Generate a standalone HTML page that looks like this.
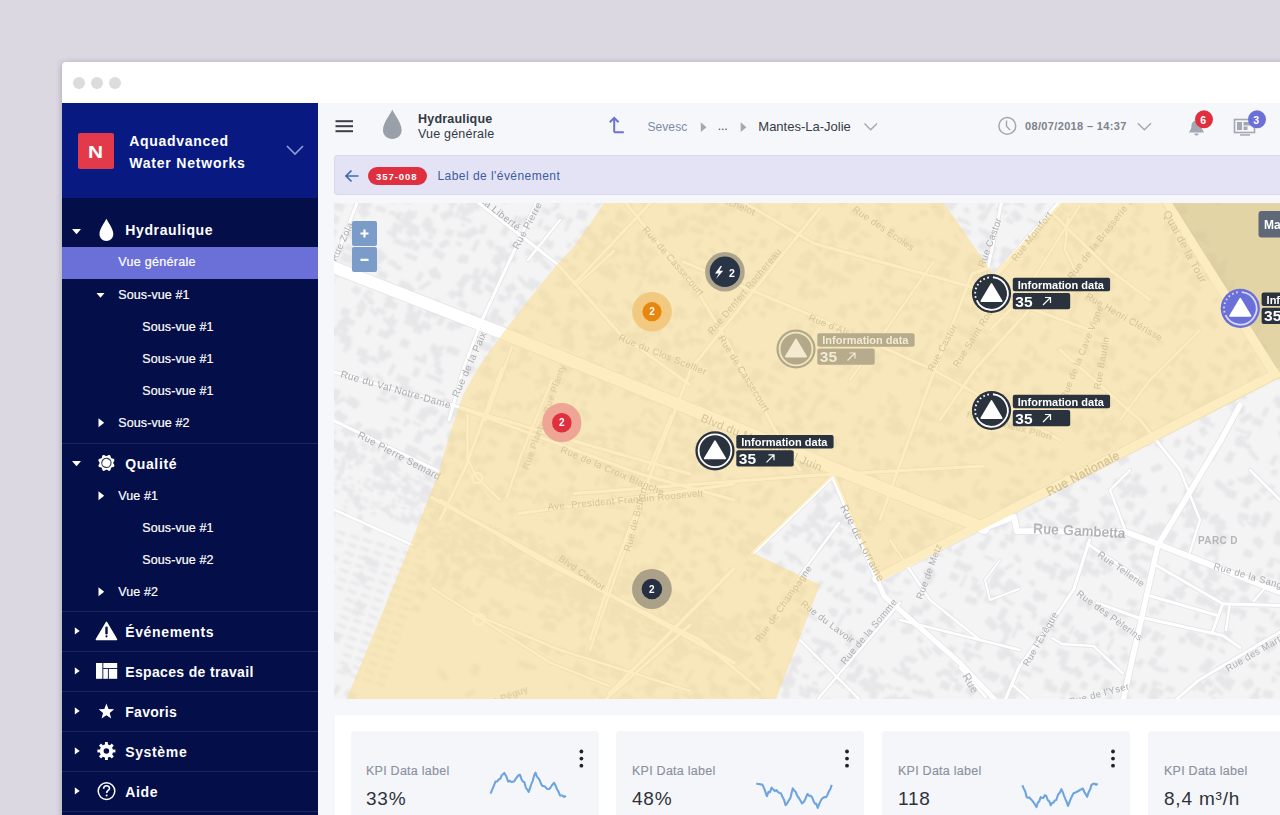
<!DOCTYPE html>
<html><head><meta charset="utf-8">
<style>
*{margin:0;padding:0;box-sizing:border-box}
html,body{width:1280px;height:815px;overflow:hidden;background:#dbd8e2;font-family:"Liberation Sans",sans-serif}
.abs{position:absolute}
#win{position:absolute;left:62px;top:62px;width:1240px;height:800px;background:#fff;border-radius:4px;box-shadow:0 1px 6px rgba(60,50,90,.35)}
.dot{position:absolute;top:15px;width:12px;height:12px;border-radius:50%;background:#dcdcdc}
#side{position:absolute;left:62px;top:103px;width:256px;height:712px;background:#040e48;color:#fff}
#sidehead{position:absolute;left:0;top:0;width:256px;height:95px;background:#081a82}
#main{position:absolute;left:318px;top:103px;width:962px;height:712px;background:#f5f7fa}
.t{position:absolute;white-space:nowrap;line-height:1}
.big{left:63.2px;font-size:14px;font-weight:bold;letter-spacing:.65px}
.sm{-webkit-text-stroke:.2px #fff;font-size:12.5px;letter-spacing:.1px;margin-top:1.2px}
.kc{top:627.5px;width:248px;height:120px;background:#f5f6f9;border-radius:4px}
.kl{top:661.7px;font-size:12.5px;color:#8a929f;letter-spacing:.25px;-webkit-text-stroke:.15px #8a929f}
.kv{top:685.8px;font-size:19px;color:#2e333b;letter-spacing:.8px}
.sep{position:absolute;left:0;width:256px;height:1px;background:#1c2660}
</style></head>
<body>
<div id="win">
  <div class="dot" style="left:11px"></div>
  <div class="dot" style="left:29px"></div>
  <div class="dot" style="left:47px"></div>
</div>
<div id="side">
  <div id="sidehead">
    <div class="abs" style="left:16px;top:30px;width:36px;height:36px;background:#e23a4b;border-radius:2px"></div>
    <div class="t" style="left:26px;top:42px;font-size:16.7px;font-weight:bold;transform:scaleX(1.25);transform-origin:0 0">N</div>
    <div class="t" style="left:67.2px;top:31px;font-size:14px;font-weight:bold;letter-spacing:.7px">Aquadvanced</div>
    <div class="t" style="left:67.2px;top:53px;font-size:14px;font-weight:bold;letter-spacing:.8px">Water Networks</div>
    <svg class="abs" style="left:224px;top:42px" width="18" height="11" viewBox="0 0 18 11"><path d="M1 1 L9 9 L17 1" fill="none" stroke="#8b9fd9" stroke-width="1.6"/></svg>
  </div>
  <div class="sep" style="top:340px"></div>
  <div class="abs" style="left:0;top:144px;width:256px;height:32px;background:#6b70d8"></div>
  <div class="t big" style="top:120.4px">Hydraulique</div>
  <div class="t sm" style="left:56.25px;top:152.92px;letter-spacing:.3px;margin-top:0">Vue générale</div>
  <div class="t sm" style="left:56.25px;top:184.92px">Sous-vue #1</div>
  <div class="t sm" style="left:80.3px;top:216.92px">Sous-vue #1</div>
  <div class="t sm" style="left:80.3px;top:248.92px">Sous-vue #1</div>
  <div class="t sm" style="left:80.3px;top:280.92px">Sous-vue #1</div>
  <div class="t sm" style="left:56.25px;top:312.92px">Sous-vue #2</div>
  <div class="t big" style="top:354.15px">Qualité</div>
  <div class="t sm" style="left:56.25px;top:385.42px">Vue #1</div>
  <div class="t sm" style="left:80.3px;top:417.42px">Sous-vue #1</div>
  <div class="t sm" style="left:80.3px;top:449.42px">Sous-vue #2</div>
  <div class="t sm" style="left:56.25px;top:481.42px">Vue #2</div>
  <div class="sep" style="top:508px"></div>
  <div class="t big" style="top:522.15px">Événements</div>
  <div class="sep" style="top:548px"></div>
  <div class="t big" style="top:562.15px;letter-spacing:.35px">Espaces de travail</div>
  <div class="sep" style="top:588px"></div>
  <div class="t big" style="top:602.15px;letter-spacing:.3px">Favoris</div>
  <div class="sep" style="top:628px"></div>
  <div class="t big" style="top:642.15px">Système</div>
  <div class="sep" style="top:668px"></div>
  <div class="t big" style="top:682.15px">Aide</div>
  <div class="sep" style="top:708px"></div>
  <svg class="abs" style="left:0;top:0" width="256" height="712" viewBox="62 103 256 712">
    <g fill="#fff">
      <!-- carets down -->
      <path d="M72 229 L81 229 L76.5 234.2 Z"/>
      <path d="M96.5 293 L104.5 293 L100.5 297.7 Z"/>
      <path d="M72 461 L81 461 L76.5 466.2 Z"/>
      <!-- carets right -->
      <path d="M98.5 418.3 L98.5 427.3 L104.2 422.8 Z"/>
      <path d="M98.5 491.3 L98.5 500.3 L104.2 495.8 Z"/>
      <path d="M98.5 587.3 L98.5 596.3 L104.2 591.8 Z"/>
      <path d="M74.8 627.2 L74.8 634.6 L79.7 630.9 Z"/>
      <path d="M74.8 667.2 L74.8 674.6 L79.7 670.9 Z"/>
      <path d="M74.8 707.2 L74.8 714.6 L79.7 710.9 Z"/>
      <path d="M74.8 747.2 L74.8 754.6 L79.7 750.9 Z"/>
      <path d="M74.8 787.2 L74.8 794.6 L79.7 790.9 Z"/>
      <!-- drop -->
      <path d="M106.4 218.8 C104 223.5 99.5 229 99.5 234 C99.5 238 102.6 241 106.4 241 C110.2 241 113.3 238 113.3 234 C113.3 229 108.8 223.5 106.4 218.8 Z"/>
      <!-- warning -->
      <path d="M106.5 622.3 L116.5 639.5 L96.4 639.5 Z" stroke="#fff" stroke-width="1.5" stroke-linejoin="round"/>
      <!-- layout -->
      <rect x="96" y="663" width="6.4" height="15.8"/>
      <rect x="103.3" y="663" width="13.9" height="5.1"/>
      <rect x="103.3" y="669" width="4.6" height="9.8"/>
      <rect x="108.8" y="669" width="8.4" height="9.8"/>
      <!-- star -->
      <path d="M106.40 703.60 L108.46 708.97 L114.20 709.27 L109.73 712.88 L111.22 718.43 L106.40 715.30 L101.58 718.43 L103.07 712.88 L98.60 709.27 L104.34 708.97 Z"/>
    </g>
    <path d="M106.5 627.8 L106.5 633.2" stroke="#040e48" stroke-width="2.4" stroke-linecap="round"/>
    <circle cx="106.5" cy="636.3" r="1.1" fill="#040e48"/>
    <!-- quality gear (hollow) -->
    <g transform="translate(106.4 462.9) rotate(22)">
      <path d="M0.00 -8.60 L0.73 -8.36 L1.36 -7.74 L1.88 -7.00 L2.34 -6.44 L2.90 -6.21 L3.63 -6.28 L4.51 -6.44 L5.39 -6.43 L6.08 -6.08 L6.43 -5.39 L6.44 -4.51 L6.28 -3.62 L6.21 -2.90 L6.44 -2.34 L7.00 -1.88 L7.74 -1.36 L8.36 -0.73 L8.60 0.00 L8.36 0.73 L7.74 1.36 L7.00 1.88 L6.44 2.34 L6.21 2.90 L6.28 3.62 L6.44 4.51 L6.43 5.39 L6.08 6.08 L5.39 6.43 L4.51 6.44 L3.63 6.28 L2.90 6.21 L2.34 6.44 L1.88 7.00 L1.36 7.74 L0.73 8.36 L0.00 8.60 L-0.73 8.36 L-1.36 7.74 L-1.88 7.00 L-2.34 6.44 L-2.90 6.21 L-3.62 6.28 L-4.51 6.44 L-5.39 6.43 L-6.08 6.08 L-6.43 5.39 L-6.44 4.51 L-6.28 3.63 L-6.21 2.90 L-6.44 2.34 L-7.00 1.88 L-7.74 1.36 L-8.36 0.73 L-8.60 0.00 L-8.36 -0.73 L-7.74 -1.36 L-7.00 -1.88 L-6.44 -2.34 L-6.21 -2.90 L-6.28 -3.63 L-6.44 -4.51 L-6.43 -5.39 L-6.08 -6.08 L-5.39 -6.43 L-4.51 -6.44 L-3.63 -6.28 L-2.90 -6.21 L-2.34 -6.44 L-1.88 -7.00 L-1.36 -7.74 L-0.73 -8.36 Z" fill="#fff"/>
      <circle r="4.6" fill="none" stroke="#3a3f58" stroke-width="1.2"/>
    </g>
    <!-- system cog -->
    <g transform="translate(106.4 751)">
      <circle r="4.9" fill="none" stroke="#fff" stroke-width="3.6"/>
      <g stroke="#fff" stroke-width="2.9">
        <path d="M0 -9 L0 9"/><path d="M-9 0 L9 0"/><path d="M-6.4 -6.4 L6.4 6.4"/><path d="M-6.4 6.4 L6.4 -6.4"/>
      </g>
      <circle r="2.8" fill="#040e48"/>
    </g>
    <!-- help -->
    <circle cx="106.5" cy="791.1" r="8.3" fill="none" stroke="#fff" stroke-width="1.5"/>
    <path d="M103.6 788.8 C103.6 786.9 104.9 785.7 106.6 785.7 C108.3 785.7 109.5 786.9 109.5 788.4 C109.5 790.4 106.6 790.6 106.6 792.9" fill="none" stroke="#fff" stroke-width="1.6"/>
    <circle cx="106.6" cy="795.6" r="1" fill="#fff"/>
  </svg>
</div>
<div id="main">
  <!-- toolbar (coords: page x-318, y-103) -->
  <svg class="abs" style="left:0;top:0" width="962" height="100" viewBox="318 103 962 100">
    <g fill="#3b3f47">
      <rect x="335.5" y="120.2" width="17.5" height="2"/>
      <rect x="335.5" y="125.2" width="17.5" height="2"/>
      <rect x="335.5" y="130.2" width="17.5" height="2"/>
    </g>
    <path d="M392.3 109.6 C390 115 383 123 383 130 C383 135.3 387.2 139 392.3 139 C397.4 139 401.6 135.3 401.6 130 C401.6 123 394.6 115 392.3 109.6 Z" fill="#9aa0aa"/>
    <!-- up arrow icon -->
    <path d="M614.2 132.3 L623.8 132.3 M609.8 122.3 L614.2 117.9 L618.6 122.3 M614.2 118 L614.2 132.3" fill="none" stroke="#6b70d8" stroke-width="2" stroke-linejoin="miter"/>
    <path d="M700.8 122.3 L706.5 127.2 L700.8 132 Z" fill="#a3a8b2"/>
    <path d="M740.7 122.3 L746.4 127.2 L740.7 132 Z" fill="#a3a8b2"/>
    <path d="M864.5 123.5 L870.7 129.8 L877 123.5" fill="none" stroke="#a3a8b2" stroke-width="1.4"/>
    <!-- clock -->
    <circle cx="1007.3" cy="125.9" r="8.4" fill="none" stroke="#a2a7b0" stroke-width="1.5"/>
    <path d="M1006.5 120.5 L1006.5 126.3 L1010 130" fill="none" stroke="#a2a7b0" stroke-width="1.4"/>
    <path d="M1137.8 123.3 L1144.4 129.8 L1151 123.3" fill="none" stroke="#a3a8b2" stroke-width="1.4"/>
    <!-- bell -->
    <path d="M1196.5 120.5 C1192.5 120.5 1191.3 124 1191.3 128 L1189 132.5 L1204 132.5 L1201.7 128 C1201.7 124 1200.5 120.5 1196.5 120.5 Z" fill="#a3a8b2"/>
    <path d="M1194.3 133.5 C1194.5 135 1195.5 135.5 1196.5 135.5 C1197.5 135.5 1198.5 135 1198.7 133.5 Z" fill="#a3a8b2"/>
    <circle cx="1204" cy="119.3" r="9" fill="#e0303f"/>
    <!-- monitor -->
    <rect x="1234.5" y="119.5" width="20" height="13" fill="none" stroke="#a3a8b2" stroke-width="1.6"/>
    <rect x="1237" y="122" width="5" height="8" fill="#a3a8b2"/>
    <rect x="1243.5" y="122" width="8.5" height="3.5" fill="#a3a8b2"/>
    <rect x="1243.5" y="126.5" width="4" height="3.5" fill="#a3a8b2"/>
    <rect x="1240" y="134.2" width="10" height="1.5" fill="#a3a8b2"/>
    <circle cx="1257" cy="119.3" r="9" fill="#6b70d8"/>
  </svg>
  <div class="t" style="left:100px;top:10.3px;font-size:12.5px;font-weight:bold;color:#333944;letter-spacing:.2px">Hydraulique</div>
  <div class="t" style="left:100px;top:24.8px;font-size:12.5px;color:#333944;letter-spacing:.2px">Vue générale</div>
  <div class="t" style="left:329.4px;top:18px;font-size:12px;color:#7e8ba3;letter-spacing:.1px">Sevesc</div>
  <div class="t" style="left:399.7px;top:17.4px;font-size:12px;color:#3f4550">...</div>
  <div class="t" style="left:440.3px;top:17.0px;font-size:13px;color:#353b46">Mantes-La-Jolie</div>
  <div class="t" style="left:707px;top:18.2px;font-size:11px;font-weight:bold;color:#7d828c;letter-spacing:.35px">08/07/2018 – 14:37</div>
  <div class="t" style="left:882.3px;top:11.9px;font-size:10.5px;font-weight:bold;color:#fff">6</div>
  <div class="t" style="left:935.3px;top:11.9px;font-size:10.5px;font-weight:bold;color:#fff">3</div>
  <!-- event bar -->
  <div class="abs" style="left:16px;top:52px;width:960px;height:40px;background:#e4e3f6;border:1px solid #d8d8ee;border-radius:3px"></div>
  <svg class="abs" style="left:0;top:52px" width="300" height="40" viewBox="318 155 300 40">
    <path d="M346.5 176 L358.5 176 M351.5 170.5 L346 176 L351.5 181.5" fill="none" stroke="#3d6bb5" stroke-width="1.7"/>
  </svg>
  <div class="abs" style="left:50px;top:64px;width:59px;height:18px;background:#e0303f;border-radius:9px"></div>
  <div class="t" style="left:58px;top:68.5px;font-size:9.5px;font-weight:bold;color:#fff;letter-spacing:.95px">357-008</div>
  <div class="t" style="left:119.5px;top:66.5px;font-size:12px;color:#3a5d9c;letter-spacing:.45px">Label de l'événement</div>
  <!--MAP--><div class="abs" style="left:16px;top:100px;width:946px;height:496px;overflow:hidden">
<svg width="946" height="496" viewBox="334 203 946 496" style="display:block">
<rect x="334" y="203" width="946" height="496" fill="#f4f4f5"/>
<defs><filter id="soft" x="-5%" y="-5%" width="110%" height="110%"><feGaussianBlur stdDeviation="0.8"/></filter><filter id="soft2" x="-5%" y="-5%" width="110%" height="110%"><feGaussianBlur stdDeviation="0.45"/></filter><filter id="soft3" x="-5%" y="-5%" width="110%" height="110%"><feGaussianBlur stdDeviation="0.3"/></filter></defs>
<g filter="url(#soft)">
<g fill="#e7e7e9"><rect x="637" y="271" width="11" height="3" transform="rotate(21 637 271)"/><rect x="677" y="223" width="9" height="3" transform="rotate(50 677 223)"/><rect x="728" y="317" width="10" height="3" transform="rotate(21 728 317)"/><rect x="1239" y="518" width="10" height="3" transform="rotate(50 1239 518)"/><rect x="372" y="307" width="10" height="4" transform="rotate(50 372 307)"/><rect x="463" y="254" width="7" height="8" transform="rotate(21 463 254)"/><rect x="424" y="488" width="6" height="4" transform="rotate(21 424 488)"/><rect x="869" y="512" width="9" height="6" transform="rotate(35 869 512)"/><rect x="774" y="669" width="8" height="4" transform="rotate(21 774 669)"/><rect x="999" y="319" width="10" height="6" transform="rotate(35 999 319)"/><rect x="1029" y="342" width="14" height="4" transform="rotate(50 1029 342)"/><rect x="483" y="370" width="13" height="6" transform="rotate(21 483 370)"/><rect x="1063" y="489" width="13" height="5" transform="rotate(35 1063 489)"/><rect x="898" y="492" width="9" height="8" transform="rotate(-62 898 492)"/><rect x="782" y="536" width="5" height="7" transform="rotate(-30 782 536)"/><rect x="599" y="392" width="11" height="3" transform="rotate(-30 599 392)"/><rect x="667" y="508" width="9" height="4" transform="rotate(-62 667 508)"/><rect x="449" y="321" width="8" height="8" transform="rotate(21 449 321)"/><rect x="485" y="400" width="7" height="4" transform="rotate(50 485 400)"/><rect x="1159" y="337" width="8" height="5" transform="rotate(50 1159 337)"/><rect x="494" y="313" width="6" height="6" transform="rotate(21 494 313)"/><rect x="578" y="195" width="8" height="5" transform="rotate(35 578 195)"/><rect x="1245" y="549" width="9" height="7" transform="rotate(21 1245 549)"/><rect x="765" y="642" width="14" height="7" transform="rotate(50 765 642)"/><rect x="709" y="396" width="9" height="5" transform="rotate(-62 709 396)"/><rect x="389" y="301" width="6" height="5" transform="rotate(21 389 301)"/><rect x="423" y="485" width="9" height="9" transform="rotate(21 423 485)"/><rect x="392" y="300" width="8" height="7" transform="rotate(35 392 300)"/><rect x="906" y="438" width="5" height="6" transform="rotate(-30 906 438)"/><rect x="788" y="354" width="5" height="7" transform="rotate(-62 788 354)"/><rect x="786" y="550" width="9" height="4" transform="rotate(35 786 550)"/><rect x="466" y="473" width="4" height="6" transform="rotate(21 466 473)"/><rect x="997" y="328" width="8" height="4" transform="rotate(-62 997 328)"/><rect x="838" y="595" width="7" height="4" transform="rotate(-62 838 595)"/><rect x="1103" y="615" width="11" height="4" transform="rotate(-30 1103 615)"/><rect x="667" y="208" width="4" height="5" transform="rotate(-62 667 208)"/><rect x="511" y="505" width="7" height="8" transform="rotate(35 511 505)"/><rect x="1247" y="381" width="6" height="4" transform="rotate(-62 1247 381)"/><rect x="650" y="442" width="14" height="7" transform="rotate(21 650 442)"/><rect x="787" y="530" width="12" height="4" transform="rotate(21 787 530)"/><rect x="1203" y="597" width="12" height="6" transform="rotate(21 1203 597)"/><rect x="743" y="521" width="5" height="9" transform="rotate(50 743 521)"/><rect x="771" y="577" width="5" height="4" transform="rotate(21 771 577)"/><rect x="351" y="498" width="9" height="7" transform="rotate(-30 351 498)"/><rect x="959" y="374" width="9" height="4" transform="rotate(21 959 374)"/><rect x="1096" y="568" width="5" height="7" transform="rotate(21 1096 568)"/><rect x="743" y="643" width="12" height="4" transform="rotate(-62 743 643)"/><rect x="530" y="452" width="12" height="5" transform="rotate(50 530 452)"/><rect x="1130" y="224" width="11" height="8" transform="rotate(50 1130 224)"/><rect x="1123" y="646" width="5" height="4" transform="rotate(21 1123 646)"/><rect x="1167" y="594" width="10" height="8" transform="rotate(21 1167 594)"/><rect x="490" y="437" width="11" height="6" transform="rotate(35 490 437)"/><rect x="983" y="467" width="9" height="8" transform="rotate(21 983 467)"/><rect x="564" y="336" width="12" height="6" transform="rotate(21 564 336)"/><rect x="1058" y="664" width="8" height="7" transform="rotate(-62 1058 664)"/><rect x="993" y="426" width="9" height="6" transform="rotate(-62 993 426)"/><rect x="999" y="645" width="13" height="5" transform="rotate(-62 999 645)"/><rect x="1135" y="264" width="5" height="6" transform="rotate(21 1135 264)"/><rect x="972" y="414" width="6" height="5" transform="rotate(21 972 414)"/><rect x="1191" y="273" width="11" height="7" transform="rotate(21 1191 273)"/><rect x="569" y="264" width="9" height="7" transform="rotate(21 569 264)"/><rect x="709" y="444" width="14" height="8" transform="rotate(21 709 444)"/><rect x="1006" y="706" width="8" height="6" transform="rotate(35 1006 706)"/><rect x="632" y="566" width="4" height="6" transform="rotate(-30 632 566)"/><rect x="1003" y="391" width="9" height="5" transform="rotate(21 1003 391)"/><rect x="1171" y="236" width="7" height="8" transform="rotate(21 1171 236)"/><rect x="585" y="260" width="8" height="8" transform="rotate(-62 585 260)"/><rect x="716" y="470" width="9" height="6" transform="rotate(35 716 470)"/><rect x="410" y="223" width="11" height="6" transform="rotate(21 410 223)"/><rect x="584" y="202" width="5" height="5" transform="rotate(-62 584 202)"/><rect x="652" y="478" width="13" height="5" transform="rotate(21 652 478)"/><rect x="366" y="559" width="14" height="5" transform="rotate(21 366 559)"/><rect x="519" y="354" width="7" height="8" transform="rotate(-62 519 354)"/><rect x="755" y="540" width="7" height="8" transform="rotate(-62 755 540)"/><rect x="360" y="203" width="9" height="9" transform="rotate(-30 360 203)"/><rect x="561" y="424" width="11" height="7" transform="rotate(-30 561 424)"/><rect x="851" y="652" width="14" height="5" transform="rotate(-62 851 652)"/><rect x="1273" y="370" width="12" height="7" transform="rotate(21 1273 370)"/><rect x="715" y="372" width="5" height="4" transform="rotate(21 715 372)"/><rect x="928" y="647" width="8" height="3" transform="rotate(50 928 647)"/><rect x="1165" y="539" width="7" height="4" transform="rotate(-62 1165 539)"/><rect x="368" y="289" width="7" height="3" transform="rotate(35 368 289)"/><rect x="1253" y="695" width="9" height="4" transform="rotate(-62 1253 695)"/><rect x="534" y="287" width="7" height="4" transform="rotate(-62 534 287)"/><rect x="810" y="297" width="9" height="3" transform="rotate(-62 810 297)"/><rect x="1113" y="267" width="10" height="5" transform="rotate(-62 1113 267)"/><rect x="618" y="313" width="10" height="6" transform="rotate(21 618 313)"/><rect x="959" y="562" width="13" height="5" transform="rotate(35 959 562)"/><rect x="1020" y="448" width="7" height="7" transform="rotate(21 1020 448)"/><rect x="1033" y="612" width="5" height="6" transform="rotate(21 1033 612)"/><rect x="1122" y="494" width="13" height="7" transform="rotate(-62 1122 494)"/><rect x="406" y="215" width="10" height="9" transform="rotate(50 406 215)"/><rect x="1131" y="481" width="10" height="7" transform="rotate(-62 1131 481)"/><rect x="797" y="195" width="12" height="7" transform="rotate(21 797 195)"/><rect x="961" y="227" width="11" height="5" transform="rotate(21 961 227)"/><rect x="1141" y="314" width="12" height="4" transform="rotate(-30 1141 314)"/><rect x="801" y="390" width="9" height="7" transform="rotate(21 801 390)"/><rect x="920" y="525" width="5" height="4" transform="rotate(-62 920 525)"/><rect x="953" y="551" width="10" height="4" transform="rotate(-30 953 551)"/><rect x="383" y="332" width="11" height="7" transform="rotate(-30 383 332)"/><rect x="605" y="460" width="9" height="6" transform="rotate(21 605 460)"/><rect x="1284" y="476" width="7" height="4" transform="rotate(-30 1284 476)"/><rect x="341" y="430" width="12" height="9" transform="rotate(-30 341 430)"/><rect x="1284" y="393" width="13" height="9" transform="rotate(21 1284 393)"/><rect x="886" y="266" width="9" height="9" transform="rotate(21 886 266)"/><rect x="907" y="519" width="7" height="4" transform="rotate(35 907 519)"/><rect x="348" y="195" width="9" height="6" transform="rotate(-62 348 195)"/><rect x="1026" y="408" width="8" height="4" transform="rotate(35 1026 408)"/><rect x="326" y="580" width="12" height="4" transform="rotate(-62 326 580)"/><rect x="1013" y="658" width="7" height="5" transform="rotate(50 1013 658)"/><rect x="701" y="642" width="5" height="9" transform="rotate(-62 701 642)"/><rect x="1149" y="338" width="5" height="7" transform="rotate(21 1149 338)"/><rect x="565" y="330" width="9" height="4" transform="rotate(35 565 330)"/><rect x="1082" y="414" width="4" height="8" transform="rotate(50 1082 414)"/><rect x="1206" y="678" width="9" height="7" transform="rotate(21 1206 678)"/><rect x="1226" y="405" width="10" height="4" transform="rotate(-62 1226 405)"/><rect x="793" y="664" width="10" height="4" transform="rotate(50 793 664)"/><rect x="656" y="347" width="11" height="9" transform="rotate(-62 656 347)"/><rect x="716" y="316" width="9" height="7" transform="rotate(21 716 316)"/><rect x="486" y="276" width="6" height="8" transform="rotate(-30 486 276)"/><rect x="856" y="427" width="7" height="8" transform="rotate(50 856 427)"/><rect x="459" y="292" width="5" height="5" transform="rotate(21 459 292)"/><rect x="632" y="383" width="12" height="4" transform="rotate(21 632 383)"/><rect x="1048" y="406" width="8" height="6" transform="rotate(50 1048 406)"/><rect x="585" y="581" width="9" height="6" transform="rotate(35 585 581)"/><rect x="446" y="453" width="10" height="8" transform="rotate(-62 446 453)"/><rect x="948" y="416" width="7" height="8" transform="rotate(21 948 416)"/><rect x="447" y="412" width="12" height="8" transform="rotate(-30 447 412)"/><rect x="324" y="395" width="13" height="8" transform="rotate(-30 324 395)"/><rect x="429" y="273" width="9" height="7" transform="rotate(-30 429 273)"/><rect x="445" y="487" width="4" height="7" transform="rotate(21 445 487)"/><rect x="929" y="466" width="8" height="8" transform="rotate(21 929 466)"/><rect x="392" y="464" width="10" height="5" transform="rotate(-62 392 464)"/><rect x="1088" y="194" width="9" height="9" transform="rotate(-62 1088 194)"/><rect x="1250" y="526" width="13" height="6" transform="rotate(-62 1250 526)"/><rect x="852" y="208" width="8" height="7" transform="rotate(21 852 208)"/><rect x="345" y="450" width="11" height="6" transform="rotate(-62 345 450)"/><rect x="544" y="412" width="8" height="6" transform="rotate(35 544 412)"/><rect x="1018" y="380" width="8" height="3" transform="rotate(-62 1018 380)"/><rect x="1038" y="454" width="6" height="9" transform="rotate(-62 1038 454)"/><rect x="1064" y="293" width="9" height="5" transform="rotate(-62 1064 293)"/><rect x="429" y="515" width="10" height="8" transform="rotate(-30 429 515)"/><rect x="727" y="536" width="13" height="4" transform="rotate(50 727 536)"/><rect x="377" y="205" width="10" height="5" transform="rotate(21 377 205)"/><rect x="502" y="425" width="11" height="5" transform="rotate(21 502 425)"/><rect x="1288" y="674" width="7" height="4" transform="rotate(-30 1288 674)"/><rect x="685" y="364" width="6" height="3" transform="rotate(-62 685 364)"/><rect x="402" y="410" width="13" height="6" transform="rotate(-62 402 410)"/><rect x="691" y="590" width="7" height="8" transform="rotate(21 691 590)"/><rect x="372" y="437" width="8" height="9" transform="rotate(-62 372 437)"/><rect x="636" y="573" width="9" height="7" transform="rotate(-62 636 573)"/><rect x="1108" y="589" width="4" height="3" transform="rotate(21 1108 589)"/><rect x="1100" y="225" width="6" height="3" transform="rotate(35 1100 225)"/><rect x="675" y="366" width="14" height="3" transform="rotate(35 675 366)"/><rect x="1217" y="346" width="11" height="7" transform="rotate(21 1217 346)"/><rect x="347" y="314" width="9" height="9" transform="rotate(50 347 314)"/><rect x="1087" y="664" width="12" height="4" transform="rotate(-30 1087 664)"/><rect x="501" y="607" width="11" height="8" transform="rotate(21 501 607)"/><rect x="911" y="362" width="7" height="5" transform="rotate(21 911 362)"/><rect x="818" y="395" width="6" height="5" transform="rotate(21 818 395)"/><rect x="789" y="474" width="6" height="6" transform="rotate(21 789 474)"/><rect x="405" y="243" width="9" height="7" transform="rotate(-30 405 243)"/><rect x="491" y="262" width="9" height="8" transform="rotate(-62 491 262)"/><rect x="1047" y="630" width="11" height="4" transform="rotate(-62 1047 630)"/><rect x="608" y="486" width="8" height="7" transform="rotate(-62 608 486)"/><rect x="748" y="289" width="6" height="5" transform="rotate(-62 748 289)"/><rect x="639" y="397" width="14" height="6" transform="rotate(-62 639 397)"/><rect x="952" y="245" width="9" height="3" transform="rotate(21 952 245)"/><rect x="783" y="616" width="12" height="8" transform="rotate(21 783 616)"/><rect x="1171" y="313" width="5" height="7" transform="rotate(-62 1171 313)"/><rect x="1223" y="385" width="13" height="6" transform="rotate(-62 1223 385)"/><rect x="1073" y="536" width="4" height="7" transform="rotate(35 1073 536)"/><rect x="534" y="383" width="5" height="4" transform="rotate(-62 534 383)"/><rect x="361" y="571" width="12" height="8" transform="rotate(50 361 571)"/><rect x="979" y="289" width="7" height="4" transform="rotate(-30 979 289)"/><rect x="853" y="226" width="5" height="5" transform="rotate(21 853 226)"/><rect x="941" y="240" width="6" height="7" transform="rotate(50 941 240)"/><rect x="1279" y="538" width="8" height="3" transform="rotate(35 1279 538)"/><rect x="724" y="202" width="12" height="8" transform="rotate(-62 724 202)"/><rect x="701" y="402" width="13" height="6" transform="rotate(21 701 402)"/><rect x="733" y="616" width="8" height="8" transform="rotate(-30 733 616)"/><rect x="1071" y="260" width="5" height="4" transform="rotate(50 1071 260)"/><rect x="410" y="514" width="8" height="6" transform="rotate(21 410 514)"/><rect x="660" y="276" width="6" height="3" transform="rotate(50 660 276)"/><rect x="798" y="608" width="14" height="4" transform="rotate(21 798 608)"/><rect x="1133" y="215" width="13" height="5" transform="rotate(50 1133 215)"/><rect x="1185" y="523" width="13" height="7" transform="rotate(-62 1185 523)"/><rect x="1125" y="287" width="6" height="5" transform="rotate(21 1125 287)"/><rect x="695" y="256" width="6" height="7" transform="rotate(-62 695 256)"/><rect x="364" y="483" width="12" height="3" transform="rotate(35 364 483)"/><rect x="438" y="502" width="10" height="7" transform="rotate(-62 438 502)"/><rect x="951" y="352" width="6" height="5" transform="rotate(35 951 352)"/><rect x="756" y="419" width="4" height="7" transform="rotate(-30 756 419)"/><rect x="773" y="424" width="10" height="8" transform="rotate(21 773 424)"/><rect x="1107" y="400" width="5" height="5" transform="rotate(35 1107 400)"/><rect x="413" y="421" width="9" height="3" transform="rotate(21 413 421)"/><rect x="818" y="221" width="9" height="5" transform="rotate(21 818 221)"/><rect x="349" y="227" width="10" height="7" transform="rotate(21 349 227)"/><rect x="1248" y="666" width="6" height="8" transform="rotate(-62 1248 666)"/><rect x="387" y="374" width="12" height="4" transform="rotate(-62 387 374)"/><rect x="1198" y="429" width="7" height="9" transform="rotate(-30 1198 429)"/><rect x="525" y="329" width="9" height="5" transform="rotate(21 525 329)"/><rect x="516" y="401" width="10" height="5" transform="rotate(35 516 401)"/><rect x="1189" y="280" width="12" height="4" transform="rotate(21 1189 280)"/><rect x="939" y="379" width="13" height="6" transform="rotate(21 939 379)"/><rect x="567" y="469" width="13" height="7" transform="rotate(35 567 469)"/><rect x="580" y="704" width="10" height="5" transform="rotate(21 580 704)"/><rect x="751" y="284" width="11" height="3" transform="rotate(-62 751 284)"/><rect x="624" y="691" width="13" height="9" transform="rotate(35 624 691)"/><rect x="1032" y="579" width="6" height="5" transform="rotate(50 1032 579)"/><rect x="727" y="381" width="4" height="6" transform="rotate(21 727 381)"/><rect x="346" y="194" width="8" height="4" transform="rotate(35 346 194)"/><rect x="840" y="406" width="7" height="4" transform="rotate(35 840 406)"/><rect x="927" y="438" width="5" height="9" transform="rotate(-62 927 438)"/><rect x="1007" y="426" width="5" height="4" transform="rotate(-62 1007 426)"/><rect x="712" y="329" width="4" height="7" transform="rotate(35 712 329)"/><rect x="899" y="491" width="10" height="6" transform="rotate(-30 899 491)"/><rect x="837" y="402" width="6" height="3" transform="rotate(21 837 402)"/><rect x="336" y="477" width="13" height="4" transform="rotate(-62 336 477)"/><rect x="825" y="525" width="10" height="5" transform="rotate(21 825 525)"/><rect x="815" y="226" width="10" height="9" transform="rotate(-30 815 226)"/><rect x="1015" y="196" width="12" height="7" transform="rotate(-30 1015 196)"/><rect x="946" y="257" width="13" height="9" transform="rotate(-62 946 257)"/><rect x="1011" y="330" width="10" height="6" transform="rotate(-62 1011 330)"/><rect x="610" y="672" width="13" height="4" transform="rotate(21 610 672)"/><rect x="520" y="275" width="13" height="4" transform="rotate(50 520 275)"/><rect x="641" y="316" width="13" height="7" transform="rotate(-30 641 316)"/><rect x="780" y="467" width="4" height="3" transform="rotate(-62 780 467)"/><rect x="875" y="352" width="6" height="7" transform="rotate(21 875 352)"/><rect x="870" y="282" width="4" height="4" transform="rotate(21 870 282)"/><rect x="657" y="266" width="4" height="3" transform="rotate(21 657 266)"/><rect x="997" y="573" width="5" height="7" transform="rotate(35 997 573)"/><rect x="966" y="647" width="12" height="7" transform="rotate(50 966 647)"/><rect x="427" y="299" width="5" height="3" transform="rotate(21 427 299)"/><rect x="1121" y="519" width="7" height="4" transform="rotate(21 1121 519)"/><rect x="1089" y="527" width="7" height="5" transform="rotate(-62 1089 527)"/><rect x="344" y="325" width="7" height="7" transform="rotate(35 344 325)"/><rect x="1203" y="590" width="10" height="6" transform="rotate(-62 1203 590)"/><rect x="921" y="209" width="8" height="6" transform="rotate(21 921 209)"/><rect x="659" y="557" width="9" height="4" transform="rotate(21 659 557)"/><rect x="879" y="341" width="8" height="6" transform="rotate(-62 879 341)"/><rect x="1060" y="698" width="4" height="6" transform="rotate(-30 1060 698)"/><rect x="996" y="619" width="14" height="7" transform="rotate(-62 996 619)"/><rect x="882" y="275" width="12" height="9" transform="rotate(-62 882 275)"/><rect x="805" y="250" width="10" height="3" transform="rotate(21 805 250)"/><rect x="931" y="376" width="8" height="5" transform="rotate(21 931 376)"/><rect x="732" y="526" width="8" height="5" transform="rotate(50 732 526)"/><rect x="1195" y="452" width="8" height="8" transform="rotate(-62 1195 452)"/><rect x="898" y="549" width="10" height="3" transform="rotate(35 898 549)"/><rect x="828" y="641" width="9" height="6" transform="rotate(35 828 641)"/><rect x="488" y="419" width="12" height="6" transform="rotate(21 488 419)"/><rect x="647" y="525" width="11" height="6" transform="rotate(-62 647 525)"/><rect x="615" y="556" width="12" height="4" transform="rotate(21 615 556)"/><rect x="1266" y="566" width="10" height="5" transform="rotate(-62 1266 566)"/><rect x="641" y="291" width="14" height="7" transform="rotate(21 641 291)"/><rect x="483" y="532" width="6" height="4" transform="rotate(21 483 532)"/><rect x="1092" y="571" width="8" height="4" transform="rotate(21 1092 571)"/><rect x="595" y="650" width="9" height="3" transform="rotate(50 595 650)"/><rect x="994" y="451" width="10" height="6" transform="rotate(21 994 451)"/><rect x="572" y="574" width="4" height="4" transform="rotate(50 572 574)"/><rect x="1001" y="496" width="10" height="8" transform="rotate(-62 1001 496)"/><rect x="980" y="524" width="9" height="5" transform="rotate(21 980 524)"/><rect x="1188" y="318" width="8" height="7" transform="rotate(21 1188 318)"/><rect x="566" y="412" width="9" height="7" transform="rotate(50 566 412)"/><rect x="825" y="534" width="13" height="8" transform="rotate(35 825 534)"/><rect x="1076" y="394" width="9" height="9" transform="rotate(21 1076 394)"/><rect x="567" y="305" width="11" height="9" transform="rotate(-62 567 305)"/><rect x="826" y="245" width="10" height="6" transform="rotate(-30 826 245)"/><rect x="819" y="523" width="12" height="6" transform="rotate(50 819 523)"/><rect x="1041" y="429" width="14" height="4" transform="rotate(21 1041 429)"/><rect x="1028" y="510" width="10" height="5" transform="rotate(50 1028 510)"/><rect x="710" y="200" width="8" height="6" transform="rotate(35 710 200)"/><rect x="884" y="249" width="7" height="5" transform="rotate(-62 884 249)"/><rect x="1284" y="689" width="9" height="4" transform="rotate(21 1284 689)"/><rect x="1106" y="520" width="9" height="6" transform="rotate(-62 1106 520)"/><rect x="1111" y="268" width="11" height="8" transform="rotate(50 1111 268)"/><rect x="776" y="345" width="9" height="4" transform="rotate(-30 776 345)"/><rect x="667" y="632" width="7" height="5" transform="rotate(-62 667 632)"/><rect x="1273" y="543" width="9" height="8" transform="rotate(-62 1273 543)"/><rect x="670" y="531" width="7" height="6" transform="rotate(21 670 531)"/><rect x="961" y="380" width="13" height="8" transform="rotate(21 961 380)"/><rect x="406" y="484" width="7" height="9" transform="rotate(35 406 484)"/><rect x="936" y="201" width="4" height="9" transform="rotate(-62 936 201)"/><rect x="566" y="245" width="5" height="4" transform="rotate(-30 566 245)"/><rect x="659" y="272" width="13" height="8" transform="rotate(21 659 272)"/><rect x="913" y="548" width="14" height="4" transform="rotate(-62 913 548)"/><rect x="515" y="550" width="9" height="7" transform="rotate(-30 515 550)"/><rect x="972" y="253" width="5" height="6" transform="rotate(21 972 253)"/><rect x="781" y="481" width="9" height="8" transform="rotate(-30 781 481)"/><rect x="562" y="278" width="10" height="7" transform="rotate(21 562 278)"/><rect x="1136" y="434" width="10" height="7" transform="rotate(-30 1136 434)"/><rect x="686" y="409" width="14" height="3" transform="rotate(35 686 409)"/><rect x="938" y="208" width="10" height="7" transform="rotate(35 938 208)"/><rect x="1105" y="241" width="9" height="8" transform="rotate(21 1105 241)"/><rect x="651" y="638" width="8" height="6" transform="rotate(-62 651 638)"/><rect x="598" y="369" width="7" height="3" transform="rotate(-62 598 369)"/><rect x="607" y="620" width="8" height="6" transform="rotate(-62 607 620)"/><rect x="1167" y="371" width="6" height="6" transform="rotate(21 1167 371)"/><rect x="644" y="357" width="7" height="7" transform="rotate(21 644 357)"/><rect x="1082" y="214" width="11" height="8" transform="rotate(21 1082 214)"/><rect x="709" y="249" width="4" height="8" transform="rotate(-30 709 249)"/><rect x="912" y="533" width="12" height="8" transform="rotate(50 912 533)"/><rect x="920" y="516" width="11" height="7" transform="rotate(21 920 516)"/><rect x="529" y="537" width="9" height="8" transform="rotate(21 529 537)"/><rect x="965" y="642" width="8" height="4" transform="rotate(21 965 642)"/><rect x="680" y="617" width="12" height="6" transform="rotate(-62 680 617)"/><rect x="1157" y="288" width="4" height="3" transform="rotate(21 1157 288)"/><rect x="805" y="462" width="12" height="8" transform="rotate(50 805 462)"/><rect x="880" y="667" width="8" height="3" transform="rotate(50 880 667)"/><rect x="898" y="705" width="11" height="4" transform="rotate(50 898 705)"/><rect x="854" y="236" width="9" height="8" transform="rotate(21 854 236)"/><rect x="736" y="198" width="11" height="9" transform="rotate(21 736 198)"/><rect x="535" y="256" width="9" height="5" transform="rotate(-62 535 256)"/><rect x="759" y="577" width="13" height="5" transform="rotate(21 759 577)"/><rect x="1029" y="236" width="10" height="7" transform="rotate(-30 1029 236)"/><rect x="971" y="652" width="13" height="3" transform="rotate(21 971 652)"/><rect x="335" y="201" width="11" height="8" transform="rotate(21 335 201)"/><rect x="700" y="354" width="10" height="9" transform="rotate(-30 700 354)"/><rect x="912" y="356" width="13" height="7" transform="rotate(-30 912 356)"/><rect x="978" y="268" width="12" height="5" transform="rotate(21 978 268)"/><rect x="932" y="409" width="8" height="8" transform="rotate(-62 932 409)"/><rect x="1082" y="485" width="7" height="3" transform="rotate(35 1082 485)"/><rect x="1164" y="567" width="4" height="4" transform="rotate(-62 1164 567)"/><rect x="889" y="697" width="6" height="5" transform="rotate(50 889 697)"/><rect x="905" y="655" width="12" height="5" transform="rotate(21 905 655)"/><rect x="635" y="331" width="6" height="9" transform="rotate(21 635 331)"/><rect x="603" y="266" width="13" height="9" transform="rotate(21 603 266)"/><rect x="589" y="632" width="12" height="7" transform="rotate(-30 589 632)"/><rect x="659" y="237" width="10" height="8" transform="rotate(-62 659 237)"/><rect x="1085" y="566" width="14" height="5" transform="rotate(21 1085 566)"/><rect x="979" y="433" width="6" height="5" transform="rotate(21 979 433)"/><rect x="1089" y="430" width="5" height="8" transform="rotate(21 1089 430)"/><rect x="549" y="492" width="13" height="8" transform="rotate(35 549 492)"/><rect x="784" y="497" width="6" height="4" transform="rotate(21 784 497)"/><rect x="1102" y="343" width="10" height="5" transform="rotate(21 1102 343)"/><rect x="1161" y="385" width="9" height="3" transform="rotate(35 1161 385)"/><rect x="901" y="371" width="9" height="3" transform="rotate(21 901 371)"/><rect x="891" y="303" width="13" height="5" transform="rotate(21 891 303)"/><rect x="1238" y="589" width="12" height="9" transform="rotate(-62 1238 589)"/><rect x="1139" y="368" width="14" height="5" transform="rotate(21 1139 368)"/><rect x="373" y="481" width="13" height="6" transform="rotate(21 373 481)"/><rect x="1158" y="523" width="13" height="7" transform="rotate(21 1158 523)"/><rect x="572" y="484" width="10" height="9" transform="rotate(50 572 484)"/><rect x="551" y="565" width="6" height="9" transform="rotate(35 551 565)"/><rect x="381" y="478" width="4" height="9" transform="rotate(-62 381 478)"/><rect x="1084" y="559" width="10" height="9" transform="rotate(21 1084 559)"/><rect x="422" y="357" width="4" height="4" transform="rotate(-62 422 357)"/><rect x="894" y="421" width="11" height="6" transform="rotate(35 894 421)"/><rect x="572" y="257" width="9" height="4" transform="rotate(-62 572 257)"/><rect x="1104" y="665" width="13" height="6" transform="rotate(-62 1104 665)"/><rect x="1096" y="274" width="12" height="3" transform="rotate(35 1096 274)"/><rect x="1182" y="265" width="8" height="4" transform="rotate(50 1182 265)"/><rect x="1138" y="517" width="9" height="5" transform="rotate(-62 1138 517)"/><rect x="785" y="517" width="5" height="4" transform="rotate(21 785 517)"/><rect x="498" y="426" width="13" height="6" transform="rotate(21 498 426)"/><rect x="581" y="405" width="6" height="5" transform="rotate(-62 581 405)"/><rect x="647" y="280" width="9" height="5" transform="rotate(-30 647 280)"/><rect x="1189" y="538" width="6" height="6" transform="rotate(-62 1189 538)"/><rect x="439" y="583" width="14" height="6" transform="rotate(-62 439 583)"/><rect x="1288" y="670" width="5" height="5" transform="rotate(21 1288 670)"/><rect x="1104" y="369" width="5" height="3" transform="rotate(-62 1104 369)"/><rect x="504" y="418" width="13" height="4" transform="rotate(21 504 418)"/><rect x="457" y="286" width="12" height="7" transform="rotate(-62 457 286)"/><rect x="904" y="621" width="13" height="7" transform="rotate(-62 904 621)"/><rect x="493" y="264" width="11" height="7" transform="rotate(-62 493 264)"/><rect x="887" y="297" width="5" height="7" transform="rotate(50 887 297)"/><rect x="1136" y="666" width="9" height="5" transform="rotate(-62 1136 666)"/><rect x="1137" y="639" width="9" height="3" transform="rotate(-30 1137 639)"/><rect x="453" y="536" width="6" height="6" transform="rotate(35 453 536)"/><rect x="1153" y="377" width="13" height="9" transform="rotate(21 1153 377)"/><rect x="441" y="562" width="12" height="8" transform="rotate(35 441 562)"/><rect x="1077" y="641" width="10" height="8" transform="rotate(-62 1077 641)"/><rect x="1167" y="685" width="9" height="6" transform="rotate(21 1167 685)"/><rect x="500" y="246" width="7" height="8" transform="rotate(21 500 246)"/><rect x="577" y="625" width="10" height="6" transform="rotate(-62 577 625)"/><rect x="1003" y="246" width="13" height="7" transform="rotate(21 1003 246)"/><rect x="588" y="433" width="10" height="8" transform="rotate(21 588 433)"/><rect x="442" y="402" width="5" height="7" transform="rotate(-62 442 402)"/><rect x="466" y="489" width="11" height="4" transform="rotate(21 466 489)"/><rect x="1230" y="394" width="8" height="8" transform="rotate(21 1230 394)"/><rect x="706" y="679" width="12" height="5" transform="rotate(-62 706 679)"/><rect x="1134" y="562" width="12" height="6" transform="rotate(35 1134 562)"/><rect x="1111" y="630" width="5" height="6" transform="rotate(35 1111 630)"/><rect x="565" y="411" width="10" height="5" transform="rotate(21 565 411)"/><rect x="391" y="416" width="9" height="3" transform="rotate(21 391 416)"/><rect x="730" y="398" width="14" height="6" transform="rotate(21 730 398)"/><rect x="1106" y="649" width="13" height="3" transform="rotate(-62 1106 649)"/><rect x="1211" y="515" width="10" height="8" transform="rotate(21 1211 515)"/><rect x="924" y="322" width="9" height="6" transform="rotate(21 924 322)"/><rect x="602" y="351" width="10" height="4" transform="rotate(-62 602 351)"/><rect x="406" y="498" width="13" height="6" transform="rotate(21 406 498)"/><rect x="1179" y="665" width="10" height="5" transform="rotate(21 1179 665)"/><rect x="1039" y="341" width="9" height="7" transform="rotate(-62 1039 341)"/><rect x="952" y="297" width="11" height="6" transform="rotate(-62 952 297)"/><rect x="916" y="435" width="7" height="4" transform="rotate(-62 916 435)"/><rect x="506" y="475" width="14" height="5" transform="rotate(35 506 475)"/><rect x="638" y="332" width="13" height="4" transform="rotate(21 638 332)"/><rect x="1070" y="275" width="5" height="8" transform="rotate(-30 1070 275)"/><rect x="959" y="460" width="12" height="5" transform="rotate(21 959 460)"/><rect x="827" y="703" width="11" height="9" transform="rotate(50 827 703)"/><rect x="650" y="375" width="11" height="7" transform="rotate(-62 650 375)"/><rect x="1117" y="460" width="11" height="7" transform="rotate(-30 1117 460)"/><rect x="584" y="518" width="10" height="7" transform="rotate(50 584 518)"/><rect x="1165" y="195" width="12" height="7" transform="rotate(-30 1165 195)"/><rect x="708" y="705" width="5" height="8" transform="rotate(-62 708 705)"/><rect x="1167" y="506" width="8" height="6" transform="rotate(-30 1167 506)"/><rect x="602" y="375" width="8" height="6" transform="rotate(50 602 375)"/><rect x="950" y="196" width="11" height="9" transform="rotate(50 950 196)"/><rect x="753" y="288" width="7" height="4" transform="rotate(50 753 288)"/><rect x="886" y="238" width="13" height="5" transform="rotate(-62 886 238)"/><rect x="736" y="663" width="4" height="3" transform="rotate(-30 736 663)"/><rect x="614" y="470" width="7" height="7" transform="rotate(50 614 470)"/><rect x="824" y="460" width="11" height="5" transform="rotate(35 824 460)"/><rect x="334" y="228" width="6" height="5" transform="rotate(50 334 228)"/><rect x="950" y="672" width="6" height="4" transform="rotate(50 950 672)"/><rect x="794" y="420" width="10" height="9" transform="rotate(35 794 420)"/><rect x="992" y="578" width="5" height="5" transform="rotate(35 992 578)"/><rect x="1269" y="619" width="9" height="4" transform="rotate(-62 1269 619)"/><rect x="990" y="616" width="14" height="8" transform="rotate(50 990 616)"/><rect x="934" y="463" width="12" height="4" transform="rotate(-62 934 463)"/><rect x="722" y="224" width="10" height="4" transform="rotate(21 722 224)"/><rect x="992" y="199" width="4" height="7" transform="rotate(21 992 199)"/><rect x="1210" y="398" width="5" height="3" transform="rotate(21 1210 398)"/><rect x="514" y="450" width="10" height="5" transform="rotate(21 514 450)"/><rect x="879" y="405" width="5" height="4" transform="rotate(21 879 405)"/><rect x="352" y="232" width="13" height="6" transform="rotate(-30 352 232)"/><rect x="916" y="609" width="5" height="3" transform="rotate(35 916 609)"/><rect x="463" y="316" width="7" height="3" transform="rotate(21 463 316)"/><rect x="1154" y="682" width="5" height="4" transform="rotate(50 1154 682)"/><rect x="343" y="307" width="8" height="8" transform="rotate(21 343 307)"/><rect x="749" y="513" width="6" height="3" transform="rotate(21 749 513)"/><rect x="628" y="657" width="12" height="5" transform="rotate(-62 628 657)"/><rect x="1251" y="449" width="13" height="4" transform="rotate(50 1251 449)"/><rect x="976" y="495" width="8" height="5" transform="rotate(-30 976 495)"/><rect x="488" y="389" width="4" height="8" transform="rotate(50 488 389)"/><rect x="866" y="252" width="9" height="5" transform="rotate(50 866 252)"/><rect x="953" y="689" width="8" height="8" transform="rotate(-62 953 689)"/><rect x="698" y="434" width="7" height="6" transform="rotate(-62 698 434)"/><rect x="966" y="369" width="6" height="7" transform="rotate(21 966 369)"/><rect x="514" y="474" width="12" height="6" transform="rotate(-30 514 474)"/><rect x="1132" y="608" width="6" height="5" transform="rotate(50 1132 608)"/><rect x="688" y="688" width="6" height="9" transform="rotate(-62 688 688)"/><rect x="544" y="427" width="5" height="7" transform="rotate(-62 544 427)"/><rect x="900" y="420" width="14" height="6" transform="rotate(50 900 420)"/><rect x="912" y="303" width="13" height="4" transform="rotate(21 912 303)"/><rect x="848" y="333" width="12" height="5" transform="rotate(21 848 333)"/><rect x="624" y="394" width="5" height="4" transform="rotate(-62 624 394)"/><rect x="634" y="535" width="5" height="6" transform="rotate(35 634 535)"/><rect x="1102" y="584" width="6" height="7" transform="rotate(21 1102 584)"/><rect x="543" y="258" width="11" height="5" transform="rotate(50 543 258)"/><rect x="1140" y="433" width="10" height="7" transform="rotate(21 1140 433)"/><rect x="1229" y="284" width="8" height="8" transform="rotate(35 1229 284)"/><rect x="1004" y="432" width="14" height="5" transform="rotate(21 1004 432)"/><rect x="499" y="252" width="13" height="7" transform="rotate(21 499 252)"/><rect x="715" y="507" width="8" height="8" transform="rotate(21 715 507)"/><rect x="692" y="213" width="7" height="7" transform="rotate(21 692 213)"/><rect x="869" y="310" width="9" height="6" transform="rotate(50 869 310)"/><rect x="971" y="490" width="13" height="4" transform="rotate(-62 971 490)"/><rect x="1194" y="645" width="10" height="7" transform="rotate(-62 1194 645)"/><rect x="982" y="212" width="7" height="8" transform="rotate(35 982 212)"/><rect x="1048" y="237" width="11" height="5" transform="rotate(-62 1048 237)"/><rect x="596" y="239" width="13" height="6" transform="rotate(35 596 239)"/><rect x="992" y="574" width="12" height="7" transform="rotate(-30 992 574)"/><rect x="815" y="542" width="6" height="7" transform="rotate(21 815 542)"/><rect x="797" y="291" width="14" height="8" transform="rotate(-62 797 291)"/><rect x="493" y="277" width="12" height="4" transform="rotate(-62 493 277)"/><rect x="565" y="224" width="8" height="5" transform="rotate(-62 565 224)"/><rect x="939" y="264" width="11" height="6" transform="rotate(-30 939 264)"/><rect x="554" y="318" width="9" height="6" transform="rotate(35 554 318)"/><rect x="998" y="262" width="11" height="7" transform="rotate(-62 998 262)"/><rect x="646" y="614" width="9" height="8" transform="rotate(21 646 614)"/><rect x="978" y="273" width="14" height="8" transform="rotate(50 978 273)"/><rect x="1127" y="252" width="7" height="5" transform="rotate(-62 1127 252)"/><rect x="431" y="352" width="14" height="4" transform="rotate(-30 431 352)"/><rect x="777" y="380" width="6" height="3" transform="rotate(21 777 380)"/><rect x="777" y="699" width="9" height="7" transform="rotate(35 777 699)"/><rect x="1271" y="484" width="5" height="6" transform="rotate(50 1271 484)"/><rect x="796" y="597" width="7" height="5" transform="rotate(21 796 597)"/><rect x="947" y="517" width="13" height="7" transform="rotate(-62 947 517)"/><rect x="955" y="233" width="11" height="3" transform="rotate(50 955 233)"/><rect x="1135" y="346" width="6" height="7" transform="rotate(21 1135 346)"/><rect x="423" y="564" width="7" height="7" transform="rotate(50 423 564)"/><rect x="680" y="477" width="8" height="8" transform="rotate(-62 680 477)"/><rect x="380" y="248" width="12" height="9" transform="rotate(50 380 248)"/><rect x="1198" y="681" width="9" height="6" transform="rotate(21 1198 681)"/><rect x="1286" y="504" width="10" height="4" transform="rotate(-62 1286 504)"/><rect x="482" y="422" width="14" height="4" transform="rotate(21 482 422)"/><rect x="1146" y="440" width="6" height="5" transform="rotate(21 1146 440)"/><rect x="1136" y="634" width="12" height="6" transform="rotate(-62 1136 634)"/><rect x="394" y="222" width="11" height="8" transform="rotate(21 394 222)"/><rect x="748" y="537" width="12" height="8" transform="rotate(21 748 537)"/><rect x="690" y="195" width="12" height="7" transform="rotate(-62 690 195)"/><rect x="777" y="473" width="9" height="6" transform="rotate(21 777 473)"/><rect x="1265" y="689" width="10" height="8" transform="rotate(21 1265 689)"/><rect x="1022" y="364" width="11" height="6" transform="rotate(50 1022 364)"/><rect x="1244" y="441" width="10" height="5" transform="rotate(35 1244 441)"/><rect x="836" y="520" width="12" height="4" transform="rotate(-30 836 520)"/><rect x="992" y="269" width="10" height="6" transform="rotate(50 992 269)"/><rect x="672" y="317" width="8" height="5" transform="rotate(-62 672 317)"/><rect x="416" y="467" width="7" height="6" transform="rotate(-30 416 467)"/><rect x="543" y="489" width="5" height="6" transform="rotate(21 543 489)"/><rect x="1147" y="544" width="12" height="4" transform="rotate(21 1147 544)"/><rect x="929" y="689" width="9" height="6" transform="rotate(50 929 689)"/><rect x="850" y="692" width="6" height="6" transform="rotate(21 850 692)"/><rect x="456" y="594" width="5" height="4" transform="rotate(35 456 594)"/><rect x="364" y="555" width="9" height="4" transform="rotate(21 364 555)"/><rect x="735" y="652" width="10" height="8" transform="rotate(21 735 652)"/><rect x="1210" y="642" width="6" height="7" transform="rotate(35 1210 642)"/><rect x="1101" y="573" width="4" height="5" transform="rotate(-62 1101 573)"/><rect x="684" y="573" width="13" height="7" transform="rotate(21 684 573)"/><rect x="1113" y="375" width="8" height="5" transform="rotate(21 1113 375)"/><rect x="666" y="551" width="4" height="9" transform="rotate(-30 666 551)"/><rect x="434" y="204" width="5" height="8" transform="rotate(21 434 204)"/><rect x="469" y="673" width="11" height="8" transform="rotate(-62 469 673)"/><rect x="844" y="549" width="12" height="9" transform="rotate(21 844 549)"/><rect x="348" y="706" width="9" height="6" transform="rotate(21 348 706)"/><rect x="1097" y="211" width="6" height="8" transform="rotate(50 1097 211)"/><rect x="1138" y="692" width="11" height="6" transform="rotate(-62 1138 692)"/><rect x="1167" y="508" width="5" height="5" transform="rotate(-62 1167 508)"/><rect x="625" y="261" width="10" height="4" transform="rotate(35 625 261)"/><rect x="1027" y="364" width="9" height="9" transform="rotate(35 1027 364)"/><rect x="330" y="492" width="7" height="3" transform="rotate(-30 330 492)"/><rect x="1170" y="507" width="10" height="7" transform="rotate(21 1170 507)"/><rect x="587" y="334" width="9" height="5" transform="rotate(21 587 334)"/><rect x="866" y="591" width="13" height="8" transform="rotate(21 866 591)"/><rect x="675" y="338" width="12" height="8" transform="rotate(21 675 338)"/><rect x="982" y="350" width="12" height="7" transform="rotate(-62 982 350)"/><rect x="663" y="477" width="8" height="3" transform="rotate(35 663 477)"/><rect x="973" y="649" width="12" height="6" transform="rotate(-62 973 649)"/><rect x="1106" y="707" width="6" height="4" transform="rotate(-30 1106 707)"/><rect x="715" y="397" width="12" height="9" transform="rotate(21 715 397)"/><rect x="463" y="564" width="7" height="6" transform="rotate(35 463 564)"/><rect x="395" y="291" width="13" height="7" transform="rotate(-62 395 291)"/><rect x="885" y="703" width="8" height="8" transform="rotate(50 885 703)"/><rect x="1021" y="669" width="12" height="5" transform="rotate(21 1021 669)"/><rect x="590" y="326" width="4" height="4" transform="rotate(-62 590 326)"/><rect x="553" y="203" width="4" height="6" transform="rotate(-62 553 203)"/><rect x="1159" y="527" width="6" height="7" transform="rotate(21 1159 527)"/><rect x="905" y="234" width="12" height="8" transform="rotate(35 905 234)"/><rect x="1019" y="196" width="7" height="7" transform="rotate(21 1019 196)"/><rect x="942" y="669" width="6" height="5" transform="rotate(21 942 669)"/><rect x="951" y="402" width="11" height="5" transform="rotate(21 951 402)"/><rect x="1158" y="604" width="5" height="7" transform="rotate(-30 1158 604)"/><rect x="1278" y="399" width="13" height="8" transform="rotate(21 1278 399)"/><rect x="1218" y="484" width="14" height="3" transform="rotate(35 1218 484)"/><rect x="475" y="203" width="6" height="6" transform="rotate(21 475 203)"/><rect x="670" y="380" width="7" height="7" transform="rotate(21 670 380)"/><rect x="959" y="503" width="7" height="7" transform="rotate(-62 959 503)"/><rect x="1110" y="439" width="4" height="7" transform="rotate(-30 1110 439)"/><rect x="864" y="379" width="9" height="5" transform="rotate(-62 864 379)"/><rect x="333" y="438" width="11" height="8" transform="rotate(35 333 438)"/><rect x="469" y="518" width="8" height="9" transform="rotate(21 469 518)"/><rect x="927" y="256" width="9" height="4" transform="rotate(21 927 256)"/><rect x="574" y="506" width="11" height="8" transform="rotate(21 574 506)"/><rect x="835" y="374" width="11" height="6" transform="rotate(-30 835 374)"/><rect x="530" y="664" width="8" height="4" transform="rotate(21 530 664)"/><rect x="428" y="571" width="5" height="7" transform="rotate(50 428 571)"/><rect x="975" y="374" width="6" height="5" transform="rotate(50 975 374)"/><rect x="1237" y="517" width="6" height="5" transform="rotate(-62 1237 517)"/><rect x="1009" y="318" width="8" height="5" transform="rotate(50 1009 318)"/><rect x="945" y="347" width="14" height="4" transform="rotate(21 945 347)"/><rect x="785" y="675" width="12" height="9" transform="rotate(21 785 675)"/><rect x="1119" y="339" width="7" height="6" transform="rotate(-62 1119 339)"/><rect x="480" y="545" width="10" height="6" transform="rotate(21 480 545)"/><rect x="1177" y="301" width="13" height="5" transform="rotate(-30 1177 301)"/><rect x="500" y="639" width="7" height="3" transform="rotate(21 500 639)"/><rect x="616" y="452" width="8" height="8" transform="rotate(-30 616 452)"/><rect x="984" y="240" width="7" height="9" transform="rotate(50 984 240)"/><rect x="1176" y="698" width="4" height="4" transform="rotate(21 1176 698)"/><rect x="361" y="453" width="6" height="6" transform="rotate(21 361 453)"/><rect x="1028" y="218" width="13" height="3" transform="rotate(21 1028 218)"/><rect x="440" y="444" width="5" height="6" transform="rotate(21 440 444)"/><rect x="540" y="472" width="10" height="6" transform="rotate(21 540 472)"/><rect x="836" y="626" width="14" height="3" transform="rotate(-62 836 626)"/><rect x="1148" y="695" width="6" height="3" transform="rotate(21 1148 695)"/><rect x="339" y="332" width="14" height="4" transform="rotate(21 339 332)"/><rect x="718" y="480" width="8" height="3" transform="rotate(21 718 480)"/><rect x="955" y="474" width="9" height="7" transform="rotate(-62 955 474)"/><rect x="710" y="357" width="8" height="9" transform="rotate(50 710 357)"/><rect x="1059" y="648" width="12" height="8" transform="rotate(21 1059 648)"/><rect x="555" y="452" width="14" height="7" transform="rotate(50 555 452)"/><rect x="1281" y="619" width="11" height="4" transform="rotate(21 1281 619)"/><rect x="995" y="360" width="10" height="6" transform="rotate(35 995 360)"/><rect x="764" y="491" width="9" height="7" transform="rotate(-30 764 491)"/><rect x="817" y="499" width="14" height="4" transform="rotate(50 817 499)"/><rect x="667" y="226" width="14" height="5" transform="rotate(35 667 226)"/><rect x="1217" y="588" width="7" height="8" transform="rotate(35 1217 588)"/><rect x="828" y="439" width="6" height="4" transform="rotate(35 828 439)"/><rect x="830" y="465" width="12" height="4" transform="rotate(21 830 465)"/><rect x="471" y="534" width="6" height="9" transform="rotate(21 471 534)"/><rect x="635" y="380" width="13" height="6" transform="rotate(50 635 380)"/><rect x="473" y="323" width="5" height="5" transform="rotate(-62 473 323)"/><rect x="761" y="238" width="8" height="9" transform="rotate(21 761 238)"/><rect x="758" y="440" width="12" height="8" transform="rotate(21 758 440)"/><rect x="330" y="260" width="9" height="7" transform="rotate(35 330 260)"/><rect x="830" y="607" width="7" height="6" transform="rotate(21 830 607)"/><rect x="875" y="223" width="6" height="7" transform="rotate(-62 875 223)"/><rect x="1210" y="325" width="7" height="6" transform="rotate(-30 1210 325)"/><rect x="1154" y="297" width="8" height="8" transform="rotate(35 1154 297)"/><rect x="1213" y="563" width="8" height="3" transform="rotate(-62 1213 563)"/><rect x="1261" y="415" width="10" height="5" transform="rotate(-62 1261 415)"/><rect x="696" y="492" width="13" height="4" transform="rotate(35 696 492)"/><rect x="385" y="298" width="13" height="3" transform="rotate(-30 385 298)"/><rect x="691" y="464" width="9" height="8" transform="rotate(21 691 464)"/><rect x="428" y="484" width="13" height="7" transform="rotate(50 428 484)"/><rect x="725" y="437" width="13" height="6" transform="rotate(-30 725 437)"/><rect x="455" y="581" width="4" height="4" transform="rotate(-62 455 581)"/><rect x="712" y="214" width="11" height="6" transform="rotate(50 712 214)"/><rect x="1068" y="254" width="6" height="3" transform="rotate(21 1068 254)"/><rect x="422" y="239" width="12" height="6" transform="rotate(21 422 239)"/><rect x="1120" y="296" width="7" height="8" transform="rotate(50 1120 296)"/><rect x="1139" y="265" width="8" height="3" transform="rotate(21 1139 265)"/><rect x="634" y="291" width="14" height="4" transform="rotate(-62 634 291)"/><rect x="826" y="238" width="8" height="7" transform="rotate(-62 826 238)"/><rect x="861" y="457" width="8" height="3" transform="rotate(-62 861 457)"/><rect x="564" y="389" width="8" height="6" transform="rotate(-62 564 389)"/><rect x="519" y="220" width="9" height="5" transform="rotate(-30 519 220)"/><rect x="958" y="559" width="5" height="9" transform="rotate(35 958 559)"/><rect x="373" y="355" width="9" height="5" transform="rotate(35 373 355)"/><rect x="358" y="306" width="8" height="4" transform="rotate(-62 358 306)"/><rect x="1099" y="499" width="9" height="9" transform="rotate(-30 1099 499)"/><rect x="521" y="298" width="6" height="8" transform="rotate(21 521 298)"/><rect x="900" y="286" width="13" height="6" transform="rotate(21 900 286)"/><rect x="805" y="541" width="11" height="5" transform="rotate(-62 805 541)"/><rect x="840" y="275" width="12" height="7" transform="rotate(21 840 275)"/><rect x="774" y="297" width="5" height="3" transform="rotate(-62 774 297)"/><rect x="960" y="326" width="13" height="7" transform="rotate(21 960 326)"/><rect x="1163" y="670" width="5" height="4" transform="rotate(-30 1163 670)"/><rect x="608" y="313" width="10" height="5" transform="rotate(21 608 313)"/><rect x="623" y="326" width="9" height="4" transform="rotate(-62 623 326)"/><rect x="702" y="210" width="8" height="7" transform="rotate(-62 702 210)"/><rect x="957" y="551" width="6" height="4" transform="rotate(21 957 551)"/><rect x="739" y="543" width="5" height="8" transform="rotate(21 739 543)"/><rect x="959" y="302" width="11" height="6" transform="rotate(21 959 302)"/><rect x="605" y="373" width="12" height="6" transform="rotate(21 605 373)"/><rect x="518" y="337" width="7" height="7" transform="rotate(21 518 337)"/><rect x="518" y="436" width="12" height="8" transform="rotate(-62 518 436)"/><rect x="883" y="348" width="10" height="4" transform="rotate(21 883 348)"/><rect x="657" y="680" width="11" height="3" transform="rotate(35 657 680)"/><rect x="662" y="441" width="7" height="5" transform="rotate(21 662 441)"/><rect x="1085" y="347" width="5" height="6" transform="rotate(21 1085 347)"/><rect x="1046" y="251" width="6" height="5" transform="rotate(21 1046 251)"/><rect x="357" y="458" width="5" height="7" transform="rotate(21 357 458)"/><rect x="725" y="625" width="5" height="7" transform="rotate(21 725 625)"/><rect x="671" y="535" width="5" height="3" transform="rotate(-30 671 535)"/><rect x="617" y="328" width="5" height="4" transform="rotate(21 617 328)"/><rect x="803" y="470" width="5" height="6" transform="rotate(21 803 470)"/><rect x="873" y="215" width="7" height="9" transform="rotate(-62 873 215)"/><rect x="714" y="298" width="5" height="4" transform="rotate(-62 714 298)"/><rect x="1235" y="445" width="12" height="6" transform="rotate(-62 1235 445)"/><rect x="408" y="281" width="12" height="9" transform="rotate(50 408 281)"/><rect x="704" y="460" width="7" height="8" transform="rotate(21 704 460)"/><rect x="965" y="305" width="6" height="8" transform="rotate(21 965 305)"/><rect x="1117" y="231" width="7" height="4" transform="rotate(-62 1117 231)"/><rect x="921" y="550" width="12" height="5" transform="rotate(-30 921 550)"/><rect x="896" y="287" width="7" height="9" transform="rotate(50 896 287)"/><rect x="818" y="279" width="12" height="8" transform="rotate(-62 818 279)"/><rect x="515" y="306" width="7" height="9" transform="rotate(21 515 306)"/><rect x="1089" y="441" width="9" height="8" transform="rotate(21 1089 441)"/><rect x="1050" y="521" width="6" height="7" transform="rotate(35 1050 521)"/><rect x="1084" y="241" width="11" height="5" transform="rotate(21 1084 241)"/><rect x="1100" y="447" width="12" height="6" transform="rotate(-62 1100 447)"/><rect x="1124" y="677" width="13" height="7" transform="rotate(21 1124 677)"/><rect x="745" y="619" width="12" height="8" transform="rotate(-62 745 619)"/><rect x="1047" y="499" width="11" height="7" transform="rotate(21 1047 499)"/><rect x="1260" y="599" width="7" height="8" transform="rotate(-62 1260 599)"/><rect x="556" y="496" width="10" height="8" transform="rotate(21 556 496)"/><rect x="703" y="597" width="12" height="7" transform="rotate(35 703 597)"/><rect x="1122" y="403" width="5" height="7" transform="rotate(35 1122 403)"/><rect x="965" y="660" width="8" height="5" transform="rotate(-62 965 660)"/><rect x="796" y="201" width="5" height="8" transform="rotate(50 796 201)"/><rect x="721" y="348" width="5" height="6" transform="rotate(21 721 348)"/><rect x="666" y="629" width="10" height="5" transform="rotate(21 666 629)"/><rect x="1183" y="403" width="9" height="4" transform="rotate(-62 1183 403)"/><rect x="984" y="214" width="12" height="4" transform="rotate(-62 984 214)"/><rect x="645" y="271" width="6" height="5" transform="rotate(50 645 271)"/><rect x="622" y="357" width="13" height="8" transform="rotate(-62 622 357)"/><rect x="1152" y="693" width="8" height="3" transform="rotate(21 1152 693)"/><rect x="424" y="320" width="10" height="7" transform="rotate(35 424 320)"/><rect x="977" y="701" width="11" height="8" transform="rotate(50 977 701)"/><rect x="454" y="582" width="7" height="5" transform="rotate(35 454 582)"/><rect x="753" y="687" width="8" height="7" transform="rotate(50 753 687)"/><rect x="1230" y="610" width="5" height="7" transform="rotate(-30 1230 610)"/><rect x="675" y="697" width="5" height="8" transform="rotate(21 675 697)"/><rect x="862" y="424" width="12" height="8" transform="rotate(-30 862 424)"/><rect x="358" y="361" width="5" height="9" transform="rotate(-62 358 361)"/><rect x="464" y="496" width="10" height="3" transform="rotate(50 464 496)"/><rect x="492" y="497" width="14" height="7" transform="rotate(-62 492 497)"/><rect x="605" y="474" width="8" height="9" transform="rotate(21 605 474)"/><rect x="1102" y="542" width="8" height="9" transform="rotate(35 1102 542)"/><rect x="991" y="336" width="6" height="6" transform="rotate(21 991 336)"/><rect x="1091" y="372" width="5" height="6" transform="rotate(21 1091 372)"/><rect x="481" y="574" width="6" height="5" transform="rotate(21 481 574)"/><rect x="891" y="694" width="12" height="5" transform="rotate(21 891 694)"/><rect x="587" y="653" width="9" height="7" transform="rotate(-30 587 653)"/><rect x="713" y="545" width="8" height="5" transform="rotate(-30 713 545)"/><rect x="582" y="298" width="13" height="6" transform="rotate(50 582 298)"/><rect x="939" y="595" width="7" height="4" transform="rotate(-30 939 595)"/><rect x="963" y="631" width="8" height="3" transform="rotate(50 963 631)"/><rect x="674" y="666" width="9" height="5" transform="rotate(21 674 666)"/><rect x="575" y="591" width="4" height="8" transform="rotate(-62 575 591)"/><rect x="666" y="678" width="7" height="4" transform="rotate(21 666 678)"/><rect x="1170" y="243" width="10" height="8" transform="rotate(21 1170 243)"/><rect x="1222" y="279" width="6" height="7" transform="rotate(21 1222 279)"/><rect x="1072" y="397" width="13" height="7" transform="rotate(35 1072 397)"/><rect x="710" y="451" width="7" height="8" transform="rotate(21 710 451)"/><rect x="838" y="462" width="11" height="8" transform="rotate(21 838 462)"/><rect x="530" y="545" width="13" height="3" transform="rotate(21 530 545)"/><rect x="1147" y="538" width="10" height="5" transform="rotate(-62 1147 538)"/><rect x="1083" y="544" width="13" height="4" transform="rotate(-62 1083 544)"/><rect x="973" y="582" width="9" height="8" transform="rotate(21 973 582)"/><rect x="1042" y="617" width="10" height="8" transform="rotate(21 1042 617)"/><rect x="949" y="645" width="8" height="8" transform="rotate(21 949 645)"/><rect x="1069" y="505" width="9" height="7" transform="rotate(-62 1069 505)"/><rect x="623" y="379" width="10" height="8" transform="rotate(21 623 379)"/><rect x="671" y="554" width="5" height="8" transform="rotate(35 671 554)"/><rect x="535" y="429" width="12" height="6" transform="rotate(21 535 429)"/><rect x="1268" y="498" width="10" height="3" transform="rotate(-30 1268 498)"/><rect x="431" y="309" width="10" height="5" transform="rotate(35 431 309)"/><rect x="837" y="312" width="10" height="8" transform="rotate(-62 837 312)"/><rect x="1135" y="610" width="9" height="3" transform="rotate(21 1135 610)"/><rect x="351" y="453" width="8" height="3" transform="rotate(-62 351 453)"/><rect x="1024" y="495" width="8" height="6" transform="rotate(50 1024 495)"/><rect x="543" y="641" width="12" height="9" transform="rotate(35 543 641)"/><rect x="959" y="323" width="10" height="6" transform="rotate(50 959 323)"/><rect x="763" y="545" width="11" height="6" transform="rotate(35 763 545)"/><rect x="919" y="251" width="6" height="8" transform="rotate(21 919 251)"/><rect x="1035" y="459" width="8" height="4" transform="rotate(-62 1035 459)"/><rect x="1071" y="297" width="12" height="8" transform="rotate(-62 1071 297)"/><rect x="1046" y="682" width="13" height="7" transform="rotate(21 1046 682)"/><rect x="385" y="299" width="4" height="8" transform="rotate(-62 385 299)"/><rect x="863" y="517" width="10" height="5" transform="rotate(35 863 517)"/><rect x="619" y="216" width="6" height="5" transform="rotate(21 619 216)"/><rect x="1101" y="428" width="5" height="4" transform="rotate(21 1101 428)"/><rect x="676" y="649" width="9" height="3" transform="rotate(35 676 649)"/><rect x="1092" y="439" width="12" height="4" transform="rotate(21 1092 439)"/><rect x="834" y="323" width="8" height="5" transform="rotate(21 834 323)"/><rect x="1230" y="293" width="7" height="8" transform="rotate(50 1230 293)"/><rect x="1072" y="567" width="6" height="8" transform="rotate(50 1072 567)"/><rect x="453" y="200" width="6" height="7" transform="rotate(50 453 200)"/><rect x="351" y="613" width="5" height="8" transform="rotate(-62 351 613)"/><rect x="1183" y="469" width="5" height="5" transform="rotate(-30 1183 469)"/><rect x="792" y="523" width="6" height="4" transform="rotate(35 792 523)"/><rect x="694" y="247" width="10" height="4" transform="rotate(-62 694 247)"/><rect x="749" y="488" width="13" height="7" transform="rotate(-30 749 488)"/><rect x="1060" y="487" width="11" height="8" transform="rotate(21 1060 487)"/><rect x="711" y="540" width="11" height="4" transform="rotate(-30 711 540)"/><rect x="993" y="436" width="5" height="8" transform="rotate(50 993 436)"/><rect x="385" y="316" width="14" height="4" transform="rotate(50 385 316)"/><rect x="871" y="578" width="6" height="7" transform="rotate(21 871 578)"/><rect x="325" y="434" width="8" height="9" transform="rotate(-62 325 434)"/><rect x="1073" y="216" width="10" height="6" transform="rotate(50 1073 216)"/><rect x="578" y="272" width="4" height="8" transform="rotate(21 578 272)"/><rect x="1058" y="648" width="5" height="4" transform="rotate(21 1058 648)"/><rect x="919" y="360" width="9" height="9" transform="rotate(50 919 360)"/><rect x="1209" y="194" width="13" height="6" transform="rotate(21 1209 194)"/><rect x="809" y="513" width="10" height="8" transform="rotate(21 809 513)"/><rect x="1006" y="534" width="10" height="6" transform="rotate(21 1006 534)"/><rect x="865" y="301" width="6" height="6" transform="rotate(-30 865 301)"/><rect x="526" y="558" width="11" height="7" transform="rotate(21 526 558)"/><rect x="916" y="238" width="9" height="7" transform="rotate(21 916 238)"/><rect x="1029" y="631" width="12" height="4" transform="rotate(35 1029 631)"/><rect x="589" y="353" width="7" height="6" transform="rotate(35 589 353)"/><rect x="1067" y="197" width="5" height="4" transform="rotate(-62 1067 197)"/><rect x="826" y="428" width="8" height="7" transform="rotate(-62 826 428)"/><rect x="1209" y="571" width="12" height="8" transform="rotate(21 1209 571)"/><rect x="1016" y="209" width="11" height="8" transform="rotate(50 1016 209)"/><rect x="1098" y="221" width="10" height="5" transform="rotate(-62 1098 221)"/><rect x="1006" y="323" width="7" height="5" transform="rotate(35 1006 323)"/><rect x="693" y="277" width="6" height="9" transform="rotate(-30 693 277)"/><rect x="1060" y="625" width="14" height="8" transform="rotate(-62 1060 625)"/><rect x="1100" y="200" width="9" height="5" transform="rotate(35 1100 200)"/><rect x="1214" y="363" width="12" height="8" transform="rotate(35 1214 363)"/><rect x="1092" y="468" width="5" height="8" transform="rotate(35 1092 468)"/><rect x="735" y="367" width="5" height="4" transform="rotate(-30 735 367)"/><rect x="480" y="467" width="10" height="6" transform="rotate(50 480 467)"/><rect x="1224" y="461" width="12" height="7" transform="rotate(-62 1224 461)"/><rect x="535" y="583" width="13" height="7" transform="rotate(50 535 583)"/><rect x="1015" y="704" width="6" height="6" transform="rotate(21 1015 704)"/><rect x="991" y="578" width="12" height="4" transform="rotate(-62 991 578)"/><rect x="1161" y="524" width="10" height="7" transform="rotate(21 1161 524)"/><rect x="958" y="501" width="11" height="5" transform="rotate(21 958 501)"/><rect x="1029" y="469" width="5" height="3" transform="rotate(21 1029 469)"/><rect x="1022" y="528" width="9" height="8" transform="rotate(-30 1022 528)"/><rect x="496" y="245" width="7" height="5" transform="rotate(21 496 245)"/><rect x="754" y="569" width="5" height="9" transform="rotate(35 754 569)"/><rect x="636" y="299" width="8" height="8" transform="rotate(21 636 299)"/><rect x="1150" y="607" width="11" height="5" transform="rotate(21 1150 607)"/><rect x="1141" y="230" width="5" height="8" transform="rotate(-62 1141 230)"/><rect x="963" y="286" width="5" height="4" transform="rotate(21 963 286)"/><rect x="694" y="530" width="10" height="4" transform="rotate(21 694 530)"/><rect x="610" y="331" width="13" height="9" transform="rotate(35 610 331)"/><rect x="675" y="566" width="5" height="8" transform="rotate(-62 675 566)"/><rect x="682" y="279" width="11" height="8" transform="rotate(21 682 279)"/><rect x="600" y="389" width="12" height="4" transform="rotate(-62 600 389)"/><rect x="1180" y="587" width="13" height="4" transform="rotate(-30 1180 587)"/><rect x="578" y="197" width="5" height="5" transform="rotate(35 578 197)"/><rect x="551" y="208" width="8" height="4" transform="rotate(-30 551 208)"/><rect x="860" y="447" width="8" height="6" transform="rotate(21 860 447)"/><rect x="1203" y="413" width="5" height="4" transform="rotate(-62 1203 413)"/><rect x="673" y="435" width="13" height="6" transform="rotate(21 673 435)"/><rect x="816" y="443" width="6" height="7" transform="rotate(50 816 443)"/><rect x="556" y="281" width="13" height="4" transform="rotate(21 556 281)"/><rect x="785" y="435" width="13" height="8" transform="rotate(21 785 435)"/><rect x="396" y="427" width="7" height="4" transform="rotate(35 396 427)"/><rect x="573" y="456" width="10" height="8" transform="rotate(21 573 456)"/><rect x="946" y="547" width="4" height="7" transform="rotate(-30 946 547)"/><rect x="966" y="265" width="8" height="5" transform="rotate(35 966 265)"/><rect x="1039" y="635" width="8" height="8" transform="rotate(21 1039 635)"/><rect x="1000" y="201" width="9" height="7" transform="rotate(-30 1000 201)"/><rect x="534" y="212" width="8" height="4" transform="rotate(-62 534 212)"/><rect x="618" y="355" width="6" height="3" transform="rotate(21 618 355)"/><rect x="980" y="200" width="13" height="4" transform="rotate(-30 980 200)"/><rect x="685" y="633" width="11" height="7" transform="rotate(-62 685 633)"/><rect x="924" y="305" width="12" height="4" transform="rotate(-30 924 305)"/><rect x="355" y="285" width="8" height="7" transform="rotate(35 355 285)"/><rect x="1068" y="316" width="12" height="4" transform="rotate(-62 1068 316)"/><rect x="910" y="438" width="9" height="5" transform="rotate(-62 910 438)"/><rect x="556" y="255" width="14" height="4" transform="rotate(21 556 255)"/><rect x="634" y="582" width="6" height="6" transform="rotate(21 634 582)"/><rect x="890" y="426" width="8" height="8" transform="rotate(-62 890 426)"/><rect x="1155" y="687" width="7" height="9" transform="rotate(50 1155 687)"/><rect x="416" y="418" width="12" height="9" transform="rotate(-62 416 418)"/><rect x="458" y="231" width="8" height="5" transform="rotate(21 458 231)"/><rect x="755" y="451" width="9" height="7" transform="rotate(35 755 451)"/><rect x="1192" y="690" width="6" height="3" transform="rotate(-62 1192 690)"/><rect x="875" y="287" width="11" height="5" transform="rotate(-62 875 287)"/><rect x="722" y="686" width="7" height="8" transform="rotate(21 722 686)"/><rect x="927" y="436" width="11" height="8" transform="rotate(21 927 436)"/><rect x="754" y="368" width="12" height="9" transform="rotate(21 754 368)"/><rect x="774" y="360" width="14" height="9" transform="rotate(21 774 360)"/><rect x="719" y="689" width="13" height="4" transform="rotate(35 719 689)"/><rect x="691" y="448" width="8" height="9" transform="rotate(-62 691 448)"/><rect x="1173" y="251" width="9" height="8" transform="rotate(50 1173 251)"/><rect x="948" y="435" width="9" height="5" transform="rotate(35 948 435)"/><rect x="657" y="584" width="7" height="8" transform="rotate(21 657 584)"/><rect x="977" y="596" width="8" height="4" transform="rotate(-62 977 596)"/><rect x="1131" y="524" width="10" height="7" transform="rotate(-62 1131 524)"/><rect x="681" y="632" width="10" height="4" transform="rotate(21 681 632)"/><rect x="905" y="631" width="13" height="7" transform="rotate(-62 905 631)"/><rect x="1191" y="500" width="8" height="6" transform="rotate(21 1191 500)"/><rect x="392" y="195" width="6" height="7" transform="rotate(21 392 195)"/><rect x="492" y="283" width="13" height="8" transform="rotate(-62 492 283)"/><rect x="343" y="252" width="13" height="9" transform="rotate(21 343 252)"/><rect x="778" y="231" width="7" height="5" transform="rotate(-30 778 231)"/><rect x="1169" y="365" width="13" height="5" transform="rotate(-62 1169 365)"/><rect x="412" y="515" width="11" height="5" transform="rotate(35 412 515)"/><rect x="654" y="447" width="6" height="9" transform="rotate(21 654 447)"/><rect x="1050" y="626" width="8" height="5" transform="rotate(21 1050 626)"/><rect x="546" y="604" width="12" height="4" transform="rotate(21 546 604)"/><rect x="509" y="558" width="12" height="8" transform="rotate(-62 509 558)"/><rect x="925" y="619" width="9" height="6" transform="rotate(21 925 619)"/><rect x="510" y="494" width="5" height="7" transform="rotate(-62 510 494)"/><rect x="1049" y="452" width="9" height="5" transform="rotate(21 1049 452)"/><rect x="605" y="523" width="11" height="7" transform="rotate(21 605 523)"/><rect x="522" y="354" width="11" height="5" transform="rotate(21 522 354)"/><rect x="384" y="432" width="7" height="7" transform="rotate(-62 384 432)"/><rect x="707" y="463" width="7" height="8" transform="rotate(35 707 463)"/><rect x="410" y="218" width="9" height="4" transform="rotate(-62 410 218)"/><rect x="770" y="295" width="5" height="6" transform="rotate(35 770 295)"/><rect x="986" y="439" width="7" height="3" transform="rotate(21 986 439)"/><rect x="927" y="419" width="5" height="8" transform="rotate(-62 927 419)"/><rect x="758" y="633" width="13" height="6" transform="rotate(35 758 633)"/><rect x="841" y="595" width="11" height="5" transform="rotate(21 841 595)"/><rect x="425" y="428" width="10" height="5" transform="rotate(21 425 428)"/><rect x="1153" y="680" width="10" height="3" transform="rotate(21 1153 680)"/><rect x="614" y="228" width="12" height="8" transform="rotate(50 614 228)"/><rect x="826" y="268" width="11" height="7" transform="rotate(21 826 268)"/><rect x="836" y="554" width="7" height="8" transform="rotate(50 836 554)"/><rect x="487" y="283" width="12" height="6" transform="rotate(35 487 283)"/><rect x="674" y="653" width="9" height="6" transform="rotate(21 674 653)"/><rect x="575" y="575" width="13" height="8" transform="rotate(-30 575 575)"/><rect x="543" y="288" width="12" height="8" transform="rotate(50 543 288)"/><rect x="1016" y="572" width="5" height="4" transform="rotate(-30 1016 572)"/><rect x="563" y="325" width="9" height="9" transform="rotate(21 563 325)"/><rect x="1267" y="511" width="7" height="7" transform="rotate(35 1267 511)"/><rect x="983" y="533" width="5" height="3" transform="rotate(-62 983 533)"/><rect x="879" y="198" width="12" height="7" transform="rotate(21 879 198)"/><rect x="1244" y="362" width="12" height="8" transform="rotate(-62 1244 362)"/><rect x="1241" y="349" width="10" height="5" transform="rotate(-62 1241 349)"/><rect x="430" y="310" width="13" height="5" transform="rotate(-62 430 310)"/><rect x="1113" y="525" width="5" height="8" transform="rotate(21 1113 525)"/><rect x="1053" y="613" width="7" height="7" transform="rotate(50 1053 613)"/><rect x="746" y="351" width="6" height="7" transform="rotate(21 746 351)"/><rect x="658" y="628" width="12" height="8" transform="rotate(21 658 628)"/><rect x="1152" y="686" width="13" height="6" transform="rotate(21 1152 686)"/><rect x="1091" y="628" width="14" height="9" transform="rotate(-30 1091 628)"/><rect x="1080" y="597" width="13" height="4" transform="rotate(35 1080 597)"/><rect x="673" y="226" width="5" height="8" transform="rotate(21 673 226)"/><rect x="543" y="229" width="5" height="7" transform="rotate(-62 543 229)"/><rect x="1155" y="523" width="7" height="6" transform="rotate(50 1155 523)"/><rect x="623" y="519" width="13" height="6" transform="rotate(35 623 519)"/><rect x="1033" y="354" width="13" height="6" transform="rotate(21 1033 354)"/><rect x="903" y="708" width="13" height="3" transform="rotate(-30 903 708)"/><rect x="726" y="647" width="11" height="4" transform="rotate(35 726 647)"/><rect x="848" y="672" width="11" height="8" transform="rotate(21 848 672)"/><rect x="770" y="487" width="4" height="4" transform="rotate(21 770 487)"/><rect x="502" y="343" width="9" height="7" transform="rotate(21 502 343)"/><rect x="539" y="577" width="12" height="4" transform="rotate(50 539 577)"/><rect x="476" y="522" width="5" height="6" transform="rotate(35 476 522)"/><rect x="616" y="363" width="11" height="4" transform="rotate(21 616 363)"/><rect x="970" y="267" width="14" height="9" transform="rotate(21 970 267)"/><rect x="1058" y="641" width="8" height="9" transform="rotate(-62 1058 641)"/><rect x="812" y="658" width="13" height="7" transform="rotate(-62 812 658)"/><rect x="817" y="674" width="10" height="4" transform="rotate(-30 817 674)"/><rect x="1100" y="412" width="10" height="5" transform="rotate(-62 1100 412)"/><rect x="550" y="305" width="10" height="3" transform="rotate(21 550 305)"/><rect x="1099" y="659" width="6" height="8" transform="rotate(-62 1099 659)"/><rect x="548" y="617" width="6" height="4" transform="rotate(-62 548 617)"/><rect x="1267" y="565" width="5" height="6" transform="rotate(-62 1267 565)"/><rect x="587" y="626" width="13" height="3" transform="rotate(21 587 626)"/><rect x="752" y="238" width="5" height="8" transform="rotate(50 752 238)"/><rect x="461" y="430" width="10" height="9" transform="rotate(35 461 430)"/><rect x="718" y="565" width="14" height="4" transform="rotate(50 718 565)"/><rect x="668" y="418" width="7" height="7" transform="rotate(-30 668 418)"/><rect x="406" y="293" width="7" height="6" transform="rotate(21 406 293)"/><rect x="727" y="626" width="12" height="7" transform="rotate(-30 727 626)"/><rect x="1237" y="436" width="6" height="7" transform="rotate(21 1237 436)"/><rect x="807" y="313" width="8" height="5" transform="rotate(21 807 313)"/><rect x="714" y="376" width="8" height="5" transform="rotate(50 714 376)"/><rect x="948" y="433" width="12" height="6" transform="rotate(21 948 433)"/><rect x="1145" y="569" width="8" height="7" transform="rotate(50 1145 569)"/><rect x="1244" y="513" width="6" height="7" transform="rotate(21 1244 513)"/><rect x="677" y="632" width="12" height="7" transform="rotate(-62 677 632)"/><rect x="652" y="681" width="9" height="5" transform="rotate(21 652 681)"/><rect x="600" y="263" width="13" height="9" transform="rotate(35 600 263)"/><rect x="1103" y="420" width="7" height="6" transform="rotate(21 1103 420)"/><rect x="662" y="467" width="13" height="7" transform="rotate(-30 662 467)"/><rect x="436" y="324" width="10" height="6" transform="rotate(-62 436 324)"/><rect x="1107" y="517" width="4" height="8" transform="rotate(-62 1107 517)"/><rect x="1118" y="276" width="11" height="3" transform="rotate(-62 1118 276)"/><rect x="527" y="573" width="5" height="5" transform="rotate(-62 527 573)"/><rect x="380" y="329" width="11" height="7" transform="rotate(21 380 329)"/><rect x="1239" y="477" width="13" height="4" transform="rotate(21 1239 477)"/><rect x="743" y="293" width="11" height="8" transform="rotate(50 743 293)"/><rect x="732" y="518" width="11" height="4" transform="rotate(21 732 518)"/><rect x="378" y="257" width="4" height="7" transform="rotate(21 378 257)"/><rect x="433" y="277" width="6" height="7" transform="rotate(-62 433 277)"/><rect x="672" y="698" width="8" height="5" transform="rotate(-62 672 698)"/><rect x="755" y="442" width="4" height="7" transform="rotate(21 755 442)"/><rect x="929" y="531" width="8" height="7" transform="rotate(21 929 531)"/><rect x="1081" y="475" width="13" height="3" transform="rotate(-30 1081 475)"/><rect x="1175" y="503" width="7" height="5" transform="rotate(21 1175 503)"/><rect x="1154" y="665" width="10" height="4" transform="rotate(21 1154 665)"/><rect x="989" y="274" width="10" height="6" transform="rotate(21 989 274)"/><rect x="1140" y="380" width="11" height="4" transform="rotate(50 1140 380)"/><rect x="1028" y="404" width="14" height="9" transform="rotate(21 1028 404)"/><rect x="630" y="387" width="7" height="8" transform="rotate(21 630 387)"/><rect x="1281" y="548" width="7" height="8" transform="rotate(-62 1281 548)"/><rect x="1098" y="367" width="10" height="6" transform="rotate(-62 1098 367)"/><rect x="1153" y="703" width="9" height="8" transform="rotate(21 1153 703)"/><rect x="468" y="586" width="10" height="8" transform="rotate(50 468 586)"/><rect x="1005" y="195" width="10" height="4" transform="rotate(50 1005 195)"/><rect x="591" y="252" width="13" height="6" transform="rotate(-62 591 252)"/><rect x="403" y="425" width="8" height="3" transform="rotate(-62 403 425)"/><rect x="531" y="531" width="7" height="5" transform="rotate(50 531 531)"/><rect x="1067" y="550" width="10" height="5" transform="rotate(35 1067 550)"/><rect x="712" y="683" width="9" height="4" transform="rotate(21 712 683)"/><rect x="1108" y="345" width="10" height="8" transform="rotate(21 1108 345)"/><rect x="664" y="632" width="13" height="5" transform="rotate(21 664 632)"/><rect x="754" y="206" width="5" height="8" transform="rotate(21 754 206)"/><rect x="532" y="503" width="13" height="3" transform="rotate(-62 532 503)"/><rect x="656" y="674" width="6" height="4" transform="rotate(21 656 674)"/><rect x="947" y="626" width="7" height="4" transform="rotate(-62 947 626)"/><rect x="782" y="599" width="7" height="8" transform="rotate(-62 782 599)"/><rect x="480" y="707" width="7" height="9" transform="rotate(21 480 707)"/><rect x="933" y="468" width="13" height="6" transform="rotate(21 933 468)"/><rect x="726" y="435" width="7" height="3" transform="rotate(50 726 435)"/><rect x="548" y="432" width="12" height="9" transform="rotate(-62 548 432)"/><rect x="479" y="546" width="10" height="5" transform="rotate(21 479 546)"/><rect x="1208" y="657" width="9" height="9" transform="rotate(35 1208 657)"/><rect x="420" y="450" width="14" height="5" transform="rotate(35 420 450)"/><rect x="1180" y="383" width="14" height="9" transform="rotate(21 1180 383)"/><rect x="806" y="339" width="7" height="6" transform="rotate(21 806 339)"/><rect x="627" y="208" width="6" height="4" transform="rotate(-62 627 208)"/><rect x="764" y="384" width="12" height="9" transform="rotate(35 764 384)"/><rect x="788" y="673" width="6" height="9" transform="rotate(21 788 673)"/><rect x="672" y="505" width="7" height="9" transform="rotate(-62 672 505)"/><rect x="1009" y="496" width="8" height="4" transform="rotate(21 1009 496)"/><rect x="523" y="455" width="5" height="8" transform="rotate(21 523 455)"/><rect x="985" y="671" width="14" height="7" transform="rotate(21 985 671)"/><rect x="595" y="655" width="11" height="6" transform="rotate(35 595 655)"/><rect x="1196" y="497" width="12" height="3" transform="rotate(-62 1196 497)"/><rect x="1279" y="661" width="6" height="4" transform="rotate(21 1279 661)"/><rect x="582" y="647" width="9" height="5" transform="rotate(50 582 647)"/><rect x="715" y="553" width="5" height="8" transform="rotate(50 715 553)"/><rect x="431" y="578" width="7" height="4" transform="rotate(35 431 578)"/><rect x="1165" y="204" width="4" height="3" transform="rotate(50 1165 204)"/><rect x="926" y="530" width="6" height="7" transform="rotate(21 926 530)"/><rect x="671" y="657" width="7" height="4" transform="rotate(21 671 657)"/><rect x="471" y="250" width="12" height="4" transform="rotate(-62 471 250)"/><rect x="810" y="489" width="10" height="5" transform="rotate(21 810 489)"/><rect x="1027" y="315" width="5" height="9" transform="rotate(21 1027 315)"/><rect x="558" y="618" width="6" height="4" transform="rotate(-30 558 618)"/><rect x="893" y="415" width="9" height="3" transform="rotate(21 893 415)"/><rect x="761" y="453" width="13" height="7" transform="rotate(21 761 453)"/><rect x="515" y="327" width="12" height="8" transform="rotate(35 515 327)"/><rect x="951" y="412" width="7" height="6" transform="rotate(-30 951 412)"/><rect x="560" y="273" width="7" height="5" transform="rotate(21 560 273)"/><rect x="1006" y="414" width="6" height="3" transform="rotate(21 1006 414)"/><rect x="1280" y="572" width="11" height="8" transform="rotate(21 1280 572)"/><rect x="599" y="213" width="4" height="6" transform="rotate(-62 599 213)"/><rect x="817" y="280" width="11" height="6" transform="rotate(-30 817 280)"/><rect x="539" y="399" width="6" height="4" transform="rotate(-62 539 399)"/><rect x="581" y="539" width="6" height="5" transform="rotate(50 581 539)"/><rect x="391" y="237" width="5" height="4" transform="rotate(-62 391 237)"/><rect x="809" y="445" width="6" height="7" transform="rotate(-30 809 445)"/><rect x="868" y="424" width="5" height="7" transform="rotate(-30 868 424)"/><rect x="447" y="228" width="8" height="7" transform="rotate(21 447 228)"/><rect x="998" y="491" width="14" height="3" transform="rotate(21 998 491)"/><rect x="433" y="359" width="5" height="6" transform="rotate(-62 433 359)"/><rect x="660" y="552" width="8" height="7" transform="rotate(-62 660 552)"/><rect x="480" y="419" width="6" height="4" transform="rotate(50 480 419)"/><rect x="1159" y="522" width="6" height="8" transform="rotate(21 1159 522)"/><rect x="435" y="389" width="11" height="3" transform="rotate(21 435 389)"/><rect x="1168" y="236" width="7" height="7" transform="rotate(-30 1168 236)"/><rect x="1260" y="525" width="13" height="6" transform="rotate(-62 1260 525)"/><rect x="625" y="298" width="11" height="4" transform="rotate(35 625 298)"/><rect x="817" y="496" width="6" height="5" transform="rotate(21 817 496)"/><rect x="811" y="409" width="11" height="4" transform="rotate(-62 811 409)"/><rect x="590" y="590" width="11" height="8" transform="rotate(-30 590 590)"/><rect x="686" y="343" width="8" height="7" transform="rotate(-62 686 343)"/><rect x="790" y="570" width="6" height="6" transform="rotate(35 790 570)"/><rect x="1009" y="428" width="5" height="5" transform="rotate(-62 1009 428)"/><rect x="1122" y="700" width="8" height="7" transform="rotate(-62 1122 700)"/><rect x="938" y="551" width="7" height="3" transform="rotate(35 938 551)"/><rect x="720" y="419" width="10" height="8" transform="rotate(-62 720 419)"/><rect x="1101" y="311" width="7" height="4" transform="rotate(21 1101 311)"/><rect x="795" y="384" width="7" height="6" transform="rotate(21 795 384)"/><rect x="1189" y="631" width="13" height="6" transform="rotate(50 1189 631)"/><rect x="474" y="272" width="10" height="7" transform="rotate(35 474 272)"/><rect x="595" y="669" width="13" height="5" transform="rotate(21 595 669)"/><rect x="1184" y="413" width="6" height="8" transform="rotate(35 1184 413)"/><rect x="816" y="250" width="7" height="6" transform="rotate(-62 816 250)"/><rect x="1277" y="395" width="6" height="8" transform="rotate(35 1277 395)"/><rect x="434" y="359" width="5" height="3" transform="rotate(-62 434 359)"/><rect x="524" y="492" width="10" height="4" transform="rotate(21 524 492)"/><rect x="517" y="634" width="6" height="7" transform="rotate(35 517 634)"/><rect x="441" y="488" width="9" height="8" transform="rotate(21 441 488)"/><rect x="817" y="256" width="6" height="5" transform="rotate(50 817 256)"/><rect x="544" y="364" width="8" height="7" transform="rotate(50 544 364)"/><rect x="559" y="496" width="8" height="3" transform="rotate(-62 559 496)"/><rect x="584" y="594" width="9" height="9" transform="rotate(21 584 594)"/><rect x="965" y="431" width="10" height="4" transform="rotate(-30 965 431)"/><rect x="854" y="393" width="12" height="4" transform="rotate(-62 854 393)"/><rect x="1057" y="579" width="13" height="8" transform="rotate(-62 1057 579)"/><rect x="770" y="303" width="4" height="4" transform="rotate(21 770 303)"/><rect x="502" y="195" width="8" height="6" transform="rotate(35 502 195)"/><rect x="823" y="700" width="6" height="6" transform="rotate(-30 823 700)"/><rect x="434" y="343" width="9" height="4" transform="rotate(50 434 343)"/><rect x="670" y="366" width="10" height="6" transform="rotate(-62 670 366)"/><rect x="1060" y="512" width="11" height="8" transform="rotate(35 1060 512)"/><rect x="958" y="468" width="7" height="5" transform="rotate(21 958 468)"/><rect x="651" y="408" width="14" height="5" transform="rotate(50 651 408)"/><rect x="328" y="708" width="6" height="6" transform="rotate(35 328 708)"/><rect x="716" y="313" width="12" height="6" transform="rotate(35 716 313)"/><rect x="1111" y="223" width="8" height="8" transform="rotate(35 1111 223)"/><rect x="983" y="542" width="9" height="6" transform="rotate(-62 983 542)"/><rect x="847" y="228" width="6" height="4" transform="rotate(21 847 228)"/><rect x="1002" y="591" width="11" height="8" transform="rotate(-62 1002 591)"/><rect x="856" y="262" width="9" height="7" transform="rotate(21 856 262)"/><rect x="588" y="348" width="6" height="9" transform="rotate(-62 588 348)"/><rect x="973" y="576" width="7" height="4" transform="rotate(35 973 576)"/><rect x="801" y="477" width="6" height="3" transform="rotate(21 801 477)"/><rect x="402" y="515" width="10" height="7" transform="rotate(21 402 515)"/><rect x="582" y="629" width="6" height="8" transform="rotate(21 582 629)"/><rect x="1126" y="548" width="9" height="8" transform="rotate(-62 1126 548)"/><rect x="627" y="520" width="10" height="4" transform="rotate(35 627 520)"/><rect x="388" y="230" width="10" height="4" transform="rotate(21 388 230)"/><rect x="1001" y="540" width="7" height="7" transform="rotate(21 1001 540)"/><rect x="1164" y="704" width="8" height="8" transform="rotate(-62 1164 704)"/><rect x="858" y="196" width="5" height="5" transform="rotate(-62 858 196)"/><rect x="916" y="638" width="5" height="7" transform="rotate(-30 916 638)"/><rect x="688" y="609" width="12" height="9" transform="rotate(-62 688 609)"/><rect x="596" y="577" width="12" height="4" transform="rotate(-62 596 577)"/><rect x="707" y="309" width="6" height="9" transform="rotate(35 707 309)"/><rect x="770" y="373" width="9" height="7" transform="rotate(35 770 373)"/><rect x="712" y="276" width="9" height="8" transform="rotate(50 712 276)"/><rect x="475" y="587" width="8" height="4" transform="rotate(-62 475 587)"/><rect x="1084" y="295" width="11" height="5" transform="rotate(21 1084 295)"/><rect x="579" y="373" width="5" height="5" transform="rotate(-62 579 373)"/><rect x="629" y="610" width="13" height="5" transform="rotate(21 629 610)"/><rect x="857" y="503" width="10" height="4" transform="rotate(21 857 503)"/><rect x="606" y="638" width="12" height="7" transform="rotate(-30 606 638)"/><rect x="746" y="540" width="14" height="4" transform="rotate(21 746 540)"/><rect x="475" y="282" width="13" height="5" transform="rotate(50 475 282)"/><rect x="699" y="270" width="6" height="6" transform="rotate(-62 699 270)"/><rect x="480" y="496" width="6" height="7" transform="rotate(-30 480 496)"/><rect x="1132" y="202" width="13" height="4" transform="rotate(21 1132 202)"/><rect x="1183" y="526" width="5" height="6" transform="rotate(-62 1183 526)"/><rect x="933" y="500" width="13" height="4" transform="rotate(35 933 500)"/><rect x="683" y="441" width="5" height="7" transform="rotate(-62 683 441)"/><rect x="472" y="477" width="11" height="4" transform="rotate(21 472 477)"/><rect x="515" y="299" width="7" height="8" transform="rotate(-62 515 299)"/><rect x="797" y="322" width="7" height="6" transform="rotate(35 797 322)"/><rect x="558" y="646" width="8" height="8" transform="rotate(21 558 646)"/><rect x="435" y="580" width="9" height="6" transform="rotate(21 435 580)"/><rect x="1223" y="396" width="7" height="3" transform="rotate(-30 1223 396)"/><rect x="978" y="495" width="9" height="8" transform="rotate(-62 978 495)"/><rect x="496" y="403" width="13" height="5" transform="rotate(21 496 403)"/><rect x="865" y="431" width="10" height="4" transform="rotate(21 865 431)"/><rect x="401" y="383" width="13" height="9" transform="rotate(21 401 383)"/><rect x="574" y="445" width="6" height="4" transform="rotate(21 574 445)"/><rect x="1169" y="417" width="10" height="9" transform="rotate(21 1169 417)"/><rect x="945" y="532" width="11" height="3" transform="rotate(-30 945 532)"/><rect x="1020" y="461" width="6" height="3" transform="rotate(21 1020 461)"/><rect x="972" y="341" width="12" height="5" transform="rotate(21 972 341)"/><rect x="436" y="570" width="5" height="9" transform="rotate(21 436 570)"/><rect x="1077" y="666" width="11" height="7" transform="rotate(50 1077 666)"/><rect x="1189" y="254" width="9" height="6" transform="rotate(-30 1189 254)"/><rect x="694" y="418" width="6" height="9" transform="rotate(35 694 418)"/><rect x="788" y="560" width="8" height="6" transform="rotate(-62 788 560)"/><rect x="1130" y="496" width="11" height="5" transform="rotate(-62 1130 496)"/><rect x="472" y="394" width="10" height="5" transform="rotate(21 472 394)"/><rect x="735" y="677" width="13" height="4" transform="rotate(21 735 677)"/><rect x="726" y="210" width="8" height="8" transform="rotate(-62 726 210)"/><rect x="1204" y="420" width="12" height="4" transform="rotate(21 1204 420)"/><rect x="715" y="454" width="12" height="8" transform="rotate(35 715 454)"/><rect x="446" y="437" width="4" height="4" transform="rotate(-62 446 437)"/><rect x="941" y="614" width="10" height="7" transform="rotate(21 941 614)"/><rect x="567" y="317" width="12" height="3" transform="rotate(21 567 317)"/><rect x="849" y="532" width="7" height="3" transform="rotate(21 849 532)"/><rect x="421" y="226" width="11" height="7" transform="rotate(-62 421 226)"/><rect x="979" y="342" width="10" height="3" transform="rotate(-30 979 342)"/><rect x="890" y="347" width="7" height="7" transform="rotate(21 890 347)"/><rect x="415" y="459" width="7" height="5" transform="rotate(35 415 459)"/><rect x="815" y="453" width="11" height="5" transform="rotate(50 815 453)"/><rect x="1207" y="458" width="10" height="7" transform="rotate(-62 1207 458)"/><rect x="1281" y="680" width="7" height="8" transform="rotate(-62 1281 680)"/><rect x="454" y="476" width="5" height="8" transform="rotate(21 454 476)"/><rect x="574" y="511" width="6" height="6" transform="rotate(21 574 511)"/><rect x="614" y="606" width="6" height="7" transform="rotate(50 614 606)"/><rect x="366" y="292" width="14" height="5" transform="rotate(50 366 292)"/><rect x="513" y="537" width="10" height="9" transform="rotate(-62 513 537)"/><rect x="713" y="487" width="9" height="4" transform="rotate(21 713 487)"/><rect x="1256" y="594" width="14" height="6" transform="rotate(21 1256 594)"/><rect x="556" y="576" width="11" height="9" transform="rotate(35 556 576)"/><rect x="1173" y="331" width="12" height="6" transform="rotate(-62 1173 331)"/><rect x="905" y="701" width="13" height="4" transform="rotate(21 905 701)"/><rect x="489" y="273" width="10" height="4" transform="rotate(35 489 273)"/><rect x="1159" y="464" width="5" height="6" transform="rotate(35 1159 464)"/><rect x="1261" y="342" width="5" height="4" transform="rotate(21 1261 342)"/><rect x="1241" y="306" width="9" height="6" transform="rotate(50 1241 306)"/><rect x="1084" y="241" width="13" height="5" transform="rotate(-62 1084 241)"/><rect x="347" y="244" width="11" height="6" transform="rotate(21 347 244)"/><rect x="562" y="341" width="14" height="5" transform="rotate(21 562 341)"/><rect x="1181" y="257" width="12" height="3" transform="rotate(-30 1181 257)"/><rect x="855" y="612" width="6" height="6" transform="rotate(-62 855 612)"/><rect x="658" y="276" width="5" height="9" transform="rotate(35 658 276)"/><rect x="903" y="669" width="12" height="6" transform="rotate(35 903 669)"/><rect x="370" y="451" width="9" height="3" transform="rotate(-62 370 451)"/><rect x="1006" y="674" width="10" height="7" transform="rotate(50 1006 674)"/><rect x="1075" y="423" width="9" height="8" transform="rotate(35 1075 423)"/><rect x="1213" y="548" width="6" height="4" transform="rotate(21 1213 548)"/><rect x="526" y="301" width="11" height="4" transform="rotate(35 526 301)"/><rect x="1287" y="423" width="12" height="7" transform="rotate(21 1287 423)"/><rect x="1110" y="223" width="8" height="3" transform="rotate(21 1110 223)"/><rect x="341" y="441" width="8" height="9" transform="rotate(50 341 441)"/><rect x="548" y="264" width="5" height="5" transform="rotate(35 548 264)"/><rect x="618" y="447" width="8" height="7" transform="rotate(21 618 447)"/><rect x="636" y="506" width="14" height="4" transform="rotate(35 636 506)"/><rect x="1138" y="633" width="13" height="6" transform="rotate(-30 1138 633)"/><rect x="1257" y="625" width="10" height="6" transform="rotate(21 1257 625)"/><rect x="1250" y="517" width="8" height="9" transform="rotate(-30 1250 517)"/><rect x="848" y="387" width="9" height="5" transform="rotate(21 848 387)"/><rect x="805" y="416" width="9" height="3" transform="rotate(-30 805 416)"/><rect x="1165" y="702" width="12" height="3" transform="rotate(50 1165 702)"/><rect x="966" y="336" width="13" height="8" transform="rotate(-62 966 336)"/><rect x="663" y="435" width="5" height="7" transform="rotate(21 663 435)"/><rect x="645" y="473" width="13" height="6" transform="rotate(21 645 473)"/><rect x="740" y="649" width="10" height="6" transform="rotate(21 740 649)"/><rect x="926" y="440" width="10" height="6" transform="rotate(-62 926 440)"/><rect x="633" y="645" width="5" height="8" transform="rotate(21 633 645)"/><rect x="1203" y="278" width="7" height="7" transform="rotate(-62 1203 278)"/><rect x="1044" y="563" width="14" height="8" transform="rotate(21 1044 563)"/><rect x="1246" y="595" width="14" height="4" transform="rotate(50 1246 595)"/><rect x="757" y="629" width="14" height="5" transform="rotate(35 757 629)"/><rect x="342" y="333" width="9" height="9" transform="rotate(21 342 333)"/><rect x="1134" y="193" width="12" height="7" transform="rotate(21 1134 193)"/><rect x="639" y="230" width="8" height="9" transform="rotate(21 639 230)"/><rect x="885" y="256" width="12" height="6" transform="rotate(21 885 256)"/><rect x="795" y="625" width="5" height="8" transform="rotate(21 795 625)"/><rect x="1107" y="311" width="4" height="8" transform="rotate(-62 1107 311)"/><rect x="418" y="588" width="12" height="7" transform="rotate(35 418 588)"/><rect x="503" y="557" width="8" height="4" transform="rotate(-30 503 557)"/><rect x="590" y="323" width="9" height="4" transform="rotate(35 590 323)"/><rect x="1183" y="318" width="11" height="7" transform="rotate(21 1183 318)"/><rect x="519" y="351" width="4" height="5" transform="rotate(-62 519 351)"/><rect x="1213" y="543" width="12" height="6" transform="rotate(-30 1213 543)"/><rect x="427" y="373" width="13" height="4" transform="rotate(21 427 373)"/><rect x="1202" y="400" width="5" height="6" transform="rotate(21 1202 400)"/><rect x="1168" y="404" width="8" height="3" transform="rotate(35 1168 404)"/><rect x="518" y="496" width="8" height="5" transform="rotate(-30 518 496)"/><rect x="838" y="554" width="5" height="5" transform="rotate(-62 838 554)"/><rect x="728" y="344" width="5" height="6" transform="rotate(-30 728 344)"/><rect x="597" y="639" width="10" height="6" transform="rotate(50 597 639)"/><rect x="925" y="239" width="5" height="3" transform="rotate(-30 925 239)"/><rect x="1157" y="325" width="7" height="4" transform="rotate(21 1157 325)"/><rect x="818" y="291" width="4" height="8" transform="rotate(35 818 291)"/><rect x="687" y="257" width="10" height="7" transform="rotate(50 687 257)"/><rect x="962" y="352" width="9" height="5" transform="rotate(-30 962 352)"/><rect x="1126" y="341" width="13" height="8" transform="rotate(-30 1126 341)"/><rect x="915" y="514" width="6" height="5" transform="rotate(21 915 514)"/><rect x="723" y="704" width="4" height="8" transform="rotate(-30 723 704)"/><rect x="685" y="621" width="6" height="8" transform="rotate(-30 685 621)"/><rect x="1286" y="569" width="11" height="7" transform="rotate(21 1286 569)"/><rect x="686" y="407" width="10" height="8" transform="rotate(-30 686 407)"/><rect x="936" y="382" width="5" height="3" transform="rotate(21 936 382)"/><rect x="887" y="424" width="14" height="5" transform="rotate(35 887 424)"/><rect x="875" y="519" width="6" height="7" transform="rotate(50 875 519)"/><rect x="642" y="392" width="14" height="7" transform="rotate(21 642 392)"/><rect x="1270" y="484" width="6" height="3" transform="rotate(21 1270 484)"/><rect x="378" y="347" width="5" height="4" transform="rotate(-30 378 347)"/><rect x="1078" y="421" width="9" height="6" transform="rotate(21 1078 421)"/><rect x="1031" y="282" width="6" height="4" transform="rotate(21 1031 282)"/><rect x="1212" y="616" width="7" height="3" transform="rotate(35 1212 616)"/><rect x="956" y="309" width="4" height="6" transform="rotate(21 956 309)"/><rect x="1156" y="401" width="11" height="5" transform="rotate(-62 1156 401)"/><rect x="582" y="434" width="6" height="8" transform="rotate(35 582 434)"/><rect x="1057" y="262" width="11" height="8" transform="rotate(21 1057 262)"/><rect x="838" y="523" width="5" height="5" transform="rotate(-62 838 523)"/><rect x="922" y="358" width="4" height="7" transform="rotate(50 922 358)"/><rect x="1080" y="564" width="7" height="4" transform="rotate(-62 1080 564)"/><rect x="613" y="566" width="7" height="8" transform="rotate(35 613 566)"/><rect x="1112" y="702" width="8" height="9" transform="rotate(21 1112 702)"/><rect x="880" y="581" width="10" height="7" transform="rotate(35 880 581)"/><rect x="805" y="418" width="10" height="7" transform="rotate(-62 805 418)"/><rect x="797" y="212" width="12" height="4" transform="rotate(-30 797 212)"/><rect x="1075" y="552" width="7" height="7" transform="rotate(21 1075 552)"/><rect x="939" y="422" width="11" height="7" transform="rotate(-62 939 422)"/><rect x="599" y="447" width="6" height="8" transform="rotate(-62 599 447)"/><rect x="709" y="205" width="7" height="8" transform="rotate(-62 709 205)"/><rect x="882" y="282" width="11" height="4" transform="rotate(21 882 282)"/><rect x="1255" y="350" width="12" height="5" transform="rotate(-30 1255 350)"/><rect x="1230" y="339" width="11" height="7" transform="rotate(35 1230 339)"/><rect x="570" y="683" width="4" height="5" transform="rotate(35 570 683)"/><rect x="1077" y="605" width="7" height="5" transform="rotate(-62 1077 605)"/><rect x="596" y="458" width="14" height="4" transform="rotate(35 596 458)"/><rect x="437" y="382" width="5" height="4" transform="rotate(-62 437 382)"/><rect x="678" y="460" width="12" height="3" transform="rotate(50 678 460)"/><rect x="1211" y="601" width="10" height="6" transform="rotate(35 1211 601)"/><rect x="1205" y="319" width="7" height="7" transform="rotate(-62 1205 319)"/><rect x="1218" y="651" width="4" height="7" transform="rotate(-62 1218 651)"/><rect x="450" y="544" width="9" height="8" transform="rotate(35 450 544)"/><rect x="967" y="292" width="10" height="6" transform="rotate(-30 967 292)"/><rect x="505" y="560" width="4" height="5" transform="rotate(21 505 560)"/><rect x="793" y="458" width="13" height="9" transform="rotate(21 793 458)"/><rect x="823" y="270" width="8" height="5" transform="rotate(35 823 270)"/><rect x="778" y="674" width="7" height="5" transform="rotate(35 778 674)"/><rect x="343" y="447" width="9" height="4" transform="rotate(21 343 447)"/><rect x="990" y="431" width="14" height="4" transform="rotate(21 990 431)"/><rect x="650" y="270" width="6" height="6" transform="rotate(35 650 270)"/><rect x="673" y="233" width="5" height="6" transform="rotate(-62 673 233)"/><rect x="1226" y="391" width="12" height="6" transform="rotate(35 1226 391)"/><rect x="615" y="474" width="4" height="6" transform="rotate(21 615 474)"/><rect x="521" y="371" width="10" height="4" transform="rotate(21 521 371)"/><rect x="1004" y="568" width="10" height="3" transform="rotate(-30 1004 568)"/><rect x="748" y="500" width="12" height="5" transform="rotate(21 748 500)"/><rect x="721" y="485" width="9" height="5" transform="rotate(-30 721 485)"/><rect x="1285" y="575" width="6" height="4" transform="rotate(-62 1285 575)"/><rect x="451" y="406" width="13" height="3" transform="rotate(50 451 406)"/><rect x="998" y="454" width="14" height="6" transform="rotate(21 998 454)"/><rect x="715" y="263" width="12" height="4" transform="rotate(50 715 263)"/><rect x="1099" y="261" width="13" height="6" transform="rotate(-62 1099 261)"/><rect x="406" y="252" width="13" height="5" transform="rotate(21 406 252)"/><rect x="1184" y="457" width="9" height="9" transform="rotate(-62 1184 457)"/><rect x="457" y="241" width="6" height="4" transform="rotate(21 457 241)"/><rect x="728" y="211" width="13" height="6" transform="rotate(-62 728 211)"/><rect x="1057" y="349" width="11" height="4" transform="rotate(-30 1057 349)"/><rect x="1073" y="280" width="7" height="8" transform="rotate(35 1073 280)"/><rect x="527" y="248" width="11" height="7" transform="rotate(21 527 248)"/><rect x="1214" y="528" width="11" height="7" transform="rotate(-30 1214 528)"/><rect x="882" y="410" width="5" height="5" transform="rotate(50 882 410)"/><rect x="389" y="317" width="9" height="6" transform="rotate(21 389 317)"/><rect x="736" y="385" width="14" height="4" transform="rotate(21 736 385)"/><rect x="636" y="252" width="9" height="4" transform="rotate(21 636 252)"/><rect x="679" y="316" width="4" height="8" transform="rotate(-62 679 316)"/><rect x="1165" y="541" width="13" height="8" transform="rotate(-62 1165 541)"/><rect x="1132" y="317" width="7" height="7" transform="rotate(-30 1132 317)"/><rect x="753" y="253" width="6" height="8" transform="rotate(35 753 253)"/><rect x="434" y="499" width="14" height="7" transform="rotate(-30 434 499)"/><rect x="1208" y="693" width="8" height="4" transform="rotate(-30 1208 693)"/><rect x="967" y="437" width="13" height="9" transform="rotate(21 967 437)"/><rect x="420" y="497" width="8" height="4" transform="rotate(21 420 497)"/><rect x="892" y="420" width="6" height="8" transform="rotate(21 892 420)"/><rect x="749" y="613" width="6" height="7" transform="rotate(35 749 613)"/><rect x="1258" y="568" width="5" height="8" transform="rotate(21 1258 568)"/><rect x="431" y="405" width="10" height="7" transform="rotate(35 431 405)"/><rect x="1138" y="424" width="7" height="4" transform="rotate(-62 1138 424)"/><rect x="842" y="270" width="14" height="5" transform="rotate(-62 842 270)"/><rect x="755" y="567" width="7" height="7" transform="rotate(-62 755 567)"/><rect x="1201" y="278" width="6" height="4" transform="rotate(-62 1201 278)"/><rect x="1025" y="282" width="12" height="5" transform="rotate(-30 1025 282)"/><rect x="677" y="218" width="12" height="7" transform="rotate(21 677 218)"/><rect x="1269" y="464" width="11" height="5" transform="rotate(-62 1269 464)"/><rect x="1122" y="259" width="13" height="9" transform="rotate(-30 1122 259)"/><rect x="819" y="501" width="5" height="7" transform="rotate(-62 819 501)"/><rect x="326" y="560" width="8" height="3" transform="rotate(-62 326 560)"/><rect x="412" y="249" width="7" height="6" transform="rotate(-62 412 249)"/><rect x="1276" y="619" width="12" height="7" transform="rotate(21 1276 619)"/><rect x="998" y="650" width="11" height="4" transform="rotate(21 998 650)"/><rect x="346" y="485" width="13" height="3" transform="rotate(50 346 485)"/><rect x="510" y="445" width="9" height="8" transform="rotate(-30 510 445)"/><rect x="1143" y="254" width="11" height="5" transform="rotate(-62 1143 254)"/><rect x="1009" y="578" width="14" height="8" transform="rotate(35 1009 578)"/><rect x="597" y="334" width="5" height="9" transform="rotate(21 597 334)"/><rect x="406" y="390" width="10" height="7" transform="rotate(35 406 390)"/><rect x="1223" y="321" width="6" height="7" transform="rotate(-62 1223 321)"/><rect x="492" y="318" width="9" height="6" transform="rotate(50 492 318)"/><rect x="1188" y="435" width="4" height="8" transform="rotate(21 1188 435)"/><rect x="952" y="625" width="4" height="3" transform="rotate(21 952 625)"/><rect x="448" y="345" width="13" height="7" transform="rotate(21 448 345)"/><rect x="813" y="274" width="13" height="7" transform="rotate(-62 813 274)"/><rect x="632" y="262" width="6" height="5" transform="rotate(21 632 262)"/><rect x="617" y="263" width="7" height="4" transform="rotate(35 617 263)"/><rect x="1097" y="238" width="7" height="9" transform="rotate(21 1097 238)"/><rect x="1063" y="469" width="12" height="6" transform="rotate(21 1063 469)"/><rect x="872" y="507" width="6" height="5" transform="rotate(50 872 507)"/><rect x="342" y="244" width="6" height="9" transform="rotate(50 342 244)"/><rect x="1093" y="648" width="7" height="4" transform="rotate(-62 1093 648)"/><rect x="994" y="385" width="7" height="4" transform="rotate(-30 994 385)"/><rect x="769" y="612" width="7" height="5" transform="rotate(21 769 612)"/><rect x="1044" y="648" width="8" height="7" transform="rotate(50 1044 648)"/><rect x="984" y="377" width="10" height="7" transform="rotate(-30 984 377)"/><rect x="588" y="650" width="12" height="5" transform="rotate(21 588 650)"/><rect x="994" y="532" width="8" height="3" transform="rotate(-62 994 532)"/><rect x="859" y="471" width="8" height="6" transform="rotate(21 859 471)"/><rect x="453" y="322" width="11" height="9" transform="rotate(-30 453 322)"/><rect x="943" y="609" width="11" height="9" transform="rotate(21 943 609)"/><rect x="542" y="566" width="12" height="9" transform="rotate(50 542 566)"/><rect x="837" y="591" width="6" height="6" transform="rotate(50 837 591)"/><rect x="1259" y="610" width="4" height="8" transform="rotate(-62 1259 610)"/><rect x="981" y="350" width="11" height="6" transform="rotate(21 981 350)"/><rect x="675" y="648" width="11" height="6" transform="rotate(35 675 648)"/><rect x="1191" y="561" width="9" height="8" transform="rotate(21 1191 561)"/><rect x="333" y="440" width="12" height="5" transform="rotate(21 333 440)"/><rect x="951" y="216" width="5" height="3" transform="rotate(50 951 216)"/><rect x="635" y="328" width="8" height="3" transform="rotate(-30 635 328)"/><rect x="884" y="467" width="9" height="6" transform="rotate(-62 884 467)"/><rect x="1122" y="232" width="5" height="5" transform="rotate(21 1122 232)"/><rect x="848" y="667" width="11" height="4" transform="rotate(-62 848 667)"/><rect x="538" y="307" width="4" height="5" transform="rotate(21 538 307)"/><rect x="339" y="409" width="13" height="8" transform="rotate(50 339 409)"/><rect x="901" y="348" width="11" height="7" transform="rotate(21 901 348)"/><rect x="779" y="432" width="7" height="3" transform="rotate(-30 779 432)"/><rect x="1239" y="360" width="10" height="6" transform="rotate(21 1239 360)"/><rect x="1149" y="614" width="9" height="4" transform="rotate(-62 1149 614)"/><rect x="681" y="508" width="10" height="5" transform="rotate(35 681 508)"/><rect x="1208" y="393" width="12" height="9" transform="rotate(35 1208 393)"/><rect x="643" y="563" width="12" height="4" transform="rotate(21 643 563)"/><rect x="893" y="619" width="5" height="6" transform="rotate(35 893 619)"/><rect x="1274" y="676" width="5" height="5" transform="rotate(50 1274 676)"/><rect x="841" y="687" width="7" height="3" transform="rotate(-62 841 687)"/><rect x="997" y="524" width="5" height="6" transform="rotate(50 997 524)"/><rect x="1171" y="325" width="12" height="3" transform="rotate(50 1171 325)"/><rect x="348" y="345" width="4" height="3" transform="rotate(21 348 345)"/><rect x="553" y="559" width="11" height="4" transform="rotate(35 553 559)"/><rect x="463" y="233" width="14" height="8" transform="rotate(-30 463 233)"/><rect x="758" y="315" width="6" height="7" transform="rotate(-62 758 315)"/><rect x="1228" y="369" width="12" height="6" transform="rotate(-62 1228 369)"/><rect x="719" y="481" width="12" height="4" transform="rotate(21 719 481)"/><rect x="848" y="635" width="5" height="8" transform="rotate(-30 848 635)"/><rect x="656" y="404" width="12" height="5" transform="rotate(-62 656 404)"/><rect x="327" y="241" width="11" height="4" transform="rotate(-62 327 241)"/><rect x="752" y="499" width="11" height="7" transform="rotate(21 752 499)"/><rect x="1141" y="358" width="5" height="5" transform="rotate(-62 1141 358)"/><rect x="892" y="699" width="6" height="3" transform="rotate(-62 892 699)"/><rect x="428" y="308" width="8" height="9" transform="rotate(35 428 308)"/><rect x="744" y="706" width="13" height="8" transform="rotate(-30 744 706)"/><rect x="1000" y="360" width="12" height="4" transform="rotate(21 1000 360)"/><rect x="980" y="243" width="10" height="6" transform="rotate(21 980 243)"/><rect x="1045" y="539" width="8" height="4" transform="rotate(50 1045 539)"/><rect x="781" y="437" width="11" height="7" transform="rotate(50 781 437)"/><rect x="803" y="673" width="7" height="4" transform="rotate(21 803 673)"/><rect x="641" y="308" width="10" height="7" transform="rotate(-62 641 308)"/><rect x="755" y="615" width="13" height="6" transform="rotate(-30 755 615)"/><rect x="746" y="530" width="13" height="4" transform="rotate(35 746 530)"/><rect x="1130" y="364" width="5" height="4" transform="rotate(21 1130 364)"/><rect x="1044" y="518" width="13" height="7" transform="rotate(21 1044 518)"/><rect x="713" y="492" width="9" height="4" transform="rotate(21 713 492)"/><rect x="1251" y="378" width="10" height="6" transform="rotate(-62 1251 378)"/><rect x="519" y="659" width="14" height="7" transform="rotate(21 519 659)"/><rect x="359" y="347" width="10" height="8" transform="rotate(21 359 347)"/><rect x="348" y="689" width="12" height="7" transform="rotate(35 348 689)"/><rect x="1281" y="667" width="13" height="7" transform="rotate(-30 1281 667)"/><rect x="461" y="211" width="12" height="7" transform="rotate(-30 461 211)"/><rect x="626" y="331" width="13" height="6" transform="rotate(21 626 331)"/><rect x="602" y="653" width="4" height="8" transform="rotate(21 602 653)"/><rect x="1196" y="613" width="4" height="6" transform="rotate(21 1196 613)"/><rect x="1086" y="440" width="12" height="4" transform="rotate(21 1086 440)"/><rect x="584" y="394" width="13" height="6" transform="rotate(-62 584 394)"/><rect x="706" y="307" width="11" height="7" transform="rotate(50 706 307)"/><rect x="994" y="692" width="10" height="4" transform="rotate(21 994 692)"/><rect x="638" y="369" width="14" height="3" transform="rotate(50 638 369)"/><rect x="967" y="451" width="12" height="4" transform="rotate(-62 967 451)"/><rect x="826" y="589" width="7" height="5" transform="rotate(-30 826 589)"/><rect x="1003" y="651" width="7" height="8" transform="rotate(50 1003 651)"/><rect x="878" y="404" width="10" height="3" transform="rotate(21 878 404)"/><rect x="426" y="472" width="9" height="8" transform="rotate(21 426 472)"/><rect x="1031" y="511" width="6" height="7" transform="rotate(-62 1031 511)"/><rect x="924" y="410" width="6" height="5" transform="rotate(35 924 410)"/><rect x="935" y="674" width="6" height="5" transform="rotate(-30 935 674)"/><rect x="381" y="349" width="9" height="6" transform="rotate(35 381 349)"/><rect x="951" y="572" width="9" height="7" transform="rotate(21 951 572)"/><rect x="432" y="308" width="11" height="4" transform="rotate(21 432 308)"/><rect x="480" y="276" width="9" height="5" transform="rotate(-62 480 276)"/><rect x="791" y="613" width="11" height="8" transform="rotate(21 791 613)"/><rect x="724" y="379" width="7" height="3" transform="rotate(-62 724 379)"/><rect x="1037" y="447" width="4" height="4" transform="rotate(-30 1037 447)"/><rect x="766" y="299" width="12" height="8" transform="rotate(21 766 299)"/><rect x="1235" y="427" width="14" height="3" transform="rotate(21 1235 427)"/><rect x="921" y="541" width="10" height="7" transform="rotate(50 921 541)"/><rect x="836" y="532" width="6" height="6" transform="rotate(-62 836 532)"/><rect x="658" y="296" width="13" height="8" transform="rotate(50 658 296)"/><rect x="593" y="295" width="8" height="4" transform="rotate(50 593 295)"/><rect x="550" y="390" width="5" height="8" transform="rotate(21 550 390)"/><rect x="963" y="266" width="12" height="7" transform="rotate(-62 963 266)"/><rect x="801" y="685" width="6" height="4" transform="rotate(50 801 685)"/><rect x="398" y="374" width="13" height="7" transform="rotate(21 398 374)"/><rect x="975" y="489" width="14" height="8" transform="rotate(21 975 489)"/><rect x="1071" y="317" width="10" height="6" transform="rotate(35 1071 317)"/><rect x="685" y="570" width="10" height="6" transform="rotate(21 685 570)"/><rect x="1067" y="471" width="11" height="7" transform="rotate(21 1067 471)"/><rect x="1262" y="585" width="6" height="6" transform="rotate(-30 1262 585)"/><rect x="1202" y="415" width="9" height="7" transform="rotate(21 1202 415)"/><rect x="797" y="413" width="11" height="7" transform="rotate(50 797 413)"/><rect x="1097" y="329" width="11" height="6" transform="rotate(21 1097 329)"/><rect x="756" y="377" width="4" height="6" transform="rotate(-62 756 377)"/><rect x="613" y="446" width="5" height="8" transform="rotate(-30 613 446)"/><rect x="753" y="373" width="9" height="6" transform="rotate(50 753 373)"/><rect x="922" y="430" width="10" height="4" transform="rotate(35 922 430)"/><rect x="596" y="375" width="7" height="7" transform="rotate(-30 596 375)"/><rect x="908" y="616" width="5" height="9" transform="rotate(35 908 616)"/><rect x="541" y="364" width="5" height="6" transform="rotate(21 541 364)"/><rect x="944" y="500" width="12" height="5" transform="rotate(21 944 500)"/><rect x="1020" y="267" width="14" height="6" transform="rotate(-62 1020 267)"/><rect x="685" y="525" width="7" height="9" transform="rotate(35 685 525)"/><rect x="519" y="460" width="6" height="6" transform="rotate(21 519 460)"/><rect x="794" y="699" width="5" height="4" transform="rotate(21 794 699)"/><rect x="1281" y="454" width="11" height="5" transform="rotate(21 1281 454)"/><rect x="1111" y="436" width="13" height="6" transform="rotate(-62 1111 436)"/><rect x="1147" y="664" width="5" height="8" transform="rotate(-62 1147 664)"/><rect x="878" y="638" width="6" height="6" transform="rotate(-30 878 638)"/><rect x="330" y="398" width="11" height="7" transform="rotate(-62 330 398)"/><rect x="816" y="508" width="13" height="9" transform="rotate(21 816 508)"/><rect x="566" y="521" width="13" height="7" transform="rotate(-30 566 521)"/><rect x="453" y="198" width="6" height="8" transform="rotate(35 453 198)"/><rect x="622" y="623" width="13" height="9" transform="rotate(-30 622 623)"/><rect x="391" y="394" width="8" height="5" transform="rotate(21 391 394)"/><rect x="458" y="454" width="14" height="8" transform="rotate(-30 458 454)"/><rect x="485" y="355" width="7" height="5" transform="rotate(21 485 355)"/><rect x="504" y="337" width="14" height="3" transform="rotate(-30 504 337)"/><rect x="416" y="580" width="8" height="9" transform="rotate(-62 416 580)"/><rect x="1039" y="247" width="6" height="5" transform="rotate(21 1039 247)"/><rect x="1070" y="691" width="9" height="4" transform="rotate(21 1070 691)"/><rect x="1116" y="258" width="9" height="6" transform="rotate(-30 1116 258)"/><rect x="1132" y="241" width="7" height="4" transform="rotate(50 1132 241)"/><rect x="427" y="220" width="7" height="7" transform="rotate(21 427 220)"/><rect x="1260" y="639" width="5" height="8" transform="rotate(-30 1260 639)"/><rect x="1248" y="319" width="9" height="4" transform="rotate(21 1248 319)"/><rect x="329" y="262" width="12" height="7" transform="rotate(21 329 262)"/><rect x="399" y="284" width="10" height="4" transform="rotate(21 399 284)"/><rect x="415" y="367" width="6" height="9" transform="rotate(21 415 367)"/><rect x="499" y="294" width="8" height="6" transform="rotate(21 499 294)"/><rect x="434" y="308" width="11" height="3" transform="rotate(21 434 308)"/><rect x="603" y="571" width="8" height="5" transform="rotate(-30 603 571)"/><rect x="1255" y="493" width="6" height="6" transform="rotate(21 1255 493)"/><rect x="680" y="417" width="10" height="9" transform="rotate(50 680 417)"/><rect x="499" y="493" width="7" height="6" transform="rotate(21 499 493)"/><rect x="344" y="455" width="7" height="7" transform="rotate(-30 344 455)"/><rect x="1205" y="241" width="5" height="4" transform="rotate(21 1205 241)"/><rect x="838" y="308" width="12" height="6" transform="rotate(35 838 308)"/><rect x="642" y="263" width="7" height="7" transform="rotate(35 642 263)"/><rect x="564" y="230" width="10" height="3" transform="rotate(-62 564 230)"/><rect x="649" y="421" width="11" height="4" transform="rotate(35 649 421)"/><rect x="546" y="239" width="9" height="8" transform="rotate(21 546 239)"/><rect x="534" y="325" width="4" height="7" transform="rotate(-30 534 325)"/><rect x="1217" y="479" width="13" height="6" transform="rotate(35 1217 479)"/><rect x="596" y="433" width="13" height="6" transform="rotate(21 596 433)"/><rect x="635" y="689" width="5" height="3" transform="rotate(-30 635 689)"/><rect x="669" y="322" width="6" height="5" transform="rotate(35 669 322)"/><rect x="1001" y="501" width="11" height="6" transform="rotate(21 1001 501)"/><rect x="694" y="462" width="4" height="4" transform="rotate(35 694 462)"/><rect x="483" y="558" width="13" height="8" transform="rotate(21 483 558)"/><rect x="975" y="287" width="10" height="5" transform="rotate(21 975 287)"/><rect x="385" y="481" width="14" height="7" transform="rotate(21 385 481)"/><rect x="912" y="362" width="12" height="8" transform="rotate(-30 912 362)"/><rect x="1011" y="655" width="12" height="4" transform="rotate(21 1011 655)"/><rect x="1066" y="232" width="13" height="6" transform="rotate(35 1066 232)"/><rect x="799" y="235" width="11" height="4" transform="rotate(21 799 235)"/><rect x="800" y="361" width="11" height="7" transform="rotate(-30 800 361)"/><rect x="869" y="667" width="7" height="6" transform="rotate(21 869 667)"/><rect x="476" y="443" width="11" height="3" transform="rotate(-62 476 443)"/><rect x="786" y="224" width="13" height="7" transform="rotate(21 786 224)"/><rect x="407" y="444" width="13" height="8" transform="rotate(21 407 444)"/><rect x="1289" y="683" width="8" height="8" transform="rotate(-62 1289 683)"/><rect x="828" y="287" width="11" height="4" transform="rotate(-62 828 287)"/><rect x="607" y="252" width="12" height="8" transform="rotate(-30 607 252)"/><rect x="800" y="391" width="10" height="3" transform="rotate(35 800 391)"/><rect x="694" y="325" width="9" height="3" transform="rotate(35 694 325)"/><rect x="1101" y="529" width="10" height="7" transform="rotate(-62 1101 529)"/><rect x="609" y="612" width="12" height="8" transform="rotate(-62 609 612)"/><rect x="570" y="405" width="8" height="3" transform="rotate(-62 570 405)"/><rect x="797" y="474" width="13" height="3" transform="rotate(35 797 474)"/><rect x="394" y="268" width="5" height="7" transform="rotate(-62 394 268)"/><rect x="1100" y="224" width="4" height="7" transform="rotate(35 1100 224)"/><rect x="591" y="458" width="5" height="5" transform="rotate(21 591 458)"/><rect x="846" y="256" width="9" height="4" transform="rotate(-62 846 256)"/><rect x="1150" y="640" width="11" height="7" transform="rotate(-62 1150 640)"/><rect x="700" y="412" width="10" height="6" transform="rotate(35 700 412)"/><rect x="1189" y="362" width="4" height="8" transform="rotate(21 1189 362)"/><rect x="799" y="290" width="11" height="6" transform="rotate(21 799 290)"/><rect x="512" y="521" width="5" height="6" transform="rotate(21 512 521)"/><rect x="1220" y="263" width="8" height="4" transform="rotate(-30 1220 263)"/><rect x="1120" y="609" width="10" height="7" transform="rotate(21 1120 609)"/><rect x="1162" y="229" width="9" height="7" transform="rotate(-62 1162 229)"/><rect x="605" y="706" width="5" height="3" transform="rotate(35 605 706)"/><rect x="1028" y="491" width="6" height="9" transform="rotate(35 1028 491)"/><rect x="1150" y="468" width="10" height="6" transform="rotate(-30 1150 468)"/><rect x="1115" y="478" width="11" height="7" transform="rotate(21 1115 478)"/><rect x="523" y="466" width="5" height="5" transform="rotate(21 523 466)"/><rect x="1178" y="216" width="10" height="4" transform="rotate(-62 1178 216)"/><rect x="809" y="249" width="9" height="7" transform="rotate(35 809 249)"/><rect x="713" y="462" width="7" height="9" transform="rotate(-62 713 462)"/><rect x="1004" y="596" width="13" height="4" transform="rotate(35 1004 596)"/><rect x="1220" y="348" width="8" height="5" transform="rotate(21 1220 348)"/><rect x="595" y="539" width="8" height="7" transform="rotate(-62 595 539)"/><rect x="540" y="494" width="8" height="7" transform="rotate(50 540 494)"/><rect x="732" y="346" width="9" height="5" transform="rotate(21 732 346)"/><rect x="1180" y="582" width="6" height="8" transform="rotate(-62 1180 582)"/><rect x="1130" y="432" width="11" height="7" transform="rotate(-62 1130 432)"/><rect x="405" y="231" width="9" height="8" transform="rotate(-30 405 231)"/><rect x="1039" y="631" width="9" height="9" transform="rotate(21 1039 631)"/><rect x="941" y="239" width="12" height="8" transform="rotate(35 941 239)"/><rect x="624" y="705" width="14" height="3" transform="rotate(21 624 705)"/><rect x="686" y="692" width="9" height="4" transform="rotate(50 686 692)"/><rect x="348" y="260" width="14" height="8" transform="rotate(-62 348 260)"/><rect x="923" y="418" width="8" height="4" transform="rotate(-30 923 418)"/><rect x="589" y="256" width="13" height="6" transform="rotate(-62 589 256)"/><rect x="1123" y="529" width="4" height="3" transform="rotate(21 1123 529)"/><rect x="860" y="361" width="5" height="6" transform="rotate(-62 860 361)"/><rect x="688" y="457" width="6" height="3" transform="rotate(-62 688 457)"/><rect x="936" y="210" width="5" height="7" transform="rotate(-30 936 210)"/><rect x="670" y="458" width="7" height="9" transform="rotate(21 670 458)"/><rect x="730" y="454" width="4" height="8" transform="rotate(35 730 454)"/><rect x="959" y="586" width="13" height="3" transform="rotate(-62 959 586)"/><rect x="846" y="262" width="13" height="9" transform="rotate(21 846 262)"/><rect x="700" y="623" width="6" height="9" transform="rotate(21 700 623)"/><rect x="1281" y="534" width="9" height="3" transform="rotate(-30 1281 534)"/><rect x="1164" y="700" width="6" height="9" transform="rotate(21 1164 700)"/><rect x="533" y="403" width="5" height="6" transform="rotate(-62 533 403)"/><rect x="365" y="428" width="8" height="6" transform="rotate(21 365 428)"/><rect x="1012" y="683" width="7" height="7" transform="rotate(50 1012 683)"/><rect x="681" y="451" width="10" height="6" transform="rotate(-62 681 451)"/><rect x="577" y="661" width="14" height="9" transform="rotate(35 577 661)"/><rect x="837" y="201" width="9" height="7" transform="rotate(-30 837 201)"/><rect x="1224" y="343" width="8" height="8" transform="rotate(-62 1224 343)"/><rect x="355" y="200" width="9" height="4" transform="rotate(21 355 200)"/><rect x="453" y="582" width="11" height="5" transform="rotate(21 453 582)"/><rect x="858" y="682" width="9" height="6" transform="rotate(-30 858 682)"/><rect x="504" y="288" width="11" height="8" transform="rotate(-30 504 288)"/><rect x="1221" y="586" width="9" height="5" transform="rotate(21 1221 586)"/><rect x="914" y="465" width="12" height="7" transform="rotate(21 914 465)"/><rect x="674" y="434" width="6" height="4" transform="rotate(-30 674 434)"/><rect x="504" y="366" width="9" height="7" transform="rotate(-30 504 366)"/><rect x="725" y="621" width="9" height="3" transform="rotate(50 725 621)"/><rect x="540" y="442" width="11" height="5" transform="rotate(-30 540 442)"/><rect x="1069" y="303" width="7" height="8" transform="rotate(-62 1069 303)"/><rect x="386" y="299" width="6" height="8" transform="rotate(21 386 299)"/><rect x="365" y="333" width="9" height="4" transform="rotate(-62 365 333)"/><rect x="506" y="708" width="10" height="8" transform="rotate(21 506 708)"/><rect x="433" y="461" width="10" height="4" transform="rotate(-30 433 461)"/><rect x="623" y="577" width="10" height="8" transform="rotate(21 623 577)"/><rect x="722" y="237" width="11" height="4" transform="rotate(50 722 237)"/><rect x="818" y="655" width="4" height="6" transform="rotate(21 818 655)"/><rect x="922" y="387" width="9" height="6" transform="rotate(21 922 387)"/><rect x="626" y="631" width="14" height="5" transform="rotate(21 626 631)"/><rect x="1103" y="260" width="5" height="7" transform="rotate(21 1103 260)"/><rect x="480" y="581" width="4" height="4" transform="rotate(35 480 581)"/><rect x="627" y="454" width="5" height="6" transform="rotate(21 627 454)"/><rect x="800" y="691" width="12" height="4" transform="rotate(21 800 691)"/><rect x="1188" y="485" width="9" height="4" transform="rotate(35 1188 485)"/><rect x="443" y="565" width="7" height="3" transform="rotate(21 443 565)"/><rect x="1066" y="489" width="12" height="4" transform="rotate(-62 1066 489)"/><rect x="814" y="519" width="6" height="7" transform="rotate(50 814 519)"/><rect x="896" y="686" width="7" height="4" transform="rotate(21 896 686)"/><rect x="404" y="196" width="9" height="6" transform="rotate(21 404 196)"/><rect x="1204" y="554" width="9" height="4" transform="rotate(-30 1204 554)"/><rect x="1188" y="381" width="13" height="7" transform="rotate(-62 1188 381)"/><rect x="582" y="582" width="14" height="7" transform="rotate(21 582 582)"/><rect x="1003" y="689" width="9" height="8" transform="rotate(-30 1003 689)"/><rect x="1011" y="637" width="13" height="3" transform="rotate(-62 1011 637)"/><rect x="564" y="607" width="11" height="6" transform="rotate(35 564 607)"/><rect x="878" y="572" width="11" height="5" transform="rotate(-30 878 572)"/><rect x="824" y="471" width="14" height="6" transform="rotate(21 824 471)"/><rect x="1141" y="553" width="11" height="6" transform="rotate(21 1141 553)"/><rect x="968" y="197" width="8" height="9" transform="rotate(-62 968 197)"/><rect x="662" y="225" width="7" height="6" transform="rotate(21 662 225)"/><rect x="1163" y="326" width="13" height="5" transform="rotate(-30 1163 326)"/><rect x="966" y="700" width="7" height="3" transform="rotate(21 966 700)"/><rect x="329" y="330" width="5" height="8" transform="rotate(-62 329 330)"/><rect x="864" y="524" width="12" height="8" transform="rotate(35 864 524)"/><rect x="1130" y="659" width="11" height="3" transform="rotate(21 1130 659)"/><rect x="885" y="549" width="7" height="4" transform="rotate(35 885 549)"/><rect x="1102" y="419" width="6" height="4" transform="rotate(-30 1102 419)"/><rect x="401" y="480" width="5" height="7" transform="rotate(-62 401 480)"/><rect x="1183" y="259" width="11" height="8" transform="rotate(35 1183 259)"/><rect x="1050" y="490" width="5" height="6" transform="rotate(-62 1050 490)"/><rect x="607" y="709" width="11" height="8" transform="rotate(21 607 709)"/><rect x="500" y="704" width="11" height="6" transform="rotate(21 500 704)"/><rect x="603" y="383" width="11" height="5" transform="rotate(21 603 383)"/><rect x="1249" y="361" width="5" height="8" transform="rotate(-30 1249 361)"/><rect x="597" y="335" width="6" height="4" transform="rotate(21 597 335)"/><rect x="1212" y="258" width="8" height="8" transform="rotate(35 1212 258)"/><rect x="388" y="322" width="9" height="3" transform="rotate(-62 388 322)"/><rect x="1136" y="484" width="12" height="8" transform="rotate(35 1136 484)"/><rect x="1216" y="264" width="11" height="8" transform="rotate(21 1216 264)"/><rect x="901" y="447" width="6" height="7" transform="rotate(21 901 447)"/><rect x="1116" y="235" width="4" height="9" transform="rotate(-62 1116 235)"/><rect x="889" y="412" width="12" height="8" transform="rotate(-62 889 412)"/><rect x="974" y="312" width="9" height="4" transform="rotate(21 974 312)"/><rect x="821" y="498" width="9" height="8" transform="rotate(-62 821 498)"/><rect x="592" y="459" width="6" height="3" transform="rotate(21 592 459)"/><rect x="526" y="455" width="10" height="6" transform="rotate(-30 526 455)"/><rect x="1198" y="687" width="9" height="3" transform="rotate(21 1198 687)"/><rect x="1081" y="544" width="5" height="5" transform="rotate(35 1081 544)"/><rect x="601" y="304" width="14" height="6" transform="rotate(-62 601 304)"/><rect x="1033" y="385" width="11" height="9" transform="rotate(21 1033 385)"/><rect x="1068" y="344" width="12" height="6" transform="rotate(21 1068 344)"/><rect x="1100" y="358" width="5" height="8" transform="rotate(50 1100 358)"/><rect x="748" y="380" width="12" height="5" transform="rotate(50 748 380)"/><rect x="1209" y="588" width="6" height="5" transform="rotate(21 1209 588)"/><rect x="378" y="356" width="13" height="7" transform="rotate(-30 378 356)"/><rect x="451" y="530" width="8" height="4" transform="rotate(21 451 530)"/><rect x="641" y="205" width="12" height="8" transform="rotate(-62 641 205)"/><rect x="1193" y="322" width="8" height="3" transform="rotate(21 1193 322)"/><rect x="854" y="220" width="7" height="6" transform="rotate(21 854 220)"/><rect x="921" y="526" width="12" height="4" transform="rotate(21 921 526)"/><rect x="498" y="317" width="4" height="6" transform="rotate(21 498 317)"/><rect x="529" y="633" width="4" height="9" transform="rotate(21 529 633)"/><rect x="600" y="694" width="6" height="4" transform="rotate(50 600 694)"/><rect x="924" y="349" width="12" height="3" transform="rotate(-62 924 349)"/><rect x="1095" y="367" width="4" height="4" transform="rotate(21 1095 367)"/><rect x="814" y="587" width="6" height="5" transform="rotate(-62 814 587)"/><rect x="1099" y="556" width="5" height="4" transform="rotate(21 1099 556)"/><rect x="895" y="570" width="6" height="6" transform="rotate(21 895 570)"/><rect x="515" y="215" width="10" height="7" transform="rotate(21 515 215)"/><rect x="482" y="605" width="10" height="8" transform="rotate(21 482 605)"/><rect x="953" y="671" width="10" height="6" transform="rotate(-30 953 671)"/><rect x="803" y="300" width="12" height="3" transform="rotate(-62 803 300)"/><rect x="1095" y="304" width="11" height="4" transform="rotate(21 1095 304)"/><rect x="407" y="305" width="5" height="8" transform="rotate(-30 407 305)"/><rect x="955" y="372" width="5" height="6" transform="rotate(50 955 372)"/><rect x="1141" y="350" width="5" height="6" transform="rotate(21 1141 350)"/><rect x="1108" y="268" width="10" height="4" transform="rotate(21 1108 268)"/><rect x="580" y="594" width="12" height="7" transform="rotate(-30 580 594)"/><rect x="711" y="691" width="7" height="3" transform="rotate(35 711 691)"/><rect x="840" y="231" width="8" height="7" transform="rotate(21 840 231)"/><rect x="1192" y="498" width="13" height="7" transform="rotate(35 1192 498)"/><rect x="833" y="608" width="6" height="8" transform="rotate(21 833 608)"/><rect x="1007" y="676" width="10" height="9" transform="rotate(50 1007 676)"/><rect x="1035" y="598" width="5" height="3" transform="rotate(21 1035 598)"/><rect x="614" y="464" width="9" height="3" transform="rotate(21 614 464)"/><rect x="509" y="293" width="4" height="6" transform="rotate(35 509 293)"/><rect x="1094" y="603" width="10" height="3" transform="rotate(21 1094 603)"/><rect x="1075" y="251" width="9" height="5" transform="rotate(-62 1075 251)"/><rect x="1007" y="505" width="7" height="6" transform="rotate(50 1007 505)"/><rect x="378" y="396" width="12" height="4" transform="rotate(21 378 396)"/><rect x="710" y="454" width="12" height="8" transform="rotate(21 710 454)"/><rect x="692" y="560" width="6" height="7" transform="rotate(21 692 560)"/><rect x="872" y="689" width="7" height="9" transform="rotate(21 872 689)"/><rect x="1242" y="683" width="10" height="8" transform="rotate(-30 1242 683)"/><rect x="1137" y="208" width="6" height="7" transform="rotate(35 1137 208)"/><rect x="1074" y="270" width="5" height="6" transform="rotate(50 1074 270)"/><rect x="497" y="486" width="14" height="5" transform="rotate(35 497 486)"/><rect x="1252" y="540" width="8" height="6" transform="rotate(-30 1252 540)"/><rect x="926" y="314" width="10" height="8" transform="rotate(-30 926 314)"/><rect x="674" y="645" width="10" height="8" transform="rotate(-30 674 645)"/><rect x="800" y="196" width="13" height="4" transform="rotate(21 800 196)"/><rect x="712" y="684" width="7" height="7" transform="rotate(21 712 684)"/><rect x="1273" y="706" width="8" height="9" transform="rotate(21 1273 706)"/><rect x="832" y="484" width="6" height="8" transform="rotate(-30 832 484)"/><rect x="647" y="582" width="8" height="5" transform="rotate(21 647 582)"/><rect x="854" y="261" width="9" height="3" transform="rotate(21 854 261)"/><rect x="1219" y="673" width="11" height="8" transform="rotate(35 1219 673)"/><rect x="382" y="506" width="6" height="4" transform="rotate(35 382 506)"/><rect x="1015" y="493" width="9" height="6" transform="rotate(21 1015 493)"/><rect x="999" y="403" width="9" height="4" transform="rotate(35 999 403)"/><rect x="992" y="287" width="6" height="5" transform="rotate(35 992 287)"/><rect x="806" y="628" width="5" height="4" transform="rotate(21 806 628)"/><rect x="981" y="253" width="10" height="7" transform="rotate(50 981 253)"/><rect x="861" y="230" width="11" height="5" transform="rotate(21 861 230)"/><rect x="918" y="675" width="8" height="5" transform="rotate(35 918 675)"/><rect x="581" y="601" width="7" height="9" transform="rotate(21 581 601)"/><rect x="980" y="361" width="6" height="6" transform="rotate(-62 980 361)"/><rect x="1103" y="219" width="9" height="4" transform="rotate(21 1103 219)"/><rect x="752" y="409" width="12" height="6" transform="rotate(21 752 409)"/><rect x="600" y="227" width="13" height="8" transform="rotate(-30 600 227)"/><rect x="348" y="271" width="8" height="7" transform="rotate(-62 348 271)"/><rect x="617" y="434" width="13" height="8" transform="rotate(-62 617 434)"/><rect x="836" y="355" width="11" height="9" transform="rotate(21 836 355)"/><rect x="1178" y="248" width="10" height="4" transform="rotate(21 1178 248)"/><rect x="1134" y="539" width="14" height="6" transform="rotate(-30 1134 539)"/><rect x="1265" y="607" width="7" height="4" transform="rotate(35 1265 607)"/><rect x="1241" y="506" width="11" height="7" transform="rotate(-62 1241 506)"/><rect x="471" y="485" width="7" height="6" transform="rotate(21 471 485)"/><rect x="864" y="330" width="7" height="8" transform="rotate(50 864 330)"/><rect x="570" y="560" width="6" height="5" transform="rotate(21 570 560)"/><rect x="1178" y="347" width="11" height="4" transform="rotate(21 1178 347)"/><rect x="492" y="335" width="6" height="6" transform="rotate(21 492 335)"/><rect x="1019" y="359" width="12" height="8" transform="rotate(21 1019 359)"/><rect x="797" y="260" width="14" height="7" transform="rotate(21 797 260)"/><rect x="833" y="345" width="5" height="7" transform="rotate(21 833 345)"/><rect x="707" y="636" width="4" height="4" transform="rotate(21 707 636)"/><rect x="565" y="333" width="6" height="9" transform="rotate(-30 565 333)"/><rect x="327" y="212" width="14" height="8" transform="rotate(21 327 212)"/><rect x="710" y="479" width="7" height="4" transform="rotate(21 710 479)"/><rect x="983" y="665" width="5" height="8" transform="rotate(35 983 665)"/><rect x="583" y="407" width="14" height="7" transform="rotate(50 583 407)"/><rect x="377" y="307" width="10" height="5" transform="rotate(21 377 307)"/><rect x="1018" y="370" width="10" height="7" transform="rotate(50 1018 370)"/><rect x="614" y="548" width="4" height="4" transform="rotate(-30 614 548)"/><rect x="693" y="591" width="12" height="5" transform="rotate(-30 693 591)"/><rect x="1030" y="406" width="4" height="5" transform="rotate(21 1030 406)"/><rect x="605" y="299" width="13" height="5" transform="rotate(21 605 299)"/><rect x="562" y="367" width="10" height="4" transform="rotate(-30 562 367)"/><rect x="632" y="266" width="7" height="7" transform="rotate(50 632 266)"/><rect x="958" y="443" width="12" height="9" transform="rotate(35 958 443)"/><rect x="945" y="204" width="9" height="7" transform="rotate(-30 945 204)"/><rect x="1121" y="423" width="9" height="6" transform="rotate(35 1121 423)"/><rect x="431" y="432" width="6" height="5" transform="rotate(-62 431 432)"/><rect x="585" y="674" width="7" height="5" transform="rotate(21 585 674)"/><rect x="684" y="682" width="14" height="4" transform="rotate(-62 684 682)"/><rect x="689" y="453" width="12" height="7" transform="rotate(21 689 453)"/><rect x="979" y="203" width="8" height="6" transform="rotate(21 979 203)"/><rect x="741" y="381" width="11" height="9" transform="rotate(21 741 381)"/><rect x="730" y="525" width="5" height="7" transform="rotate(21 730 525)"/><rect x="1179" y="265" width="6" height="8" transform="rotate(21 1179 265)"/><rect x="1061" y="228" width="10" height="3" transform="rotate(-62 1061 228)"/><rect x="1092" y="359" width="4" height="7" transform="rotate(-62 1092 359)"/><rect x="678" y="363" width="12" height="9" transform="rotate(35 678 363)"/><rect x="1088" y="296" width="11" height="7" transform="rotate(-30 1088 296)"/><rect x="624" y="567" width="14" height="6" transform="rotate(21 624 567)"/><rect x="711" y="411" width="12" height="9" transform="rotate(35 711 411)"/><rect x="1005" y="620" width="13" height="9" transform="rotate(50 1005 620)"/><rect x="498" y="370" width="7" height="8" transform="rotate(21 498 370)"/><rect x="672" y="597" width="11" height="7" transform="rotate(-30 672 597)"/><rect x="1099" y="273" width="10" height="7" transform="rotate(21 1099 273)"/><rect x="1101" y="448" width="9" height="6" transform="rotate(-30 1101 448)"/><rect x="647" y="594" width="8" height="7" transform="rotate(50 647 594)"/><rect x="330" y="552" width="11" height="4" transform="rotate(35 330 552)"/><rect x="1154" y="654" width="10" height="8" transform="rotate(-62 1154 654)"/><rect x="1185" y="488" width="14" height="7" transform="rotate(21 1185 488)"/><rect x="1051" y="410" width="5" height="8" transform="rotate(21 1051 410)"/><rect x="1021" y="305" width="9" height="6" transform="rotate(35 1021 305)"/><rect x="1085" y="608" width="8" height="6" transform="rotate(-62 1085 608)"/><rect x="1267" y="662" width="6" height="8" transform="rotate(50 1267 662)"/><rect x="919" y="587" width="11" height="5" transform="rotate(-62 919 587)"/><rect x="681" y="597" width="9" height="7" transform="rotate(21 681 597)"/><rect x="595" y="195" width="13" height="6" transform="rotate(-62 595 195)"/><rect x="1126" y="652" width="8" height="9" transform="rotate(50 1126 652)"/><rect x="756" y="678" width="6" height="8" transform="rotate(-62 756 678)"/><rect x="678" y="370" width="8" height="8" transform="rotate(21 678 370)"/><rect x="500" y="234" width="12" height="6" transform="rotate(-62 500 234)"/><rect x="1106" y="659" width="12" height="8" transform="rotate(21 1106 659)"/><rect x="1147" y="524" width="8" height="7" transform="rotate(21 1147 524)"/><rect x="1269" y="584" width="11" height="5" transform="rotate(21 1269 584)"/><rect x="847" y="361" width="7" height="7" transform="rotate(35 847 361)"/><rect x="1235" y="291" width="10" height="4" transform="rotate(21 1235 291)"/><rect x="857" y="492" width="11" height="6" transform="rotate(50 857 492)"/><rect x="332" y="693" width="10" height="5" transform="rotate(-62 332 693)"/><rect x="1189" y="501" width="4" height="7" transform="rotate(50 1189 501)"/><rect x="1285" y="600" width="12" height="6" transform="rotate(-62 1285 600)"/><rect x="624" y="323" width="4" height="4" transform="rotate(-62 624 323)"/><rect x="630" y="640" width="11" height="6" transform="rotate(21 630 640)"/><rect x="684" y="523" width="8" height="7" transform="rotate(21 684 523)"/><rect x="605" y="412" width="9" height="4" transform="rotate(21 605 412)"/><rect x="633" y="366" width="7" height="4" transform="rotate(21 633 366)"/><rect x="479" y="404" width="5" height="4" transform="rotate(35 479 404)"/><rect x="1172" y="211" width="13" height="9" transform="rotate(-30 1172 211)"/><rect x="888" y="457" width="11" height="6" transform="rotate(50 888 457)"/><rect x="1221" y="602" width="13" height="6" transform="rotate(35 1221 602)"/><rect x="657" y="417" width="8" height="4" transform="rotate(35 657 417)"/><rect x="1208" y="567" width="10" height="4" transform="rotate(21 1208 567)"/><rect x="883" y="592" width="5" height="6" transform="rotate(-62 883 592)"/><rect x="555" y="520" width="12" height="6" transform="rotate(-62 555 520)"/><rect x="1222" y="687" width="12" height="9" transform="rotate(-62 1222 687)"/><rect x="705" y="429" width="6" height="6" transform="rotate(-30 705 429)"/><rect x="412" y="396" width="6" height="8" transform="rotate(-62 412 396)"/><rect x="830" y="492" width="6" height="7" transform="rotate(50 830 492)"/><rect x="1098" y="565" width="11" height="5" transform="rotate(-62 1098 565)"/><rect x="599" y="573" width="14" height="9" transform="rotate(-62 599 573)"/><rect x="801" y="379" width="5" height="6" transform="rotate(21 801 379)"/><rect x="438" y="244" width="11" height="6" transform="rotate(-30 438 244)"/><rect x="721" y="700" width="13" height="5" transform="rotate(21 721 700)"/><rect x="759" y="615" width="11" height="8" transform="rotate(-62 759 615)"/><rect x="757" y="220" width="11" height="8" transform="rotate(-62 757 220)"/><rect x="1109" y="424" width="6" height="8" transform="rotate(21 1109 424)"/><rect x="1039" y="514" width="13" height="3" transform="rotate(35 1039 514)"/><rect x="1212" y="547" width="8" height="8" transform="rotate(21 1212 547)"/><rect x="456" y="283" width="9" height="6" transform="rotate(-30 456 283)"/><rect x="813" y="637" width="12" height="5" transform="rotate(21 813 637)"/><rect x="329" y="630" width="14" height="9" transform="rotate(21 329 630)"/><rect x="435" y="459" width="14" height="7" transform="rotate(21 435 459)"/><rect x="1251" y="700" width="10" height="6" transform="rotate(21 1251 700)"/><rect x="1191" y="631" width="8" height="6" transform="rotate(21 1191 631)"/><rect x="691" y="325" width="4" height="4" transform="rotate(21 691 325)"/><rect x="526" y="532" width="6" height="4" transform="rotate(21 526 532)"/><rect x="1042" y="339" width="12" height="4" transform="rotate(-62 1042 339)"/><rect x="900" y="518" width="7" height="7" transform="rotate(21 900 518)"/><rect x="899" y="339" width="12" height="6" transform="rotate(35 899 339)"/><rect x="863" y="680" width="13" height="5" transform="rotate(21 863 680)"/><rect x="1027" y="531" width="4" height="7" transform="rotate(21 1027 531)"/><rect x="511" y="242" width="5" height="6" transform="rotate(21 511 242)"/><rect x="628" y="390" width="6" height="8" transform="rotate(50 628 390)"/><rect x="344" y="665" width="10" height="5" transform="rotate(35 344 665)"/><rect x="362" y="529" width="6" height="9" transform="rotate(-62 362 529)"/><rect x="415" y="280" width="10" height="5" transform="rotate(-62 415 280)"/><rect x="718" y="500" width="9" height="3" transform="rotate(-30 718 500)"/><rect x="874" y="681" width="13" height="7" transform="rotate(21 874 681)"/><rect x="735" y="271" width="14" height="4" transform="rotate(21 735 271)"/><rect x="1119" y="627" width="11" height="6" transform="rotate(21 1119 627)"/><rect x="1276" y="671" width="10" height="3" transform="rotate(21 1276 671)"/><rect x="1034" y="563" width="8" height="8" transform="rotate(-30 1034 563)"/><rect x="987" y="278" width="13" height="9" transform="rotate(-62 987 278)"/><rect x="781" y="618" width="13" height="7" transform="rotate(21 781 618)"/><rect x="813" y="404" width="5" height="3" transform="rotate(-30 813 404)"/><rect x="1244" y="476" width="9" height="5" transform="rotate(21 1244 476)"/><rect x="934" y="525" width="6" height="7" transform="rotate(50 934 525)"/><rect x="919" y="289" width="9" height="8" transform="rotate(-62 919 289)"/><rect x="1106" y="394" width="13" height="7" transform="rotate(50 1106 394)"/><rect x="1279" y="673" width="10" height="8" transform="rotate(-62 1279 673)"/><rect x="713" y="447" width="8" height="8" transform="rotate(50 713 447)"/><rect x="1058" y="295" width="7" height="3" transform="rotate(35 1058 295)"/><rect x="660" y="709" width="9" height="4" transform="rotate(35 660 709)"/><rect x="1288" y="486" width="4" height="4" transform="rotate(-30 1288 486)"/><rect x="378" y="707" width="8" height="6" transform="rotate(-62 378 707)"/><rect x="438" y="366" width="8" height="7" transform="rotate(35 438 366)"/><rect x="995" y="286" width="9" height="8" transform="rotate(21 995 286)"/><rect x="464" y="694" width="11" height="5" transform="rotate(-30 464 694)"/><rect x="441" y="668" width="13" height="6" transform="rotate(50 441 668)"/><rect x="1054" y="562" width="8" height="4" transform="rotate(21 1054 562)"/><rect x="1044" y="683" width="6" height="7" transform="rotate(-62 1044 683)"/><rect x="1035" y="590" width="11" height="8" transform="rotate(21 1035 590)"/><rect x="1264" y="649" width="12" height="5" transform="rotate(-30 1264 649)"/><rect x="643" y="328" width="13" height="4" transform="rotate(21 643 328)"/><rect x="533" y="462" width="5" height="4" transform="rotate(-62 533 462)"/><rect x="793" y="524" width="11" height="7" transform="rotate(21 793 524)"/><rect x="781" y="679" width="12" height="6" transform="rotate(35 781 679)"/><rect x="455" y="501" width="8" height="7" transform="rotate(21 455 501)"/><rect x="1256" y="691" width="8" height="9" transform="rotate(50 1256 691)"/><rect x="593" y="362" width="9" height="8" transform="rotate(21 593 362)"/><rect x="568" y="501" width="5" height="3" transform="rotate(50 568 501)"/><rect x="920" y="690" width="8" height="4" transform="rotate(21 920 690)"/><rect x="1242" y="367" width="7" height="4" transform="rotate(21 1242 367)"/><rect x="715" y="309" width="4" height="6" transform="rotate(21 715 309)"/><rect x="469" y="490" width="6" height="8" transform="rotate(-62 469 490)"/><rect x="775" y="282" width="10" height="4" transform="rotate(35 775 282)"/><rect x="747" y="560" width="12" height="5" transform="rotate(21 747 560)"/><rect x="378" y="373" width="10" height="4" transform="rotate(50 378 373)"/><rect x="777" y="212" width="5" height="7" transform="rotate(21 777 212)"/><rect x="859" y="474" width="8" height="7" transform="rotate(35 859 474)"/><rect x="1101" y="356" width="5" height="9" transform="rotate(35 1101 356)"/><rect x="700" y="360" width="11" height="6" transform="rotate(-62 700 360)"/><rect x="479" y="370" width="11" height="8" transform="rotate(-30 479 370)"/><rect x="814" y="427" width="12" height="7" transform="rotate(-30 814 427)"/><rect x="994" y="346" width="6" height="5" transform="rotate(50 994 346)"/><rect x="1012" y="664" width="8" height="3" transform="rotate(21 1012 664)"/><rect x="572" y="563" width="9" height="6" transform="rotate(21 572 563)"/><rect x="715" y="353" width="14" height="8" transform="rotate(21 715 353)"/><rect x="620" y="486" width="8" height="3" transform="rotate(21 620 486)"/><rect x="469" y="492" width="7" height="5" transform="rotate(-30 469 492)"/><rect x="1142" y="420" width="8" height="8" transform="rotate(21 1142 420)"/><rect x="336" y="411" width="13" height="3" transform="rotate(21 336 411)"/><rect x="676" y="446" width="13" height="4" transform="rotate(21 676 446)"/><rect x="927" y="326" width="8" height="6" transform="rotate(21 927 326)"/><rect x="787" y="229" width="8" height="8" transform="rotate(50 787 229)"/><rect x="1052" y="571" width="5" height="8" transform="rotate(21 1052 571)"/><rect x="986" y="251" width="8" height="8" transform="rotate(-62 986 251)"/><rect x="364" y="371" width="11" height="5" transform="rotate(35 364 371)"/><rect x="656" y="670" width="11" height="9" transform="rotate(35 656 670)"/><rect x="487" y="453" width="9" height="7" transform="rotate(21 487 453)"/><rect x="739" y="423" width="14" height="8" transform="rotate(21 739 423)"/><rect x="871" y="369" width="10" height="9" transform="rotate(-62 871 369)"/><rect x="1120" y="485" width="10" height="4" transform="rotate(21 1120 485)"/><rect x="618" y="587" width="9" height="5" transform="rotate(21 618 587)"/><rect x="1135" y="552" width="8" height="9" transform="rotate(50 1135 552)"/><rect x="972" y="417" width="9" height="3" transform="rotate(-62 972 417)"/><rect x="1127" y="500" width="9" height="8" transform="rotate(21 1127 500)"/><rect x="781" y="696" width="8" height="7" transform="rotate(-62 781 696)"/><rect x="910" y="656" width="8" height="4" transform="rotate(21 910 656)"/><rect x="754" y="439" width="10" height="5" transform="rotate(21 754 439)"/><rect x="1016" y="440" width="12" height="6" transform="rotate(-30 1016 440)"/><rect x="381" y="459" width="11" height="5" transform="rotate(-62 381 459)"/><rect x="610" y="246" width="7" height="4" transform="rotate(21 610 246)"/><rect x="976" y="338" width="14" height="6" transform="rotate(21 976 338)"/><rect x="1093" y="206" width="10" height="8" transform="rotate(50 1093 206)"/><rect x="427" y="236" width="5" height="5" transform="rotate(-30 427 236)"/><rect x="901" y="660" width="5" height="6" transform="rotate(21 901 660)"/><rect x="334" y="402" width="12" height="4" transform="rotate(-30 334 402)"/><rect x="984" y="469" width="7" height="3" transform="rotate(21 984 469)"/><rect x="485" y="503" width="9" height="7" transform="rotate(21 485 503)"/><rect x="811" y="211" width="7" height="9" transform="rotate(50 811 211)"/><rect x="486" y="242" width="6" height="8" transform="rotate(-30 486 242)"/><rect x="436" y="248" width="12" height="7" transform="rotate(35 436 248)"/><rect x="645" y="651" width="5" height="4" transform="rotate(-30 645 651)"/><rect x="556" y="420" width="6" height="7" transform="rotate(21 556 420)"/><rect x="454" y="217" width="10" height="3" transform="rotate(-62 454 217)"/><rect x="853" y="674" width="12" height="7" transform="rotate(-62 853 674)"/><rect x="605" y="225" width="11" height="7" transform="rotate(21 605 225)"/><rect x="764" y="667" width="8" height="4" transform="rotate(-62 764 667)"/><rect x="1276" y="418" width="6" height="6" transform="rotate(-30 1276 418)"/><rect x="1092" y="679" width="7" height="6" transform="rotate(-62 1092 679)"/><rect x="525" y="410" width="10" height="5" transform="rotate(-62 525 410)"/><rect x="815" y="378" width="14" height="5" transform="rotate(35 815 378)"/><rect x="1217" y="275" width="4" height="6" transform="rotate(-62 1217 275)"/><rect x="984" y="328" width="8" height="3" transform="rotate(50 984 328)"/><rect x="722" y="372" width="13" height="9" transform="rotate(-30 722 372)"/><rect x="1190" y="526" width="5" height="6" transform="rotate(-62 1190 526)"/><rect x="474" y="454" width="9" height="8" transform="rotate(21 474 454)"/><rect x="611" y="425" width="14" height="5" transform="rotate(21 611 425)"/><rect x="950" y="366" width="10" height="6" transform="rotate(50 950 366)"/><rect x="1026" y="489" width="11" height="5" transform="rotate(21 1026 489)"/><rect x="629" y="424" width="11" height="6" transform="rotate(-30 629 424)"/><rect x="831" y="441" width="11" height="3" transform="rotate(21 831 441)"/><rect x="872" y="469" width="11" height="6" transform="rotate(50 872 469)"/><rect x="1258" y="636" width="8" height="5" transform="rotate(50 1258 636)"/><rect x="676" y="305" width="10" height="6" transform="rotate(21 676 305)"/><rect x="1047" y="458" width="11" height="6" transform="rotate(-62 1047 458)"/><rect x="730" y="676" width="14" height="6" transform="rotate(21 730 676)"/><rect x="1025" y="542" width="13" height="8" transform="rotate(-62 1025 542)"/><rect x="570" y="561" width="7" height="7" transform="rotate(21 570 561)"/><rect x="346" y="318" width="10" height="5" transform="rotate(21 346 318)"/><rect x="1040" y="285" width="5" height="4" transform="rotate(35 1040 285)"/><rect x="713" y="587" width="11" height="5" transform="rotate(21 713 587)"/><rect x="465" y="507" width="10" height="4" transform="rotate(-62 465 507)"/><rect x="1215" y="538" width="6" height="7" transform="rotate(50 1215 538)"/><rect x="962" y="562" width="12" height="5" transform="rotate(21 962 562)"/><rect x="1219" y="706" width="7" height="4" transform="rotate(-62 1219 706)"/><rect x="498" y="421" width="7" height="3" transform="rotate(21 498 421)"/><rect x="740" y="303" width="14" height="5" transform="rotate(50 740 303)"/><rect x="786" y="303" width="4" height="8" transform="rotate(35 786 303)"/><rect x="1063" y="690" width="8" height="5" transform="rotate(-62 1063 690)"/><rect x="460" y="405" width="13" height="8" transform="rotate(50 460 405)"/><rect x="1208" y="312" width="5" height="4" transform="rotate(35 1208 312)"/><rect x="543" y="207" width="9" height="6" transform="rotate(21 543 207)"/><rect x="459" y="593" width="6" height="8" transform="rotate(50 459 593)"/><rect x="900" y="358" width="9" height="3" transform="rotate(21 900 358)"/><rect x="680" y="330" width="6" height="8" transform="rotate(50 680 330)"/><rect x="948" y="209" width="12" height="5" transform="rotate(-62 948 209)"/><rect x="476" y="482" width="12" height="3" transform="rotate(50 476 482)"/><rect x="732" y="418" width="5" height="5" transform="rotate(-62 732 418)"/><rect x="599" y="658" width="12" height="9" transform="rotate(21 599 658)"/><rect x="1160" y="285" width="12" height="5" transform="rotate(21 1160 285)"/><rect x="821" y="569" width="5" height="5" transform="rotate(-62 821 569)"/><rect x="491" y="599" width="13" height="6" transform="rotate(21 491 599)"/><rect x="797" y="556" width="11" height="4" transform="rotate(50 797 556)"/><rect x="586" y="321" width="11" height="9" transform="rotate(35 586 321)"/><rect x="913" y="531" width="14" height="9" transform="rotate(21 913 531)"/><rect x="619" y="505" width="9" height="3" transform="rotate(21 619 505)"/><rect x="691" y="631" width="11" height="6" transform="rotate(-62 691 631)"/><rect x="1179" y="507" width="12" height="4" transform="rotate(50 1179 507)"/><rect x="1123" y="477" width="8" height="4" transform="rotate(-30 1123 477)"/><rect x="888" y="695" width="7" height="7" transform="rotate(50 888 695)"/><rect x="920" y="407" width="12" height="6" transform="rotate(50 920 407)"/><rect x="1022" y="292" width="13" height="6" transform="rotate(21 1022 292)"/><rect x="631" y="471" width="14" height="8" transform="rotate(50 631 471)"/><rect x="379" y="270" width="10" height="7" transform="rotate(21 379 270)"/><rect x="1216" y="297" width="4" height="6" transform="rotate(35 1216 297)"/><rect x="947" y="498" width="13" height="5" transform="rotate(35 947 498)"/><rect x="599" y="664" width="7" height="5" transform="rotate(-62 599 664)"/><rect x="751" y="663" width="4" height="7" transform="rotate(21 751 663)"/><rect x="899" y="367" width="10" height="7" transform="rotate(21 899 367)"/><rect x="433" y="366" width="7" height="6" transform="rotate(-62 433 366)"/><rect x="937" y="438" width="5" height="8" transform="rotate(-30 937 438)"/><rect x="905" y="694" width="11" height="8" transform="rotate(35 905 694)"/><rect x="565" y="499" width="5" height="4" transform="rotate(-62 565 499)"/><rect x="1281" y="430" width="12" height="5" transform="rotate(50 1281 430)"/><rect x="653" y="332" width="8" height="7" transform="rotate(-62 653 332)"/><rect x="576" y="655" width="12" height="6" transform="rotate(-62 576 655)"/><rect x="633" y="471" width="10" height="6" transform="rotate(-62 633 471)"/><rect x="1254" y="338" width="13" height="6" transform="rotate(35 1254 338)"/><rect x="977" y="344" width="12" height="5" transform="rotate(21 977 344)"/><rect x="651" y="246" width="11" height="9" transform="rotate(50 651 246)"/><rect x="628" y="304" width="13" height="5" transform="rotate(21 628 304)"/><rect x="1101" y="510" width="13" height="4" transform="rotate(50 1101 510)"/><rect x="349" y="435" width="10" height="6" transform="rotate(-62 349 435)"/><rect x="799" y="429" width="6" height="3" transform="rotate(-30 799 429)"/><rect x="679" y="473" width="8" height="8" transform="rotate(21 679 473)"/><rect x="984" y="357" width="13" height="4" transform="rotate(35 984 357)"/><rect x="645" y="694" width="12" height="7" transform="rotate(-62 645 694)"/><rect x="903" y="626" width="7" height="7" transform="rotate(21 903 626)"/><rect x="1263" y="485" width="7" height="7" transform="rotate(35 1263 485)"/><rect x="981" y="541" width="8" height="7" transform="rotate(35 981 541)"/><rect x="682" y="460" width="5" height="3" transform="rotate(35 682 460)"/><rect x="597" y="347" width="8" height="5" transform="rotate(-30 597 347)"/><rect x="832" y="476" width="8" height="6" transform="rotate(35 832 476)"/><rect x="390" y="210" width="9" height="4" transform="rotate(21 390 210)"/><rect x="557" y="452" width="7" height="3" transform="rotate(-62 557 452)"/><rect x="981" y="255" width="9" height="5" transform="rotate(50 981 255)"/><rect x="682" y="309" width="4" height="9" transform="rotate(21 682 309)"/><rect x="1052" y="537" width="8" height="8" transform="rotate(-62 1052 537)"/><rect x="742" y="544" width="12" height="9" transform="rotate(35 742 544)"/><rect x="1049" y="309" width="7" height="6" transform="rotate(21 1049 309)"/><rect x="1188" y="244" width="7" height="8" transform="rotate(50 1188 244)"/><rect x="710" y="230" width="5" height="4" transform="rotate(21 710 230)"/><rect x="1105" y="498" width="10" height="5" transform="rotate(21 1105 498)"/><rect x="723" y="508" width="11" height="7" transform="rotate(50 723 508)"/><rect x="535" y="240" width="7" height="7" transform="rotate(21 535 240)"/><rect x="890" y="537" width="9" height="6" transform="rotate(-62 890 537)"/><rect x="802" y="696" width="12" height="6" transform="rotate(-62 802 696)"/><rect x="610" y="526" width="13" height="4" transform="rotate(21 610 526)"/><rect x="571" y="441" width="10" height="4" transform="rotate(-62 571 441)"/><rect x="1063" y="223" width="6" height="3" transform="rotate(50 1063 223)"/><rect x="345" y="230" width="13" height="4" transform="rotate(35 345 230)"/><rect x="1006" y="423" width="7" height="4" transform="rotate(50 1006 423)"/><rect x="647" y="364" width="6" height="6" transform="rotate(21 647 364)"/><rect x="711" y="651" width="8" height="3" transform="rotate(-62 711 651)"/><rect x="700" y="467" width="6" height="5" transform="rotate(50 700 467)"/><rect x="1185" y="370" width="4" height="4" transform="rotate(50 1185 370)"/><rect x="579" y="209" width="10" height="9" transform="rotate(21 579 209)"/><rect x="497" y="314" width="11" height="7" transform="rotate(35 497 314)"/><rect x="613" y="436" width="13" height="4" transform="rotate(21 613 436)"/><rect x="1240" y="391" width="9" height="5" transform="rotate(35 1240 391)"/><rect x="1239" y="419" width="13" height="6" transform="rotate(-30 1239 419)"/><rect x="813" y="451" width="12" height="4" transform="rotate(-62 813 451)"/><rect x="1094" y="340" width="8" height="7" transform="rotate(21 1094 340)"/><rect x="533" y="594" width="5" height="7" transform="rotate(-62 533 594)"/><rect x="1288" y="616" width="9" height="7" transform="rotate(-30 1288 616)"/><rect x="802" y="457" width="8" height="9" transform="rotate(21 802 457)"/><rect x="669" y="533" width="6" height="4" transform="rotate(21 669 533)"/><rect x="1225" y="595" width="6" height="6" transform="rotate(21 1225 595)"/><rect x="1103" y="311" width="9" height="7" transform="rotate(21 1103 311)"/><rect x="815" y="401" width="10" height="6" transform="rotate(-62 815 401)"/><rect x="876" y="465" width="7" height="4" transform="rotate(50 876 465)"/><rect x="1070" y="417" width="12" height="8" transform="rotate(35 1070 417)"/><rect x="1105" y="692" width="4" height="9" transform="rotate(-30 1105 692)"/><rect x="1227" y="488" width="11" height="8" transform="rotate(21 1227 488)"/><rect x="1048" y="363" width="6" height="6" transform="rotate(35 1048 363)"/><rect x="612" y="575" width="6" height="8" transform="rotate(21 612 575)"/><rect x="1064" y="511" width="14" height="7" transform="rotate(-30 1064 511)"/><rect x="750" y="702" width="13" height="4" transform="rotate(21 750 702)"/><rect x="1256" y="547" width="9" height="5" transform="rotate(-62 1256 547)"/><rect x="1235" y="579" width="8" height="5" transform="rotate(21 1235 579)"/><rect x="1207" y="364" width="4" height="4" transform="rotate(-30 1207 364)"/><rect x="415" y="355" width="13" height="5" transform="rotate(21 415 355)"/><rect x="565" y="541" width="10" height="9" transform="rotate(-30 565 541)"/><rect x="666" y="661" width="10" height="5" transform="rotate(50 666 661)"/><rect x="471" y="290" width="13" height="6" transform="rotate(-62 471 290)"/><rect x="936" y="644" width="12" height="6" transform="rotate(50 936 644)"/><rect x="954" y="494" width="9" height="5" transform="rotate(21 954 494)"/><rect x="626" y="247" width="8" height="6" transform="rotate(50 626 247)"/><rect x="696" y="401" width="14" height="7" transform="rotate(-30 696 401)"/><rect x="1173" y="308" width="11" height="6" transform="rotate(-62 1173 308)"/><rect x="943" y="248" width="9" height="4" transform="rotate(35 943 248)"/><rect x="575" y="238" width="10" height="5" transform="rotate(21 575 238)"/><rect x="757" y="671" width="7" height="7" transform="rotate(50 757 671)"/><rect x="1207" y="382" width="9" height="7" transform="rotate(35 1207 382)"/><rect x="970" y="686" width="9" height="7" transform="rotate(50 970 686)"/><rect x="868" y="253" width="9" height="5" transform="rotate(21 868 253)"/><rect x="1282" y="439" width="10" height="8" transform="rotate(-62 1282 439)"/><rect x="543" y="564" width="14" height="6" transform="rotate(35 543 564)"/><rect x="710" y="370" width="6" height="8" transform="rotate(21 710 370)"/><rect x="594" y="484" width="9" height="4" transform="rotate(-62 594 484)"/><rect x="1281" y="662" width="13" height="5" transform="rotate(21 1281 662)"/><rect x="639" y="238" width="12" height="6" transform="rotate(50 639 238)"/><rect x="1005" y="221" width="5" height="8" transform="rotate(-62 1005 221)"/><rect x="759" y="695" width="12" height="4" transform="rotate(21 759 695)"/><rect x="696" y="432" width="7" height="4" transform="rotate(-62 696 432)"/><rect x="662" y="673" width="7" height="5" transform="rotate(21 662 673)"/><rect x="1108" y="543" width="6" height="9" transform="rotate(-30 1108 543)"/><rect x="642" y="621" width="10" height="3" transform="rotate(50 642 621)"/><rect x="941" y="267" width="11" height="8" transform="rotate(21 941 267)"/><rect x="1132" y="699" width="7" height="8" transform="rotate(21 1132 699)"/><rect x="1168" y="270" width="5" height="9" transform="rotate(21 1168 270)"/><rect x="1280" y="419" width="8" height="3" transform="rotate(50 1280 419)"/><rect x="342" y="351" width="13" height="5" transform="rotate(-62 342 351)"/><rect x="607" y="506" width="11" height="6" transform="rotate(-62 607 506)"/><rect x="967" y="207" width="5" height="5" transform="rotate(50 967 207)"/><rect x="460" y="215" width="13" height="4" transform="rotate(21 460 215)"/><rect x="488" y="319" width="13" height="6" transform="rotate(-62 488 319)"/><rect x="958" y="341" width="9" height="5" transform="rotate(50 958 341)"/><rect x="429" y="515" width="4" height="9" transform="rotate(-62 429 515)"/><rect x="696" y="328" width="9" height="3" transform="rotate(-62 696 328)"/><rect x="1077" y="629" width="14" height="6" transform="rotate(50 1077 629)"/><rect x="663" y="342" width="9" height="9" transform="rotate(21 663 342)"/><rect x="823" y="393" width="5" height="6" transform="rotate(21 823 393)"/><rect x="803" y="353" width="8" height="3" transform="rotate(21 803 353)"/><rect x="407" y="315" width="13" height="9" transform="rotate(21 407 315)"/><rect x="1254" y="417" width="10" height="7" transform="rotate(21 1254 417)"/><rect x="1195" y="700" width="7" height="7" transform="rotate(21 1195 700)"/><rect x="492" y="313" width="12" height="3" transform="rotate(21 492 313)"/><rect x="423" y="484" width="7" height="4" transform="rotate(21 423 484)"/><rect x="923" y="571" width="10" height="6" transform="rotate(-30 923 571)"/><rect x="385" y="388" width="6" height="7" transform="rotate(50 385 388)"/><rect x="980" y="523" width="11" height="4" transform="rotate(50 980 523)"/><rect x="1054" y="220" width="11" height="6" transform="rotate(-62 1054 220)"/><rect x="543" y="609" width="5" height="8" transform="rotate(35 543 609)"/><rect x="348" y="275" width="13" height="8" transform="rotate(-62 348 275)"/><rect x="449" y="417" width="6" height="4" transform="rotate(50 449 417)"/><rect x="551" y="413" width="10" height="7" transform="rotate(-62 551 413)"/><rect x="737" y="545" width="8" height="5" transform="rotate(-62 737 545)"/><rect x="416" y="323" width="9" height="9" transform="rotate(21 416 323)"/><rect x="440" y="215" width="13" height="7" transform="rotate(-30 440 215)"/><rect x="880" y="288" width="4" height="5" transform="rotate(21 880 288)"/><rect x="1085" y="651" width="14" height="8" transform="rotate(21 1085 651)"/><rect x="607" y="472" width="14" height="8" transform="rotate(-30 607 472)"/><rect x="840" y="660" width="5" height="7" transform="rotate(21 840 660)"/><rect x="649" y="432" width="12" height="5" transform="rotate(35 649 432)"/><rect x="847" y="607" width="6" height="7" transform="rotate(21 847 607)"/><rect x="1062" y="407" width="6" height="5" transform="rotate(21 1062 407)"/><rect x="339" y="320" width="8" height="9" transform="rotate(21 339 320)"/><rect x="1001" y="324" width="12" height="9" transform="rotate(21 1001 324)"/><rect x="675" y="419" width="11" height="6" transform="rotate(35 675 419)"/><rect x="1162" y="415" width="6" height="4" transform="rotate(21 1162 415)"/><rect x="661" y="452" width="5" height="5" transform="rotate(-62 661 452)"/><rect x="405" y="452" width="12" height="7" transform="rotate(21 405 452)"/><rect x="906" y="449" width="5" height="9" transform="rotate(-62 906 449)"/><rect x="836" y="285" width="7" height="4" transform="rotate(-62 836 285)"/><rect x="464" y="541" width="12" height="6" transform="rotate(21 464 541)"/><rect x="646" y="615" width="11" height="3" transform="rotate(21 646 615)"/><rect x="1183" y="359" width="11" height="6" transform="rotate(35 1183 359)"/><rect x="412" y="224" width="13" height="5" transform="rotate(50 412 224)"/><rect x="1064" y="522" width="13" height="9" transform="rotate(-30 1064 522)"/><rect x="1104" y="266" width="7" height="7" transform="rotate(35 1104 266)"/><rect x="1221" y="193" width="9" height="6" transform="rotate(-62 1221 193)"/><rect x="1059" y="589" width="14" height="4" transform="rotate(21 1059 589)"/><rect x="1200" y="509" width="10" height="8" transform="rotate(21 1200 509)"/><rect x="363" y="205" width="11" height="8" transform="rotate(50 363 205)"/><rect x="684" y="330" width="5" height="7" transform="rotate(-30 684 330)"/><rect x="1044" y="322" width="13" height="5" transform="rotate(-62 1044 322)"/><rect x="891" y="415" width="8" height="7" transform="rotate(50 891 415)"/><rect x="436" y="425" width="13" height="6" transform="rotate(-62 436 425)"/><rect x="730" y="644" width="13" height="8" transform="rotate(21 730 644)"/><rect x="872" y="457" width="11" height="7" transform="rotate(21 872 457)"/><rect x="1025" y="299" width="13" height="4" transform="rotate(-62 1025 299)"/><rect x="791" y="452" width="7" height="9" transform="rotate(21 791 452)"/><rect x="1143" y="532" width="13" height="5" transform="rotate(35 1143 532)"/><rect x="1178" y="553" width="12" height="7" transform="rotate(-62 1178 553)"/><rect x="1060" y="363" width="7" height="5" transform="rotate(35 1060 363)"/><rect x="617" y="317" width="12" height="4" transform="rotate(50 617 317)"/><rect x="514" y="368" width="14" height="4" transform="rotate(-62 514 368)"/><rect x="550" y="415" width="6" height="8" transform="rotate(35 550 415)"/><rect x="857" y="592" width="6" height="6" transform="rotate(-62 857 592)"/><rect x="1207" y="577" width="5" height="7" transform="rotate(50 1207 577)"/><rect x="996" y="207" width="13" height="3" transform="rotate(21 996 207)"/><rect x="555" y="218" width="6" height="7" transform="rotate(-62 555 218)"/><rect x="482" y="323" width="8" height="7" transform="rotate(21 482 323)"/><rect x="946" y="505" width="5" height="8" transform="rotate(21 946 505)"/><rect x="569" y="311" width="11" height="3" transform="rotate(-62 569 311)"/><rect x="1208" y="702" width="11" height="7" transform="rotate(35 1208 702)"/><rect x="621" y="208" width="13" height="8" transform="rotate(50 621 208)"/><rect x="939" y="207" width="6" height="8" transform="rotate(21 939 207)"/><rect x="1215" y="531" width="5" height="8" transform="rotate(-30 1215 531)"/><rect x="379" y="704" width="10" height="4" transform="rotate(35 379 704)"/><rect x="789" y="272" width="13" height="3" transform="rotate(21 789 272)"/><rect x="571" y="566" width="7" height="6" transform="rotate(21 571 566)"/><rect x="1124" y="265" width="6" height="4" transform="rotate(21 1124 265)"/><rect x="550" y="449" width="4" height="5" transform="rotate(-62 550 449)"/><rect x="975" y="365" width="8" height="5" transform="rotate(21 975 365)"/><rect x="538" y="535" width="8" height="3" transform="rotate(21 538 535)"/><rect x="460" y="254" width="5" height="8" transform="rotate(21 460 254)"/><rect x="967" y="595" width="12" height="7" transform="rotate(21 967 595)"/><rect x="637" y="504" width="10" height="6" transform="rotate(-62 637 504)"/><rect x="1281" y="415" width="7" height="8" transform="rotate(-62 1281 415)"/><rect x="510" y="497" width="6" height="3" transform="rotate(-62 510 497)"/><rect x="1110" y="529" width="9" height="6" transform="rotate(35 1110 529)"/><rect x="1160" y="639" width="5" height="3" transform="rotate(-62 1160 639)"/><rect x="686" y="371" width="11" height="6" transform="rotate(35 686 371)"/><rect x="362" y="353" width="14" height="4" transform="rotate(21 362 353)"/><rect x="496" y="512" width="7" height="3" transform="rotate(35 496 512)"/><rect x="809" y="329" width="5" height="6" transform="rotate(21 809 329)"/><rect x="853" y="468" width="13" height="7" transform="rotate(21 853 468)"/><rect x="1221" y="596" width="14" height="5" transform="rotate(-30 1221 596)"/><rect x="822" y="466" width="7" height="7" transform="rotate(-62 822 466)"/><rect x="1185" y="375" width="5" height="4" transform="rotate(-62 1185 375)"/><rect x="1017" y="554" width="8" height="5" transform="rotate(50 1017 554)"/><rect x="763" y="462" width="6" height="8" transform="rotate(50 763 462)"/><rect x="829" y="269" width="14" height="8" transform="rotate(21 829 269)"/><rect x="789" y="412" width="12" height="6" transform="rotate(-62 789 412)"/><rect x="615" y="224" width="13" height="4" transform="rotate(35 615 224)"/><rect x="543" y="572" width="5" height="9" transform="rotate(21 543 572)"/><rect x="1073" y="557" width="10" height="4" transform="rotate(21 1073 557)"/><rect x="1129" y="598" width="10" height="7" transform="rotate(21 1129 598)"/><rect x="759" y="272" width="13" height="5" transform="rotate(21 759 272)"/><rect x="710" y="554" width="11" height="8" transform="rotate(21 710 554)"/><rect x="586" y="321" width="5" height="5" transform="rotate(21 586 321)"/><rect x="500" y="380" width="7" height="4" transform="rotate(-62 500 380)"/><rect x="1016" y="334" width="7" height="5" transform="rotate(-62 1016 334)"/><rect x="1015" y="310" width="5" height="6" transform="rotate(50 1015 310)"/><rect x="1218" y="666" width="13" height="6" transform="rotate(21 1218 666)"/><rect x="937" y="548" width="10" height="6" transform="rotate(-62 937 548)"/><rect x="444" y="707" width="13" height="6" transform="rotate(21 444 707)"/><rect x="688" y="699" width="8" height="8" transform="rotate(21 688 699)"/><rect x="1012" y="195" width="4" height="6" transform="rotate(21 1012 195)"/><rect x="707" y="525" width="8" height="8" transform="rotate(21 707 525)"/><rect x="326" y="519" width="13" height="6" transform="rotate(-62 326 519)"/><rect x="454" y="570" width="10" height="9" transform="rotate(21 454 570)"/><rect x="1010" y="687" width="11" height="9" transform="rotate(35 1010 687)"/><rect x="1157" y="437" width="7" height="9" transform="rotate(21 1157 437)"/><rect x="745" y="406" width="13" height="4" transform="rotate(21 745 406)"/><rect x="565" y="325" width="8" height="6" transform="rotate(-30 565 325)"/><rect x="1239" y="617" width="7" height="4" transform="rotate(-30 1239 617)"/><rect x="789" y="660" width="11" height="9" transform="rotate(-30 789 660)"/><rect x="801" y="204" width="5" height="6" transform="rotate(35 801 204)"/><rect x="597" y="426" width="11" height="5" transform="rotate(21 597 426)"/><rect x="910" y="277" width="11" height="3" transform="rotate(21 910 277)"/><rect x="795" y="594" width="12" height="8" transform="rotate(-62 795 594)"/><rect x="750" y="230" width="9" height="4" transform="rotate(21 750 230)"/><rect x="835" y="485" width="5" height="8" transform="rotate(21 835 485)"/><rect x="1218" y="699" width="7" height="7" transform="rotate(21 1218 699)"/><rect x="1246" y="550" width="8" height="3" transform="rotate(21 1246 550)"/><rect x="1187" y="467" width="12" height="4" transform="rotate(50 1187 467)"/><rect x="942" y="673" width="6" height="9" transform="rotate(-62 942 673)"/><rect x="525" y="287" width="11" height="9" transform="rotate(-62 525 287)"/><rect x="1249" y="474" width="10" height="4" transform="rotate(50 1249 474)"/><rect x="359" y="421" width="6" height="6" transform="rotate(50 359 421)"/><rect x="728" y="280" width="5" height="4" transform="rotate(21 728 280)"/><rect x="529" y="326" width="7" height="4" transform="rotate(-62 529 326)"/><rect x="1094" y="473" width="10" height="6" transform="rotate(35 1094 473)"/><rect x="475" y="267" width="6" height="5" transform="rotate(21 475 267)"/><rect x="413" y="441" width="12" height="7" transform="rotate(-62 413 441)"/><rect x="756" y="303" width="4" height="7" transform="rotate(35 756 303)"/><rect x="1010" y="327" width="6" height="7" transform="rotate(-62 1010 327)"/><rect x="780" y="630" width="12" height="4" transform="rotate(-62 780 630)"/><rect x="489" y="599" width="4" height="8" transform="rotate(-30 489 599)"/><rect x="587" y="239" width="8" height="9" transform="rotate(-62 587 239)"/><rect x="540" y="218" width="4" height="9" transform="rotate(21 540 218)"/><rect x="1249" y="315" width="14" height="5" transform="rotate(21 1249 315)"/><rect x="902" y="320" width="11" height="9" transform="rotate(-30 902 320)"/><rect x="749" y="289" width="9" height="6" transform="rotate(-62 749 289)"/><rect x="1042" y="474" width="6" height="6" transform="rotate(-62 1042 474)"/><rect x="1026" y="306" width="6" height="5" transform="rotate(35 1026 306)"/><rect x="1104" y="421" width="11" height="7" transform="rotate(-30 1104 421)"/><rect x="812" y="514" width="11" height="5" transform="rotate(-62 812 514)"/><rect x="679" y="542" width="10" height="8" transform="rotate(-62 679 542)"/><rect x="699" y="387" width="6" height="5" transform="rotate(21 699 387)"/><rect x="576" y="590" width="12" height="5" transform="rotate(35 576 590)"/><rect x="535" y="388" width="8" height="3" transform="rotate(-30 535 388)"/><rect x="586" y="372" width="6" height="8" transform="rotate(50 586 372)"/><rect x="710" y="482" width="13" height="5" transform="rotate(21 710 482)"/><rect x="1158" y="666" width="6" height="5" transform="rotate(21 1158 666)"/><rect x="464" y="201" width="13" height="9" transform="rotate(-30 464 201)"/><rect x="895" y="268" width="8" height="4" transform="rotate(-62 895 268)"/><rect x="359" y="599" width="11" height="7" transform="rotate(50 359 599)"/><rect x="635" y="347" width="12" height="3" transform="rotate(-62 635 347)"/><rect x="1248" y="521" width="4" height="3" transform="rotate(21 1248 521)"/><rect x="503" y="411" width="11" height="7" transform="rotate(-62 503 411)"/><rect x="1191" y="400" width="11" height="7" transform="rotate(21 1191 400)"/><rect x="1079" y="687" width="7" height="7" transform="rotate(-62 1079 687)"/><rect x="1250" y="473" width="6" height="5" transform="rotate(21 1250 473)"/><rect x="622" y="671" width="14" height="8" transform="rotate(35 622 671)"/><rect x="619" y="587" width="7" height="9" transform="rotate(-30 619 587)"/><rect x="1190" y="494" width="10" height="4" transform="rotate(-62 1190 494)"/><rect x="370" y="428" width="14" height="9" transform="rotate(21 370 428)"/><rect x="1225" y="293" width="14" height="4" transform="rotate(-62 1225 293)"/><rect x="1229" y="479" width="6" height="6" transform="rotate(21 1229 479)"/><rect x="615" y="697" width="6" height="4" transform="rotate(21 615 697)"/><rect x="1088" y="229" width="6" height="7" transform="rotate(21 1088 229)"/><rect x="1011" y="459" width="7" height="4" transform="rotate(50 1011 459)"/><rect x="848" y="630" width="4" height="5" transform="rotate(21 848 630)"/><rect x="768" y="261" width="11" height="6" transform="rotate(-62 768 261)"/><rect x="1060" y="364" width="14" height="7" transform="rotate(21 1060 364)"/><rect x="656" y="297" width="11" height="8" transform="rotate(21 656 297)"/><rect x="828" y="249" width="12" height="5" transform="rotate(21 828 249)"/><rect x="737" y="297" width="6" height="7" transform="rotate(-30 737 297)"/><rect x="653" y="295" width="13" height="9" transform="rotate(35 653 295)"/><rect x="510" y="452" width="13" height="7" transform="rotate(21 510 452)"/><rect x="813" y="245" width="12" height="4" transform="rotate(-62 813 245)"/><rect x="674" y="407" width="11" height="9" transform="rotate(50 674 407)"/><rect x="465" y="323" width="13" height="8" transform="rotate(-62 465 323)"/><rect x="329" y="325" width="11" height="8" transform="rotate(21 329 325)"/><rect x="750" y="405" width="6" height="4" transform="rotate(50 750 405)"/><rect x="693" y="289" width="8" height="8" transform="rotate(21 693 289)"/><rect x="740" y="657" width="13" height="5" transform="rotate(-30 740 657)"/><rect x="684" y="506" width="13" height="6" transform="rotate(21 684 506)"/><rect x="842" y="520" width="13" height="4" transform="rotate(21 842 520)"/><rect x="807" y="438" width="7" height="3" transform="rotate(35 807 438)"/><rect x="447" y="293" width="7" height="3" transform="rotate(-30 447 293)"/><rect x="680" y="653" width="8" height="8" transform="rotate(-62 680 653)"/><rect x="964" y="309" width="12" height="8" transform="rotate(-30 964 309)"/><rect x="1109" y="610" width="12" height="4" transform="rotate(21 1109 610)"/><rect x="1175" y="217" width="10" height="4" transform="rotate(-62 1175 217)"/><rect x="759" y="503" width="13" height="8" transform="rotate(-62 759 503)"/><rect x="587" y="432" width="6" height="7" transform="rotate(50 587 432)"/><rect x="878" y="495" width="7" height="9" transform="rotate(21 878 495)"/><rect x="917" y="306" width="9" height="3" transform="rotate(-62 917 306)"/><rect x="635" y="495" width="12" height="4" transform="rotate(35 635 495)"/><rect x="921" y="647" width="13" height="5" transform="rotate(50 921 647)"/><rect x="629" y="546" width="6" height="7" transform="rotate(-62 629 546)"/><rect x="1234" y="606" width="14" height="6" transform="rotate(21 1234 606)"/><rect x="675" y="378" width="4" height="8" transform="rotate(50 675 378)"/><rect x="938" y="473" width="5" height="9" transform="rotate(50 938 473)"/><rect x="921" y="329" width="6" height="5" transform="rotate(21 921 329)"/><rect x="410" y="309" width="11" height="9" transform="rotate(35 410 309)"/><rect x="461" y="299" width="9" height="7" transform="rotate(35 461 299)"/><rect x="569" y="364" width="7" height="9" transform="rotate(50 569 364)"/><rect x="1094" y="317" width="7" height="7" transform="rotate(-62 1094 317)"/><rect x="781" y="583" width="8" height="8" transform="rotate(-62 781 583)"/><rect x="358" y="500" width="10" height="6" transform="rotate(50 358 500)"/><rect x="543" y="307" width="13" height="7" transform="rotate(21 543 307)"/><rect x="642" y="476" width="13" height="8" transform="rotate(-62 642 476)"/><rect x="1071" y="328" width="13" height="3" transform="rotate(21 1071 328)"/><rect x="881" y="330" width="6" height="6" transform="rotate(-62 881 330)"/><rect x="1197" y="281" width="9" height="6" transform="rotate(50 1197 281)"/><rect x="887" y="199" width="5" height="8" transform="rotate(21 887 199)"/><rect x="634" y="465" width="13" height="6" transform="rotate(35 634 465)"/><rect x="1208" y="706" width="11" height="4" transform="rotate(-62 1208 706)"/><rect x="782" y="511" width="8" height="7" transform="rotate(21 782 511)"/><rect x="951" y="661" width="8" height="5" transform="rotate(50 951 661)"/><rect x="545" y="371" width="11" height="5" transform="rotate(50 545 371)"/><rect x="545" y="518" width="9" height="3" transform="rotate(21 545 518)"/><rect x="1100" y="702" width="13" height="7" transform="rotate(-30 1100 702)"/><rect x="828" y="251" width="5" height="6" transform="rotate(50 828 251)"/><rect x="437" y="505" width="11" height="8" transform="rotate(21 437 505)"/><rect x="440" y="455" width="7" height="8" transform="rotate(50 440 455)"/><rect x="1220" y="519" width="7" height="6" transform="rotate(21 1220 519)"/><rect x="657" y="528" width="10" height="8" transform="rotate(-62 657 528)"/><rect x="906" y="549" width="7" height="4" transform="rotate(50 906 549)"/><rect x="1189" y="365" width="6" height="6" transform="rotate(35 1189 365)"/><rect x="608" y="502" width="14" height="3" transform="rotate(21 608 502)"/><rect x="432" y="448" width="9" height="5" transform="rotate(-30 432 448)"/><rect x="362" y="442" width="5" height="4" transform="rotate(21 362 442)"/><rect x="549" y="416" width="8" height="7" transform="rotate(50 549 416)"/><rect x="1238" y="599" width="8" height="7" transform="rotate(-30 1238 599)"/><rect x="478" y="232" width="9" height="6" transform="rotate(-62 478 232)"/><rect x="753" y="277" width="12" height="5" transform="rotate(21 753 277)"/><rect x="470" y="463" width="5" height="8" transform="rotate(-62 470 463)"/><rect x="448" y="708" width="13" height="4" transform="rotate(35 448 708)"/><rect x="360" y="264" width="5" height="5" transform="rotate(-30 360 264)"/><rect x="1086" y="361" width="12" height="3" transform="rotate(50 1086 361)"/><rect x="824" y="216" width="12" height="8" transform="rotate(50 824 216)"/><rect x="447" y="439" width="13" height="6" transform="rotate(-30 447 439)"/><rect x="1048" y="522" width="11" height="5" transform="rotate(21 1048 522)"/><rect x="1014" y="201" width="13" height="3" transform="rotate(21 1014 201)"/><rect x="1126" y="301" width="12" height="5" transform="rotate(-62 1126 301)"/><rect x="1062" y="664" width="14" height="6" transform="rotate(21 1062 664)"/><rect x="1026" y="600" width="14" height="7" transform="rotate(35 1026 600)"/><rect x="413" y="604" width="8" height="6" transform="rotate(21 413 604)"/><rect x="786" y="423" width="4" height="5" transform="rotate(-30 786 423)"/><rect x="889" y="533" width="7" height="5" transform="rotate(-62 889 533)"/><rect x="1208" y="252" width="10" height="6" transform="rotate(21 1208 252)"/><rect x="644" y="584" width="6" height="9" transform="rotate(-62 644 584)"/><rect x="388" y="509" width="10" height="4" transform="rotate(50 388 509)"/><rect x="1185" y="511" width="9" height="7" transform="rotate(-30 1185 511)"/><rect x="441" y="552" width="6" height="8" transform="rotate(50 441 552)"/><rect x="1170" y="260" width="5" height="7" transform="rotate(50 1170 260)"/><rect x="594" y="686" width="6" height="8" transform="rotate(21 594 686)"/><rect x="952" y="467" width="10" height="7" transform="rotate(50 952 467)"/><rect x="982" y="534" width="10" height="4" transform="rotate(-62 982 534)"/><rect x="1219" y="532" width="11" height="5" transform="rotate(21 1219 532)"/><rect x="809" y="326" width="4" height="6" transform="rotate(-62 809 326)"/><rect x="848" y="707" width="5" height="3" transform="rotate(35 848 707)"/><rect x="543" y="310" width="14" height="6" transform="rotate(-62 543 310)"/><rect x="797" y="629" width="8" height="7" transform="rotate(50 797 629)"/><rect x="1267" y="572" width="8" height="4" transform="rotate(21 1267 572)"/><rect x="1184" y="242" width="13" height="6" transform="rotate(-62 1184 242)"/><rect x="749" y="418" width="4" height="6" transform="rotate(-62 749 418)"/><rect x="848" y="637" width="6" height="9" transform="rotate(21 848 637)"/><rect x="1103" y="561" width="13" height="6" transform="rotate(35 1103 561)"/><rect x="632" y="538" width="11" height="3" transform="rotate(21 632 538)"/><rect x="630" y="618" width="4" height="6" transform="rotate(21 630 618)"/><rect x="639" y="536" width="9" height="3" transform="rotate(-62 639 536)"/><rect x="625" y="242" width="6" height="4" transform="rotate(21 625 242)"/><rect x="1011" y="476" width="14" height="7" transform="rotate(21 1011 476)"/><rect x="395" y="238" width="13" height="5" transform="rotate(21 395 238)"/><rect x="819" y="644" width="8" height="7" transform="rotate(-30 819 644)"/><rect x="1011" y="431" width="6" height="5" transform="rotate(35 1011 431)"/><rect x="1160" y="542" width="4" height="4" transform="rotate(-62 1160 542)"/><rect x="1034" y="210" width="14" height="7" transform="rotate(-62 1034 210)"/><rect x="1260" y="358" width="6" height="4" transform="rotate(-30 1260 358)"/><rect x="1113" y="296" width="5" height="7" transform="rotate(21 1113 296)"/><rect x="557" y="543" width="12" height="7" transform="rotate(35 557 543)"/><rect x="820" y="580" width="4" height="7" transform="rotate(21 820 580)"/><rect x="934" y="313" width="13" height="4" transform="rotate(35 934 313)"/><rect x="1197" y="568" width="9" height="7" transform="rotate(35 1197 568)"/><rect x="841" y="231" width="13" height="9" transform="rotate(-62 841 231)"/><rect x="1147" y="703" width="11" height="8" transform="rotate(-62 1147 703)"/><rect x="725" y="382" width="12" height="7" transform="rotate(21 725 382)"/><rect x="1033" y="665" width="12" height="5" transform="rotate(21 1033 665)"/><rect x="802" y="253" width="12" height="6" transform="rotate(35 802 253)"/><rect x="751" y="685" width="12" height="6" transform="rotate(21 751 685)"/><rect x="468" y="590" width="10" height="5" transform="rotate(21 468 590)"/><rect x="1044" y="568" width="12" height="3" transform="rotate(21 1044 568)"/><rect x="858" y="443" width="7" height="4" transform="rotate(-62 858 443)"/><rect x="1005" y="647" width="12" height="6" transform="rotate(35 1005 647)"/><rect x="958" y="217" width="14" height="4" transform="rotate(21 958 217)"/><rect x="523" y="431" width="8" height="4" transform="rotate(50 523 431)"/><rect x="661" y="477" width="7" height="5" transform="rotate(50 661 477)"/><rect x="1100" y="689" width="11" height="8" transform="rotate(-62 1100 689)"/><rect x="443" y="555" width="4" height="8" transform="rotate(21 443 555)"/><rect x="1092" y="416" width="11" height="6" transform="rotate(50 1092 416)"/><rect x="471" y="562" width="8" height="4" transform="rotate(-30 471 562)"/><rect x="813" y="681" width="6" height="3" transform="rotate(21 813 681)"/><rect x="1176" y="438" width="6" height="8" transform="rotate(21 1176 438)"/><rect x="1037" y="477" width="5" height="6" transform="rotate(21 1037 477)"/><rect x="1145" y="274" width="13" height="4" transform="rotate(-30 1145 274)"/><rect x="900" y="670" width="6" height="9" transform="rotate(-62 900 670)"/><rect x="1105" y="322" width="14" height="7" transform="rotate(-30 1105 322)"/><rect x="1014" y="370" width="9" height="5" transform="rotate(35 1014 370)"/><rect x="1178" y="579" width="11" height="4" transform="rotate(-62 1178 579)"/><rect x="1014" y="243" width="5" height="4" transform="rotate(-62 1014 243)"/><rect x="654" y="562" width="8" height="5" transform="rotate(-62 654 562)"/><rect x="544" y="421" width="7" height="7" transform="rotate(35 544 421)"/><rect x="1014" y="376" width="8" height="8" transform="rotate(21 1014 376)"/><rect x="1075" y="240" width="6" height="7" transform="rotate(21 1075 240)"/><rect x="736" y="310" width="9" height="5" transform="rotate(50 736 310)"/><rect x="1119" y="301" width="5" height="5" transform="rotate(35 1119 301)"/><rect x="345" y="456" width="13" height="7" transform="rotate(-30 345 456)"/><rect x="941" y="706" width="4" height="6" transform="rotate(-62 941 706)"/><rect x="776" y="620" width="9" height="5" transform="rotate(50 776 620)"/><rect x="341" y="510" width="7" height="5" transform="rotate(21 341 510)"/><rect x="935" y="303" width="11" height="3" transform="rotate(21 935 303)"/><rect x="527" y="478" width="12" height="7" transform="rotate(21 527 478)"/><rect x="836" y="469" width="13" height="9" transform="rotate(50 836 469)"/><rect x="581" y="234" width="10" height="7" transform="rotate(-62 581 234)"/><rect x="1215" y="513" width="5" height="6" transform="rotate(21 1215 513)"/><rect x="1015" y="333" width="6" height="5" transform="rotate(-30 1015 333)"/><rect x="583" y="373" width="9" height="3" transform="rotate(50 583 373)"/><rect x="923" y="560" width="4" height="5" transform="rotate(-62 923 560)"/><rect x="740" y="580" width="9" height="4" transform="rotate(-62 740 580)"/><rect x="444" y="521" width="13" height="6" transform="rotate(-62 444 521)"/><rect x="669" y="589" width="10" height="5" transform="rotate(21 669 589)"/><rect x="851" y="301" width="9" height="7" transform="rotate(21 851 301)"/><rect x="1119" y="497" width="6" height="5" transform="rotate(-62 1119 497)"/><rect x="738" y="496" width="4" height="7" transform="rotate(21 738 496)"/><rect x="517" y="604" width="12" height="4" transform="rotate(21 517 604)"/><rect x="753" y="535" width="6" height="7" transform="rotate(-30 753 535)"/><rect x="1166" y="573" width="5" height="8" transform="rotate(21 1166 573)"/><rect x="1010" y="501" width="14" height="8" transform="rotate(35 1010 501)"/><rect x="860" y="487" width="5" height="8" transform="rotate(21 860 487)"/><rect x="1072" y="398" width="12" height="5" transform="rotate(35 1072 398)"/><rect x="480" y="341" width="14" height="7" transform="rotate(21 480 341)"/><rect x="1004" y="292" width="13" height="4" transform="rotate(21 1004 292)"/><rect x="375" y="464" width="11" height="9" transform="rotate(21 375 464)"/><rect x="462" y="223" width="4" height="3" transform="rotate(21 462 223)"/><rect x="337" y="271" width="4" height="5" transform="rotate(35 337 271)"/><rect x="911" y="214" width="8" height="7" transform="rotate(21 911 214)"/><rect x="449" y="295" width="14" height="5" transform="rotate(-30 449 295)"/><rect x="462" y="203" width="12" height="7" transform="rotate(50 462 203)"/><rect x="888" y="392" width="12" height="3" transform="rotate(35 888 392)"/><rect x="1211" y="595" width="6" height="5" transform="rotate(-30 1211 595)"/><rect x="691" y="225" width="14" height="6" transform="rotate(21 691 225)"/><rect x="1274" y="558" width="11" height="3" transform="rotate(21 1274 558)"/><rect x="868" y="681" width="12" height="7" transform="rotate(-62 868 681)"/><rect x="426" y="225" width="12" height="6" transform="rotate(21 426 225)"/><rect x="721" y="502" width="13" height="7" transform="rotate(-62 721 502)"/><rect x="1206" y="317" width="10" height="6" transform="rotate(21 1206 317)"/><rect x="881" y="491" width="9" height="6" transform="rotate(-62 881 491)"/><rect x="1002" y="643" width="10" height="6" transform="rotate(35 1002 643)"/><rect x="1043" y="224" width="9" height="3" transform="rotate(-62 1043 224)"/><rect x="804" y="522" width="8" height="9" transform="rotate(21 804 522)"/><rect x="614" y="350" width="5" height="5" transform="rotate(35 614 350)"/><rect x="852" y="654" width="10" height="7" transform="rotate(50 852 654)"/><rect x="1073" y="215" width="11" height="7" transform="rotate(50 1073 215)"/><rect x="1094" y="223" width="6" height="7" transform="rotate(-30 1094 223)"/><rect x="648" y="660" width="5" height="4" transform="rotate(50 648 660)"/><rect x="645" y="390" width="8" height="6" transform="rotate(-62 645 390)"/><rect x="774" y="408" width="12" height="8" transform="rotate(-62 774 408)"/><rect x="1107" y="279" width="11" height="8" transform="rotate(35 1107 279)"/><rect x="831" y="399" width="8" height="8" transform="rotate(21 831 399)"/><rect x="715" y="210" width="13" height="8" transform="rotate(-30 715 210)"/><rect x="574" y="542" width="13" height="4" transform="rotate(21 574 542)"/><rect x="833" y="569" width="12" height="7" transform="rotate(21 833 569)"/><rect x="738" y="675" width="4" height="6" transform="rotate(-62 738 675)"/><rect x="946" y="291" width="6" height="7" transform="rotate(50 946 291)"/><rect x="434" y="536" width="9" height="3" transform="rotate(21 434 536)"/><rect x="797" y="601" width="9" height="4" transform="rotate(-62 797 601)"/><rect x="923" y="582" width="14" height="8" transform="rotate(-62 923 582)"/><rect x="957" y="343" width="13" height="4" transform="rotate(35 957 343)"/><rect x="694" y="316" width="11" height="8" transform="rotate(-62 694 316)"/><rect x="584" y="565" width="11" height="8" transform="rotate(-62 584 565)"/><rect x="1080" y="206" width="7" height="7" transform="rotate(21 1080 206)"/><rect x="764" y="657" width="11" height="5" transform="rotate(-30 764 657)"/><rect x="614" y="220" width="9" height="3" transform="rotate(-62 614 220)"/><rect x="486" y="455" width="5" height="9" transform="rotate(35 486 455)"/><rect x="1130" y="502" width="5" height="6" transform="rotate(21 1130 502)"/><rect x="845" y="333" width="10" height="4" transform="rotate(-30 845 333)"/><rect x="818" y="288" width="12" height="4" transform="rotate(35 818 288)"/><rect x="1132" y="539" width="6" height="8" transform="rotate(21 1132 539)"/><rect x="1152" y="657" width="6" height="5" transform="rotate(21 1152 657)"/><rect x="987" y="354" width="8" height="4" transform="rotate(21 987 354)"/><rect x="572" y="563" width="13" height="4" transform="rotate(50 572 563)"/><rect x="1128" y="389" width="11" height="3" transform="rotate(21 1128 389)"/><rect x="754" y="701" width="12" height="6" transform="rotate(21 754 701)"/><rect x="889" y="511" width="4" height="4" transform="rotate(-62 889 511)"/><rect x="791" y="396" width="14" height="8" transform="rotate(21 791 396)"/><rect x="938" y="268" width="7" height="6" transform="rotate(50 938 268)"/><rect x="603" y="386" width="10" height="7" transform="rotate(50 603 386)"/><rect x="724" y="492" width="5" height="9" transform="rotate(21 724 492)"/><rect x="751" y="677" width="10" height="4" transform="rotate(21 751 677)"/><rect x="1114" y="537" width="8" height="7" transform="rotate(-30 1114 537)"/><rect x="641" y="294" width="11" height="6" transform="rotate(21 641 294)"/><rect x="876" y="306" width="11" height="8" transform="rotate(50 876 306)"/><rect x="677" y="232" width="12" height="6" transform="rotate(-62 677 232)"/><rect x="1283" y="506" width="14" height="4" transform="rotate(-62 1283 506)"/><rect x="1128" y="488" width="6" height="5" transform="rotate(-62 1128 488)"/><rect x="808" y="612" width="12" height="3" transform="rotate(35 808 612)"/><rect x="940" y="330" width="4" height="8" transform="rotate(21 940 330)"/><rect x="1190" y="438" width="8" height="4" transform="rotate(50 1190 438)"/><rect x="1208" y="631" width="12" height="6" transform="rotate(21 1208 631)"/><rect x="711" y="680" width="5" height="6" transform="rotate(21 711 680)"/><rect x="632" y="219" width="7" height="8" transform="rotate(-62 632 219)"/><rect x="934" y="202" width="11" height="7" transform="rotate(35 934 202)"/><rect x="937" y="303" width="4" height="7" transform="rotate(21 937 303)"/><rect x="1096" y="433" width="11" height="3" transform="rotate(-62 1096 433)"/><rect x="1163" y="485" width="5" height="7" transform="rotate(21 1163 485)"/><rect x="1245" y="439" width="10" height="3" transform="rotate(-62 1245 439)"/><rect x="899" y="700" width="4" height="5" transform="rotate(-62 899 700)"/><rect x="889" y="205" width="7" height="8" transform="rotate(50 889 205)"/><rect x="1000" y="690" width="5" height="7" transform="rotate(21 1000 690)"/><rect x="728" y="476" width="11" height="4" transform="rotate(21 728 476)"/><rect x="912" y="605" width="13" height="7" transform="rotate(21 912 605)"/><rect x="611" y="334" width="8" height="8" transform="rotate(-62 611 334)"/><rect x="1177" y="586" width="12" height="9" transform="rotate(35 1177 586)"/><rect x="506" y="252" width="12" height="7" transform="rotate(21 506 252)"/><rect x="943" y="619" width="9" height="6" transform="rotate(-62 943 619)"/><rect x="988" y="702" width="4" height="4" transform="rotate(-30 988 702)"/><rect x="752" y="622" width="12" height="5" transform="rotate(21 752 622)"/><rect x="708" y="196" width="5" height="4" transform="rotate(-62 708 196)"/><rect x="834" y="678" width="9" height="4" transform="rotate(21 834 678)"/><rect x="623" y="369" width="4" height="8" transform="rotate(50 623 369)"/><rect x="621" y="537" width="10" height="7" transform="rotate(-62 621 537)"/><rect x="639" y="247" width="6" height="6" transform="rotate(35 639 247)"/><rect x="338" y="470" width="11" height="4" transform="rotate(-62 338 470)"/><rect x="547" y="557" width="12" height="6" transform="rotate(21 547 557)"/><rect x="574" y="389" width="13" height="7" transform="rotate(-30 574 389)"/><rect x="634" y="378" width="13" height="7" transform="rotate(-30 634 378)"/><rect x="1146" y="386" width="9" height="3" transform="rotate(-62 1146 386)"/><rect x="841" y="539" width="13" height="7" transform="rotate(35 841 539)"/><rect x="1003" y="699" width="9" height="5" transform="rotate(-62 1003 699)"/><rect x="830" y="446" width="11" height="6" transform="rotate(-62 830 446)"/><rect x="613" y="272" width="6" height="9" transform="rotate(21 613 272)"/><rect x="985" y="229" width="11" height="6" transform="rotate(35 985 229)"/><rect x="1197" y="230" width="12" height="9" transform="rotate(21 1197 230)"/><rect x="1245" y="390" width="10" height="7" transform="rotate(-62 1245 390)"/><rect x="1116" y="367" width="12" height="7" transform="rotate(35 1116 367)"/><rect x="1088" y="552" width="8" height="8" transform="rotate(-30 1088 552)"/><rect x="465" y="273" width="7" height="7" transform="rotate(21 465 273)"/><rect x="931" y="379" width="6" height="7" transform="rotate(21 931 379)"/><rect x="1018" y="682" width="6" height="4" transform="rotate(21 1018 682)"/><rect x="894" y="667" width="11" height="4" transform="rotate(35 894 667)"/><rect x="1288" y="642" width="4" height="4" transform="rotate(-30 1288 642)"/><rect x="1189" y="291" width="14" height="9" transform="rotate(50 1189 291)"/><rect x="681" y="258" width="4" height="5" transform="rotate(21 681 258)"/><rect x="1065" y="368" width="9" height="4" transform="rotate(21 1065 368)"/><rect x="774" y="240" width="10" height="6" transform="rotate(-62 774 240)"/><rect x="600" y="238" width="11" height="5" transform="rotate(-62 600 238)"/><rect x="919" y="538" width="8" height="7" transform="rotate(50 919 538)"/><rect x="350" y="395" width="13" height="9" transform="rotate(35 350 395)"/><rect x="907" y="678" width="10" height="4" transform="rotate(-30 907 678)"/><rect x="539" y="383" width="4" height="8" transform="rotate(-62 539 383)"/><rect x="604" y="337" width="12" height="8" transform="rotate(21 604 337)"/><rect x="558" y="212" width="10" height="3" transform="rotate(35 558 212)"/><rect x="1072" y="265" width="8" height="6" transform="rotate(21 1072 265)"/><rect x="981" y="417" width="8" height="9" transform="rotate(-62 981 417)"/><rect x="899" y="591" width="4" height="3" transform="rotate(21 899 591)"/><rect x="721" y="209" width="7" height="7" transform="rotate(21 721 209)"/><rect x="387" y="430" width="7" height="7" transform="rotate(21 387 430)"/><rect x="924" y="601" width="8" height="8" transform="rotate(21 924 601)"/><rect x="887" y="683" width="8" height="3" transform="rotate(35 887 683)"/><rect x="637" y="470" width="5" height="6" transform="rotate(21 637 470)"/><rect x="543" y="374" width="7" height="7" transform="rotate(21 543 374)"/><rect x="367" y="268" width="12" height="8" transform="rotate(-62 367 268)"/><rect x="495" y="551" width="5" height="7" transform="rotate(-62 495 551)"/><rect x="1107" y="599" width="7" height="3" transform="rotate(-62 1107 599)"/><rect x="1237" y="654" width="10" height="7" transform="rotate(35 1237 654)"/><rect x="654" y="372" width="10" height="6" transform="rotate(21 654 372)"/><rect x="845" y="446" width="6" height="9" transform="rotate(35 845 446)"/><rect x="613" y="663" width="13" height="9" transform="rotate(21 613 663)"/><rect x="610" y="268" width="7" height="9" transform="rotate(21 610 268)"/><rect x="389" y="259" width="9" height="5" transform="rotate(21 389 259)"/><rect x="714" y="575" width="7" height="8" transform="rotate(-62 714 575)"/><rect x="1075" y="417" width="5" height="8" transform="rotate(-30 1075 417)"/><rect x="1121" y="390" width="11" height="4" transform="rotate(35 1121 390)"/><rect x="861" y="320" width="13" height="3" transform="rotate(50 861 320)"/><rect x="759" y="593" width="11" height="9" transform="rotate(21 759 593)"/><rect x="893" y="591" width="6" height="3" transform="rotate(21 893 591)"/><rect x="995" y="580" width="12" height="4" transform="rotate(35 995 580)"/><rect x="942" y="680" width="10" height="8" transform="rotate(21 942 680)"/><rect x="640" y="416" width="10" height="4" transform="rotate(-62 640 416)"/><rect x="1183" y="313" width="11" height="7" transform="rotate(-62 1183 313)"/><rect x="1042" y="403" width="4" height="5" transform="rotate(-62 1042 403)"/><rect x="647" y="571" width="7" height="6" transform="rotate(21 647 571)"/><rect x="715" y="328" width="11" height="8" transform="rotate(35 715 328)"/><rect x="859" y="415" width="5" height="9" transform="rotate(21 859 415)"/><rect x="359" y="195" width="9" height="7" transform="rotate(-62 359 195)"/><rect x="999" y="527" width="8" height="7" transform="rotate(-62 999 527)"/><rect x="905" y="302" width="8" height="5" transform="rotate(50 905 302)"/><rect x="886" y="403" width="9" height="4" transform="rotate(-62 886 403)"/><rect x="735" y="364" width="12" height="5" transform="rotate(35 735 364)"/><rect x="734" y="253" width="10" height="5" transform="rotate(-62 734 253)"/><rect x="410" y="209" width="9" height="9" transform="rotate(50 410 209)"/><rect x="971" y="349" width="5" height="6" transform="rotate(-62 971 349)"/><rect x="894" y="465" width="14" height="5" transform="rotate(21 894 465)"/><rect x="758" y="202" width="9" height="5" transform="rotate(50 758 202)"/><rect x="481" y="391" width="4" height="3" transform="rotate(35 481 391)"/><rect x="356" y="308" width="8" height="9" transform="rotate(-62 356 308)"/><rect x="988" y="265" width="8" height="4" transform="rotate(-62 988 265)"/><rect x="1220" y="640" width="13" height="8" transform="rotate(-62 1220 640)"/><rect x="1001" y="257" width="10" height="5" transform="rotate(35 1001 257)"/><rect x="1022" y="353" width="9" height="6" transform="rotate(-62 1022 353)"/><rect x="333" y="458" width="4" height="6" transform="rotate(21 333 458)"/><rect x="358" y="310" width="6" height="6" transform="rotate(21 358 310)"/><rect x="1188" y="513" width="13" height="5" transform="rotate(21 1188 513)"/><rect x="640" y="258" width="9" height="4" transform="rotate(21 640 258)"/><rect x="435" y="344" width="13" height="8" transform="rotate(50 435 344)"/><rect x="972" y="266" width="4" height="3" transform="rotate(21 972 266)"/><rect x="472" y="364" width="7" height="9" transform="rotate(50 472 364)"/><rect x="770" y="567" width="13" height="9" transform="rotate(-30 770 567)"/><rect x="1012" y="530" width="5" height="8" transform="rotate(21 1012 530)"/><rect x="1252" y="649" width="5" height="5" transform="rotate(21 1252 649)"/><rect x="1180" y="636" width="7" height="6" transform="rotate(21 1180 636)"/><rect x="773" y="515" width="8" height="6" transform="rotate(-62 773 515)"/><rect x="725" y="282" width="13" height="3" transform="rotate(-62 725 282)"/><rect x="737" y="235" width="11" height="6" transform="rotate(21 737 235)"/><rect x="987" y="231" width="11" height="5" transform="rotate(50 987 231)"/><rect x="885" y="297" width="4" height="8" transform="rotate(21 885 297)"/><rect x="520" y="636" width="10" height="8" transform="rotate(21 520 636)"/><rect x="700" y="215" width="12" height="9" transform="rotate(21 700 215)"/><rect x="574" y="426" width="8" height="7" transform="rotate(21 574 426)"/><rect x="1214" y="392" width="11" height="8" transform="rotate(35 1214 392)"/><rect x="592" y="517" width="9" height="8" transform="rotate(50 592 517)"/><rect x="1002" y="307" width="13" height="4" transform="rotate(21 1002 307)"/><rect x="395" y="219" width="9" height="5" transform="rotate(-62 395 219)"/><rect x="1051" y="547" width="9" height="7" transform="rotate(-30 1051 547)"/><rect x="1214" y="580" width="7" height="4" transform="rotate(-62 1214 580)"/><rect x="704" y="254" width="5" height="4" transform="rotate(21 704 254)"/><rect x="669" y="654" width="10" height="4" transform="rotate(50 669 654)"/><rect x="1019" y="621" width="9" height="5" transform="rotate(50 1019 621)"/><rect x="942" y="705" width="7" height="9" transform="rotate(-30 942 705)"/><rect x="962" y="543" width="5" height="5" transform="rotate(21 962 543)"/><rect x="402" y="338" width="9" height="8" transform="rotate(21 402 338)"/><rect x="894" y="425" width="12" height="6" transform="rotate(35 894 425)"/><rect x="993" y="391" width="9" height="5" transform="rotate(-62 993 391)"/><rect x="1285" y="449" width="6" height="5" transform="rotate(-62 1285 449)"/><rect x="387" y="462" width="13" height="8" transform="rotate(21 387 462)"/><rect x="989" y="670" width="12" height="6" transform="rotate(21 989 670)"/><rect x="886" y="551" width="10" height="7" transform="rotate(-62 886 551)"/><rect x="656" y="509" width="7" height="4" transform="rotate(-62 656 509)"/><rect x="431" y="520" width="8" height="6" transform="rotate(-62 431 520)"/><rect x="1044" y="593" width="4" height="8" transform="rotate(21 1044 593)"/><rect x="609" y="193" width="5" height="7" transform="rotate(21 609 193)"/><rect x="939" y="282" width="11" height="3" transform="rotate(-30 939 282)"/><rect x="811" y="686" width="10" height="6" transform="rotate(21 811 686)"/><rect x="996" y="380" width="11" height="5" transform="rotate(-62 996 380)"/><rect x="423" y="409" width="6" height="9" transform="rotate(-30 423 409)"/><rect x="664" y="362" width="9" height="8" transform="rotate(-62 664 362)"/><rect x="610" y="262" width="5" height="8" transform="rotate(50 610 262)"/><rect x="412" y="490" width="13" height="4" transform="rotate(21 412 490)"/><rect x="406" y="419" width="5" height="4" transform="rotate(21 406 419)"/><rect x="633" y="313" width="5" height="4" transform="rotate(21 633 313)"/><rect x="684" y="217" width="4" height="5" transform="rotate(-30 684 217)"/><rect x="793" y="238" width="5" height="7" transform="rotate(-62 793 238)"/><rect x="1048" y="314" width="7" height="6" transform="rotate(50 1048 314)"/><rect x="634" y="428" width="14" height="6" transform="rotate(21 634 428)"/><rect x="691" y="548" width="6" height="4" transform="rotate(21 691 548)"/><rect x="418" y="287" width="13" height="4" transform="rotate(-30 418 287)"/><rect x="1184" y="708" width="5" height="7" transform="rotate(-30 1184 708)"/><rect x="942" y="350" width="5" height="8" transform="rotate(-30 942 350)"/><rect x="864" y="685" width="12" height="5" transform="rotate(21 864 685)"/><rect x="731" y="388" width="10" height="4" transform="rotate(21 731 388)"/><rect x="921" y="531" width="10" height="5" transform="rotate(-62 921 531)"/><rect x="1170" y="316" width="7" height="4" transform="rotate(21 1170 316)"/><rect x="609" y="496" width="4" height="6" transform="rotate(-62 609 496)"/><rect x="412" y="296" width="9" height="7" transform="rotate(21 412 296)"/><rect x="545" y="620" width="13" height="9" transform="rotate(21 545 620)"/><rect x="691" y="560" width="8" height="4" transform="rotate(21 691 560)"/><rect x="976" y="449" width="14" height="4" transform="rotate(-30 976 449)"/><rect x="712" y="382" width="13" height="3" transform="rotate(-62 712 382)"/><rect x="769" y="468" width="7" height="9" transform="rotate(-62 769 468)"/><rect x="533" y="260" width="11" height="3" transform="rotate(-30 533 260)"/><rect x="373" y="269" width="7" height="3" transform="rotate(-30 373 269)"/><rect x="1059" y="692" width="13" height="7" transform="rotate(-62 1059 692)"/><rect x="675" y="642" width="11" height="6" transform="rotate(21 675 642)"/><rect x="648" y="567" width="11" height="7" transform="rotate(-30 648 567)"/><rect x="698" y="616" width="5" height="3" transform="rotate(50 698 616)"/><rect x="612" y="450" width="6" height="7" transform="rotate(21 612 450)"/><rect x="1270" y="472" width="7" height="5" transform="rotate(-30 1270 472)"/><rect x="1120" y="202" width="12" height="5" transform="rotate(-62 1120 202)"/><rect x="642" y="268" width="11" height="4" transform="rotate(-62 642 268)"/><rect x="786" y="331" width="10" height="4" transform="rotate(-62 786 331)"/><rect x="1216" y="685" width="12" height="3" transform="rotate(50 1216 685)"/><rect x="686" y="474" width="5" height="4" transform="rotate(21 686 474)"/><rect x="917" y="436" width="13" height="4" transform="rotate(-62 917 436)"/><rect x="1131" y="389" width="8" height="6" transform="rotate(-62 1131 389)"/><rect x="1138" y="483" width="13" height="8" transform="rotate(35 1138 483)"/><rect x="987" y="593" width="12" height="9" transform="rotate(21 987 593)"/><rect x="674" y="205" width="8" height="9" transform="rotate(50 674 205)"/><rect x="950" y="371" width="13" height="8" transform="rotate(-30 950 371)"/><rect x="1083" y="568" width="5" height="7" transform="rotate(21 1083 568)"/><rect x="598" y="538" width="8" height="6" transform="rotate(-62 598 538)"/><rect x="428" y="271" width="9" height="3" transform="rotate(-30 428 271)"/><rect x="727" y="337" width="7" height="5" transform="rotate(21 727 337)"/><rect x="1015" y="415" width="11" height="6" transform="rotate(50 1015 415)"/><rect x="1063" y="206" width="8" height="4" transform="rotate(21 1063 206)"/><rect x="471" y="553" width="6" height="5" transform="rotate(-30 471 553)"/><rect x="1152" y="528" width="9" height="8" transform="rotate(21 1152 528)"/><rect x="924" y="413" width="9" height="5" transform="rotate(21 924 413)"/><rect x="852" y="552" width="12" height="7" transform="rotate(-30 852 552)"/><rect x="762" y="553" width="13" height="6" transform="rotate(-62 762 553)"/><rect x="1273" y="538" width="9" height="6" transform="rotate(-62 1273 538)"/><rect x="1192" y="323" width="6" height="6" transform="rotate(21 1192 323)"/><rect x="456" y="468" width="10" height="5" transform="rotate(21 456 468)"/><rect x="802" y="589" width="5" height="5" transform="rotate(21 802 589)"/><rect x="985" y="555" width="11" height="3" transform="rotate(21 985 555)"/><rect x="943" y="631" width="6" height="4" transform="rotate(50 943 631)"/><rect x="857" y="562" width="12" height="8" transform="rotate(21 857 562)"/><rect x="1100" y="209" width="6" height="8" transform="rotate(50 1100 209)"/><rect x="598" y="365" width="10" height="5" transform="rotate(50 598 365)"/><rect x="859" y="376" width="10" height="6" transform="rotate(21 859 376)"/><rect x="661" y="629" width="13" height="3" transform="rotate(50 661 629)"/><rect x="814" y="401" width="11" height="4" transform="rotate(-30 814 401)"/><rect x="932" y="240" width="6" height="5" transform="rotate(50 932 240)"/><rect x="1083" y="473" width="11" height="4" transform="rotate(21 1083 473)"/><rect x="951" y="707" width="7" height="5" transform="rotate(-62 951 707)"/><rect x="831" y="654" width="6" height="5" transform="rotate(-62 831 654)"/><rect x="605" y="334" width="8" height="8" transform="rotate(35 605 334)"/><rect x="695" y="545" width="12" height="4" transform="rotate(21 695 545)"/><rect x="827" y="521" width="13" height="4" transform="rotate(-30 827 521)"/><rect x="666" y="472" width="4" height="6" transform="rotate(21 666 472)"/><rect x="1201" y="664" width="10" height="7" transform="rotate(21 1201 664)"/><rect x="449" y="430" width="6" height="6" transform="rotate(21 449 430)"/><rect x="581" y="246" width="10" height="3" transform="rotate(21 581 246)"/><rect x="687" y="528" width="6" height="7" transform="rotate(21 687 528)"/><rect x="673" y="569" width="7" height="8" transform="rotate(21 673 569)"/><rect x="1233" y="402" width="14" height="9" transform="rotate(21 1233 402)"/><rect x="892" y="254" width="6" height="6" transform="rotate(21 892 254)"/><rect x="694" y="691" width="11" height="7" transform="rotate(21 694 691)"/><rect x="887" y="574" width="9" height="8" transform="rotate(21 887 574)"/><rect x="361" y="257" width="6" height="5" transform="rotate(35 361 257)"/><rect x="1054" y="416" width="5" height="8" transform="rotate(-62 1054 416)"/><rect x="539" y="611" width="11" height="6" transform="rotate(21 539 611)"/><rect x="666" y="458" width="6" height="5" transform="rotate(21 666 458)"/><rect x="1260" y="594" width="10" height="7" transform="rotate(21 1260 594)"/><rect x="481" y="314" width="8" height="7" transform="rotate(21 481 314)"/><rect x="913" y="689" width="9" height="4" transform="rotate(21 913 689)"/><rect x="1284" y="571" width="6" height="4" transform="rotate(-62 1284 571)"/><rect x="392" y="230" width="5" height="5" transform="rotate(21 392 230)"/><rect x="1252" y="337" width="14" height="4" transform="rotate(-62 1252 337)"/><rect x="1106" y="350" width="12" height="6" transform="rotate(35 1106 350)"/><rect x="594" y="207" width="10" height="5" transform="rotate(-62 594 207)"/><rect x="650" y="678" width="11" height="7" transform="rotate(21 650 678)"/><rect x="820" y="367" width="7" height="6" transform="rotate(21 820 367)"/><rect x="1019" y="614" width="5" height="4" transform="rotate(50 1019 614)"/><rect x="1221" y="682" width="11" height="3" transform="rotate(21 1221 682)"/><rect x="330" y="274" width="9" height="7" transform="rotate(50 330 274)"/><rect x="413" y="319" width="12" height="5" transform="rotate(-62 413 319)"/><rect x="939" y="616" width="13" height="4" transform="rotate(21 939 616)"/><rect x="788" y="672" width="7" height="4" transform="rotate(-62 788 672)"/><rect x="407" y="310" width="13" height="4" transform="rotate(-62 407 310)"/><rect x="695" y="337" width="11" height="5" transform="rotate(21 695 337)"/><rect x="863" y="638" width="4" height="7" transform="rotate(-62 863 638)"/><rect x="816" y="475" width="7" height="4" transform="rotate(-62 816 475)"/><rect x="1120" y="448" width="4" height="3" transform="rotate(-30 1120 448)"/><rect x="359" y="514" width="5" height="8" transform="rotate(21 359 514)"/><rect x="541" y="427" width="6" height="4" transform="rotate(35 541 427)"/><rect x="1144" y="339" width="14" height="5" transform="rotate(21 1144 339)"/><rect x="959" y="409" width="11" height="4" transform="rotate(-62 959 409)"/><rect x="1198" y="594" width="11" height="9" transform="rotate(21 1198 594)"/><rect x="758" y="357" width="7" height="5" transform="rotate(-62 758 357)"/><rect x="478" y="390" width="13" height="7" transform="rotate(21 478 390)"/><rect x="905" y="578" width="7" height="5" transform="rotate(21 905 578)"/><rect x="879" y="514" width="7" height="8" transform="rotate(35 879 514)"/><rect x="971" y="256" width="12" height="6" transform="rotate(35 971 256)"/><rect x="553" y="612" width="11" height="5" transform="rotate(35 553 612)"/><rect x="643" y="604" width="10" height="6" transform="rotate(-30 643 604)"/><rect x="950" y="676" width="9" height="4" transform="rotate(21 950 676)"/><rect x="500" y="544" width="12" height="8" transform="rotate(35 500 544)"/><rect x="988" y="585" width="12" height="6" transform="rotate(-30 988 585)"/><rect x="1093" y="569" width="7" height="6" transform="rotate(21 1093 569)"/><rect x="562" y="378" width="4" height="7" transform="rotate(21 562 378)"/><rect x="1220" y="607" width="5" height="5" transform="rotate(50 1220 607)"/><rect x="642" y="687" width="11" height="7" transform="rotate(-30 642 687)"/><rect x="769" y="280" width="4" height="5" transform="rotate(35 769 280)"/><rect x="584" y="290" width="6" height="8" transform="rotate(21 584 290)"/><rect x="742" y="283" width="6" height="5" transform="rotate(35 742 283)"/><rect x="824" y="562" width="7" height="5" transform="rotate(21 824 562)"/><rect x="986" y="286" width="10" height="3" transform="rotate(50 986 286)"/><rect x="581" y="230" width="10" height="4" transform="rotate(21 581 230)"/><rect x="637" y="384" width="14" height="3" transform="rotate(21 637 384)"/><rect x="1068" y="633" width="10" height="3" transform="rotate(-62 1068 633)"/><rect x="978" y="231" width="4" height="6" transform="rotate(-62 978 231)"/><rect x="813" y="540" width="12" height="6" transform="rotate(21 813 540)"/><rect x="814" y="491" width="4" height="6" transform="rotate(-62 814 491)"/><rect x="485.4" y="533.3" width="5.7" height="2.5" transform="rotate(21 485.4 533.3)"/><rect x="585.6" y="560.8" width="6.3" height="2.5" transform="rotate(21 585.6 560.8)"/><rect x="575.7" y="579.5" width="7.9" height="2.3" transform="rotate(21 575.7 579.5)"/><rect x="569.4" y="593.7" width="5.0" height="3.3" transform="rotate(21 569.4 593.7)"/><rect x="661.1" y="602.3" width="8.0" height="3.2" transform="rotate(21 661.1 602.3)"/><rect x="710.7" y="630.3" width="5.6" height="2.8" transform="rotate(21 710.7 630.3)"/><rect x="491.2" y="528.3" width="5.2" height="3.0" transform="rotate(21 491.2 528.3)"/><rect x="603.9" y="598.2" width="4.4" height="2.1" transform="rotate(21 603.9 598.2)"/><rect x="669.3" y="639.0" width="3.1" height="2.6" transform="rotate(21 669.3 639.0)"/><rect x="435.7" y="515.2" width="6.5" height="2.5" transform="rotate(21 435.7 515.2)"/><rect x="731.0" y="621.3" width="7.4" height="3.0" transform="rotate(21 731.0 621.3)"/><rect x="625.2" y="589.3" width="5.7" height="3.0" transform="rotate(21 625.2 589.3)"/><rect x="644.8" y="621.2" width="5.5" height="2.2" transform="rotate(21 644.8 621.2)"/><rect x="463.2" y="525.1" width="4.9" height="2.5" transform="rotate(21 463.2 525.1)"/><rect x="726.1" y="662.3" width="6.1" height="2.3" transform="rotate(21 726.1 662.3)"/><rect x="594.1" y="583.9" width="5.5" height="2.3" transform="rotate(21 594.1 583.9)"/><rect x="648.7" y="634.3" width="3.2" height="3.3" transform="rotate(21 648.7 634.3)"/><rect x="742.2" y="627.4" width="7.5" height="3.4" transform="rotate(21 742.2 627.4)"/><rect x="465.7" y="541.0" width="7.6" height="2.5" transform="rotate(21 465.7 541.0)"/><rect x="430.6" y="544.8" width="6.3" height="3.1" transform="rotate(21 430.6 544.8)"/><rect x="538.8" y="566.1" width="4.8" height="3.0" transform="rotate(21 538.8 566.1)"/><rect x="719.5" y="641.5" width="6.2" height="2.1" transform="rotate(21 719.5 641.5)"/><rect x="508.8" y="544.4" width="7.8" height="2.4" transform="rotate(21 508.8 544.4)"/><rect x="452.2" y="522.9" width="7.2" height="2.6" transform="rotate(21 452.2 522.9)"/><rect x="489.8" y="571.5" width="3.9" height="3.0" transform="rotate(21 489.8 571.5)"/><rect x="577.4" y="583.4" width="5.0" height="2.5" transform="rotate(21 577.4 583.4)"/><rect x="574.1" y="562.9" width="3.6" height="3.3" transform="rotate(21 574.1 562.9)"/><rect x="474.4" y="530.7" width="7.1" height="2.8" transform="rotate(21 474.4 530.7)"/><rect x="543.1" y="562.7" width="4.3" height="3.0" transform="rotate(21 543.1 562.7)"/><rect x="661.5" y="633.7" width="4.3" height="2.5" transform="rotate(21 661.5 633.7)"/><rect x="521.0" y="550.7" width="4.6" height="2.0" transform="rotate(21 521.0 550.7)"/><rect x="607.2" y="601.8" width="3.2" height="2.1" transform="rotate(21 607.2 601.8)"/><rect x="716.7" y="647.8" width="6.5" height="2.3" transform="rotate(21 716.7 647.8)"/><rect x="723.1" y="641.5" width="3.7" height="2.7" transform="rotate(21 723.1 641.5)"/><rect x="568.0" y="555.2" width="3.1" height="2.9" transform="rotate(21 568.0 555.2)"/><rect x="644.5" y="614.3" width="5.6" height="2.6" transform="rotate(21 644.5 614.3)"/><rect x="623.9" y="617.6" width="3.1" height="3.2" transform="rotate(21 623.9 617.6)"/><rect x="657.1" y="588.5" width="4.0" height="2.0" transform="rotate(21 657.1 588.5)"/><rect x="557.3" y="596.5" width="6.1" height="3.4" transform="rotate(21 557.3 596.5)"/><rect x="510.0" y="535.2" width="4.3" height="3.4" transform="rotate(21 510.0 535.2)"/><rect x="639.8" y="586.3" width="3.8" height="3.5" transform="rotate(21 639.8 586.3)"/><rect x="709.7" y="631.0" width="7.7" height="2.4" transform="rotate(21 709.7 631.0)"/><rect x="721.5" y="618.1" width="6.6" height="2.1" transform="rotate(21 721.5 618.1)"/><rect x="507.5" y="539.1" width="7.3" height="3.3" transform="rotate(21 507.5 539.1)"/><rect x="540.4" y="569.0" width="7.3" height="3.1" transform="rotate(21 540.4 569.0)"/><rect x="719.7" y="622.0" width="6.1" height="2.2" transform="rotate(21 719.7 622.0)"/><rect x="684.5" y="647.4" width="7.2" height="3.2" transform="rotate(21 684.5 647.4)"/><rect x="639.6" y="583.5" width="3.8" height="3.3" transform="rotate(21 639.6 583.5)"/><rect x="483.8" y="569.0" width="7.9" height="2.8" transform="rotate(21 483.8 569.0)"/><rect x="711.8" y="656.6" width="7.3" height="2.6" transform="rotate(21 711.8 656.6)"/><rect x="564.5" y="562.0" width="4.8" height="2.5" transform="rotate(21 564.5 562.0)"/><rect x="509.1" y="577.5" width="6.0" height="3.1" transform="rotate(21 509.1 577.5)"/><rect x="678.9" y="626.9" width="6.8" height="3.4" transform="rotate(21 678.9 626.9)"/><rect x="650.4" y="623.6" width="4.8" height="2.8" transform="rotate(21 650.4 623.6)"/><rect x="691.4" y="642.1" width="4.3" height="3.1" transform="rotate(21 691.4 642.1)"/><rect x="687.4" y="634.9" width="3.9" height="2.9" transform="rotate(21 687.4 634.9)"/><rect x="599.7" y="590.6" width="5.9" height="3.3" transform="rotate(21 599.7 590.6)"/><rect x="565.7" y="588.7" width="8.0" height="2.5" transform="rotate(21 565.7 588.7)"/><rect x="726.7" y="626.3" width="4.5" height="2.5" transform="rotate(21 726.7 626.3)"/><rect x="540.9" y="579.2" width="5.8" height="3.4" transform="rotate(21 540.9 579.2)"/><rect x="532.9" y="547.8" width="3.7" height="2.1" transform="rotate(21 532.9 547.8)"/><rect x="698.8" y="624.3" width="4.8" height="2.4" transform="rotate(21 698.8 624.3)"/><rect x="423.0" y="518.4" width="4.6" height="3.0" transform="rotate(21 423.0 518.4)"/><rect x="649.3" y="619.0" width="4.1" height="3.1" transform="rotate(21 649.3 619.0)"/><rect x="593.2" y="592.5" width="8.0" height="2.8" transform="rotate(21 593.2 592.5)"/><rect x="650.3" y="604.3" width="7.4" height="2.8" transform="rotate(21 650.3 604.3)"/><rect x="646.4" y="596.0" width="7.2" height="2.1" transform="rotate(21 646.4 596.0)"/><rect x="572.2" y="594.9" width="7.9" height="3.0" transform="rotate(21 572.2 594.9)"/><rect x="589.2" y="590.9" width="7.0" height="3.0" transform="rotate(21 589.2 590.9)"/><rect x="721.5" y="655.7" width="6.7" height="2.8" transform="rotate(21 721.5 655.7)"/><rect x="620.0" y="615.4" width="5.7" height="3.2" transform="rotate(21 620.0 615.4)"/><rect x="572.1" y="605.5" width="3.3" height="3.3" transform="rotate(21 572.1 605.5)"/><rect x="679.1" y="625.9" width="5.5" height="3.3" transform="rotate(21 679.1 625.9)"/><rect x="695.5" y="627.7" width="4.9" height="2.1" transform="rotate(21 695.5 627.7)"/><rect x="589.3" y="586.6" width="5.6" height="2.5" transform="rotate(21 589.3 586.6)"/><rect x="622.3" y="604.8" width="4.3" height="3.2" transform="rotate(21 622.3 604.8)"/><rect x="726.2" y="656.3" width="3.6" height="2.9" transform="rotate(21 726.2 656.3)"/><rect x="487.0" y="528.0" width="5.6" height="3.0" transform="rotate(21 487.0 528.0)"/><rect x="504.3" y="547.3" width="4.8" height="3.4" transform="rotate(21 504.3 547.3)"/><rect x="571.7" y="560.1" width="4.3" height="3.0" transform="rotate(21 571.7 560.1)"/><rect x="618.1" y="581.0" width="7.4" height="2.8" transform="rotate(21 618.1 581.0)"/><rect x="506.6" y="552.2" width="3.6" height="3.4" transform="rotate(21 506.6 552.2)"/><rect x="469.8" y="532.4" width="6.2" height="2.5" transform="rotate(21 469.8 532.4)"/><rect x="529.1" y="578.8" width="6.3" height="2.8" transform="rotate(21 529.1 578.8)"/><rect x="674.2" y="646.0" width="5.7" height="2.5" transform="rotate(21 674.2 646.0)"/><rect x="675.0" y="628.0" width="4.4" height="3.3" transform="rotate(21 675.0 628.0)"/><rect x="640.6" y="631.4" width="3.9" height="3.0" transform="rotate(21 640.6 631.4)"/><rect x="541.5" y="551.7" width="3.7" height="3.2" transform="rotate(21 541.5 551.7)"/><rect x="470.5" y="552.3" width="5.7" height="2.9" transform="rotate(21 470.5 552.3)"/><rect x="683.9" y="623.9" width="7.3" height="2.7" transform="rotate(21 683.9 623.9)"/><rect x="641.6" y="604.3" width="7.9" height="2.6" transform="rotate(21 641.6 604.3)"/><rect x="496.0" y="540.2" width="5.3" height="2.4" transform="rotate(21 496.0 540.2)"/><rect x="677.9" y="607.0" width="5.5" height="2.9" transform="rotate(21 677.9 607.0)"/><rect x="413.6" y="543.6" width="4.4" height="2.7" transform="rotate(21 413.6 543.6)"/><rect x="705.1" y="612.7" width="6.4" height="2.9" transform="rotate(21 705.1 612.7)"/><rect x="500.9" y="559.7" width="3.6" height="3.1" transform="rotate(21 500.9 559.7)"/><rect x="464.2" y="524.1" width="4.5" height="2.4" transform="rotate(21 464.2 524.1)"/><rect x="478.4" y="542.3" width="6.2" height="3.3" transform="rotate(21 478.4 542.3)"/><rect x="512.4" y="550.6" width="7.0" height="2.7" transform="rotate(21 512.4 550.6)"/><rect x="633.3" y="625.6" width="5.1" height="2.5" transform="rotate(21 633.3 625.6)"/><rect x="648.7" y="588.7" width="5.1" height="2.9" transform="rotate(21 648.7 588.7)"/><rect x="525.5" y="557.7" width="3.4" height="2.8" transform="rotate(21 525.5 557.7)"/><rect x="516.2" y="574.7" width="5.7" height="2.2" transform="rotate(21 516.2 574.7)"/><rect x="718.6" y="616.5" width="6.1" height="3.0" transform="rotate(21 718.6 616.5)"/><rect x="658.4" y="590.0" width="7.1" height="3.0" transform="rotate(21 658.4 590.0)"/><rect x="421.5" y="548.5" width="5.1" height="3.1" transform="rotate(21 421.5 548.5)"/><rect x="493.2" y="538.5" width="5.5" height="2.6" transform="rotate(21 493.2 538.5)"/><rect x="514.2" y="562.7" width="6.7" height="2.6" transform="rotate(21 514.2 562.7)"/><rect x="683.8" y="608.7" width="7.9" height="3.3" transform="rotate(21 683.8 608.7)"/><rect x="695.8" y="648.3" width="6.0" height="2.5" transform="rotate(21 695.8 648.3)"/><rect x="554.9" y="590.5" width="7.6" height="2.9" transform="rotate(21 554.9 590.5)"/><rect x="675.2" y="644.5" width="3.0" height="3.0" transform="rotate(21 675.2 644.5)"/><rect x="445.5" y="532.6" width="5.4" height="2.5" transform="rotate(21 445.5 532.6)"/><rect x="444.8" y="538.8" width="4.7" height="3.4" transform="rotate(21 444.8 538.8)"/><rect x="491.8" y="565.9" width="3.2" height="3.3" transform="rotate(21 491.8 565.9)"/><rect x="698.2" y="637.2" width="6.8" height="3.0" transform="rotate(21 698.2 637.2)"/><rect x="578.4" y="583.8" width="7.8" height="2.4" transform="rotate(21 578.4 583.8)"/><rect x="526.3" y="568.2" width="7.5" height="2.1" transform="rotate(21 526.3 568.2)"/><rect x="669.9" y="632.1" width="6.9" height="2.6" transform="rotate(21 669.9 632.1)"/><rect x="649.2" y="602.7" width="5.4" height="2.8" transform="rotate(21 649.2 602.7)"/><rect x="463.2" y="537.7" width="3.3" height="2.3" transform="rotate(21 463.2 537.7)"/><rect x="711.6" y="612.1" width="5.8" height="2.6" transform="rotate(21 711.6 612.1)"/><rect x="717.7" y="640.1" width="4.2" height="2.2" transform="rotate(21 717.7 640.1)"/><rect x="643.5" y="590.8" width="5.1" height="3.5" transform="rotate(21 643.5 590.8)"/><rect x="436.8" y="528.6" width="4.5" height="3.4" transform="rotate(21 436.8 528.6)"/><rect x="571.1" y="563.8" width="4.6" height="3.2" transform="rotate(21 571.1 563.8)"/><rect x="677.9" y="603.2" width="5.6" height="3.4" transform="rotate(21 677.9 603.2)"/><rect x="584.3" y="608.0" width="4.8" height="2.6" transform="rotate(21 584.3 608.0)"/><rect x="707.2" y="623.0" width="3.5" height="2.9" transform="rotate(21 707.2 623.0)"/><rect x="620.3" y="590.0" width="4.3" height="2.3" transform="rotate(21 620.3 590.0)"/><rect x="731.7" y="634.0" width="7.7" height="2.8" transform="rotate(21 731.7 634.0)"/><rect x="460.6" y="555.3" width="6.1" height="2.9" transform="rotate(21 460.6 555.3)"/><rect x="466.8" y="519.7" width="6.3" height="2.6" transform="rotate(21 466.8 519.7)"/><rect x="477.8" y="531.6" width="7.1" height="3.4" transform="rotate(21 477.8 531.6)"/><rect x="603.2" y="567.8" width="7.7" height="2.4" transform="rotate(21 603.2 567.8)"/><rect x="660.9" y="614.4" width="4.2" height="3.1" transform="rotate(21 660.9 614.4)"/><rect x="461.9" y="538.2" width="6.4" height="3.0" transform="rotate(21 461.9 538.2)"/><rect x="563.8" y="561.5" width="5.2" height="2.9" transform="rotate(21 563.8 561.5)"/><rect x="532.2" y="552.1" width="3.6" height="3.2" transform="rotate(21 532.2 552.1)"/><rect x="508.5" y="580.8" width="3.9" height="2.3" transform="rotate(21 508.5 580.8)"/><rect x="727.2" y="619.3" width="7.1" height="3.5" transform="rotate(21 727.2 619.3)"/><rect x="645.3" y="595.1" width="6.4" height="2.5" transform="rotate(21 645.3 595.1)"/><rect x="480.8" y="530.5" width="3.1" height="2.8" transform="rotate(21 480.8 530.5)"/><rect x="703.0" y="647.2" width="3.8" height="3.2" transform="rotate(21 703.0 647.2)"/><rect x="558.7" y="581.2" width="5.2" height="2.5" transform="rotate(21 558.7 581.2)"/><rect x="672.2" y="607.3" width="3.6" height="3.0" transform="rotate(21 672.2 607.3)"/><rect x="644.7" y="604.7" width="5.2" height="2.2" transform="rotate(21 644.7 604.7)"/><rect x="649.6" y="629.8" width="3.2" height="2.1" transform="rotate(21 649.6 629.8)"/><rect x="450.6" y="544.0" width="3.7" height="2.3" transform="rotate(21 450.6 544.0)"/><rect x="551.6" y="580.1" width="7.0" height="2.6" transform="rotate(21 551.6 580.1)"/><rect x="668.6" y="612.1" width="5.1" height="3.2" transform="rotate(21 668.6 612.1)"/><rect x="567.9" y="579.8" width="5.7" height="2.5" transform="rotate(21 567.9 579.8)"/><rect x="666.3" y="593.2" width="4.6" height="3.2" transform="rotate(21 666.3 593.2)"/><rect x="523.3" y="545.9" width="4.8" height="2.8" transform="rotate(21 523.3 545.9)"/><rect x="469.9" y="565.4" width="3.9" height="3.4" transform="rotate(21 469.9 565.4)"/><rect x="437.4" y="545.7" width="3.0" height="2.8" transform="rotate(21 437.4 545.7)"/><rect x="719.4" y="648.6" width="6.4" height="2.2" transform="rotate(21 719.4 648.6)"/><rect x="569.5" y="583.8" width="5.5" height="2.4" transform="rotate(21 569.5 583.8)"/><rect x="470.9" y="534.9" width="7.8" height="2.8" transform="rotate(21 470.9 534.9)"/><rect x="563.2" y="553.7" width="4.6" height="3.4" transform="rotate(21 563.2 553.7)"/><rect x="530.3" y="565.6" width="4.1" height="2.8" transform="rotate(21 530.3 565.6)"/><rect x="584.4" y="595.5" width="4.7" height="2.6" transform="rotate(21 584.4 595.5)"/><rect x="691.4" y="638.0" width="5.7" height="2.9" transform="rotate(21 691.4 638.0)"/><rect x="564.3" y="579.3" width="3.1" height="2.9" transform="rotate(21 564.3 579.3)"/><rect x="487.1" y="573.2" width="7.1" height="2.1" transform="rotate(21 487.1 573.2)"/><rect x="458.7" y="531.7" width="3.6" height="3.2" transform="rotate(21 458.7 531.7)"/><rect x="709.5" y="638.8" width="5.2" height="3.2" transform="rotate(21 709.5 638.8)"/><rect x="439.9" y="526.2" width="5.5" height="2.6" transform="rotate(21 439.9 526.2)"/><rect x="460.7" y="536.5" width="7.6" height="2.5" transform="rotate(21 460.7 536.5)"/><rect x="631.6" y="601.0" width="7.1" height="2.9" transform="rotate(21 631.6 601.0)"/><rect x="689.6" y="616.2" width="5.5" height="3.0" transform="rotate(21 689.6 616.2)"/><rect x="525.3" y="580.9" width="5.2" height="2.8" transform="rotate(21 525.3 580.9)"/><rect x="430.6" y="528.8" width="5.6" height="2.8" transform="rotate(21 430.6 528.8)"/><rect x="469.3" y="564.6" width="4.7" height="3.1" transform="rotate(21 469.3 564.6)"/><rect x="541.2" y="570.0" width="6.2" height="3.1" transform="rotate(21 541.2 570.0)"/><rect x="694.9" y="629.3" width="4.5" height="2.0" transform="rotate(21 694.9 629.3)"/><rect x="462.6" y="560.2" width="3.2" height="2.1" transform="rotate(21 462.6 560.2)"/><rect x="659.9" y="599.6" width="5.0" height="3.4" transform="rotate(21 659.9 599.6)"/><rect x="487.0" y="536.9" width="5.0" height="3.1" transform="rotate(21 487.0 536.9)"/><rect x="583.7" y="563.6" width="6.6" height="3.1" transform="rotate(21 583.7 563.6)"/><rect x="432.9" y="505.3" width="7.5" height="2.5" transform="rotate(21 432.9 505.3)"/><rect x="671.1" y="643.7" width="7.2" height="2.1" transform="rotate(21 671.1 643.7)"/><rect x="460.4" y="522.0" width="6.1" height="2.6" transform="rotate(21 460.4 522.0)"/><rect x="683.8" y="628.4" width="6.6" height="3.2" transform="rotate(21 683.8 628.4)"/><rect x="705.5" y="638.9" width="7.2" height="2.6" transform="rotate(21 705.5 638.9)"/><rect x="604.5" y="614.9" width="3.1" height="2.6" transform="rotate(21 604.5 614.9)"/><rect x="716.0" y="654.2" width="4.2" height="2.6" transform="rotate(21 716.0 654.2)"/><rect x="512.4" y="570.7" width="7.5" height="2.1" transform="rotate(21 512.4 570.7)"/><rect x="730.5" y="649.5" width="5.6" height="2.4" transform="rotate(21 730.5 649.5)"/><rect x="597.1" y="586.0" width="3.0" height="3.0" transform="rotate(21 597.1 586.0)"/><rect x="478.8" y="545.6" width="5.1" height="2.3" transform="rotate(21 478.8 545.6)"/><rect x="627.8" y="583.0" width="7.4" height="2.8" transform="rotate(21 627.8 583.0)"/><rect x="705.4" y="637.6" width="5.3" height="3.1" transform="rotate(21 705.4 637.6)"/><rect x="651.7" y="589.6" width="6.9" height="2.3" transform="rotate(21 651.7 589.6)"/><rect x="411.7" y="543.3" width="6.9" height="2.8" transform="rotate(21 411.7 543.3)"/><rect x="495.1" y="535.8" width="6.1" height="2.8" transform="rotate(21 495.1 535.8)"/><rect x="557.7" y="555.3" width="6.8" height="2.5" transform="rotate(21 557.7 555.3)"/><rect x="473.4" y="551.6" width="6.8" height="2.0" transform="rotate(21 473.4 551.6)"/><rect x="638.5" y="601.4" width="6.6" height="2.2" transform="rotate(21 638.5 601.4)"/><rect x="600.6" y="605.0" width="4.4" height="3.2" transform="rotate(21 600.6 605.0)"/><rect x="652.6" y="598.9" width="4.5" height="2.4" transform="rotate(21 652.6 598.9)"/><rect x="716.9" y="629.9" width="3.3" height="2.1" transform="rotate(21 716.9 629.9)"/><rect x="711.7" y="656.9" width="7.4" height="3.4" transform="rotate(21 711.7 656.9)"/><rect x="465.7" y="520.3" width="6.6" height="3.4" transform="rotate(21 465.7 520.3)"/><rect x="552.9" y="591.1" width="7.7" height="2.2" transform="rotate(21 552.9 591.1)"/><rect x="689.2" y="630.6" width="3.3" height="3.3" transform="rotate(21 689.2 630.6)"/><rect x="667.3" y="608.1" width="5.7" height="2.8" transform="rotate(21 667.3 608.1)"/><rect x="536.3" y="579.3" width="6.7" height="2.1" transform="rotate(21 536.3 579.3)"/><rect x="575.3" y="586.4" width="4.9" height="3.0" transform="rotate(21 575.3 586.4)"/><rect x="569.1" y="602.3" width="4.5" height="3.0" transform="rotate(21 569.1 602.3)"/><rect x="680.5" y="629.8" width="7.2" height="2.0" transform="rotate(21 680.5 629.8)"/><rect x="481.7" y="529.9" width="4.3" height="2.6" transform="rotate(21 481.7 529.9)"/><rect x="494.9" y="527.0" width="3.7" height="2.5" transform="rotate(21 494.9 527.0)"/><rect x="509.9" y="567.5" width="5.9" height="2.3" transform="rotate(21 509.9 567.5)"/><rect x="515.9" y="568.6" width="3.8" height="2.8" transform="rotate(21 515.9 568.6)"/><rect x="715.4" y="625.0" width="7.0" height="3.4" transform="rotate(21 715.4 625.0)"/><rect x="717.9" y="633.9" width="3.4" height="2.0" transform="rotate(21 717.9 633.9)"/><rect x="654.4" y="595.4" width="3.8" height="2.7" transform="rotate(21 654.4 595.4)"/><rect x="451.6" y="555.5" width="5.7" height="3.4" transform="rotate(21 451.6 555.5)"/><rect x="583.0" y="578.2" width="5.4" height="2.8" transform="rotate(21 583.0 578.2)"/><rect x="716.9" y="615.2" width="3.3" height="2.1" transform="rotate(21 716.9 615.2)"/><rect x="542.8" y="576.8" width="5.2" height="2.8" transform="rotate(21 542.8 576.8)"/><rect x="678.1" y="604.5" width="5.6" height="2.4" transform="rotate(21 678.1 604.5)"/><rect x="555.2" y="557.5" width="3.7" height="2.9" transform="rotate(21 555.2 557.5)"/><rect x="719.6" y="663.1" width="4.3" height="2.3" transform="rotate(21 719.6 663.1)"/><rect x="439.7" y="532.5" width="5.4" height="3.0" transform="rotate(21 439.7 532.5)"/><rect x="458.9" y="550.1" width="3.8" height="2.4" transform="rotate(21 458.9 550.1)"/><rect x="619.2" y="582.0" width="5.1" height="3.4" transform="rotate(21 619.2 582.0)"/><rect x="638.3" y="613.5" width="3.4" height="2.8" transform="rotate(21 638.3 613.5)"/><rect x="629.1" y="628.3" width="6.6" height="3.3" transform="rotate(21 629.1 628.3)"/><rect x="722.2" y="632.8" width="6.9" height="2.9" transform="rotate(21 722.2 632.8)"/><rect x="534.4" y="583.9" width="6.5" height="3.4" transform="rotate(21 534.4 583.9)"/><rect x="669.5" y="614.0" width="6.0" height="2.6" transform="rotate(21 669.5 614.0)"/><rect x="640.0" y="586.5" width="6.5" height="2.9" transform="rotate(21 640.0 586.5)"/><rect x="482.5" y="535.4" width="5.6" height="3.0" transform="rotate(21 482.5 535.4)"/><rect x="602.8" y="602.4" width="6.4" height="2.9" transform="rotate(21 602.8 602.4)"/><rect x="696.9" y="620.0" width="5.6" height="2.0" transform="rotate(21 696.9 620.0)"/><rect x="526.1" y="579.6" width="6.5" height="3.2" transform="rotate(21 526.1 579.6)"/><rect x="715.3" y="649.1" width="6.8" height="2.0" transform="rotate(21 715.3 649.1)"/><rect x="585.1" y="592.7" width="3.2" height="2.3" transform="rotate(21 585.1 592.7)"/><rect x="592.3" y="571.1" width="5.8" height="2.1" transform="rotate(21 592.3 571.1)"/><rect x="721.4" y="635.8" width="4.5" height="2.9" transform="rotate(21 721.4 635.8)"/><rect x="582.4" y="578.3" width="5.5" height="3.1" transform="rotate(21 582.4 578.3)"/><rect x="681.5" y="642.5" width="6.8" height="3.0" transform="rotate(21 681.5 642.5)"/><rect x="492.9" y="567.3" width="5.7" height="2.6" transform="rotate(21 492.9 567.3)"/><rect x="676.8" y="611.6" width="6.0" height="2.9" transform="rotate(21 676.8 611.6)"/><rect x="660.0" y="623.3" width="5.7" height="2.8" transform="rotate(21 660.0 623.3)"/><rect x="592.9" y="569.2" width="4.6" height="2.1" transform="rotate(21 592.9 569.2)"/><rect x="609.3" y="607.4" width="5.5" height="2.7" transform="rotate(21 609.3 607.4)"/><rect x="597.8" y="565.6" width="6.0" height="2.9" transform="rotate(21 597.8 565.6)"/><rect x="674.8" y="608.0" width="4.2" height="2.3" transform="rotate(21 674.8 608.0)"/><rect x="626.3" y="602.4" width="4.6" height="2.5" transform="rotate(21 626.3 602.4)"/><rect x="494.4" y="573.5" width="6.6" height="3.4" transform="rotate(21 494.4 573.5)"/><rect x="636.6" y="581.9" width="4.2" height="2.9" transform="rotate(21 636.6 581.9)"/><rect x="473.1" y="524.1" width="3.2" height="2.7" transform="rotate(21 473.1 524.1)"/><rect x="678.2" y="635.5" width="3.6" height="3.2" transform="rotate(21 678.2 635.5)"/><rect x="559.1" y="597.0" width="6.5" height="2.2" transform="rotate(21 559.1 597.0)"/><rect x="610.6" y="580.3" width="4.9" height="2.1" transform="rotate(21 610.6 580.3)"/><rect x="720.0" y="641.2" width="5.5" height="3.3" transform="rotate(21 720.0 641.2)"/><rect x="420.7" y="533.5" width="7.1" height="2.3" transform="rotate(21 420.7 533.5)"/><rect x="472.2" y="526.1" width="6.7" height="2.9" transform="rotate(21 472.2 526.1)"/><rect x="650.5" y="625.4" width="5.9" height="2.9" transform="rotate(21 650.5 625.4)"/><rect x="527.8" y="569.6" width="4.2" height="2.6" transform="rotate(21 527.8 569.6)"/><rect x="526.6" y="581.1" width="5.5" height="2.9" transform="rotate(21 526.6 581.1)"/><rect x="732.9" y="651.4" width="5.7" height="2.7" transform="rotate(21 732.9 651.4)"/><rect x="520.4" y="573.3" width="4.7" height="3.2" transform="rotate(21 520.4 573.3)"/><rect x="589.5" y="609.2" width="5.2" height="3.5" transform="rotate(21 589.5 609.2)"/><rect x="459.8" y="527.1" width="3.9" height="2.3" transform="rotate(21 459.8 527.1)"/><rect x="726.3" y="638.6" width="4.9" height="3.3" transform="rotate(21 726.3 638.6)"/><rect x="506.7" y="531.5" width="7.8" height="2.9" transform="rotate(21 506.7 531.5)"/><rect x="577.8" y="559.4" width="3.1" height="3.2" transform="rotate(21 577.8 559.4)"/><rect x="705.9" y="627.1" width="6.0" height="2.1" transform="rotate(21 705.9 627.1)"/><rect x="734.3" y="637.7" width="4.1" height="2.1" transform="rotate(21 734.3 637.7)"/><rect x="549.8" y="592.1" width="3.3" height="3.1" transform="rotate(21 549.8 592.1)"/><rect x="687.8" y="601.6" width="7.8" height="3.2" transform="rotate(21 687.8 601.6)"/><rect x="454.6" y="511.6" width="6.3" height="2.3" transform="rotate(21 454.6 511.6)"/><rect x="466.0" y="528.9" width="5.2" height="2.4" transform="rotate(21 466.0 528.9)"/><rect x="612.0" y="621.6" width="6.8" height="3.3" transform="rotate(21 612.0 621.6)"/><rect x="662.8" y="620.3" width="6.4" height="2.5" transform="rotate(21 662.8 620.3)"/><rect x="641.1" y="631.8" width="5.7" height="3.2" transform="rotate(21 641.1 631.8)"/><rect x="485.0" y="558.7" width="5.3" height="3.1" transform="rotate(21 485.0 558.7)"/><rect x="601.9" y="588.8" width="5.4" height="2.4" transform="rotate(21 601.9 588.8)"/><rect x="673.2" y="604.3" width="3.9" height="2.1" transform="rotate(21 673.2 604.3)"/><rect x="709.1" y="624.9" width="4.5" height="3.2" transform="rotate(21 709.1 624.9)"/><rect x="511.6" y="576.1" width="7.0" height="3.5" transform="rotate(21 511.6 576.1)"/><rect x="476.6" y="519.5" width="7.7" height="3.0" transform="rotate(21 476.6 519.5)"/><rect x="679.6" y="597.0" width="4.1" height="3.3" transform="rotate(21 679.6 597.0)"/><rect x="680.5" y="612.9" width="3.3" height="3.3" transform="rotate(21 680.5 612.9)"/><rect x="549.8" y="595.2" width="6.2" height="2.2" transform="rotate(21 549.8 595.2)"/><rect x="440.2" y="506.1" width="6.2" height="2.4" transform="rotate(21 440.2 506.1)"/><rect x="451.3" y="549.8" width="3.4" height="2.4" transform="rotate(21 451.3 549.8)"/><rect x="570.6" y="589.2" width="5.7" height="2.8" transform="rotate(21 570.6 589.2)"/><rect x="714.9" y="657.2" width="5.0" height="3.3" transform="rotate(21 714.9 657.2)"/><rect x="514.9" y="578.4" width="4.4" height="2.7" transform="rotate(21 514.9 578.4)"/><rect x="532.0" y="589.3" width="5.3" height="2.8" transform="rotate(21 532.0 589.3)"/><rect x="661.9" y="616.4" width="4.3" height="2.4" transform="rotate(21 661.9 616.4)"/><rect x="621.4" y="616.2" width="3.5" height="3.4" transform="rotate(21 621.4 616.2)"/><rect x="537.8" y="592.7" width="6.9" height="3.5" transform="rotate(21 537.8 592.7)"/><rect x="668.4" y="601.8" width="6.0" height="3.4" transform="rotate(21 668.4 601.8)"/><rect x="722.9" y="656.1" width="7.8" height="3.1" transform="rotate(21 722.9 656.1)"/><rect x="608.5" y="600.5" width="5.8" height="2.9" transform="rotate(21 608.5 600.5)"/><rect x="679.5" y="625.4" width="3.3" height="3.1" transform="rotate(21 679.5 625.4)"/><rect x="709.7" y="619.5" width="5.1" height="2.3" transform="rotate(21 709.7 619.5)"/><rect x="485.8" y="564.9" width="4.7" height="2.9" transform="rotate(21 485.8 564.9)"/><rect x="708.1" y="608.9" width="7.5" height="2.2" transform="rotate(21 708.1 608.9)"/><rect x="532.6" y="566.6" width="6.6" height="3.5" transform="rotate(21 532.6 566.6)"/><rect x="625.4" y="602.5" width="5.9" height="3.0" transform="rotate(21 625.4 602.5)"/><rect x="482.9" y="540.3" width="6.6" height="2.3" transform="rotate(21 482.9 540.3)"/><rect x="648.9" y="623.5" width="5.1" height="3.3" transform="rotate(21 648.9 623.5)"/><rect x="461.1" y="522.6" width="7.7" height="2.4" transform="rotate(21 461.1 522.6)"/><rect x="723.9" y="644.5" width="6.2" height="3.2" transform="rotate(21 723.9 644.5)"/><rect x="626.5" y="623.3" width="8.0" height="3.3" transform="rotate(21 626.5 623.3)"/><rect x="673.7" y="598.0" width="7.5" height="3.2" transform="rotate(21 673.7 598.0)"/><rect x="429.8" y="528.6" width="7.1" height="2.9" transform="rotate(21 429.8 528.6)"/><rect x="665.9" y="597.7" width="3.5" height="2.7" transform="rotate(21 665.9 597.7)"/><rect x="435.3" y="511.9" width="3.9" height="2.2" transform="rotate(21 435.3 511.9)"/><rect x="433.0" y="524.4" width="3.1" height="3.5" transform="rotate(21 433.0 524.4)"/><rect x="721.8" y="616.1" width="4.2" height="3.2" transform="rotate(21 721.8 616.1)"/><rect x="503.9" y="566.9" width="6.4" height="3.0" transform="rotate(21 503.9 566.9)"/><rect x="619.3" y="600.0" width="5.8" height="2.0" transform="rotate(21 619.3 600.0)"/><rect x="666.3" y="599.0" width="3.8" height="2.2" transform="rotate(21 666.3 599.0)"/><rect x="655.3" y="632.1" width="5.4" height="2.8" transform="rotate(21 655.3 632.1)"/><rect x="667.6" y="629.8" width="6.6" height="3.1" transform="rotate(21 667.6 629.8)"/><rect x="557.2" y="600.2" width="4.1" height="2.6" transform="rotate(21 557.2 600.2)"/><rect x="543.3" y="586.2" width="3.6" height="3.3" transform="rotate(21 543.3 586.2)"/><rect x="630.8" y="608.2" width="3.8" height="2.2" transform="rotate(21 630.8 608.2)"/><rect x="492.5" y="542.4" width="6.2" height="3.5" transform="rotate(21 492.5 542.4)"/><rect x="495.6" y="542.5" width="4.1" height="3.3" transform="rotate(21 495.6 542.5)"/><rect x="429.8" y="540.3" width="7.3" height="2.6" transform="rotate(21 429.8 540.3)"/><rect x="691.9" y="632.7" width="4.8" height="2.8" transform="rotate(21 691.9 632.7)"/><rect x="534.8" y="554.4" width="3.9" height="2.4" transform="rotate(21 534.8 554.4)"/><rect x="570.5" y="567.2" width="4.7" height="2.3" transform="rotate(21 570.5 567.2)"/><rect x="488.6" y="565.8" width="6.4" height="2.8" transform="rotate(21 488.6 565.8)"/><rect x="699.9" y="629.1" width="6.0" height="3.4" transform="rotate(21 699.9 629.1)"/><rect x="459.5" y="558.8" width="5.9" height="3.2" transform="rotate(21 459.5 558.8)"/><rect x="460.1" y="546.6" width="7.6" height="2.4" transform="rotate(21 460.1 546.6)"/><rect x="650.5" y="634.3" width="6.1" height="3.4" transform="rotate(21 650.5 634.3)"/><rect x="440.9" y="538.4" width="3.3" height="2.7" transform="rotate(21 440.9 538.4)"/><rect x="429.7" y="528.7" width="7.6" height="2.7" transform="rotate(21 429.7 528.7)"/><rect x="723.2" y="622.0" width="3.9" height="3.5" transform="rotate(21 723.2 622.0)"/><rect x="551.7" y="564.3" width="7.7" height="2.2" transform="rotate(21 551.7 564.3)"/><rect x="738.4" y="628.8" width="5.6" height="2.9" transform="rotate(21 738.4 628.8)"/><rect x="690.6" y="632.3" width="6.3" height="3.1" transform="rotate(21 690.6 632.3)"/><rect x="435.1" y="511.6" width="4.9" height="2.4" transform="rotate(21 435.1 511.6)"/><rect x="467.7" y="564.3" width="5.3" height="3.0" transform="rotate(21 467.7 564.3)"/><rect x="541.7" y="593.3" width="5.3" height="2.7" transform="rotate(21 541.7 593.3)"/><rect x="726.5" y="629.3" width="4.3" height="2.8" transform="rotate(21 726.5 629.3)"/><rect x="702.5" y="638.3" width="5.1" height="2.3" transform="rotate(21 702.5 638.3)"/><rect x="663.6" y="593.9" width="4.5" height="2.7" transform="rotate(21 663.6 593.9)"/><rect x="504.8" y="569.9" width="6.6" height="2.2" transform="rotate(21 504.8 569.9)"/><rect x="713.6" y="613.9" width="3.2" height="2.4" transform="rotate(21 713.6 613.9)"/><rect x="706.8" y="639.0" width="4.3" height="2.8" transform="rotate(21 706.8 639.0)"/><rect x="549.9" y="595.2" width="7.9" height="3.2" transform="rotate(21 549.9 595.2)"/><rect x="582.7" y="603.5" width="7.1" height="2.9" transform="rotate(21 582.7 603.5)"/><rect x="479.9" y="567.4" width="6.2" height="2.0" transform="rotate(21 479.9 567.4)"/><rect x="562.5" y="557.0" width="5.1" height="3.2" transform="rotate(21 562.5 557.0)"/><rect x="570.5" y="576.7" width="7.8" height="2.7" transform="rotate(21 570.5 576.7)"/><rect x="681.0" y="632.3" width="3.2" height="2.9" transform="rotate(21 681.0 632.3)"/><rect x="427.8" y="503.5" width="4.3" height="2.7" transform="rotate(21 427.8 503.5)"/><rect x="698.1" y="630.8" width="5.4" height="2.3" transform="rotate(21 698.1 630.8)"/><rect x="690.4" y="635.0" width="7.5" height="3.2" transform="rotate(21 690.4 635.0)"/><rect x="635.5" y="624.2" width="4.6" height="2.3" transform="rotate(21 635.5 624.2)"/><rect x="468.1" y="533.2" width="7.4" height="2.0" transform="rotate(21 468.1 533.2)"/><rect x="577.1" y="558.8" width="7.2" height="3.3" transform="rotate(21 577.1 558.8)"/><rect x="505.0" y="549.4" width="7.8" height="2.9" transform="rotate(21 505.0 549.4)"/><rect x="603.3" y="592.0" width="6.3" height="3.0" transform="rotate(21 603.3 592.0)"/><rect x="676.0" y="601.2" width="7.4" height="2.3" transform="rotate(21 676.0 601.2)"/><rect x="577.3" y="591.6" width="5.6" height="3.0" transform="rotate(21 577.3 591.6)"/><rect x="670.0" y="598.3" width="7.7" height="3.3" transform="rotate(21 670.0 598.3)"/><rect x="470.5" y="552.0" width="6.9" height="2.8" transform="rotate(21 470.5 552.0)"/><rect x="614.5" y="605.8" width="5.9" height="3.3" transform="rotate(21 614.5 605.8)"/><rect x="570.0" y="558.3" width="5.5" height="3.2" transform="rotate(21 570.0 558.3)"/><rect x="508.8" y="578.1" width="7.7" height="3.1" transform="rotate(21 508.8 578.1)"/><rect x="633.1" y="630.0" width="5.9" height="2.4" transform="rotate(21 633.1 630.0)"/><rect x="544.0" y="592.1" width="6.5" height="3.4" transform="rotate(21 544.0 592.1)"/><rect x="438.3" y="542.3" width="4.5" height="2.2" transform="rotate(21 438.3 542.3)"/><rect x="655.7" y="615.1" width="6.6" height="2.8" transform="rotate(21 655.7 615.1)"/><rect x="703.4" y="656.4" width="7.8" height="2.9" transform="rotate(21 703.4 656.4)"/><rect x="560.1" y="553.1" width="6.7" height="2.6" transform="rotate(21 560.1 553.1)"/><rect x="555.8" y="554.6" width="7.2" height="2.8" transform="rotate(21 555.8 554.6)"/><rect x="511.9" y="552.2" width="7.3" height="2.2" transform="rotate(21 511.9 552.2)"/><rect x="436.6" y="506.9" width="7.4" height="2.5" transform="rotate(21 436.6 506.9)"/><rect x="525.7" y="547.0" width="7.0" height="2.8" transform="rotate(21 525.7 547.0)"/><rect x="580.0" y="607.7" width="7.7" height="3.2" transform="rotate(21 580.0 607.7)"/><rect x="671.6" y="638.9" width="3.1" height="2.5" transform="rotate(21 671.6 638.9)"/><rect x="558.9" y="551.0" width="7.0" height="3.0" transform="rotate(21 558.9 551.0)"/><rect x="675.5" y="611.9" width="3.1" height="3.3" transform="rotate(21 675.5 611.9)"/><rect x="699.7" y="640.6" width="5.8" height="2.5" transform="rotate(21 699.7 640.6)"/><rect x="730.6" y="656.6" width="5.0" height="2.6" transform="rotate(21 730.6 656.6)"/><rect x="542.1" y="547.6" width="6.8" height="2.7" transform="rotate(21 542.1 547.6)"/><rect x="532.0" y="553.3" width="3.4" height="2.4" transform="rotate(21 532.0 553.3)"/><rect x="497.5" y="561.6" width="5.9" height="3.0" transform="rotate(21 497.5 561.6)"/><rect x="533.4" y="571.9" width="7.2" height="3.0" transform="rotate(21 533.4 571.9)"/><rect x="453.9" y="519.8" width="6.1" height="3.4" transform="rotate(21 453.9 519.8)"/><rect x="685.1" y="614.3" width="3.6" height="3.4" transform="rotate(21 685.1 614.3)"/><rect x="667.6" y="606.3" width="5.4" height="2.1" transform="rotate(21 667.6 606.3)"/><rect x="680.2" y="613.1" width="4.9" height="2.3" transform="rotate(21 680.2 613.1)"/><rect x="441.3" y="543.2" width="5.5" height="2.6" transform="rotate(21 441.3 543.2)"/><rect x="624.9" y="626.5" width="6.0" height="3.3" transform="rotate(21 624.9 626.5)"/><rect x="446.5" y="519.0" width="4.6" height="2.6" transform="rotate(21 446.5 519.0)"/><rect x="461.6" y="545.7" width="7.4" height="2.4" transform="rotate(21 461.6 545.7)"/><rect x="444.8" y="534.8" width="4.2" height="2.9" transform="rotate(21 444.8 534.8)"/><rect x="438.0" y="531.4" width="7.8" height="3.4" transform="rotate(21 438.0 531.4)"/><rect x="585.9" y="573.4" width="6.2" height="2.8" transform="rotate(21 585.9 573.4)"/><rect x="499.9" y="532.7" width="6.9" height="2.6" transform="rotate(21 499.9 532.7)"/><rect x="507.4" y="541.4" width="4.9" height="2.1" transform="rotate(21 507.4 541.4)"/><rect x="667.4" y="621.3" width="6.4" height="3.4" transform="rotate(21 667.4 621.3)"/><rect x="494.1" y="568.1" width="4.1" height="2.4" transform="rotate(21 494.1 568.1)"/><rect x="509.8" y="576.5" width="5.7" height="2.8" transform="rotate(21 509.8 576.5)"/><rect x="711.6" y="626.9" width="5.9" height="2.5" transform="rotate(21 711.6 626.9)"/><rect x="461.0" y="561.1" width="7.9" height="3.3" transform="rotate(21 461.0 561.1)"/><rect x="671.9" y="638.9" width="7.2" height="2.7" transform="rotate(21 671.9 638.9)"/><rect x="590.5" y="578.1" width="7.2" height="2.4" transform="rotate(21 590.5 578.1)"/><rect x="494.2" y="527.3" width="6.8" height="2.5" transform="rotate(21 494.2 527.3)"/><rect x="733.6" y="625.0" width="6.3" height="3.3" transform="rotate(21 733.6 625.0)"/><rect x="714.0" y="625.2" width="4.6" height="3.3" transform="rotate(21 714.0 625.2)"/><rect x="468.0" y="548.8" width="6.6" height="2.6" transform="rotate(21 468.0 548.8)"/><rect x="551.7" y="585.7" width="6.5" height="2.3" transform="rotate(21 551.7 585.7)"/><rect x="561.5" y="602.6" width="3.9" height="2.1" transform="rotate(21 561.5 602.6)"/><rect x="622.0" y="608.0" width="5.3" height="3.4" transform="rotate(21 622.0 608.0)"/><rect x="599.0" y="573.2" width="4.1" height="2.1" transform="rotate(21 599.0 573.2)"/><rect x="438.4" y="554.3" width="7.6" height="3.3" transform="rotate(21 438.4 554.3)"/><rect x="510.2" y="582.1" width="7.8" height="2.5" transform="rotate(21 510.2 582.1)"/><rect x="520.5" y="575.8" width="3.1" height="3.4" transform="rotate(21 520.5 575.8)"/><rect x="697.1" y="641.3" width="3.6" height="2.4" transform="rotate(21 697.1 641.3)"/><rect x="663.9" y="596.8" width="3.9" height="3.0" transform="rotate(21 663.9 596.8)"/><rect x="600.3" y="579.6" width="5.0" height="2.9" transform="rotate(21 600.3 579.6)"/><rect x="522.7" y="548.6" width="7.3" height="2.4" transform="rotate(21 522.7 548.6)"/><rect x="602.9" y="603.8" width="6.3" height="3.0" transform="rotate(21 602.9 603.8)"/><rect x="691.8" y="609.5" width="4.4" height="3.4" transform="rotate(21 691.8 609.5)"/><rect x="599.6" y="601.5" width="5.5" height="3.1" transform="rotate(21 599.6 601.5)"/><rect x="606.1" y="589.8" width="7.9" height="2.7" transform="rotate(21 606.1 589.8)"/><rect x="464.1" y="523.7" width="4.7" height="3.3" transform="rotate(21 464.1 523.7)"/><rect x="652.6" y="622.7" width="7.6" height="2.1" transform="rotate(21 652.6 622.7)"/><rect x="641.3" y="588.8" width="4.6" height="3.0" transform="rotate(21 641.3 588.8)"/><rect x="626.1" y="590.1" width="3.3" height="3.1" transform="rotate(21 626.1 590.1)"/><rect x="651.7" y="620.7" width="3.2" height="2.4" transform="rotate(21 651.7 620.7)"/><rect x="416.8" y="541.1" width="5.9" height="2.8" transform="rotate(21 416.8 541.1)"/><rect x="713.9" y="660.0" width="4.2" height="3.2" transform="rotate(21 713.9 660.0)"/><rect x="640.3" y="583.8" width="6.3" height="2.5" transform="rotate(21 640.3 583.8)"/><rect x="565.8" y="587.2" width="3.7" height="2.2" transform="rotate(21 565.8 587.2)"/><rect x="613.3" y="612.9" width="6.2" height="2.5" transform="rotate(21 613.3 612.9)"/><rect x="711.9" y="622.2" width="7.9" height="2.4" transform="rotate(21 711.9 622.2)"/><rect x="714.1" y="629.4" width="7.7" height="3.2" transform="rotate(21 714.1 629.4)"/><rect x="605.5" y="609.9" width="3.1" height="2.5" transform="rotate(21 605.5 609.9)"/><rect x="665.1" y="614.7" width="3.2" height="2.8" transform="rotate(21 665.1 614.7)"/><rect x="541.6" y="551.9" width="7.9" height="2.8" transform="rotate(21 541.6 551.9)"/><rect x="738.1" y="627.0" width="7.1" height="3.3" transform="rotate(21 738.1 627.0)"/><rect x="698.5" y="650.7" width="7.2" height="2.7" transform="rotate(21 698.5 650.7)"/><rect x="547.4" y="567.8" width="5.8" height="3.5" transform="rotate(21 547.4 567.8)"/><rect x="478.0" y="555.9" width="7.7" height="3.3" transform="rotate(21 478.0 555.9)"/><rect x="492.1" y="534.5" width="5.4" height="2.3" transform="rotate(21 492.1 534.5)"/><rect x="572.8" y="593.1" width="3.5" height="2.1" transform="rotate(21 572.8 593.1)"/><rect x="557.0" y="591.2" width="3.9" height="2.7" transform="rotate(21 557.0 591.2)"/><rect x="516.5" y="585.3" width="3.4" height="3.0" transform="rotate(21 516.5 585.3)"/><rect x="509.0" y="558.7" width="4.8" height="2.5" transform="rotate(21 509.0 558.7)"/><rect x="502.2" y="579.9" width="7.1" height="2.3" transform="rotate(21 502.2 579.9)"/><rect x="705.6" y="654.1" width="6.3" height="2.4" transform="rotate(21 705.6 654.1)"/><rect x="445.5" y="525.6" width="7.1" height="2.5" transform="rotate(21 445.5 525.6)"/><rect x="674.3" y="621.9" width="7.4" height="2.1" transform="rotate(21 674.3 621.9)"/><rect x="547.7" y="566.7" width="5.7" height="2.8" transform="rotate(21 547.7 566.7)"/><rect x="585.8" y="609.7" width="6.6" height="3.2" transform="rotate(21 585.8 609.7)"/><rect x="743.2" y="623.3" width="6.3" height="3.1" transform="rotate(21 743.2 623.3)"/><rect x="725.4" y="659.9" width="6.4" height="3.0" transform="rotate(21 725.4 659.9)"/><rect x="619.5" y="609.3" width="7.0" height="2.6" transform="rotate(21 619.5 609.3)"/><rect x="488.3" y="549.4" width="4.2" height="3.4" transform="rotate(21 488.3 549.4)"/><rect x="427.6" y="503.5" width="4.3" height="2.8" transform="rotate(21 427.6 503.5)"/><rect x="416.7" y="543.2" width="3.0" height="3.4" transform="rotate(21 416.7 543.2)"/><rect x="481.5" y="538.7" width="7.5" height="3.4" transform="rotate(21 481.5 538.7)"/><rect x="450.0" y="532.4" width="3.9" height="2.6" transform="rotate(21 450.0 532.4)"/><rect x="575.3" y="560.8" width="3.3" height="3.4" transform="rotate(21 575.3 560.8)"/><rect x="455.3" y="511.2" width="6.8" height="2.6" transform="rotate(21 455.3 511.2)"/><rect x="620.5" y="583.8" width="5.1" height="2.1" transform="rotate(21 620.5 583.8)"/><rect x="557.0" y="583.4" width="7.6" height="2.5" transform="rotate(21 557.0 583.4)"/><rect x="659.8" y="613.4" width="3.2" height="2.6" transform="rotate(21 659.8 613.4)"/><rect x="422.5" y="521.9" width="3.2" height="3.4" transform="rotate(21 422.5 521.9)"/><rect x="688.5" y="626.7" width="7.5" height="2.1" transform="rotate(21 688.5 626.7)"/><rect x="508.8" y="532.2" width="4.2" height="2.4" transform="rotate(21 508.8 532.2)"/><rect x="699.4" y="606.8" width="7.3" height="2.5" transform="rotate(21 699.4 606.8)"/><rect x="599.3" y="576.6" width="3.8" height="2.0" transform="rotate(21 599.3 576.6)"/><rect x="443.6" y="532.6" width="5.4" height="2.9" transform="rotate(21 443.6 532.6)"/><rect x="533.1" y="546.0" width="3.1" height="2.6" transform="rotate(21 533.1 546.0)"/><rect x="653.3" y="627.2" width="6.4" height="3.3" transform="rotate(21 653.3 627.2)"/><rect x="632.0" y="603.1" width="7.5" height="2.6" transform="rotate(21 632.0 603.1)"/><rect x="416.1" y="534.9" width="7.7" height="2.7" transform="rotate(21 416.1 534.9)"/><rect x="600.7" y="572.8" width="6.2" height="2.5" transform="rotate(21 600.7 572.8)"/><rect x="442.7" y="548.8" width="7.4" height="2.8" transform="rotate(21 442.7 548.8)"/><rect x="467.5" y="525.9" width="6.7" height="2.7" transform="rotate(21 467.5 525.9)"/><rect x="460.8" y="528.0" width="6.1" height="3.4" transform="rotate(21 460.8 528.0)"/><rect x="428.3" y="544.6" width="3.7" height="2.3" transform="rotate(21 428.3 544.6)"/><rect x="684.7" y="609.1" width="4.1" height="2.4" transform="rotate(21 684.7 609.1)"/><rect x="656.0" y="603.9" width="4.2" height="2.6" transform="rotate(21 656.0 603.9)"/><rect x="651.6" y="620.3" width="4.0" height="2.4" transform="rotate(21 651.6 620.3)"/><rect x="661.1" y="599.0" width="8.0" height="2.3" transform="rotate(21 661.1 599.0)"/><rect x="463.8" y="525.3" width="3.8" height="3.3" transform="rotate(21 463.8 525.3)"/><rect x="620.5" y="602.1" width="6.1" height="2.3" transform="rotate(21 620.5 602.1)"/><rect x="537.6" y="579.9" width="7.4" height="3.4" transform="rotate(21 537.6 579.9)"/><rect x="647.5" y="634.1" width="4.5" height="3.0" transform="rotate(21 647.5 634.1)"/><rect x="656.8" y="606.1" width="6.4" height="2.8" transform="rotate(21 656.8 606.1)"/><rect x="659.4" y="624.7" width="4.2" height="2.8" transform="rotate(21 659.4 624.7)"/><rect x="566.1" y="574.5" width="7.5" height="2.8" transform="rotate(21 566.1 574.5)"/><rect x="697.6" y="638.6" width="4.1" height="2.6" transform="rotate(21 697.6 638.6)"/><rect x="559.5" y="580.8" width="6.3" height="3.3" transform="rotate(21 559.5 580.8)"/><rect x="538.2" y="587.9" width="8.0" height="2.6" transform="rotate(21 538.2 587.9)"/><rect x="533.8" y="554.4" width="4.2" height="3.3" transform="rotate(21 533.8 554.4)"/><rect x="694.8" y="632.4" width="4.7" height="2.4" transform="rotate(21 694.8 632.4)"/><rect x="517.3" y="563.1" width="3.7" height="3.5" transform="rotate(21 517.3 563.1)"/><rect x="518.3" y="556.3" width="5.8" height="2.9" transform="rotate(21 518.3 556.3)"/><rect x="463.6" y="519.7" width="7.2" height="3.5" transform="rotate(21 463.6 519.7)"/><rect x="584.5" y="564.1" width="7.9" height="2.3" transform="rotate(21 584.5 564.1)"/><rect x="674.5" y="626.8" width="5.7" height="3.0" transform="rotate(21 674.5 626.8)"/><rect x="714.4" y="652.8" width="5.1" height="2.1" transform="rotate(21 714.4 652.8)"/><rect x="600.8" y="594.5" width="5.7" height="3.5" transform="rotate(21 600.8 594.5)"/><rect x="643.8" y="592.3" width="5.3" height="3.4" transform="rotate(21 643.8 592.3)"/><rect x="710.1" y="640.4" width="4.5" height="3.1" transform="rotate(21 710.1 640.4)"/><rect x="730.4" y="656.9" width="6.4" height="3.5" transform="rotate(21 730.4 656.9)"/><rect x="508.3" y="573.6" width="8.0" height="3.2" transform="rotate(21 508.3 573.6)"/><rect x="669.0" y="603.9" width="6.1" height="2.0" transform="rotate(21 669.0 603.9)"/><rect x="571.6" y="561.6" width="3.4" height="2.7" transform="rotate(21 571.6 561.6)"/><rect x="698.7" y="625.1" width="4.8" height="3.1" transform="rotate(21 698.7 625.1)"/><rect x="490.4" y="564.0" width="7.5" height="3.0" transform="rotate(21 490.4 564.0)"/><rect x="652.7" y="617.4" width="4.1" height="3.2" transform="rotate(21 652.7 617.4)"/><rect x="482.0" y="568.5" width="3.7" height="2.3" transform="rotate(21 482.0 568.5)"/><rect x="691.8" y="649.1" width="3.1" height="3.5" transform="rotate(21 691.8 649.1)"/><rect x="700.1" y="626.5" width="4.1" height="2.6" transform="rotate(21 700.1 626.5)"/><rect x="540.1" y="570.7" width="4.6" height="3.5" transform="rotate(21 540.1 570.7)"/><rect x="732.0" y="623.2" width="5.6" height="2.0" transform="rotate(21 732.0 623.2)"/><rect x="731.2" y="652.9" width="5.8" height="2.3" transform="rotate(21 731.2 652.9)"/><rect x="691.8" y="621.4" width="6.9" height="2.7" transform="rotate(21 691.8 621.4)"/><rect x="461.6" y="518.6" width="5.1" height="3.5" transform="rotate(21 461.6 518.6)"/><rect x="554.1" y="576.4" width="5.7" height="3.4" transform="rotate(21 554.1 576.4)"/><rect x="633.4" y="586.9" width="7.0" height="3.3" transform="rotate(21 633.4 586.9)"/><rect x="582.4" y="586.8" width="3.2" height="2.6" transform="rotate(21 582.4 586.8)"/><rect x="627.2" y="609.8" width="5.8" height="2.0" transform="rotate(21 627.2 609.8)"/><rect x="498.2" y="564.4" width="4.2" height="2.3" transform="rotate(21 498.2 564.4)"/><rect x="473.5" y="562.3" width="5.6" height="3.3" transform="rotate(21 473.5 562.3)"/><rect x="521.5" y="577.8" width="5.3" height="2.3" transform="rotate(21 521.5 577.8)"/><rect x="615.2" y="585.7" width="7.3" height="2.2" transform="rotate(21 615.2 585.7)"/><rect x="544.1" y="582.4" width="4.3" height="2.2" transform="rotate(21 544.1 582.4)"/><rect x="506.3" y="560.3" width="6.7" height="3.2" transform="rotate(21 506.3 560.3)"/><rect x="461.4" y="523.2" width="7.8" height="2.7" transform="rotate(21 461.4 523.2)"/><rect x="577.1" y="608.6" width="5.7" height="3.1" transform="rotate(21 577.1 608.6)"/><rect x="603.6" y="600.7" width="5.2" height="2.2" transform="rotate(21 603.6 600.7)"/><rect x="503.8" y="564.5" width="6.2" height="3.0" transform="rotate(21 503.8 564.5)"/><rect x="537.2" y="549.0" width="7.9" height="3.0" transform="rotate(21 537.2 549.0)"/><rect x="573.4" y="560.9" width="4.7" height="2.0" transform="rotate(21 573.4 560.9)"/><rect x="618.1" y="605.9" width="4.9" height="2.6" transform="rotate(21 618.1 605.9)"/><rect x="574.0" y="582.4" width="6.5" height="3.2" transform="rotate(21 574.0 582.4)"/><rect x="552.7" y="576.1" width="3.3" height="2.1" transform="rotate(21 552.7 576.1)"/><rect x="622.2" y="622.4" width="6.4" height="3.0" transform="rotate(21 622.2 622.4)"/><rect x="731.2" y="647.6" width="6.4" height="2.0" transform="rotate(21 731.2 647.6)"/><rect x="451.5" y="558.7" width="5.7" height="2.6" transform="rotate(21 451.5 558.7)"/><rect x="657.9" y="609.1" width="3.6" height="3.4" transform="rotate(21 657.9 609.1)"/><rect x="704.6" y="657.0" width="4.3" height="3.2" transform="rotate(21 704.6 657.0)"/><rect x="491.2" y="568.1" width="3.1" height="3.3" transform="rotate(21 491.2 568.1)"/><rect x="632.9" y="602.4" width="4.7" height="3.4" transform="rotate(21 632.9 602.4)"/><rect x="541.7" y="580.4" width="6.7" height="2.6" transform="rotate(21 541.7 580.4)"/><rect x="660.5" y="596.4" width="7.1" height="3.3" transform="rotate(21 660.5 596.4)"/><rect x="547.4" y="579.7" width="4.3" height="2.6" transform="rotate(21 547.4 579.7)"/><rect x="632.8" y="625.4" width="3.8" height="2.7" transform="rotate(21 632.8 625.4)"/><rect x="620.1" y="603.9" width="7.2" height="2.4" transform="rotate(21 620.1 603.9)"/><rect x="590.7" y="596.6" width="5.7" height="2.5" transform="rotate(21 590.7 596.6)"/><rect x="665.8" y="616.5" width="5.5" height="2.7" transform="rotate(21 665.8 616.5)"/><rect x="421.1" y="536.7" width="4.3" height="2.7" transform="rotate(21 421.1 536.7)"/><rect x="602.4" y="575.6" width="7.5" height="2.2" transform="rotate(21 602.4 575.6)"/><rect x="647.4" y="627.6" width="4.5" height="3.5" transform="rotate(21 647.4 627.6)"/><rect x="492.4" y="534.8" width="4.4" height="2.2" transform="rotate(21 492.4 534.8)"/><rect x="540.8" y="562.4" width="5.9" height="2.5" transform="rotate(21 540.8 562.4)"/><rect x="540.2" y="583.9" width="5.5" height="3.3" transform="rotate(21 540.2 583.9)"/><rect x="446.5" y="546.6" width="7.7" height="2.3" transform="rotate(21 446.5 546.6)"/><rect x="644.2" y="592.8" width="6.3" height="3.4" transform="rotate(21 644.2 592.8)"/><rect x="668.8" y="598.2" width="3.4" height="2.5" transform="rotate(21 668.8 598.2)"/><rect x="425.1" y="521.8" width="7.5" height="2.1" transform="rotate(21 425.1 521.8)"/><rect x="565.7" y="592.3" width="7.3" height="2.8" transform="rotate(21 565.7 592.3)"/><rect x="445.2" y="540.8" width="5.8" height="2.5" transform="rotate(21 445.2 540.8)"/><rect x="447.9" y="517.0" width="5.6" height="2.3" transform="rotate(21 447.9 517.0)"/><rect x="594.9" y="597.1" width="4.8" height="2.2" transform="rotate(21 594.9 597.1)"/><rect x="627.8" y="588.4" width="6.9" height="2.5" transform="rotate(21 627.8 588.4)"/><rect x="633.3" y="619.4" width="4.1" height="3.2" transform="rotate(21 633.3 619.4)"/><rect x="730.2" y="629.2" width="6.4" height="2.8" transform="rotate(21 730.2 629.2)"/><rect x="645.7" y="615.6" width="7.5" height="2.8" transform="rotate(21 645.7 615.6)"/><rect x="566.7" y="556.1" width="4.5" height="3.0" transform="rotate(21 566.7 556.1)"/><rect x="531.0" y="559.3" width="3.2" height="2.9" transform="rotate(21 531.0 559.3)"/><rect x="532.4" y="546.8" width="6.1" height="2.8" transform="rotate(21 532.4 546.8)"/><rect x="457.8" y="557.9" width="3.8" height="3.4" transform="rotate(21 457.8 557.9)"/><rect x="675.0" y="644.2" width="3.6" height="3.3" transform="rotate(21 675.0 644.2)"/><rect x="469.5" y="551.9" width="6.9" height="2.4" transform="rotate(21 469.5 551.9)"/><rect x="481.1" y="544.9" width="4.6" height="3.3" transform="rotate(21 481.1 544.9)"/><rect x="507.7" y="537.4" width="4.9" height="2.7" transform="rotate(21 507.7 537.4)"/><rect x="481.8" y="545.6" width="5.3" height="2.9" transform="rotate(21 481.8 545.6)"/><rect x="654.0" y="637.1" width="7.5" height="2.2" transform="rotate(21 654.0 637.1)"/><rect x="495.2" y="573.9" width="6.8" height="2.6" transform="rotate(21 495.2 573.9)"/><rect x="531.0" y="545.8" width="6.0" height="3.3" transform="rotate(21 531.0 545.8)"/><rect x="589.9" y="613.6" width="5.0" height="3.3" transform="rotate(21 589.9 613.6)"/><rect x="479.1" y="536.8" width="4.9" height="3.1" transform="rotate(21 479.1 536.8)"/><rect x="681.1" y="604.4" width="7.6" height="2.3" transform="rotate(21 681.1 604.4)"/><rect x="576.0" y="569.1" width="7.4" height="2.3" transform="rotate(21 576.0 569.1)"/><rect x="600.9" y="570.3" width="4.0" height="3.1" transform="rotate(21 600.9 570.3)"/><rect x="607.1" y="580.9" width="7.9" height="2.3" transform="rotate(21 607.1 580.9)"/><rect x="626.4" y="600.0" width="6.6" height="3.2" transform="rotate(21 626.4 600.0)"/><rect x="516.7" y="537.1" width="7.6" height="2.0" transform="rotate(21 516.7 537.1)"/><rect x="506.2" y="570.7" width="6.0" height="3.2" transform="rotate(21 506.2 570.7)"/><rect x="427.3" y="520.0" width="4.0" height="2.8" transform="rotate(21 427.3 520.0)"/><rect x="644.1" y="600.5" width="3.7" height="3.0" transform="rotate(21 644.1 600.5)"/><rect x="674.3" y="605.5" width="3.9" height="2.1" transform="rotate(21 674.3 605.5)"/><rect x="627.5" y="622.1" width="7.8" height="3.0" transform="rotate(21 627.5 622.1)"/><rect x="438.9" y="540.4" width="4.6" height="2.9" transform="rotate(21 438.9 540.4)"/><rect x="500.7" y="548.3" width="4.5" height="2.9" transform="rotate(21 500.7 548.3)"/><rect x="676.1" y="609.7" width="5.0" height="2.1" transform="rotate(21 676.1 609.7)"/><rect x="616.9" y="596.8" width="6.9" height="2.4" transform="rotate(21 616.9 596.8)"/><rect x="525.5" y="587.2" width="5.1" height="2.5" transform="rotate(21 525.5 587.2)"/><rect x="613.0" y="582.2" width="4.3" height="2.3" transform="rotate(21 613.0 582.2)"/><rect x="557.3" y="564.1" width="4.9" height="2.9" transform="rotate(21 557.3 564.1)"/><rect x="480.2" y="547.5" width="5.7" height="2.4" transform="rotate(21 480.2 547.5)"/><rect x="579.2" y="596.7" width="6.2" height="3.2" transform="rotate(21 579.2 596.7)"/><rect x="611.9" y="616.4" width="3.7" height="3.2" transform="rotate(21 611.9 616.4)"/><rect x="618.2" y="613.0" width="3.2" height="2.4" transform="rotate(21 618.2 613.0)"/><rect x="430.3" y="528.1" width="3.5" height="2.4" transform="rotate(21 430.3 528.1)"/><rect x="633.7" y="615.2" width="4.3" height="3.0" transform="rotate(21 633.7 615.2)"/><rect x="547.0" y="585.5" width="6.4" height="3.2" transform="rotate(21 547.0 585.5)"/><rect x="496.5" y="551.2" width="4.7" height="2.9" transform="rotate(21 496.5 551.2)"/><rect x="428.6" y="531.2" width="7.9" height="3.0" transform="rotate(21 428.6 531.2)"/><rect x="693.5" y="614.3" width="7.7" height="2.1" transform="rotate(21 693.5 614.3)"/><rect x="497.7" y="550.4" width="3.4" height="3.0" transform="rotate(21 497.7 550.4)"/><rect x="592.3" y="567.7" width="4.3" height="2.3" transform="rotate(21 592.3 567.7)"/><rect x="539.4" y="543.6" width="4.0" height="3.0" transform="rotate(21 539.4 543.6)"/><rect x="726.4" y="649.1" width="3.3" height="3.3" transform="rotate(21 726.4 649.1)"/><rect x="624.3" y="589.9" width="5.4" height="2.2" transform="rotate(21 624.3 589.9)"/><rect x="552.6" y="595.0" width="7.6" height="3.4" transform="rotate(21 552.6 595.0)"/><rect x="709.3" y="649.0" width="3.5" height="3.2" transform="rotate(21 709.3 649.0)"/><rect x="505.8" y="545.6" width="3.1" height="2.2" transform="rotate(21 505.8 545.6)"/><rect x="480.8" y="560.2" width="4.6" height="3.4" transform="rotate(21 480.8 560.2)"/><rect x="683.9" y="630.0" width="5.9" height="2.9" transform="rotate(21 683.9 630.0)"/><rect x="726.6" y="646.7" width="7.2" height="3.3" transform="rotate(21 726.6 646.7)"/><rect x="685.9" y="617.5" width="3.7" height="3.5" transform="rotate(21 685.9 617.5)"/><rect x="495.2" y="544.8" width="3.2" height="3.2" transform="rotate(21 495.2 544.8)"/><rect x="732.9" y="644.4" width="5.3" height="3.5" transform="rotate(21 732.9 644.4)"/><rect x="667.7" y="615.1" width="5.1" height="2.9" transform="rotate(21 667.7 615.1)"/><rect x="656.8" y="597.7" width="7.2" height="2.8" transform="rotate(21 656.8 597.7)"/><rect x="511.4" y="548.0" width="7.4" height="2.3" transform="rotate(21 511.4 548.0)"/><rect x="648.2" y="585.8" width="6.3" height="3.3" transform="rotate(21 648.2 585.8)"/><rect x="578.2" y="609.1" width="4.9" height="2.6" transform="rotate(21 578.2 609.1)"/><rect x="463.9" y="518.9" width="5.2" height="3.0" transform="rotate(21 463.9 518.9)"/><rect x="693.1" y="619.2" width="6.2" height="2.7" transform="rotate(21 693.1 619.2)"/><rect x="696.4" y="618.7" width="7.9" height="2.4" transform="rotate(21 696.4 618.7)"/><rect x="494.7" y="546.5" width="3.0" height="2.3" transform="rotate(21 494.7 546.5)"/><rect x="586.6" y="577.4" width="4.6" height="2.3" transform="rotate(21 586.6 577.4)"/><rect x="669.8" y="614.1" width="4.8" height="3.0" transform="rotate(21 669.8 614.1)"/><rect x="456.1" y="511.9" width="6.8" height="3.0" transform="rotate(21 456.1 511.9)"/><rect x="579.8" y="609.7" width="6.5" height="2.8" transform="rotate(21 579.8 609.7)"/><rect x="506.4" y="539.2" width="5.5" height="3.0" transform="rotate(21 506.4 539.2)"/><rect x="571.5" y="598.5" width="7.5" height="2.1" transform="rotate(21 571.5 598.5)"/><rect x="641.2" y="610.6" width="3.2" height="2.0" transform="rotate(21 641.2 610.6)"/><rect x="652.9" y="595.7" width="5.4" height="3.4" transform="rotate(21 652.9 595.7)"/><rect x="482.1" y="538.3" width="7.4" height="3.4" transform="rotate(21 482.1 538.3)"/><rect x="520.0" y="544.3" width="7.0" height="3.0" transform="rotate(21 520.0 544.3)"/><rect x="614.8" y="590.6" width="6.5" height="2.3" transform="rotate(21 614.8 590.6)"/><rect x="504.9" y="578.4" width="4.1" height="2.8" transform="rotate(21 504.9 578.4)"/><rect x="517.9" y="576.8" width="6.7" height="3.3" transform="rotate(21 517.9 576.8)"/><rect x="593.0" y="588.5" width="4.8" height="2.8" transform="rotate(21 593.0 588.5)"/><rect x="535.6" y="567.1" width="5.2" height="3.0" transform="rotate(21 535.6 567.1)"/><rect x="555.0" y="594.6" width="4.9" height="2.9" transform="rotate(21 555.0 594.6)"/><rect x="528.8" y="548.2" width="5.6" height="2.7" transform="rotate(21 528.8 548.2)"/><rect x="525.0" y="580.6" width="6.3" height="2.9" transform="rotate(21 525.0 580.6)"/><rect x="716.3" y="637.6" width="5.7" height="2.5" transform="rotate(21 716.3 637.6)"/><rect x="492.2" y="558.5" width="4.3" height="2.7" transform="rotate(21 492.2 558.5)"/><rect x="717.2" y="617.2" width="4.1" height="3.0" transform="rotate(21 717.2 617.2)"/><rect x="646.4" y="618.4" width="7.2" height="3.5" transform="rotate(21 646.4 618.4)"/><rect x="547.9" y="547.5" width="5.1" height="2.0" transform="rotate(21 547.9 547.5)"/><rect x="643.5" y="592.1" width="5.9" height="2.7" transform="rotate(21 643.5 592.1)"/><rect x="674.3" y="618.8" width="7.4" height="2.6" transform="rotate(21 674.3 618.8)"/><rect x="476.1" y="542.6" width="4.5" height="2.9" transform="rotate(21 476.1 542.6)"/><rect x="496.5" y="547.5" width="6.3" height="3.3" transform="rotate(21 496.5 547.5)"/><rect x="568.6" y="599.5" width="6.6" height="2.9" transform="rotate(21 568.6 599.5)"/><rect x="429.4" y="502.8" width="5.6" height="2.6" transform="rotate(21 429.4 502.8)"/><rect x="462.7" y="557.3" width="5.0" height="3.2" transform="rotate(21 462.7 557.3)"/><rect x="473.3" y="544.6" width="7.8" height="2.3" transform="rotate(21 473.3 544.6)"/><rect x="429.8" y="544.9" width="3.0" height="2.9" transform="rotate(21 429.8 544.9)"/><rect x="712.1" y="635.9" width="4.4" height="2.8" transform="rotate(21 712.1 635.9)"/><rect x="527.5" y="558.4" width="3.3" height="3.3" transform="rotate(21 527.5 558.4)"/><rect x="713.6" y="655.5" width="6.3" height="2.7" transform="rotate(21 713.6 655.5)"/><rect x="707.5" y="641.0" width="5.2" height="3.4" transform="rotate(21 707.5 641.0)"/><rect x="690.2" y="611.0" width="7.4" height="3.0" transform="rotate(21 690.2 611.0)"/><rect x="609.3" y="580.2" width="6.0" height="2.1" transform="rotate(21 609.3 580.2)"/><rect x="657.3" y="638.2" width="6.3" height="3.1" transform="rotate(21 657.3 638.2)"/><rect x="453.9" y="543.4" width="4.4" height="3.4" transform="rotate(21 453.9 543.4)"/><rect x="650.0" y="593.8" width="5.7" height="2.0" transform="rotate(21 650.0 593.8)"/><rect x="516.0" y="579.3" width="6.6" height="2.7" transform="rotate(21 516.0 579.3)"/><rect x="607.4" y="582.7" width="3.4" height="3.3" transform="rotate(21 607.4 582.7)"/><rect x="648.8" y="587.2" width="5.2" height="3.0" transform="rotate(21 648.8 587.2)"/><rect x="662.9" y="635.4" width="3.6" height="3.1" transform="rotate(21 662.9 635.4)"/><rect x="542.1" y="558.9" width="3.1" height="2.4" transform="rotate(21 542.1 558.9)"/><rect x="625.8" y="576.2" width="5.7" height="3.2" transform="rotate(21 625.8 576.2)"/><rect x="481.3" y="533.6" width="6.2" height="2.4" transform="rotate(21 481.3 533.6)"/><rect x="542.3" y="581.1" width="4.3" height="2.1" transform="rotate(21 542.3 581.1)"/><rect x="728.1" y="641.9" width="4.8" height="2.3" transform="rotate(21 728.1 641.9)"/><rect x="661.2" y="639.5" width="5.7" height="2.3" transform="rotate(21 661.2 639.5)"/><rect x="457.1" y="535.5" width="5.3" height="2.7" transform="rotate(21 457.1 535.5)"/><rect x="650.3" y="606.8" width="5.5" height="3.3" transform="rotate(21 650.3 606.8)"/><rect x="446.6" y="511.2" width="6.4" height="2.2" transform="rotate(21 446.6 511.2)"/><rect x="691.4" y="605.5" width="5.6" height="2.4" transform="rotate(21 691.4 605.5)"/><rect x="592.6" y="582.7" width="3.9" height="3.4" transform="rotate(21 592.6 582.7)"/><rect x="629.2" y="622.6" width="5.4" height="2.4" transform="rotate(21 629.2 622.6)"/><rect x="698.2" y="613.9" width="7.8" height="3.2" transform="rotate(21 698.2 613.9)"/><rect x="456.1" y="529.7" width="3.2" height="3.4" transform="rotate(21 456.1 529.7)"/><rect x="587.1" y="607.5" width="6.0" height="3.4" transform="rotate(21 587.1 607.5)"/><rect x="514.1" y="543.8" width="4.7" height="2.6" transform="rotate(21 514.1 543.8)"/><rect x="604.8" y="611.1" width="3.8" height="2.6" transform="rotate(21 604.8 611.1)"/><rect x="698.7" y="634.5" width="7.1" height="2.5" transform="rotate(21 698.7 634.5)"/><rect x="718.5" y="631.1" width="3.5" height="2.8" transform="rotate(21 718.5 631.1)"/><rect x="496.7" y="546.1" width="5.3" height="2.9" transform="rotate(21 496.7 546.1)"/><rect x="740.7" y="628.5" width="4.7" height="3.3" transform="rotate(21 740.7 628.5)"/><rect x="699.1" y="611.8" width="5.5" height="3.0" transform="rotate(21 699.1 611.8)"/><rect x="663.0" y="624.9" width="3.2" height="2.8" transform="rotate(21 663.0 624.9)"/><rect x="520.5" y="562.0" width="7.2" height="2.1" transform="rotate(21 520.5 562.0)"/><rect x="525.2" y="588.2" width="4.6" height="2.2" transform="rotate(21 525.2 588.2)"/><rect x="673.6" y="607.3" width="6.1" height="3.1" transform="rotate(21 673.6 607.3)"/><rect x="641.0" y="604.6" width="6.1" height="3.3" transform="rotate(21 641.0 604.6)"/><rect x="444.2" y="550.3" width="7.0" height="3.2" transform="rotate(21 444.2 550.3)"/><rect x="486.4" y="535.1" width="4.6" height="3.1" transform="rotate(21 486.4 535.1)"/><rect x="563.1" y="554.1" width="3.7" height="2.6" transform="rotate(21 563.1 554.1)"/><rect x="431.1" y="533.6" width="3.0" height="2.6" transform="rotate(21 431.1 533.6)"/><rect x="678.0" y="632.4" width="7.0" height="3.4" transform="rotate(21 678.0 632.4)"/><rect x="595.9" y="600.7" width="4.7" height="2.6" transform="rotate(21 595.9 600.7)"/><rect x="670.6" y="623.0" width="6.1" height="3.0" transform="rotate(21 670.6 623.0)"/><rect x="513.7" y="566.8" width="6.2" height="3.0" transform="rotate(21 513.7 566.8)"/><rect x="496.2" y="559.4" width="5.7" height="2.6" transform="rotate(21 496.2 559.4)"/><rect x="701.8" y="653.0" width="5.5" height="3.4" transform="rotate(21 701.8 653.0)"/><rect x="468.5" y="546.6" width="6.5" height="2.6" transform="rotate(21 468.5 546.6)"/><rect x="491.6" y="529.9" width="4.0" height="2.2" transform="rotate(21 491.6 529.9)"/><rect x="663.1" y="594.0" width="5.2" height="2.7" transform="rotate(21 663.1 594.0)"/><rect x="531.0" y="545.5" width="7.7" height="3.2" transform="rotate(21 531.0 545.5)"/><rect x="560.3" y="575.9" width="7.4" height="3.4" transform="rotate(21 560.3 575.9)"/><rect x="538.9" y="593.2" width="6.6" height="3.3" transform="rotate(21 538.9 593.2)"/><rect x="571.5" y="585.9" width="7.9" height="3.0" transform="rotate(21 571.5 585.9)"/><rect x="715.4" y="629.7" width="3.4" height="2.5" transform="rotate(21 715.4 629.7)"/><rect x="577.9" y="568.0" width="7.2" height="3.1" transform="rotate(21 577.9 568.0)"/><rect x="630.1" y="613.1" width="6.6" height="2.3" transform="rotate(21 630.1 613.1)"/><rect x="607.9" y="619.8" width="4.4" height="3.3" transform="rotate(21 607.9 619.8)"/><rect x="732.6" y="624.7" width="6.2" height="2.7" transform="rotate(21 732.6 624.7)"/><rect x="611.0" y="588.9" width="7.6" height="3.3" transform="rotate(21 611.0 588.9)"/><rect x="715.8" y="646.4" width="4.1" height="2.5" transform="rotate(21 715.8 646.4)"/><rect x="698.6" y="605.3" width="7.2" height="3.1" transform="rotate(21 698.6 605.3)"/><rect x="658.6" y="624.1" width="5.5" height="3.1" transform="rotate(21 658.6 624.1)"/><rect x="584.7" y="592.4" width="6.2" height="2.8" transform="rotate(21 584.7 592.4)"/><rect x="589.2" y="566.4" width="4.3" height="2.0" transform="rotate(21 589.2 566.4)"/><rect x="689.9" y="638.1" width="4.9" height="3.2" transform="rotate(21 689.9 638.1)"/><rect x="619.7" y="618.4" width="4.1" height="3.0" transform="rotate(21 619.7 618.4)"/><rect x="624.5" y="591.6" width="6.2" height="3.0" transform="rotate(21 624.5 591.6)"/><rect x="452.1" y="542.9" width="7.3" height="2.4" transform="rotate(21 452.1 542.9)"/><rect x="543.6" y="568.2" width="5.0" height="3.1" transform="rotate(21 543.6 568.2)"/><rect x="581.4" y="591.8" width="4.7" height="2.0" transform="rotate(21 581.4 591.8)"/><rect x="648.2" y="588.2" width="7.3" height="2.6" transform="rotate(21 648.2 588.2)"/><rect x="678.2" y="626.4" width="4.3" height="3.3" transform="rotate(21 678.2 626.4)"/><rect x="599.2" y="578.5" width="4.9" height="2.8" transform="rotate(21 599.2 578.5)"/><rect x="548.6" y="549.2" width="3.3" height="3.0" transform="rotate(21 548.6 549.2)"/><rect x="693.1" y="650.9" width="5.1" height="2.2" transform="rotate(21 693.1 650.9)"/><rect x="444.5" y="547.0" width="5.3" height="2.9" transform="rotate(21 444.5 547.0)"/><rect x="577.3" y="591.2" width="7.0" height="3.2" transform="rotate(21 577.3 591.2)"/><rect x="463.0" y="517.1" width="5.5" height="3.4" transform="rotate(21 463.0 517.1)"/><rect x="600.0" y="579.0" width="7.8" height="2.8" transform="rotate(21 600.0 579.0)"/><rect x="557.4" y="591.6" width="6.6" height="2.5" transform="rotate(21 557.4 591.6)"/><rect x="464.6" y="517.6" width="5.8" height="2.2" transform="rotate(21 464.6 517.6)"/><rect x="570.5" y="562.9" width="5.9" height="3.2" transform="rotate(21 570.5 562.9)"/><rect x="438.4" y="512.7" width="4.8" height="2.9" transform="rotate(21 438.4 512.7)"/><rect x="597.1" y="600.5" width="7.2" height="2.1" transform="rotate(21 597.1 600.5)"/><rect x="679.5" y="641.2" width="6.5" height="2.9" transform="rotate(21 679.5 641.2)"/><rect x="460.0" y="561.1" width="7.2" height="2.3" transform="rotate(21 460.0 561.1)"/><rect x="474.2" y="562.9" width="3.6" height="3.2" transform="rotate(21 474.2 562.9)"/><rect x="611.1" y="572.1" width="6.1" height="2.8" transform="rotate(21 611.1 572.1)"/><rect x="736.8" y="637.8" width="6.5" height="2.2" transform="rotate(21 736.8 637.8)"/><rect x="537.2" y="564.9" width="5.0" height="2.1" transform="rotate(21 537.2 564.9)"/><rect x="587.4" y="595.0" width="6.9" height="3.4" transform="rotate(21 587.4 595.0)"/><rect x="700.0" y="652.0" width="7.2" height="3.3" transform="rotate(21 700.0 652.0)"/><rect x="452.0" y="533.3" width="7.3" height="2.1" transform="rotate(21 452.0 533.3)"/><rect x="549.0" y="583.0" width="3.5" height="2.1" transform="rotate(21 549.0 583.0)"/><rect x="492.0" y="562.2" width="7.4" height="3.5" transform="rotate(21 492.0 562.2)"/><rect x="718.3" y="661.9" width="4.7" height="3.5" transform="rotate(21 718.3 661.9)"/><rect x="551.2" y="582.1" width="8.0" height="3.3" transform="rotate(21 551.2 582.1)"/><rect x="559.0" y="593.6" width="3.2" height="3.5" transform="rotate(21 559.0 593.6)"/><rect x="677.5" y="614.0" width="8.0" height="2.1" transform="rotate(21 677.5 614.0)"/><rect x="693.5" y="636.5" width="5.5" height="3.2" transform="rotate(21 693.5 636.5)"/><rect x="513.4" y="566.6" width="6.5" height="3.5" transform="rotate(21 513.4 566.6)"/><rect x="615.6" y="581.6" width="7.3" height="2.8" transform="rotate(21 615.6 581.6)"/><rect x="672.8" y="599.9" width="6.9" height="2.0" transform="rotate(21 672.8 599.9)"/><rect x="590.1" y="565.3" width="7.4" height="2.7" transform="rotate(21 590.1 565.3)"/><rect x="569.2" y="605.6" width="7.4" height="2.9" transform="rotate(21 569.2 605.6)"/><rect x="698.4" y="650.0" width="5.3" height="2.7" transform="rotate(21 698.4 650.0)"/><rect x="430.6" y="523.3" width="4.0" height="2.3" transform="rotate(21 430.6 523.3)"/><rect x="617.6" y="575.4" width="7.9" height="2.3" transform="rotate(21 617.6 575.4)"/><rect x="427.8" y="530.8" width="3.5" height="2.7" transform="rotate(21 427.8 530.8)"/><rect x="652.7" y="612.8" width="4.0" height="2.7" transform="rotate(21 652.7 612.8)"/><rect x="565.5" y="585.6" width="7.5" height="3.1" transform="rotate(21 565.5 585.6)"/><rect x="567.9" y="562.1" width="7.4" height="2.7" transform="rotate(21 567.9 562.1)"/><rect x="680.8" y="608.1" width="6.8" height="2.6" transform="rotate(21 680.8 608.1)"/><rect x="450.1" y="555.9" width="6.8" height="2.3" transform="rotate(21 450.1 555.9)"/><rect x="649.7" y="635.1" width="6.9" height="3.0" transform="rotate(21 649.7 635.1)"/><rect x="658.2" y="611.5" width="4.3" height="2.3" transform="rotate(21 658.2 611.5)"/><rect x="593.3" y="588.1" width="5.0" height="2.5" transform="rotate(21 593.3 588.1)"/><rect x="515.1" y="544.5" width="6.8" height="2.2" transform="rotate(21 515.1 544.5)"/><rect x="715.1" y="646.4" width="6.1" height="3.4" transform="rotate(21 715.1 646.4)"/><rect x="616.9" y="593.2" width="4.5" height="3.0" transform="rotate(21 616.9 593.2)"/><rect x="667.1" y="635.4" width="3.8" height="3.1" transform="rotate(21 667.1 635.4)"/><rect x="731.0" y="617.4" width="7.0" height="3.1" transform="rotate(21 731.0 617.4)"/><rect x="639.7" y="629.8" width="3.1" height="3.4" transform="rotate(21 639.7 629.8)"/><rect x="719.3" y="630.7" width="5.0" height="2.6" transform="rotate(21 719.3 630.7)"/><rect x="556.0" y="579.9" width="7.8" height="3.5" transform="rotate(21 556.0 579.9)"/><rect x="417.1" y="532.4" width="7.1" height="2.7" transform="rotate(21 417.1 532.4)"/><rect x="563.3" y="571.5" width="5.7" height="2.4" transform="rotate(21 563.3 571.5)"/><rect x="569.3" y="589.0" width="5.4" height="2.1" transform="rotate(21 569.3 589.0)"/><rect x="456.1" y="555.3" width="6.9" height="2.3" transform="rotate(21 456.1 555.3)"/><rect x="554.8" y="578.4" width="6.3" height="2.6" transform="rotate(21 554.8 578.4)"/><rect x="424.9" y="530.8" width="5.9" height="2.5" transform="rotate(21 424.9 530.8)"/><rect x="491.2" y="558.1" width="7.5" height="3.1" transform="rotate(21 491.2 558.1)"/><rect x="687.5" y="615.2" width="7.2" height="2.3" transform="rotate(21 687.5 615.2)"/><rect x="567.1" y="579.6" width="4.4" height="3.4" transform="rotate(21 567.1 579.6)"/><rect x="664.7" y="604.4" width="4.1" height="2.1" transform="rotate(21 664.7 604.4)"/><rect x="542.7" y="552.6" width="4.4" height="2.7" transform="rotate(21 542.7 552.6)"/><rect x="644.0" y="632.2" width="7.8" height="2.5" transform="rotate(21 644.0 632.2)"/><rect x="505.7" y="533.2" width="4.9" height="2.6" transform="rotate(21 505.7 533.2)"/><rect x="461.5" y="526.0" width="7.6" height="2.6" transform="rotate(21 461.5 526.0)"/><rect x="678.7" y="638.5" width="4.3" height="2.5" transform="rotate(21 678.7 638.5)"/><rect x="576.4" y="565.7" width="3.7" height="2.6" transform="rotate(21 576.4 565.7)"/><rect x="563.0" y="560.5" width="6.4" height="3.5" transform="rotate(21 563.0 560.5)"/><rect x="720.6" y="661.1" width="4.5" height="3.5" transform="rotate(21 720.6 661.1)"/><rect x="487.5" y="523.0" width="5.3" height="3.4" transform="rotate(21 487.5 523.0)"/><rect x="730.9" y="656.7" width="4.9" height="3.5" transform="rotate(21 730.9 656.7)"/><rect x="436.5" y="542.5" width="7.4" height="3.3" transform="rotate(21 436.5 542.5)"/><rect x="629.9" y="625.6" width="4.5" height="2.1" transform="rotate(21 629.9 625.6)"/><rect x="699.0" y="608.8" width="3.9" height="2.3" transform="rotate(21 699.0 608.8)"/><rect x="489.2" y="570.3" width="5.9" height="2.6" transform="rotate(21 489.2 570.3)"/><rect x="510.5" y="538.2" width="6.0" height="2.4" transform="rotate(21 510.5 538.2)"/><rect x="467.6" y="534.7" width="7.8" height="2.5" transform="rotate(21 467.6 534.7)"/><rect x="681.2" y="634.4" width="7.2" height="2.6" transform="rotate(21 681.2 634.4)"/><rect x="715.3" y="625.6" width="5.9" height="2.2" transform="rotate(21 715.3 625.6)"/><rect x="546.8" y="556.6" width="6.9" height="2.7" transform="rotate(21 546.8 556.6)"/><rect x="651.2" y="634.2" width="3.7" height="3.5" transform="rotate(21 651.2 634.2)"/><rect x="563.6" y="554.0" width="7.5" height="3.3" transform="rotate(21 563.6 554.0)"/><rect x="520.0" y="572.2" width="7.6" height="2.9" transform="rotate(21 520.0 572.2)"/><rect x="664.5" y="630.7" width="7.3" height="2.4" transform="rotate(21 664.5 630.7)"/><rect x="452.6" y="539.9" width="5.9" height="3.3" transform="rotate(21 452.6 539.9)"/><rect x="725.1" y="638.8" width="7.1" height="2.7" transform="rotate(21 725.1 638.8)"/><rect x="457.3" y="561.4" width="3.6" height="3.3" transform="rotate(21 457.3 561.4)"/><rect x="729.9" y="645.1" width="6.1" height="2.2" transform="rotate(21 729.9 645.1)"/><rect x="721.4" y="650.5" width="8.0" height="2.2" transform="rotate(21 721.4 650.5)"/><rect x="590.4" y="601.0" width="7.2" height="2.2" transform="rotate(21 590.4 601.0)"/><rect x="661.6" y="623.5" width="3.3" height="2.3" transform="rotate(21 661.6 623.5)"/><rect x="659.3" y="618.0" width="4.8" height="2.6" transform="rotate(21 659.3 618.0)"/><rect x="521.9" y="586.9" width="4.9" height="2.8" transform="rotate(21 521.9 586.9)"/><rect x="544.4" y="580.2" width="4.6" height="2.3" transform="rotate(21 544.4 580.2)"/><rect x="481.4" y="557.0" width="6.7" height="3.5" transform="rotate(21 481.4 557.0)"/><rect x="636.4" y="591.1" width="3.2" height="2.0" transform="rotate(21 636.4 591.1)"/><rect x="725.9" y="660.6" width="5.7" height="2.4" transform="rotate(21 725.9 660.6)"/><rect x="672.2" y="596.2" width="3.9" height="2.5" transform="rotate(21 672.2 596.2)"/><rect x="427.8" y="524.7" width="3.8" height="2.1" transform="rotate(21 427.8 524.7)"/><rect x="621.9" y="585.1" width="7.2" height="3.4" transform="rotate(21 621.9 585.1)"/><rect x="463.4" y="519.2" width="4.9" height="3.1" transform="rotate(21 463.4 519.2)"/><rect x="641.7" y="608.7" width="3.3" height="2.8" transform="rotate(21 641.7 608.7)"/><rect x="483.0" y="532.2" width="4.0" height="3.3" transform="rotate(21 483.0 532.2)"/><rect x="542.8" y="556.3" width="6.8" height="2.5" transform="rotate(21 542.8 556.3)"/><rect x="603.0" y="571.1" width="5.3" height="2.4" transform="rotate(21 603.0 571.1)"/><rect x="702.6" y="616.9" width="5.4" height="2.8" transform="rotate(21 702.6 616.9)"/><rect x="645.1" y="596.2" width="4.5" height="2.1" transform="rotate(21 645.1 596.2)"/><rect x="704.7" y="630.1" width="7.9" height="2.7" transform="rotate(21 704.7 630.1)"/><rect x="595.2" y="610.3" width="3.3" height="3.0" transform="rotate(21 595.2 610.3)"/><rect x="661.2" y="619.8" width="5.4" height="2.4" transform="rotate(21 661.2 619.8)"/><rect x="567.2" y="593.7" width="3.9" height="3.2" transform="rotate(21 567.2 593.7)"/><rect x="727.6" y="649.1" width="4.5" height="3.4" transform="rotate(21 727.6 649.1)"/><rect x="526.9" y="566.2" width="4.4" height="2.2" transform="rotate(21 526.9 566.2)"/><rect x="654.7" y="630.7" width="6.9" height="3.5" transform="rotate(21 654.7 630.7)"/><rect x="541.3" y="543.7" width="6.4" height="3.0" transform="rotate(21 541.3 543.7)"/><rect x="523.2" y="569.4" width="7.9" height="2.2" transform="rotate(21 523.2 569.4)"/><rect x="615.8" y="606.2" width="4.1" height="2.6" transform="rotate(21 615.8 606.2)"/><rect x="468.9" y="548.0" width="6.3" height="2.6" transform="rotate(21 468.9 548.0)"/><rect x="457.2" y="544.3" width="7.7" height="3.2" transform="rotate(21 457.2 544.3)"/><rect x="469.7" y="530.9" width="7.5" height="2.2" transform="rotate(21 469.7 530.9)"/><rect x="732.9" y="628.1" width="4.2" height="3.0" transform="rotate(21 732.9 628.1)"/><rect x="564.7" y="574.3" width="4.2" height="2.6" transform="rotate(21 564.7 574.3)"/><rect x="706.6" y="618.6" width="4.9" height="2.5" transform="rotate(21 706.6 618.6)"/><rect x="726.0" y="654.4" width="6.6" height="2.5" transform="rotate(21 726.0 654.4)"/><rect x="546.5" y="584.5" width="4.7" height="3.1" transform="rotate(21 546.5 584.5)"/><rect x="633.5" y="605.4" width="4.6" height="2.0" transform="rotate(21 633.5 605.4)"/><rect x="651.6" y="602.2" width="4.0" height="2.3" transform="rotate(21 651.6 602.2)"/><rect x="438.5" y="526.5" width="3.8" height="3.4" transform="rotate(21 438.5 526.5)"/><rect x="627.9" y="605.2" width="3.1" height="2.0" transform="rotate(21 627.9 605.2)"/><rect x="639.5" y="616.4" width="7.6" height="3.0" transform="rotate(21 639.5 616.4)"/><rect x="647.0" y="615.2" width="3.6" height="3.3" transform="rotate(21 647.0 615.2)"/><rect x="682.4" y="645.2" width="6.7" height="2.5" transform="rotate(21 682.4 645.2)"/><rect x="611.3" y="603.2" width="3.8" height="3.3" transform="rotate(21 611.3 603.2)"/><rect x="441.7" y="538.4" width="3.3" height="3.5" transform="rotate(21 441.7 538.4)"/><rect x="710.1" y="642.2" width="6.9" height="2.8" transform="rotate(21 710.1 642.2)"/><rect x="597.8" y="566.8" width="3.1" height="2.1" transform="rotate(21 597.8 566.8)"/><rect x="651.6" y="594.1" width="6.1" height="3.4" transform="rotate(21 651.6 594.1)"/><rect x="533.8" y="543.0" width="5.4" height="3.4" transform="rotate(21 533.8 543.0)"/><rect x="442.9" y="545.1" width="3.6" height="2.4" transform="rotate(21 442.9 545.1)"/><rect x="696.4" y="604.6" width="5.8" height="3.4" transform="rotate(21 696.4 604.6)"/><rect x="648.2" y="606.8" width="4.3" height="2.2" transform="rotate(21 648.2 606.8)"/><rect x="467.9" y="552.1" width="3.6" height="3.2" transform="rotate(21 467.9 552.1)"/><rect x="428.8" y="521.8" width="7.5" height="3.5" transform="rotate(21 428.8 521.8)"/><rect x="613.4" y="617.3" width="6.1" height="3.2" transform="rotate(21 613.4 617.3)"/><rect x="434.3" y="482.6" width="5.1" height="2.2" transform="rotate(25 434.3 482.6)"/><rect x="359.3" y="507.4" width="3.8" height="2.2" transform="rotate(25 359.3 507.4)"/><rect x="395.6" y="517.4" width="5.0" height="2.2" transform="rotate(25 395.6 517.4)"/><rect x="392.0" y="498.8" width="4.7" height="2.2" transform="rotate(25 392.0 498.8)"/><rect x="381.7" y="487.0" width="5.4" height="2.2" transform="rotate(25 381.7 487.0)"/><rect x="378.3" y="463.1" width="4.4" height="2.2" transform="rotate(25 378.3 463.1)"/><rect x="418.0" y="479.9" width="5.9" height="2.2" transform="rotate(25 418.0 479.9)"/><rect x="417.9" y="507.8" width="3.1" height="2.2" transform="rotate(25 417.9 507.8)"/><rect x="414.9" y="481.4" width="5.8" height="2.2" transform="rotate(25 414.9 481.4)"/><rect x="409.7" y="517.3" width="4.4" height="2.2" transform="rotate(25 409.7 517.3)"/><rect x="408.3" y="483.1" width="4.1" height="2.2" transform="rotate(25 408.3 483.1)"/><rect x="410.6" y="507.5" width="4.0" height="2.2" transform="rotate(25 410.6 507.5)"/><rect x="334.2" y="482.9" width="3.2" height="2.2" transform="rotate(25 334.2 482.9)"/><rect x="431.7" y="505.6" width="3.2" height="2.2" transform="rotate(25 431.7 505.6)"/><rect x="335.0" y="465.6" width="5.3" height="2.2" transform="rotate(25 335.0 465.6)"/><rect x="372.5" y="501.5" width="5.2" height="2.2" transform="rotate(25 372.5 501.5)"/><rect x="411.5" y="486.9" width="3.2" height="2.2" transform="rotate(25 411.5 486.9)"/><rect x="405.8" y="500.5" width="4.9" height="2.2" transform="rotate(25 405.8 500.5)"/><rect x="350.0" y="444.9" width="3.9" height="2.2" transform="rotate(25 350.0 444.9)"/><rect x="406.2" y="489.2" width="4.6" height="2.2" transform="rotate(25 406.2 489.2)"/><rect x="425.3" y="497.2" width="4.9" height="2.2" transform="rotate(25 425.3 497.2)"/><rect x="350.6" y="483.7" width="4.9" height="2.2" transform="rotate(25 350.6 483.7)"/><rect x="365.1" y="500.1" width="3.1" height="2.2" transform="rotate(25 365.1 500.1)"/><rect x="405.7" y="457.5" width="4.9" height="2.2" transform="rotate(25 405.7 457.5)"/><rect x="427.7" y="499.9" width="4.4" height="2.2" transform="rotate(25 427.7 499.9)"/><rect x="385.1" y="476.6" width="5.3" height="2.2" transform="rotate(25 385.1 476.6)"/><rect x="423.2" y="492.1" width="3.0" height="2.2" transform="rotate(25 423.2 492.1)"/><rect x="358.1" y="480.4" width="3.7" height="2.2" transform="rotate(25 358.1 480.4)"/><rect x="421.1" y="468.8" width="4.7" height="2.2" transform="rotate(25 421.1 468.8)"/><rect x="402.3" y="479.2" width="5.7" height="2.2" transform="rotate(25 402.3 479.2)"/><rect x="407.1" y="458.4" width="5.9" height="2.2" transform="rotate(25 407.1 458.4)"/><rect x="376.0" y="505.1" width="3.6" height="2.2" transform="rotate(25 376.0 505.1)"/><rect x="366.7" y="477.4" width="5.8" height="2.2" transform="rotate(25 366.7 477.4)"/><rect x="435.3" y="468.1" width="5.4" height="2.2" transform="rotate(25 435.3 468.1)"/><rect x="407.8" y="490.5" width="3.1" height="2.2" transform="rotate(25 407.8 490.5)"/><rect x="341.7" y="486.9" width="6.0" height="2.2" transform="rotate(25 341.7 486.9)"/><rect x="341.9" y="456.6" width="4.3" height="2.2" transform="rotate(25 341.9 456.6)"/><rect x="381.5" y="490.4" width="4.6" height="2.2" transform="rotate(25 381.5 490.4)"/><rect x="340.8" y="446.5" width="5.8" height="2.2" transform="rotate(25 340.8 446.5)"/><rect x="436.5" y="470.9" width="3.6" height="2.2" transform="rotate(25 436.5 470.9)"/><rect x="421.9" y="481.9" width="3.2" height="2.2" transform="rotate(25 421.9 481.9)"/><rect x="350.6" y="488.3" width="5.5" height="2.2" transform="rotate(25 350.6 488.3)"/><rect x="437.1" y="477.7" width="3.1" height="2.2" transform="rotate(25 437.1 477.7)"/><rect x="399.7" y="484.6" width="4.8" height="2.2" transform="rotate(25 399.7 484.6)"/><rect x="418.0" y="475.5" width="5.0" height="2.2" transform="rotate(25 418.0 475.5)"/><rect x="390.1" y="488.5" width="4.8" height="2.2" transform="rotate(25 390.1 488.5)"/><rect x="439.6" y="484.4" width="4.5" height="2.2" transform="rotate(25 439.6 484.4)"/><rect x="369.1" y="460.3" width="4.9" height="2.2" transform="rotate(25 369.1 460.3)"/><rect x="396.4" y="473.4" width="3.9" height="2.2" transform="rotate(25 396.4 473.4)"/><rect x="335.9" y="478.2" width="3.1" height="2.2" transform="rotate(25 335.9 478.2)"/><rect x="380.2" y="480.9" width="3.9" height="2.2" transform="rotate(25 380.2 480.9)"/><rect x="336.3" y="490.3" width="3.6" height="2.2" transform="rotate(25 336.3 490.3)"/><rect x="370.8" y="505.7" width="3.4" height="2.2" transform="rotate(25 370.8 505.7)"/><rect x="426.1" y="487.4" width="3.9" height="2.2" transform="rotate(25 426.1 487.4)"/><rect x="394.1" y="514.7" width="5.2" height="2.2" transform="rotate(25 394.1 514.7)"/><rect x="392.3" y="503.9" width="5.0" height="2.2" transform="rotate(25 392.3 503.9)"/><rect x="430.8" y="490.4" width="4.5" height="2.2" transform="rotate(25 430.8 490.4)"/><rect x="348.7" y="466.2" width="3.9" height="2.2" transform="rotate(25 348.7 466.2)"/><rect x="396.4" y="493.4" width="6.0" height="2.2" transform="rotate(25 396.4 493.4)"/><rect x="402.1" y="506.2" width="4.8" height="2.2" transform="rotate(25 402.1 506.2)"/><rect x="419.3" y="517.7" width="3.8" height="2.2" transform="rotate(25 419.3 517.7)"/><rect x="394.1" y="468.3" width="3.9" height="2.2" transform="rotate(25 394.1 468.3)"/><rect x="375.0" y="461.3" width="3.3" height="2.2" transform="rotate(25 375.0 461.3)"/><rect x="383.8" y="462.9" width="5.7" height="2.2" transform="rotate(25 383.8 462.9)"/><rect x="350.2" y="496.0" width="6.0" height="2.2" transform="rotate(25 350.2 496.0)"/><rect x="434.0" y="495.8" width="4.0" height="2.2" transform="rotate(25 434.0 495.8)"/><rect x="418.5" y="515.6" width="4.4" height="2.2" transform="rotate(25 418.5 515.6)"/><rect x="433.0" y="487.8" width="5.8" height="2.2" transform="rotate(25 433.0 487.8)"/><rect x="390.0" y="486.8" width="4.1" height="2.2" transform="rotate(25 390.0 486.8)"/><rect x="416.4" y="500.2" width="4.4" height="2.2" transform="rotate(25 416.4 500.2)"/><rect x="348.4" y="493.2" width="4.4" height="2.2" transform="rotate(25 348.4 493.2)"/><rect x="412.2" y="514.0" width="4.7" height="2.2" transform="rotate(25 412.2 514.0)"/><rect x="358.6" y="488.2" width="5.2" height="2.2" transform="rotate(25 358.6 488.2)"/><rect x="367.0" y="445.1" width="4.0" height="2.2" transform="rotate(25 367.0 445.1)"/><rect x="391.6" y="486.5" width="6.0" height="2.2" transform="rotate(25 391.6 486.5)"/><rect x="424.8" y="473.1" width="5.9" height="2.2" transform="rotate(25 424.8 473.1)"/><rect x="359.5" y="507.2" width="4.2" height="2.2" transform="rotate(25 359.5 507.2)"/><rect x="336.8" y="475.6" width="5.8" height="2.2" transform="rotate(25 336.8 475.6)"/><rect x="343.7" y="505.3" width="4.1" height="2.2" transform="rotate(25 343.7 505.3)"/><rect x="419.8" y="512.7" width="4.7" height="2.2" transform="rotate(25 419.8 512.7)"/><rect x="375.7" y="448.4" width="4.8" height="2.2" transform="rotate(25 375.7 448.4)"/><rect x="430.4" y="475.5" width="3.6" height="2.2" transform="rotate(25 430.4 475.5)"/><rect x="373.8" y="472.5" width="5.7" height="2.2" transform="rotate(25 373.8 472.5)"/><rect x="385.4" y="506.0" width="4.3" height="2.2" transform="rotate(25 385.4 506.0)"/><rect x="378.9" y="492.3" width="5.3" height="2.2" transform="rotate(25 378.9 492.3)"/><rect x="353.1" y="454.1" width="5.0" height="2.2" transform="rotate(25 353.1 454.1)"/><rect x="334.2" y="490.7" width="4.4" height="2.2" transform="rotate(25 334.2 490.7)"/><rect x="407.1" y="475.8" width="5.0" height="2.2" transform="rotate(25 407.1 475.8)"/><rect x="372.5" y="457.5" width="4.8" height="2.2" transform="rotate(25 372.5 457.5)"/><rect x="377.9" y="447.4" width="3.4" height="2.2" transform="rotate(25 377.9 447.4)"/><rect x="425.7" y="507.1" width="3.2" height="2.2" transform="rotate(25 425.7 507.1)"/><rect x="384.9" y="507.7" width="5.8" height="2.2" transform="rotate(25 384.9 507.7)"/><rect x="401.4" y="512.5" width="3.9" height="2.2" transform="rotate(25 401.4 512.5)"/><rect x="343.4" y="478.9" width="3.2" height="2.2" transform="rotate(25 343.4 478.9)"/><rect x="387.4" y="476.5" width="5.6" height="2.2" transform="rotate(25 387.4 476.5)"/><rect x="348.8" y="464.3" width="3.3" height="2.2" transform="rotate(25 348.8 464.3)"/><rect x="405.2" y="480.5" width="5.9" height="2.2" transform="rotate(25 405.2 480.5)"/><rect x="411.8" y="478.3" width="5.8" height="2.2" transform="rotate(25 411.8 478.3)"/><rect x="412.8" y="491.3" width="5.9" height="2.2" transform="rotate(25 412.8 491.3)"/><rect x="348.7" y="475.9" width="5.4" height="2.2" transform="rotate(25 348.7 475.9)"/><rect x="366.4" y="486.3" width="4.8" height="2.2" transform="rotate(25 366.4 486.3)"/><rect x="385.8" y="476.5" width="3.8" height="2.2" transform="rotate(25 385.8 476.5)"/><rect x="343.7" y="448.4" width="5.0" height="2.2" transform="rotate(25 343.7 448.4)"/><rect x="360.7" y="442.1" width="4.2" height="2.2" transform="rotate(25 360.7 442.1)"/><rect x="441.8" y="469.8" width="5.6" height="2.2" transform="rotate(25 441.8 469.8)"/><rect x="399.5" y="496.4" width="4.7" height="2.2" transform="rotate(25 399.5 496.4)"/><rect x="397.5" y="481.6" width="3.7" height="2.2" transform="rotate(25 397.5 481.6)"/><rect x="409.7" y="512.0" width="3.4" height="2.2" transform="rotate(25 409.7 512.0)"/><rect x="428.7" y="500.1" width="5.2" height="2.2" transform="rotate(25 428.7 500.1)"/><rect x="418.4" y="517.0" width="3.8" height="2.2" transform="rotate(25 418.4 517.0)"/><rect x="402.6" y="495.8" width="4.5" height="2.2" transform="rotate(25 402.6 495.8)"/><rect x="336.6" y="441.7" width="4.8" height="2.2" transform="rotate(25 336.6 441.7)"/><rect x="351.5" y="449.3" width="5.0" height="2.2" transform="rotate(25 351.5 449.3)"/><rect x="344.3" y="487.1" width="3.3" height="2.2" transform="rotate(25 344.3 487.1)"/><rect x="386.7" y="504.6" width="4.7" height="2.2" transform="rotate(25 386.7 504.6)"/><rect x="356.7" y="505.4" width="3.2" height="2.2" transform="rotate(25 356.7 505.4)"/><rect x="425.3" y="493.8" width="5.1" height="2.2" transform="rotate(25 425.3 493.8)"/><rect x="385.4" y="471.8" width="4.9" height="2.2" transform="rotate(25 385.4 471.8)"/><rect x="389.4" y="460.0" width="4.0" height="2.2" transform="rotate(25 389.4 460.0)"/><rect x="397.3" y="467.7" width="4.5" height="2.2" transform="rotate(25 397.3 467.7)"/><rect x="391.7" y="502.9" width="5.1" height="2.2" transform="rotate(25 391.7 502.9)"/><rect x="355.0" y="501.4" width="3.0" height="2.2" transform="rotate(25 355.0 501.4)"/><rect x="428.3" y="501.4" width="3.9" height="2.2" transform="rotate(25 428.3 501.4)"/><rect x="339.7" y="447.9" width="4.2" height="2.2" transform="rotate(25 339.7 447.9)"/><rect x="372.1" y="511.4" width="4.7" height="2.2" transform="rotate(25 372.1 511.4)"/><rect x="363.6" y="447.3" width="3.9" height="2.2" transform="rotate(25 363.6 447.3)"/><rect x="358.9" y="460.1" width="5.6" height="2.2" transform="rotate(25 358.9 460.1)"/><rect x="433.1" y="495.6" width="4.2" height="2.2" transform="rotate(25 433.1 495.6)"/><rect x="340.8" y="469.5" width="3.3" height="2.2" transform="rotate(25 340.8 469.5)"/><rect x="373.6" y="480.8" width="4.9" height="2.2" transform="rotate(25 373.6 480.8)"/><rect x="363.9" y="506.3" width="3.7" height="2.2" transform="rotate(25 363.9 506.3)"/><rect x="414.5" y="463.7" width="3.3" height="2.2" transform="rotate(25 414.5 463.7)"/><rect x="423.4" y="483.8" width="5.3" height="2.2" transform="rotate(25 423.4 483.8)"/><rect x="363.0" y="496.7" width="5.6" height="2.2" transform="rotate(25 363.0 496.7)"/><rect x="407.0" y="473.1" width="3.3" height="2.2" transform="rotate(25 407.0 473.1)"/><rect x="425.1" y="520.7" width="3.1" height="2.2" transform="rotate(25 425.1 520.7)"/><rect x="342.7" y="484.3" width="5.1" height="2.2" transform="rotate(25 342.7 484.3)"/><rect x="377.2" y="501.4" width="4.6" height="2.2" transform="rotate(25 377.2 501.4)"/><rect x="364.6" y="480.1" width="3.8" height="2.2" transform="rotate(25 364.6 480.1)"/><rect x="347.6" y="488.2" width="3.8" height="2.2" transform="rotate(25 347.6 488.2)"/><rect x="399.8" y="459.6" width="3.1" height="2.2" transform="rotate(25 399.8 459.6)"/><rect x="420.1" y="495.1" width="5.6" height="2.2" transform="rotate(25 420.1 495.1)"/><rect x="398.1" y="474.1" width="3.1" height="2.2" transform="rotate(25 398.1 474.1)"/><rect x="345.7" y="499.1" width="4.1" height="2.2" transform="rotate(25 345.7 499.1)"/><rect x="397.8" y="499.4" width="4.5" height="2.2" transform="rotate(25 397.8 499.4)"/><rect x="389.1" y="505.0" width="5.7" height="2.2" transform="rotate(25 389.1 505.0)"/><rect x="412.8" y="495.6" width="4.2" height="2.2" transform="rotate(25 412.8 495.6)"/><rect x="419.1" y="515.6" width="5.6" height="2.2" transform="rotate(25 419.1 515.6)"/><rect x="335.5" y="459.6" width="4.3" height="2.2" transform="rotate(25 335.5 459.6)"/><rect x="389.7" y="466.1" width="3.6" height="2.2" transform="rotate(25 389.7 466.1)"/><rect x="342.6" y="458.2" width="3.1" height="2.2" transform="rotate(25 342.6 458.2)"/><rect x="433.4" y="479.5" width="5.2" height="2.2" transform="rotate(25 433.4 479.5)"/><rect x="356.0" y="456.8" width="5.4" height="2.2" transform="rotate(25 356.0 456.8)"/><rect x="338.0" y="530.0" width="9" height="2.6" transform="rotate(22 338.0 530.0)"/><rect x="335.4" y="538.5" width="9" height="2.6" transform="rotate(22 335.4 538.5)"/><rect x="351.0" y="534.0" width="9" height="2.6" transform="rotate(22 351.0 534.0)"/><rect x="348.4" y="542.5" width="9" height="2.6" transform="rotate(22 348.4 542.5)"/><rect x="345.8" y="551.0" width="9" height="2.6" transform="rotate(22 345.8 551.0)"/><rect x="343.2" y="559.5" width="9" height="2.6" transform="rotate(22 343.2 559.5)"/><rect x="340.6" y="568.0" width="9" height="2.6" transform="rotate(22 340.6 568.0)"/><rect x="338.0" y="576.5" width="9" height="2.6" transform="rotate(22 338.0 576.5)"/><rect x="335.4" y="585.0" width="9" height="2.6" transform="rotate(22 335.4 585.0)"/><rect x="364.0" y="538.0" width="9" height="2.6" transform="rotate(22 364.0 538.0)"/><rect x="361.4" y="546.5" width="9" height="2.6" transform="rotate(22 361.4 546.5)"/><rect x="358.8" y="555.0" width="9" height="2.6" transform="rotate(22 358.8 555.0)"/><rect x="356.2" y="563.5" width="9" height="2.6" transform="rotate(22 356.2 563.5)"/><rect x="353.6" y="572.0" width="9" height="2.6" transform="rotate(22 353.6 572.0)"/><rect x="351.0" y="580.5" width="9" height="2.6" transform="rotate(22 351.0 580.5)"/><rect x="348.4" y="589.0" width="9" height="2.6" transform="rotate(22 348.4 589.0)"/><rect x="345.8" y="597.5" width="9" height="2.6" transform="rotate(22 345.8 597.5)"/><rect x="343.2" y="606.0" width="9" height="2.6" transform="rotate(22 343.2 606.0)"/><rect x="340.6" y="614.5" width="9" height="2.6" transform="rotate(22 340.6 614.5)"/><rect x="338.0" y="623.0" width="9" height="2.6" transform="rotate(22 338.0 623.0)"/><rect x="335.4" y="631.5" width="9" height="2.6" transform="rotate(22 335.4 631.5)"/><rect x="377.0" y="542.0" width="9" height="2.6" transform="rotate(22 377.0 542.0)"/><rect x="374.4" y="550.5" width="9" height="2.6" transform="rotate(22 374.4 550.5)"/><rect x="371.8" y="559.0" width="9" height="2.6" transform="rotate(22 371.8 559.0)"/><rect x="369.2" y="567.5" width="9" height="2.6" transform="rotate(22 369.2 567.5)"/><rect x="366.6" y="576.0" width="9" height="2.6" transform="rotate(22 366.6 576.0)"/><rect x="364.0" y="584.5" width="9" height="2.6" transform="rotate(22 364.0 584.5)"/><rect x="361.4" y="593.0" width="9" height="2.6" transform="rotate(22 361.4 593.0)"/><rect x="358.8" y="601.5" width="9" height="2.6" transform="rotate(22 358.8 601.5)"/><rect x="356.2" y="610.0" width="9" height="2.6" transform="rotate(22 356.2 610.0)"/><rect x="353.6" y="618.5" width="9" height="2.6" transform="rotate(22 353.6 618.5)"/><rect x="351.0" y="627.0" width="9" height="2.6" transform="rotate(22 351.0 627.0)"/><rect x="348.4" y="635.5" width="9" height="2.6" transform="rotate(22 348.4 635.5)"/><rect x="345.8" y="644.0" width="9" height="2.6" transform="rotate(22 345.8 644.0)"/><rect x="343.2" y="652.5" width="9" height="2.6" transform="rotate(22 343.2 652.5)"/><rect x="340.6" y="661.0" width="9" height="2.6" transform="rotate(22 340.6 661.0)"/><rect x="338.0" y="669.5" width="9" height="2.6" transform="rotate(22 338.0 669.5)"/><rect x="390.0" y="546.0" width="9" height="2.6" transform="rotate(22 390.0 546.0)"/><rect x="387.4" y="554.5" width="9" height="2.6" transform="rotate(22 387.4 554.5)"/><rect x="384.8" y="563.0" width="9" height="2.6" transform="rotate(22 384.8 563.0)"/><rect x="382.2" y="571.5" width="9" height="2.6" transform="rotate(22 382.2 571.5)"/><rect x="379.6" y="580.0" width="9" height="2.6" transform="rotate(22 379.6 580.0)"/><rect x="377.0" y="588.5" width="9" height="2.6" transform="rotate(22 377.0 588.5)"/><rect x="374.4" y="597.0" width="9" height="2.6" transform="rotate(22 374.4 597.0)"/><rect x="371.8" y="605.5" width="9" height="2.6" transform="rotate(22 371.8 605.5)"/><rect x="369.2" y="614.0" width="9" height="2.6" transform="rotate(22 369.2 614.0)"/><rect x="366.6" y="622.5" width="9" height="2.6" transform="rotate(22 366.6 622.5)"/><rect x="364.0" y="631.0" width="9" height="2.6" transform="rotate(22 364.0 631.0)"/><rect x="361.4" y="639.5" width="9" height="2.6" transform="rotate(22 361.4 639.5)"/><rect x="358.8" y="648.0" width="9" height="2.6" transform="rotate(22 358.8 648.0)"/><rect x="356.2" y="656.5" width="9" height="2.6" transform="rotate(22 356.2 656.5)"/><rect x="353.6" y="665.0" width="9" height="2.6" transform="rotate(22 353.6 665.0)"/><rect x="351.0" y="673.5" width="9" height="2.6" transform="rotate(22 351.0 673.5)"/><rect x="403.0" y="550.0" width="9" height="2.6" transform="rotate(22 403.0 550.0)"/><rect x="400.4" y="558.5" width="9" height="2.6" transform="rotate(22 400.4 558.5)"/><rect x="397.8" y="567.0" width="9" height="2.6" transform="rotate(22 397.8 567.0)"/><rect x="395.2" y="575.5" width="9" height="2.6" transform="rotate(22 395.2 575.5)"/><rect x="392.6" y="584.0" width="9" height="2.6" transform="rotate(22 392.6 584.0)"/><rect x="390.0" y="592.5" width="9" height="2.6" transform="rotate(22 390.0 592.5)"/><rect x="387.4" y="601.0" width="9" height="2.6" transform="rotate(22 387.4 601.0)"/><rect x="384.8" y="609.5" width="9" height="2.6" transform="rotate(22 384.8 609.5)"/><rect x="382.2" y="618.0" width="9" height="2.6" transform="rotate(22 382.2 618.0)"/><rect x="379.6" y="626.5" width="9" height="2.6" transform="rotate(22 379.6 626.5)"/><rect x="377.0" y="635.0" width="9" height="2.6" transform="rotate(22 377.0 635.0)"/><rect x="374.4" y="643.5" width="9" height="2.6" transform="rotate(22 374.4 643.5)"/><rect x="371.8" y="652.0" width="9" height="2.6" transform="rotate(22 371.8 652.0)"/><rect x="369.2" y="660.5" width="9" height="2.6" transform="rotate(22 369.2 660.5)"/><rect x="366.6" y="669.0" width="9" height="2.6" transform="rotate(22 366.6 669.0)"/><rect x="364.0" y="677.5" width="9" height="2.6" transform="rotate(22 364.0 677.5)"/><rect x="416.0" y="554.0" width="9" height="2.6" transform="rotate(22 416.0 554.0)"/><rect x="413.4" y="562.5" width="9" height="2.6" transform="rotate(22 413.4 562.5)"/><rect x="410.8" y="571.0" width="9" height="2.6" transform="rotate(22 410.8 571.0)"/><rect x="408.2" y="579.5" width="9" height="2.6" transform="rotate(22 408.2 579.5)"/><rect x="405.6" y="588.0" width="9" height="2.6" transform="rotate(22 405.6 588.0)"/><rect x="403.0" y="596.5" width="9" height="2.6" transform="rotate(22 403.0 596.5)"/><rect x="400.4" y="605.0" width="9" height="2.6" transform="rotate(22 400.4 605.0)"/><rect x="397.8" y="613.5" width="9" height="2.6" transform="rotate(22 397.8 613.5)"/><rect x="395.2" y="622.0" width="9" height="2.6" transform="rotate(22 395.2 622.0)"/><rect x="392.6" y="630.5" width="9" height="2.6" transform="rotate(22 392.6 630.5)"/><rect x="390.0" y="639.0" width="9" height="2.6" transform="rotate(22 390.0 639.0)"/><rect x="387.4" y="647.5" width="9" height="2.6" transform="rotate(22 387.4 647.5)"/><rect x="384.8" y="656.0" width="9" height="2.6" transform="rotate(22 384.8 656.0)"/><rect x="382.2" y="664.5" width="9" height="2.6" transform="rotate(22 382.2 664.5)"/><rect x="379.6" y="673.0" width="9" height="2.6" transform="rotate(22 379.6 673.0)"/><rect x="377.0" y="681.5" width="9" height="2.6" transform="rotate(22 377.0 681.5)"/></g>
</g><g filter="url(#soft2)">
<g fill="none" stroke="#e3e3e6" stroke-linecap="round" stroke-linejoin="round">
<path d="M320.0 262.0 L502.0 333.0 L700.0 413.0 L833.0 468.0 L984.0 528.0" stroke-width="13.6"/>
<path d="M984.0 528.0 L1014.0 517.0 L1017.0 531.0 L1126.0 532.0 L1160.0 545.0 L1300.0 600.0" stroke-width="7.6"/>
<path d="M876.7 578.6 L1287.7 367.6" stroke-width="10.6"/>
<path d="M833.0 476.0 L884.0 596.0 L960.0 663.0 L1000.0 705.0" stroke-width="6.6"/>
<path d="M1240.0 405.0 L1221.0 440.0 L1158.0 545.0 L1122.0 705.0" stroke-width="7.1"/>
<path d="M1166.0 200.0 L1274.0 373.0" stroke-width="10.6"/>
<path d="M540.0 195.0 L481.8 320.5 L463.6 368.0 L449.0 420.0" stroke-width="4.6"/>
<path d="M470.0 196.0 L556.8 263.8 L574.0 282.0 L620.6 334.6 L690.0 385.0" stroke-width="4.6"/>
<path d="M360.0 195.0 L336.0 257.7" stroke-width="4.6"/>
<path d="M334.0 372.0 L457.5 406.5 L574.0 441.0 L690.0 474.0" stroke-width="4.6"/>
<path d="M334.0 420.7 L439.0 471.3" stroke-width="4.6"/>
<path d="M560.0 220.0 L528.0 260.0" stroke-width="4.1"/>
<path d="M620.0 196.0 L695.5 288.0 L719.8 328.6 L775.0 430.0 L800.0 470.0" stroke-width="4.6"/>
<path d="M655.0 198.0 L574.0 284.0" stroke-width="4.6"/>
<path d="M820.0 208.0 L691.5 368.0 L640.8 499.6 L610.0 580.0 L590.0 640.0" stroke-width="4.6"/>
<path d="M683.0 261.7 L814.0 316.4 L933.5 370.0 L1060.0 440.0" stroke-width="4.6"/>
<path d="M740.0 200.0 L814.0 243.5 L968.0 286.0 L1090.0 330.0" stroke-width="4.6"/>
<path d="M1002.0 200.0 L988.0 268.0 L972.0 274.0 L935.5 368.0 L905.0 450.0 L880.0 520.0" stroke-width="4.6"/>
<path d="M933.5 261.7 L887.0 328.6 L850.0 380.0" stroke-width="4.1"/>
<path d="M1040.0 298.0 L976.0 368.0 L940.0 420.0" stroke-width="4.6"/>
<path d="M574.0 493.6 L814.0 475.3 L984.0 466.0" stroke-width="4.6"/>
<path d="M502.0 368.0 L465.6 467.2 L440.0 520.0" stroke-width="4.6"/>
<path d="M641.0 506.0 L611.0 589.0 L590.0 650.0" stroke-width="4.1"/>
<path d="M690.0 625.0 L605.0 700.0" stroke-width="4.6"/>
<path d="M440.0 500.0 L540.0 560.0 L700.0 640.0 L760.0 690.0" stroke-width="4.6"/>
<path d="M469.0 612.0 L560.0 650.0 L690.0 691.0" stroke-width="4.1"/>
<path d="M1054.0 215.0 L1110.0 270.0 L1150.0 300.0" stroke-width="4.6"/>
<path d="M995.0 276.0 L1064.0 198.0" stroke-width="6.6"/>
<path d="M1068.0 218.0 L1065.0 250.0 L1078.0 276.0" stroke-width="4.1"/>
<path d="M1080.0 205.0 L1020.0 300.0 L990.0 330.0" stroke-width="4.1"/>
<path d="M1060.0 350.0 L1140.0 420.0 L1180.0 470.0" stroke-width="4.6"/>
<path d="M1200.0 330.0 L1150.0 380.0 L1120.0 420.0" stroke-width="4.1"/>
<path d="M459.6 407.5 L640.0 474.0 L734.0 500.0" stroke-width="4.6"/>
<path d="M518.5 513.5 L734.0 484.0" stroke-width="4.6"/>
<path d="M467.5 415.0 L467.5 458.5 L477.0 478.0 L500.0 500.0" stroke-width="4.1"/>
<path d="M432.0 497.8 L734.0 662.6" stroke-width="5.1"/>
<path d="M432.0 588.0 L550.0 662.6 L608.8 686.0" stroke-width="4.1"/>
<path d="M734.0 568.4 L608.8 694.0" stroke-width="5.1"/>
<path d="M671.6 415.0 L648.0 470.0" stroke-width="4.1"/>
<path d="M551.9 380.0 L520.5 456.5 L506.7 497.8" stroke-width="4.1"/>
<path d="M512.0 346.7 L485.6 420.0" stroke-width="4.1"/>
<path d="M614.0 251.0 L579.0 283.0" stroke-width="4.1"/>
<path d="M560.0 267.0 L614.0 328.0" stroke-width="4.1"/>
<path d="M334.0 509.5 L412.5 545.0" stroke-width="4.1"/>
<path d="M1089.6 540.0 L1073.9 589.0 L1054.2 618.5 L1018.9 667.6 L1003.0 705.0" stroke-width="4.6"/>
<path d="M1087.6 544.0 L1140.0 579.0" stroke-width="4.6"/>
<path d="M1097.4 602.8 L1140.0 618.5" stroke-width="4.6"/>
<path d="M1052.3 638.0 L1062.0 644.0 L1093.5 646.0 L1123.0 673.5" stroke-width="4.1"/>
<path d="M1013.0 685.3 L1030.0 700.0" stroke-width="4.1"/>
<path d="M1155.7 565.0 L1222.8 603.8 L1280.0 605.5" stroke-width="4.6"/>
<path d="M1150.6 596.0 L1215.9 615.0" stroke-width="4.6"/>
<path d="M1145.5 618.3 L1222.8 635.5 L1240.0 647.6" stroke-width="4.6"/>
<path d="M1222.8 603.8 L1212.4 632.0" stroke-width="4.6"/>
<path d="M1229.6 605.5 L1226.0 630.0" stroke-width="4.1"/>
<path d="M1280.0 632.0 L1198.7 680.2 L1170.0 705.0" stroke-width="4.6"/>
<path d="M1267.0 585.7 L1253.7 601.0" stroke-width="4.1"/>
<path d="M1000.0 560.0 L985.0 580.0 L990.0 600.0 L1019.0 589.0" stroke-width="3.6"/>
<path d="M960.0 667.6 L985.5 697.0" stroke-width="4.6"/>
<path d="M890.0 540.0 L930.0 600.0 L980.0 640.0" stroke-width="4.1"/>
<path d="M900.0 620.0 L1020.0 650.0" stroke-width="4.1"/>
<path d="M800.0 640.0 L860.0 700.0" stroke-width="4.1"/>
<path d="M753.0 553.0 L833.0 476.0" stroke-width="5.6"/>
<path d="M900.0 602.6 L817.0 700.0" stroke-width="4.1"/>
<path d="M839.0 523.0 L801.0 574.0 L775.7 618.6" stroke-width="4.1"/>
<path d="M1250.0 470.0 L1280.0 500.0" stroke-width="4.6"/>
<path d="M1180.0 470.0 L1200.0 520.0 L1190.0 552.0" stroke-width="4.1"/>
<path d="M1126.0 532.0 L1110.0 490.0 L1130.0 470.0" stroke-width="4.1"/>
</g>
<g fill="none" stroke="#ffffff" stroke-linecap="round" stroke-linejoin="round">
<path d="M320.0 262.0 L502.0 333.0 L700.0 413.0 L833.0 468.0 L984.0 528.0" stroke-width="12"/>
<path d="M984.0 528.0 L1014.0 517.0 L1017.0 531.0 L1126.0 532.0 L1160.0 545.0 L1300.0 600.0" stroke-width="6"/>
<path d="M876.7 578.6 L1287.7 367.6" stroke-width="9"/>
<path d="M833.0 476.0 L884.0 596.0 L960.0 663.0 L1000.0 705.0" stroke-width="5"/>
<path d="M1240.0 405.0 L1221.0 440.0 L1158.0 545.0 L1122.0 705.0" stroke-width="5.5"/>
<path d="M1166.0 200.0 L1274.0 373.0" stroke-width="9"/>
<path d="M540.0 195.0 L481.8 320.5 L463.6 368.0 L449.0 420.0" stroke-width="3"/>
<path d="M470.0 196.0 L556.8 263.8 L574.0 282.0 L620.6 334.6 L690.0 385.0" stroke-width="3"/>
<path d="M360.0 195.0 L336.0 257.7" stroke-width="3"/>
<path d="M334.0 372.0 L457.5 406.5 L574.0 441.0 L690.0 474.0" stroke-width="3"/>
<path d="M334.0 420.7 L439.0 471.3" stroke-width="3"/>
<path d="M560.0 220.0 L528.0 260.0" stroke-width="2.5"/>
<path d="M620.0 196.0 L695.5 288.0 L719.8 328.6 L775.0 430.0 L800.0 470.0" stroke-width="3"/>
<path d="M655.0 198.0 L574.0 284.0" stroke-width="3"/>
<path d="M820.0 208.0 L691.5 368.0 L640.8 499.6 L610.0 580.0 L590.0 640.0" stroke-width="3"/>
<path d="M683.0 261.7 L814.0 316.4 L933.5 370.0 L1060.0 440.0" stroke-width="3"/>
<path d="M740.0 200.0 L814.0 243.5 L968.0 286.0 L1090.0 330.0" stroke-width="3"/>
<path d="M1002.0 200.0 L988.0 268.0 L972.0 274.0 L935.5 368.0 L905.0 450.0 L880.0 520.0" stroke-width="3"/>
<path d="M933.5 261.7 L887.0 328.6 L850.0 380.0" stroke-width="2.5"/>
<path d="M1040.0 298.0 L976.0 368.0 L940.0 420.0" stroke-width="3"/>
<path d="M574.0 493.6 L814.0 475.3 L984.0 466.0" stroke-width="3"/>
<path d="M502.0 368.0 L465.6 467.2 L440.0 520.0" stroke-width="3"/>
<path d="M641.0 506.0 L611.0 589.0 L590.0 650.0" stroke-width="2.5"/>
<path d="M690.0 625.0 L605.0 700.0" stroke-width="3"/>
<path d="M440.0 500.0 L540.0 560.0 L700.0 640.0 L760.0 690.0" stroke-width="3"/>
<path d="M469.0 612.0 L560.0 650.0 L690.0 691.0" stroke-width="2.5"/>
<path d="M1054.0 215.0 L1110.0 270.0 L1150.0 300.0" stroke-width="3"/>
<path d="M995.0 276.0 L1064.0 198.0" stroke-width="5"/>
<path d="M1068.0 218.0 L1065.0 250.0 L1078.0 276.0" stroke-width="2.5"/>
<path d="M1080.0 205.0 L1020.0 300.0 L990.0 330.0" stroke-width="2.5"/>
<path d="M1060.0 350.0 L1140.0 420.0 L1180.0 470.0" stroke-width="3"/>
<path d="M1200.0 330.0 L1150.0 380.0 L1120.0 420.0" stroke-width="2.5"/>
<path d="M459.6 407.5 L640.0 474.0 L734.0 500.0" stroke-width="3"/>
<path d="M518.5 513.5 L734.0 484.0" stroke-width="3"/>
<path d="M467.5 415.0 L467.5 458.5 L477.0 478.0 L500.0 500.0" stroke-width="2.5"/>
<path d="M432.0 497.8 L734.0 662.6" stroke-width="3.5"/>
<path d="M432.0 588.0 L550.0 662.6 L608.8 686.0" stroke-width="2.5"/>
<path d="M734.0 568.4 L608.8 694.0" stroke-width="3.5"/>
<path d="M671.6 415.0 L648.0 470.0" stroke-width="2.5"/>
<path d="M551.9 380.0 L520.5 456.5 L506.7 497.8" stroke-width="2.5"/>
<path d="M512.0 346.7 L485.6 420.0" stroke-width="2.5"/>
<path d="M614.0 251.0 L579.0 283.0" stroke-width="2.5"/>
<path d="M560.0 267.0 L614.0 328.0" stroke-width="2.5"/>
<path d="M334.0 509.5 L412.5 545.0" stroke-width="2.5"/>
<path d="M1089.6 540.0 L1073.9 589.0 L1054.2 618.5 L1018.9 667.6 L1003.0 705.0" stroke-width="3"/>
<path d="M1087.6 544.0 L1140.0 579.0" stroke-width="3"/>
<path d="M1097.4 602.8 L1140.0 618.5" stroke-width="3"/>
<path d="M1052.3 638.0 L1062.0 644.0 L1093.5 646.0 L1123.0 673.5" stroke-width="2.5"/>
<path d="M1013.0 685.3 L1030.0 700.0" stroke-width="2.5"/>
<path d="M1155.7 565.0 L1222.8 603.8 L1280.0 605.5" stroke-width="3"/>
<path d="M1150.6 596.0 L1215.9 615.0" stroke-width="3"/>
<path d="M1145.5 618.3 L1222.8 635.5 L1240.0 647.6" stroke-width="3"/>
<path d="M1222.8 603.8 L1212.4 632.0" stroke-width="3"/>
<path d="M1229.6 605.5 L1226.0 630.0" stroke-width="2.5"/>
<path d="M1280.0 632.0 L1198.7 680.2 L1170.0 705.0" stroke-width="3"/>
<path d="M1267.0 585.7 L1253.7 601.0" stroke-width="2.5"/>
<path d="M1000.0 560.0 L985.0 580.0 L990.0 600.0 L1019.0 589.0" stroke-width="2"/>
<path d="M960.0 667.6 L985.5 697.0" stroke-width="3"/>
<path d="M890.0 540.0 L930.0 600.0 L980.0 640.0" stroke-width="2.5"/>
<path d="M900.0 620.0 L1020.0 650.0" stroke-width="2.5"/>
<path d="M800.0 640.0 L860.0 700.0" stroke-width="2.5"/>
<path d="M753.0 553.0 L833.0 476.0" stroke-width="4"/>
<path d="M900.0 602.6 L817.0 700.0" stroke-width="2.5"/>
<path d="M839.0 523.0 L801.0 574.0 L775.7 618.6" stroke-width="2.5"/>
<path d="M1250.0 470.0 L1280.0 500.0" stroke-width="3"/>
<path d="M1180.0 470.0 L1200.0 520.0 L1190.0 552.0" stroke-width="2.5"/>
<path d="M1126.0 532.0 L1110.0 490.0 L1130.0 470.0" stroke-width="2.5"/>
<circle cx="477.3" cy="478" r="5" stroke-width="2.5"/><circle cx="479" cy="619.5" r="5.5" stroke-width="2.5"/>
</g>
</g><g filter="url(#soft3)">
<g fill="#acadb1" font-family="Liberation Sans" letter-spacing=".4"><text x="336" y="262" font-size="9.5" font-weight="normal" transform="rotate(-65 336 262)">Rue Zola</text><text x="452" y="180" font-size="10" font-weight="normal" transform="rotate(38 452 180)">Rue de la Liberté</text><text x="518" y="250" font-size="10" font-weight="normal" transform="rotate(-62 518 250)">Rue Pierre Tourte</text><text x="458" y="398" font-size="10" font-weight="normal" transform="rotate(-66 458 398)">Rue de la Paix</text><text x="340" y="377" font-size="10" font-weight="normal" transform="rotate(16 340 377)">Rue du Val Notre-Dame</text><text x="357" y="437" font-size="10" font-weight="normal" transform="rotate(28 357 437)">Rue Pierre Semard</text><text x="1033" y="533" font-size="13.5" font-weight="normal" stroke="#acadb1" stroke-width="0.35" transform="rotate(3 1033 533)">Rue Gambetta</text><text x="1198" y="544" font-size="10" font-weight="bold" fill="#b5b6ba" transform="rotate(0 1198 544)">PARC D</text><text x="1097" y="556" font-size="9.5" font-weight="normal" transform="rotate(35 1097 556)">Rue Tellerie</text><text x="1213" y="569" font-size="9.5" font-weight="normal" transform="rotate(16 1213 569)">Rue de la Sangle</text><text x="1076" y="595" font-size="9.5" font-weight="normal" transform="rotate(36 1076 595)">Rue des Pèlerins</text><text x="1028" y="667" font-size="9.5" font-weight="normal" transform="rotate(-60 1028 667)">Rue l'Évêque</text><text x="840" y="507" font-size="11" font-weight="normal" transform="rotate(63 840 507)">Rue de Lorraine</text><text x="800" y="605" font-size="9.5" font-weight="normal" transform="rotate(37 800 605)">Rue du Lavoir</text><text x="760" y="643" font-size="9.5" font-weight="normal" transform="rotate(-55 760 643)">Rue de Champagne</text><text x="845" y="665" font-size="9.5" font-weight="normal" transform="rotate(-50 845 665)">Rue de la Somme</text><text x="922" y="600" font-size="9.5" font-weight="normal" transform="rotate(-70 922 600)">Rue de Metz</text><text x="1228" y="672" font-size="9.5" font-weight="normal" transform="rotate(-30 1228 672)">Rue des Martraits</text><text x="1070" y="705" font-size="9.5" font-weight="normal" transform="rotate(-15 1070 705)">Rue de l'Yser</text><text x="962" y="676" font-size="11" font-weight="normal" transform="rotate(60 962 676)">Rue</text><text x="642" y="230" font-size="9.5" font-weight="normal" transform="rotate(49 642 230)">Rue de Cassecourt</text><text x="712" y="335" font-size="9.5" font-weight="normal" transform="rotate(-50 712 335)">Rue Denfert Rochereau</text><text x="618" y="340" font-size="9.5" font-weight="normal" transform="rotate(22 618 340)">Rue du Clos Scellier</text><text x="718" y="338" font-size="9.5" font-weight="normal" transform="rotate(58 718 338)">Rue de Cassecourt</text><text x="852" y="211" font-size="9.5" font-weight="normal" transform="rotate(34 852 211)">Rue des Écoles</text><text x="984" y="268" font-size="9.5" font-weight="normal" transform="rotate(-70 984 268)">Rue Castor</text><text x="933" y="372" font-size="9.5" font-weight="normal" transform="rotate(-62 933 372)">Rue Castor</text><text x="1016" y="262" font-size="9.5" font-weight="normal" transform="rotate(-52 1016 262)">Rue Montfort</text><text x="958" y="368" font-size="9.5" font-weight="normal" transform="rotate(-58 958 368)">Rue Saint Roch</text><text x="1072" y="280" font-size="9.5" font-weight="normal" transform="rotate(-52 1072 280)">Rue de la Brasserie Saint-K</text><text x="1163" y="213" font-size="11" font-weight="normal" transform="rotate(62 1163 213)">Quai de la Tour</text><text x="1085" y="298" font-size="9.5" font-weight="normal" transform="rotate(30 1085 298)">Rue Henri Clérisse</text><text x="1066" y="400" font-size="9.5" font-weight="normal" transform="rotate(-68 1066 400)">Rue de la Cave Vigne</text><text x="1100" y="390" font-size="9.5" font-weight="normal" transform="rotate(-80 1100 390)">Rue Baudin</text><text x="1049" y="496" font-size="12" font-weight="normal" stroke="#acadb1" stroke-width="0.35" transform="rotate(-28 1049 496)">Rue Nationale</text><text x="966" y="417" font-size="9.5" font-weight="normal" transform="rotate(15 966 417)">Rue du Vieux Pilori</text><text x="560" y="452" font-size="9.5" font-weight="normal" transform="rotate(23 560 452)">Rue de la Croix Blanche</text><text x="548" y="510" font-size="9.5" font-weight="normal" transform="rotate(-5 548 510)">Ave. President Franklin Roosevelt</text><text x="558" y="560" font-size="9.5" font-weight="normal" transform="rotate(35 558 560)">Blvd Carnot</text><text x="630" y="552" font-size="9.5" font-weight="normal" transform="rotate(-75 630 552)">Rue de Belfort</text><text x="528" y="470" font-size="9.5" font-weight="normal" transform="rotate(-70 528 470)">Rue Planty - Rue Planty</text><text x="445" y="722" font-size="9.5" font-weight="normal" transform="rotate(-20 445 722)">Rue Charles Péguy</text><text x="700" y="421" font-size="11.5" font-weight="normal" transform="rotate(22 700 421)">Blvd du Maréchal</text><text x="787" y="458" font-size="11.5" font-weight="normal" transform="rotate(22 787 458)">al Juin</text><text x="808" y="320" font-size="9.5" font-weight="normal" transform="rotate(22 808 320)">Rue d'Alsace</text><text x="698" y="193" font-size="9.5" font-weight="normal" transform="rotate(22 698 193)">Rue Michelot</text></g>
</g>
<polygon points="604.0,203.0 944.0,203.0 993.0,274.0 1060.0,203.0 1280.0,203.0 1280.0,378.0 879.0,582.0 833.0,476.0 753.0,553.0 820.0,585.0 776.0,699.0 346.5,699.0 381.0,616.0 415.0,533.0 437.0,477.0 451.5,428.8 463.0,395.0 477.8,368.0 506.0,329.0 530.0,298.0 555.0,267.0 574.0,246.5 590.0,224.0" fill="#fbda80" fill-opacity="0.5"/>
<polygon points="1172.0,203.0 1280.0,203.0 1280.0,373.0" fill="#9a9060" fill-opacity="0.22"/>
<!--LABELS--><!--MARKERS--><circle cx="652" cy="311.7" r="19.8" fill="#f1c980"/><circle cx="652" cy="311.7" r="9.6" fill="#e8870e"/><text x="652" y="315.3" text-anchor="middle" font-size="10" font-weight="bold" fill="#fff" font-family="Liberation Sans">2</text><circle cx="561.8" cy="422.7" r="19.6" fill="#eea595"/><circle cx="561.8" cy="422.7" r="9.8" fill="#e0303f"/><text x="561.8" y="426.3" text-anchor="middle" font-size="10" font-weight="bold" fill="#fff" font-family="Liberation Sans">2</text><circle cx="651.9" cy="589" r="19.9" fill="#aaa188"/><circle cx="651.9" cy="589" r="10.3" fill="#263042"/><text x="651.9" y="592.6" text-anchor="middle" font-size="10" font-weight="bold" fill="#fff" font-family="Liberation Sans">2</text><circle cx="724.9" cy="271.8" r="19.8" fill="#aca58c"/><circle cx="724.9" cy="271.8" r="15.2" fill="#2a3447"/><path d="M720.5 266 L715 273.5 L718.8 273.5 L716 279 L723.2 270.8 L719.4 270.8 L722 266 Z" fill="#fff"/><text x="732" y="276.6" text-anchor="middle" font-size="10.5" font-weight="bold" fill="#fff" font-family="Liberation Sans">2</text><circle cx="796" cy="349" r="19.6" fill="#b3a988"/><circle cx="796" cy="349" r="16.4" fill="none" stroke="#f1e6c3" stroke-width="1.8"/><g fill="#f4ead0" stroke="#f4ead0" stroke-width="1.6"><path d="M796 339.4 L806.3 356.6 L785.7 356.6 Z" stroke-linejoin="round"/></g><rect x="817.3" y="333.2" width="97.3" height="13.6" rx="2" fill="#b6ab8b"/><rect x="817.3" y="348.4" width="57.4" height="16.4" rx="2" fill="#b6ab8b"/><text x="822.3" y="344.2" font-size="11" font-weight="bold" fill="#f3ead2" font-family="Liberation Sans">Information data</text><text x="819.8" y="362" font-size="15.5" font-weight="bold" fill="#f3ead2" font-family="Liberation Sans">35</text><path d="M847.5 360.5 L855 353 M849.5 353 L855 353 L855 358.5" fill="none" stroke="#f3ead2" stroke-width="1.2"/><circle cx="715" cy="450.8" r="19.6" fill="#2a323d"/><circle cx="715" cy="450.8" r="16.4" fill="none" stroke="#ffffff" stroke-width="1.8"/><g fill="#ffffff" stroke="#ffffff" stroke-width="1.6"><path d="M715 441.2 L725.3 458.40000000000003 L704.7 458.40000000000003 Z" stroke-linejoin="round"/></g><rect x="736.3" y="435.0" width="97.3" height="13.6" rx="2" fill="#2a323d"/><rect x="736.3" y="450.2" width="57.4" height="16.4" rx="2" fill="#2a323d"/><text x="741.3" y="446.0" font-size="11" font-weight="bold" fill="#ffffff" font-family="Liberation Sans">Information data</text><text x="738.8" y="463.8" font-size="15.5" font-weight="bold" fill="#ffffff" font-family="Liberation Sans">35</text><path d="M766.5 462.3 L774 454.8 M768.5 454.8 L774 454.8 L774 460.3" fill="none" stroke="#ffffff" stroke-width="1.2"/><circle cx="991.5" cy="293.5" r="19.6" fill="#2a323d"/><path d="M992.92 277.26 A16.3 16.3 0 1 1 976.73 300.39" fill="none" stroke="#ffffff" stroke-width="1.8"/><path d="M975.76 297.72 A16.3 16.3 0 0 1 975.40 296.05" fill="none" stroke="#ffffff" stroke-width="1.8"/><path d="M975.20 293.50 A16.3 16.3 0 0 1 975.29 291.80" fill="none" stroke="#ffffff" stroke-width="1.8"/><path d="M975.76 289.28 A16.3 16.3 0 0 1 976.28 287.66" fill="none" stroke="#ffffff" stroke-width="1.8"/><path d="M977.38 285.35 A16.3 16.3 0 0 1 978.31 283.92" fill="none" stroke="#ffffff" stroke-width="1.8"/><path d="M979.97 281.97 A16.3 16.3 0 0 1 981.24 280.83" fill="none" stroke="#ffffff" stroke-width="1.8"/><path d="M983.35 279.38 A16.3 16.3 0 0 1 984.87 278.61" fill="none" stroke="#ffffff" stroke-width="1.8"/><path d="M987.28 277.76 A16.3 16.3 0 0 1 988.95 277.40" fill="none" stroke="#ffffff" stroke-width="1.8"/><g fill="#ffffff" stroke="#ffffff" stroke-width="1.6"><path d="M991.5 283.9 L1001.8 301.1 L981.2 301.1 Z" stroke-linejoin="round"/></g><rect x="1012.8" y="277.7" width="97.3" height="13.6" rx="2" fill="#2a323d"/><rect x="1012.8" y="292.9" width="57.4" height="16.4" rx="2" fill="#2a323d"/><text x="1017.8" y="288.7" font-size="11" font-weight="bold" fill="#ffffff" font-family="Liberation Sans">Information data</text><text x="1015.3" y="306.5" font-size="15.5" font-weight="bold" fill="#ffffff" font-family="Liberation Sans">35</text><path d="M1043.0 305.0 L1050.5 297.5 M1045.0 297.5 L1050.5 297.5 L1050.5 303.0" fill="none" stroke="#ffffff" stroke-width="1.2"/><circle cx="991.5" cy="410.5" r="19.6" fill="#2a323d"/><path d="M992.92 394.26 A16.3 16.3 0 1 1 976.73 417.39" fill="none" stroke="#ffffff" stroke-width="1.8"/><path d="M975.76 414.72 A16.3 16.3 0 0 1 975.40 413.05" fill="none" stroke="#ffffff" stroke-width="1.8"/><path d="M975.20 410.50 A16.3 16.3 0 0 1 975.29 408.80" fill="none" stroke="#ffffff" stroke-width="1.8"/><path d="M975.76 406.28 A16.3 16.3 0 0 1 976.28 404.66" fill="none" stroke="#ffffff" stroke-width="1.8"/><path d="M977.38 402.35 A16.3 16.3 0 0 1 978.31 400.92" fill="none" stroke="#ffffff" stroke-width="1.8"/><path d="M979.97 398.97 A16.3 16.3 0 0 1 981.24 397.83" fill="none" stroke="#ffffff" stroke-width="1.8"/><path d="M983.35 396.38 A16.3 16.3 0 0 1 984.87 395.61" fill="none" stroke="#ffffff" stroke-width="1.8"/><path d="M987.28 394.76 A16.3 16.3 0 0 1 988.95 394.40" fill="none" stroke="#ffffff" stroke-width="1.8"/><g fill="#ffffff" stroke="#ffffff" stroke-width="1.6"><path d="M991.5 400.9 L1001.8 418.1 L981.2 418.1 Z" stroke-linejoin="round"/></g><rect x="1012.8" y="394.7" width="97.3" height="13.6" rx="2" fill="#2a323d"/><rect x="1012.8" y="409.9" width="57.4" height="16.4" rx="2" fill="#2a323d"/><text x="1017.8" y="405.7" font-size="11" font-weight="bold" fill="#ffffff" font-family="Liberation Sans">Information data</text><text x="1015.3" y="423.5" font-size="15.5" font-weight="bold" fill="#ffffff" font-family="Liberation Sans">35</text><path d="M1043.0 422.0 L1050.5 414.5 M1045.0 414.5 L1050.5 414.5 L1050.5 420.0" fill="none" stroke="#ffffff" stroke-width="1.2"/><circle cx="1240.3" cy="308.3" r="19.6" fill="#6b70d8"/><path d="M1241.72 292.06 A16.3 16.3 0 1 1 1225.53 315.19" fill="none" stroke="#d9daf6" stroke-width="1.8"/><path d="M1224.56 312.52 A16.3 16.3 0 0 1 1224.20 310.85" fill="none" stroke="#d9daf6" stroke-width="1.8"/><path d="M1224.00 308.30 A16.3 16.3 0 0 1 1224.09 306.60" fill="none" stroke="#d9daf6" stroke-width="1.8"/><path d="M1224.56 304.08 A16.3 16.3 0 0 1 1225.08 302.46" fill="none" stroke="#d9daf6" stroke-width="1.8"/><path d="M1226.18 300.15 A16.3 16.3 0 0 1 1227.11 298.72" fill="none" stroke="#d9daf6" stroke-width="1.8"/><path d="M1228.77 296.77 A16.3 16.3 0 0 1 1230.04 295.63" fill="none" stroke="#d9daf6" stroke-width="1.8"/><path d="M1232.15 294.18 A16.3 16.3 0 0 1 1233.67 293.41" fill="none" stroke="#d9daf6" stroke-width="1.8"/><path d="M1236.08 292.56 A16.3 16.3 0 0 1 1237.75 292.20" fill="none" stroke="#d9daf6" stroke-width="1.8"/><g fill="#ffffff" stroke="#ffffff" stroke-width="1.6"><path d="M1240.3 298.7 L1250.6 315.90000000000003 L1230.0 315.90000000000003 Z" stroke-linejoin="round"/></g><rect x="1261.6" y="292.5" width="97.3" height="13.6" rx="2" fill="#2a323d"/><rect x="1261.6" y="307.7" width="57.4" height="16.4" rx="2" fill="#2a323d"/><text x="1266.6" y="303.5" font-size="11" font-weight="bold" fill="#ffffff" font-family="Liberation Sans">Information data</text><text x="1264.1" y="321.3" font-size="15.5" font-weight="bold" fill="#ffffff" font-family="Liberation Sans">35</text><path d="M1291.8 319.8 L1299.3 312.3 M1293.8 312.3 L1299.3 312.3 L1299.3 317.8" fill="none" stroke="#ffffff" stroke-width="1.2"/><rect x="1258.5" y="211" width="40" height="26.5" rx="3" fill="#5f6878"/><text x="1264" y="229" font-size="12" font-weight="bold" fill="#fff" font-family="Liberation Sans">Ma</text><rect x="352" y="221" width="25" height="25" rx="2" fill="#7b9bc9"/><rect x="352" y="247" width="25" height="25" rx="2" fill="#7b9bc9"/><path d="M360.5 233.5 L368.5 233.5 M364.5 229.5 L364.5 237.5 M360.5 259.8 L368.5 259.8" stroke="#fff" stroke-width="2.2"/>
</svg></div><!--/MAP-->
  <div class="abs" style="left:17px;top:612px;width:960px;height:110px;background:#fff"></div>
  <div class="abs kc" style="left:33px"></div>
  <div class="abs kc" style="left:298px"></div>
  <div class="abs kc" style="left:564px"></div>
  <div class="abs kc" style="left:830px"></div>
  <div class="t kl" style="left:48px">KPI Data label</div>
  <div class="t kv" style="left:48px">33%</div>
  <div class="t kl" style="left:314px">KPI Data label</div>
  <div class="t kv" style="left:314px">48%</div>
  <div class="t kl" style="left:580px">KPI Data label</div>
  <div class="t kv" style="left:580px">118</div>
  <div class="t kl" style="left:846px">KPI Data label</div>
  <div class="t kv" style="left:846px">8,4 m³/h</div>
  <svg class="abs" style="left:0;top:612px" width="962" height="100" viewBox="318 715 962 100">
    <g fill="#222">
      <circle cx="581.4" cy="751.5" r="1.9"/><circle cx="581.4" cy="758.6" r="1.9"/><circle cx="581.4" cy="765.7" r="1.9"/>
      <circle cx="847" cy="751.5" r="1.9"/><circle cx="847" cy="758.6" r="1.9"/><circle cx="847" cy="765.7" r="1.9"/>
      <circle cx="1113" cy="751.5" r="1.9"/><circle cx="1113" cy="758.6" r="1.9"/><circle cx="1113" cy="765.7" r="1.9"/>
    </g>
    <polyline points="490.6,793.7 492.2,789.6 493.9,785.7 495.5,781.5 497.1,781.5 498.8,779.3 500.4,778.7 501.7,775.3 503.0,774.2 504.3,772.9 506.2,776.2 508.2,781.6 509.8,780.8 511.4,781.9 513.0,781.6 514.4,781.3 515.8,778.6 517.2,776.8 518.6,775.3 520.0,774.8 521.5,779.2 522.9,781.5 524.4,782.2 525.8,787.6 527.2,789.3 528.7,792.0 530.1,787.8 531.4,783.8 532.8,780.6 534.1,775.5 535.5,772.7 536.9,776.6 538.3,778.1 539.6,780.0 541.0,783.6 542.4,786.0 543.9,786.1 545.3,786.8 546.8,788.7 548.2,789.1 549.7,788.7 551.2,786.5 552.6,784.4 554.1,782.8 555.6,785.7 557.0,789.0 558.5,791.7 560.0,795.4 561.5,795.5 562.9,795.8 564.3,796.9 565.8,795.7" fill="none" stroke="#6ea4df" stroke-width="2.1" stroke-linejoin="round"/><polyline points="756.3,783.4 757.8,784.0 759.2,784.0 760.7,784.4 762.2,784.5 763.8,787.5 765.3,791.7 766.9,796.2 768.5,791.9 770.0,792.2 771.6,787.6 773.2,789.4 774.7,791.2 776.3,790.0 777.8,791.9 779.4,793.0 780.9,793.2 782.5,797.1 784.0,799.8 785.6,805.1 787.2,803.2 788.7,800.6 790.3,798.2 792.7,788.4 794.2,790.6 795.8,792.1 797.3,795.9 798.9,798.0 800.5,800.7 802.0,803.4 803.4,802.3 804.8,800.4 806.1,797.2 807.5,794.0 809.1,795.7 810.6,795.8 812.2,797.5 813.6,801.2 815.0,803.7 816.3,803.9 817.7,807.9 819.7,802.9 821.6,799.1 823.2,797.8 824.7,797.0 826.3,797.1 827.6,794.5 829.0,791.1 830.4,789.0 831.7,784.9" fill="none" stroke="#6ea4df" stroke-width="2.1" stroke-linejoin="round"/><polyline points="1022.3,785.3 1023.7,788.4 1025.2,791.3 1026.6,797.0 1028.0,797.8 1029.3,797.4 1030.7,799.1 1032.1,800.4 1033.5,802.3 1035.0,804.6 1036.4,807.1 1037.8,802.8 1039.3,801.2 1040.7,797.1 1042.1,798.1 1043.5,797.7 1044.8,795.1 1046.2,795.9 1047.7,800.0 1049.3,801.4 1050.8,805.3 1052.2,802.7 1053.5,802.6 1054.9,800.4 1056.3,800.0 1058.0,794.7 1059.7,792.8 1061.4,789.2 1062.7,791.9 1064.0,795.6 1065.4,799.1 1066.7,801.9 1068.0,806.0 1069.4,802.3 1070.8,798.7 1072.1,795.9 1073.5,793.3 1074.8,792.8 1076.1,792.2 1077.4,791.5 1078.8,790.8 1080.2,789.8 1081.5,789.2 1082.9,788.5 1084.3,792.0 1085.8,794.4 1087.2,796.8 1088.6,792.3 1090.1,789.6 1091.5,784.9 1093.0,784.0 1094.6,783.6 1096.2,784.8 1097.7,783.4" fill="none" stroke="#6ea4df" stroke-width="2.1" stroke-linejoin="round"/>
  </svg>
</div>
</body></html>
